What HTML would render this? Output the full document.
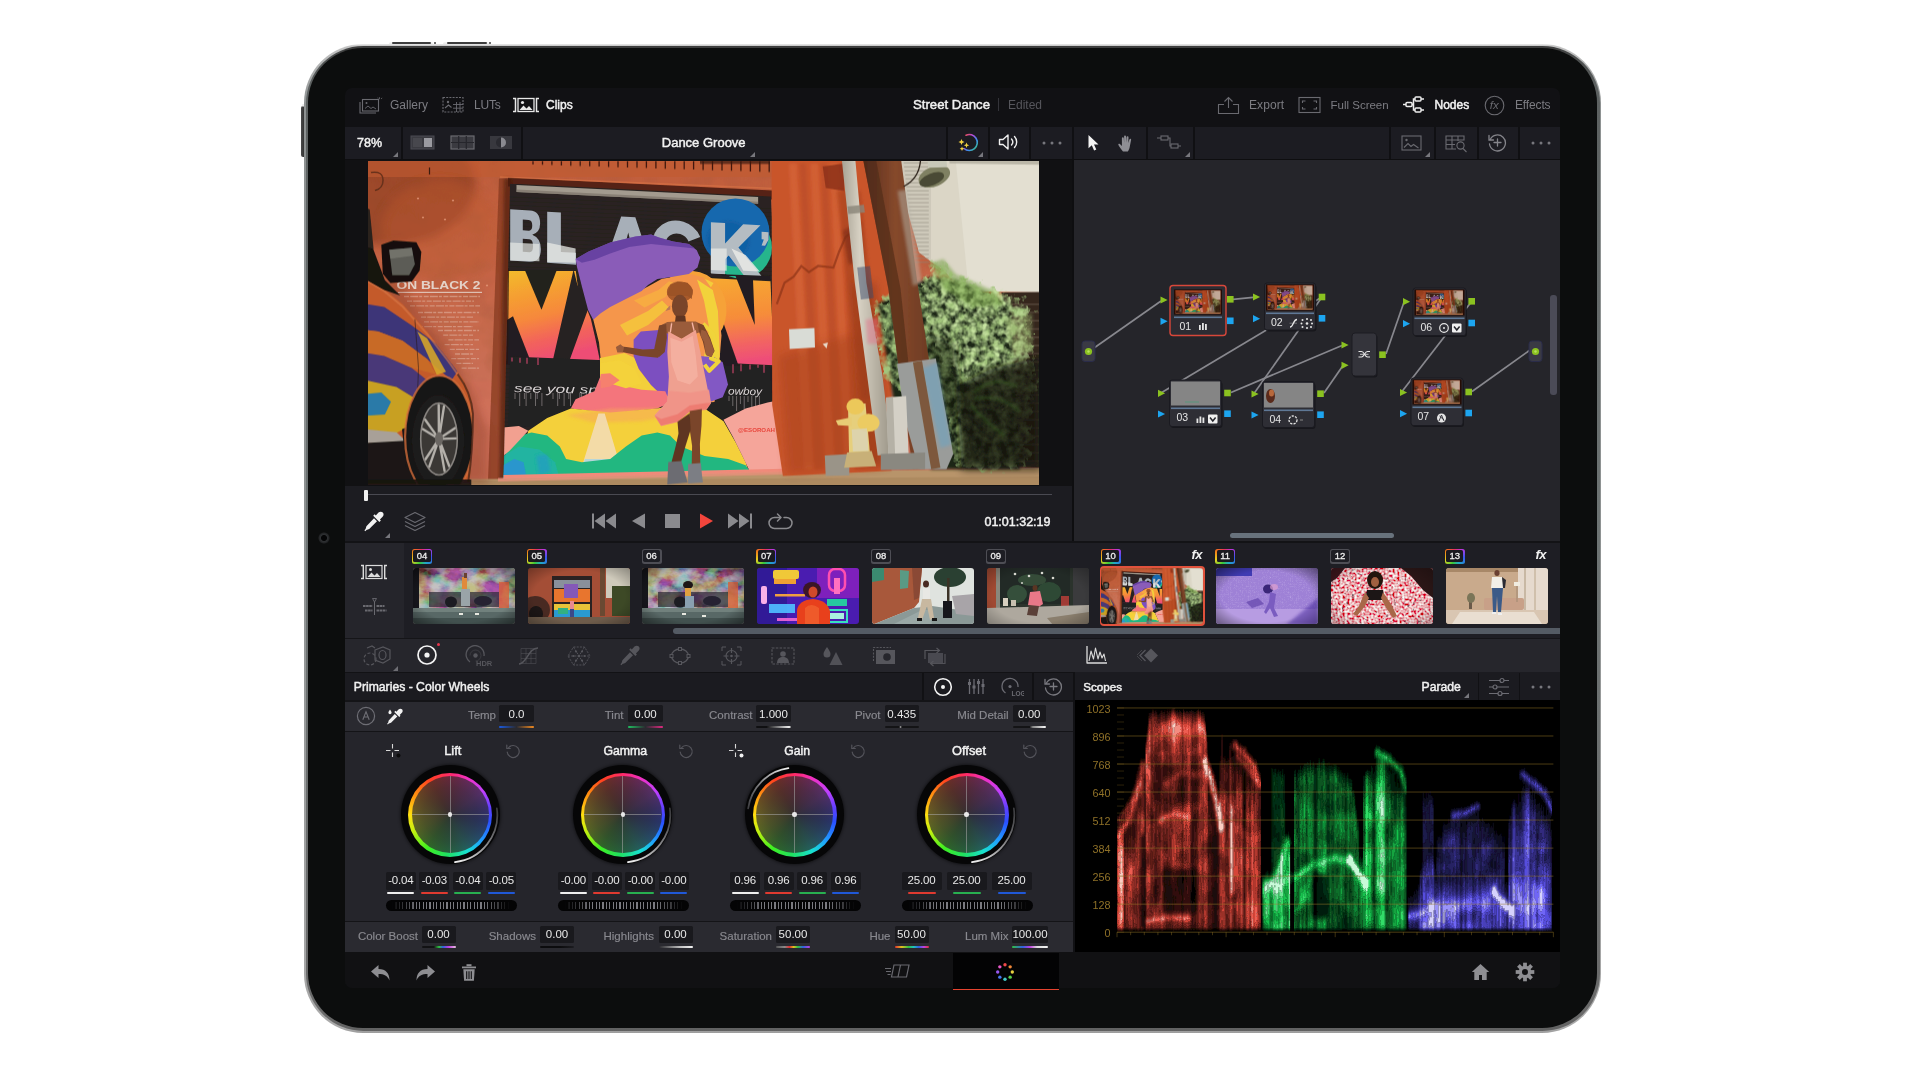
<!DOCTYPE html>
<html><head><meta charset="utf-8"><title>DaVinci Resolve for iPad</title>
<style>
html,body{margin:0;padding:0;background:#fff;}
body{width:1920px;height:1080px;position:relative;overflow:hidden;font-family:"Liberation Sans", sans-serif;}
#root div,#root svg{position:absolute;}
#root{position:absolute;left:0;top:0;width:1920px;height:1080px;overflow:hidden;will-change:transform;}
.t{font-family:"Liberation Sans", sans-serif;}
</style></head><body><div id="root">
<div style="left:389px;top:41.6px;width:44px;height:3.5px;background:linear-gradient(#f4f4f4,#e2e2e2);border-radius:2px 2px 0 0;"></div>
<div style="left:391.5px;top:42.1px;width:39px;height:1.7px;background:#3e3e3e;border-radius:1px;"></div>
<div style="left:433.6px;top:42px;width:2.4px;height:2.2px;background:#3e3e3e;border-radius:1px;"></div>
<div style="left:443px;top:41.6px;width:46px;height:3.5px;background:linear-gradient(#f4f4f4,#e2e2e2);border-radius:2px 2px 0 0;"></div>
<div style="left:446.5px;top:42.1px;width:40px;height:1.7px;background:#3e3e3e;border-radius:1px;"></div>
<div style="left:489px;top:42px;width:2.4px;height:2.2px;background:#3e3e3e;border-radius:1px;"></div>
<div style="left:301px;top:106px;width:4px;height:51px;background:linear-gradient(90deg,#4a4a4a,#2e2e2e);border-radius:2px 0 0 2px;"></div>
<div style="left:301.5px;top:103.5px;width:3px;height:3px;background:#ddd;border-radius:1px;opacity:.6;"></div>
<div style="left:304px;top:44px;width:1297.2px;height:989px;background:linear-gradient(180deg,#ececec 0%,#c4c4c4 0.2%,#8e9292 6%,#8e9292 50%,#aaaaaa 99.5%,#9c9c9c 100%);border-radius:59px;"></div>
<div style="left:305.5px;top:46px;width:1294.2px;height:985px;background:linear-gradient(180deg,#3c3c3c 0%,#4a4c4c 1%,#5c6060 4%,#6e7474 50%,#6a6a6a 98%,#606060 100%);border-radius:57.500px;"></div>
<div style="left:308px;top:48.3px;width:1288.7px;height:979.7px;background:#0c0d0d;border-radius:55px;"></div>
<div style="left:317.8px;top:531.8px;width:12px;height:12px;background:radial-gradient(circle,#050506 30%,#2e3032 42%,#232426 58%,#0c0d0d 72%);border-radius:6px;"></div>
<div style="left:345px;top:88px;width:1214.5px;height:900px;background:#111114;border-radius:7px;"></div>
<svg style="left:359px;top:95.5px;" width="24" height="18" viewBox="0 0 24 18"><g fill="none" stroke="#6a6a70" stroke-width="1.1"><rect x="3.5" y="3.5" width="16" height="11.5"/><path d="M1 6v11h16"/><circle cx="7.5" cy="7" r="1" fill="#6a6a70" stroke="none"/><path d="M6 12.5l3-2.5 3 2.5 2-1.5 3 2" stroke-width="0.9"/><path d="M20.5 1.2v2M22 2.8l1.2-.8M18.8 1.6l.4 1" stroke-width="0.8"/></g></svg>
<div class="t" style="top:97.00px;font-size:12px;color:#7c7c82;line-height:16px;white-space:pre;left:390px;">Gallery</div>
<svg style="left:442px;top:96px;" width="23" height="18" viewBox="0 0 23 18"><g fill="none" stroke="#6a6a70" stroke-width="1.1"><rect x="1" y="1.5" width="20" height="14.5" stroke-dasharray="2 1.2"/><circle cx="6" cy="6" r="1.2" fill="#6a6a70" stroke="none"/><path d="M3 12l3.5-3 3 2.5"/><path d="M11 8.5h10M11 12.2h10M14.5 6v10M18 6v10" stroke-width="0.9"/></g></svg>
<div class="t" style="top:97.00px;font-size:12px;color:#7c7c82;line-height:16px;white-space:pre;letter-spacing:-0.2px;left:474px;">LUTs</div>
<svg style="left:512px;top:96px;" width="28" height="18" viewBox="0 0 28 18"><g fill="none" stroke="#e8e8e8" stroke-width="1.5"><path d="M1 2.5h2.5v13H1M27 2.5h-2.5v13H27"/><rect x="6" y="2.5" width="16" height="13" stroke-width="1.3"/></g><circle cx="10.5" cy="6.5" r="1.6" fill="#e8e8e8"/><path d="M7.5 14l4-4.5 3 3 2.5-2.5 3.5 4z" fill="#e8e8e8"/></svg>
<div class="t" style="top:97.00px;font-size:12px;color:#f2f2f2;line-height:16px;white-space:pre;-webkit-text-stroke:0.45px #f2f2f2;left:546px;">Clips</div>
<div class="t" style="top:97.00px;font-size:13.2px;color:#f2f2f2;line-height:16px;white-space:pre;-webkit-text-stroke:0.45px #f2f2f2;left:851.5px;width:200px;text-align:center;">Street Dance</div>
<div style="left:998px;top:98px;width:1px;height:13px;background:#34343a;"></div>
<div class="t" style="top:97.00px;font-size:12px;color:#56565c;line-height:16px;white-space:pre;left:1008px;">Edited</div>
<svg style="left:1217px;top:95.5px;" width="23" height="19" viewBox="0 0 23 19"><g fill="none" stroke="#6a6a70" stroke-width="1.1"><path d="M7 8.5H1.5v9h20v-9H16"/><path d="M11.5 12V2M7.5 5.5l4-4 4 4"/></g></svg>
<div class="t" style="top:97.00px;font-size:12px;color:#7c7c82;line-height:16px;white-space:pre;letter-spacing:0.1px;left:1249px;">Export</div>
<svg style="left:1298px;top:96px;" width="23" height="18" viewBox="0 0 23 18"><g fill="none" stroke="#6a6a70" stroke-width="1.1"><rect x="1" y="1.5" width="21" height="15"/><path d="M4.5 7V5h3M18.5 7V5h-3M4.5 11v2h3M18.5 11v2h-3"/></g></svg>
<div class="t" style="top:97.00px;font-size:11.5px;color:#7c7c82;line-height:16px;white-space:pre;left:1330.5px;">Full Screen</div>
<svg style="left:1402px;top:95px;" width="24" height="19" viewBox="0 0 24 19"><g fill="none" stroke="#ececec" stroke-width="1.5"><rect x="4" y="7.5" width="6" height="4" rx="1"/><rect x="13" y="2" width="6" height="4" rx="1"/><rect x="13" y="13" width="6" height="4" rx="1"/><path d="M1 9.5h3M10 9.5h1.5V4H13M11.5 9.5V15H13M19 4h3M19 15h3"/></g></svg>
<div class="t" style="top:97.00px;font-size:12px;color:#f2f2f2;line-height:16px;white-space:pre;-webkit-text-stroke:0.5px #f2f2f2;left:1434.5px;">Nodes</div>
<svg style="left:1484px;top:94.5px;" width="21" height="21" viewBox="0 0 21 21"><circle cx="10.5" cy="10.5" r="9.3" fill="none" stroke="#6a6a70" stroke-width="1.1"/><text x="10.200" y="14.300" text-anchor="middle" font-family="Liberation Sans" font-style="italic" font-size="11.500" fill="#6a6a70">fx</text></svg>
<div class="t" style="top:97.00px;font-size:12px;color:#7c7c82;line-height:16px;white-space:pre;letter-spacing:-0.15px;left:1515px;">Effects</div>
<div style="left:345px;top:126.5px;width:1214.5px;height:33px;background:#1c1c22;"></div>
<div style="left:401px;top:126.5px;width:2px;height:33px;background:#101013;"></div>
<div style="left:521px;top:126.5px;width:2px;height:33px;background:#101013;"></div>
<div style="left:946px;top:126.5px;width:2px;height:33px;background:#101013;"></div>
<div style="left:988px;top:126.5px;width:2px;height:33px;background:#101013;"></div>
<div style="left:1029px;top:126.5px;width:2px;height:33px;background:#101013;"></div>
<div style="left:1071.5px;top:126.5px;width:2px;height:33px;background:#101013;"></div>
<div style="left:1146px;top:126.5px;width:2px;height:33px;background:#101013;"></div>
<div style="left:1193px;top:126.5px;width:2px;height:33px;background:#101013;"></div>
<div style="left:1389px;top:126.5px;width:2px;height:33px;background:#101013;"></div>
<div style="left:1434px;top:126.5px;width:2px;height:33px;background:#101013;"></div>
<div style="left:1476.5px;top:126.5px;width:2px;height:33px;background:#101013;"></div>
<div style="left:1518px;top:126.5px;width:2px;height:33px;background:#101013;"></div>
<div style="left:345px;top:158.5px;width:1214.5px;height:1.5px;background:#0e0e10;"></div>
<div class="t" style="top:134.50px;font-size:12.5px;color:#f2f2f2;line-height:16px;white-space:pre;-webkit-text-stroke:0.45px #f2f2f2;left:357px;">78%</div>
<svg style="left:392.5px;top:151.5px;" width="5" height="5" viewBox="0 0 5 5"><path d="M5 0v5H0z" fill="#77777d"/></svg>
<svg style="left:410px;top:134px;" width="26" height="17" viewBox="0 0 26 17"><rect x="1" y="2" width="23" height="13" fill="#3a3a40" stroke="#4b4b52" stroke-width="1"/><rect x="3" y="4" width="9" height="9" fill="#47474d"/><rect x="14" y="4" width="8" height="9" fill="#9a9aa0"/></svg>
<svg style="left:450px;top:134px;" width="26" height="17" viewBox="0 0 26 17"><rect x="1" y="2" width="23" height="13" fill="#3a3a40" stroke="#6a6a70" stroke-width="1.2"/><path d="M1 8.5h23M8.7 2v13M16.3 2v13" stroke="#26262c" stroke-width="1.2"/></svg>
<svg style="left:489px;top:134px;" width="25" height="17" viewBox="0 0 25 17"><rect x="1" y="2" width="22" height="13" fill="#38383e"/><path d="M12 3.5a5 5 0 0 1 0 10z" fill="#8a8a90"/><path d="M12 3.5a5 5 0 0 0 0 10z" fill="#2a2a30"/></svg>
<div class="t" style="top:134.50px;font-size:13px;color:#f2f2f2;line-height:16px;white-space:pre;-webkit-text-stroke:0.45px #f2f2f2;left:603.7px;width:200px;text-align:center;">Dance Groove</div>
<svg style="left:750px;top:151.5px;" width="5" height="5" viewBox="0 0 5 5"><path d="M5 0v5H0z" fill="#77777d"/></svg>
<svg style="left:957px;top:131px;" width="24" height="23" viewBox="0 0 24 23"><defs><linearGradient id="cg" x1="0" y1="0" x2="1" y2="1"><stop offset="0" stop-color="#f0503c"/><stop offset=".35" stop-color="#b44be0"/><stop offset=".65" stop-color="#3c8cf0"/><stop offset="1" stop-color="#3cd070"/></linearGradient></defs>
<path d="M9 4.2A8 8 0 1 1 7 17.5" fill="none" stroke="url(#cg)" stroke-width="1.6" stroke-linecap="round"/>
<path d="M4.5 8l.9 2.1 2.1.9-2.1.9-.9 2.1-.9-2.1-2.1-.9 2.1-.9z" fill="#f4d240"/><path d="M9.5 11.5l.8 1.9 1.9.8-1.9.8-.8 1.9-.8-1.9-1.9-.8 1.9-.8z" fill="#f4d240"/><path d="M5 15.5l.7 1.6 1.6.7-1.6.7-.7 1.6-.7-1.6-1.6-.7 1.6-.7z" fill="#f4d240"/></svg>
<svg style="left:978px;top:151.5px;" width="5" height="5" viewBox="0 0 5 5"><path d="M5 0v5H0z" fill="#77777d"/></svg>
<svg style="left:998px;top:133px;" width="22" height="18" viewBox="0 0 22 18"><g fill="none" stroke="#f0f0f0" stroke-width="1.4" stroke-linejoin="round" stroke-linecap="round"><path d="M1.5 6.5h3.5l5-4.5v14l-5-4.5H1.5z"/><path d="M13.5 6a4.5 4.5 0 0 1 0 6"/><path d="M16.5 3.5a8 8 0 0 1 0 11"/></g></svg>
<svg style="left:1042px;top:140.5px;" width="20" height="4" viewBox="0 0 20 4"><circle cx="2" cy="2" r="1.5" fill="#77777d"/><circle cx="10" cy="2" r="1.5" fill="#77777d"/><circle cx="18" cy="2" r="1.5" fill="#77777d"/></svg>
<svg style="left:1087px;top:134px;" width="13" height="18" viewBox="0 0 13 18"><path d="M1.5 1v13.2l3.3-3 2.3 5.3 2.2-1-2.3-5.1h4.5z" fill="#f4f4f4"/></svg>
<svg style="left:1117px;top:133.5px;" width="20" height="19" viewBox="0 0 20 19"><path d="M6 17.5c-1.5-1.6-3.7-4.6-4.6-6.4-.5-1 .6-1.8 1.5-1.1l2 1.9V4.3c0-1.3 1.8-1.3 1.9 0l.3 4.3V2.4c0-1.3 1.9-1.3 2 0v6.1l.5-5.2c.1-1.3 1.9-1.2 1.9.1l-.2 5.6 1.1-3.5c.4-1.2 2-.7 1.7.5l-1.3 6.5c-.3 2-1 3.700-2 5z" fill="#8e8e94"/></svg>
<svg style="left:1156px;top:134px;" width="27" height="18" viewBox="0 0 27 18"><g fill="none" stroke="#6a6a70" stroke-width="1.1"><rect x="5" y="2" width="7" height="4"/><rect x="15" y="10" width="7" height="4"/><path d="M1 4h4M12 4h2v8h1M22 12h3"/></g></svg>
<svg style="left:1184.5px;top:151.5px;" width="5" height="5" viewBox="0 0 5 5"><path d="M5 0v5H0z" fill="#77777d"/></svg>
<svg style="left:1401px;top:134.5px;" width="22" height="17" viewBox="0 0 22 17"><g fill="none" stroke="#6a6a70" stroke-width="1.1"><rect x="1" y="1" width="19" height="14"/><circle cx="5.5" cy="5" r="1.2" fill="#6a6a70" stroke="none"/><path d="M3 12.5l4-4 3 3 2.500-2 5 3.500"/></g></svg>
<svg style="left:1424.5px;top:151.5px;" width="5" height="5" viewBox="0 0 5 5"><path d="M5 0v5H0z" fill="#77777d"/></svg>
<svg style="left:1445px;top:134.5px;" width="24" height="18" viewBox="0 0 24 18"><g fill="none" stroke="#6a6a70" stroke-width="1.1"><path d="M1 1h18v4H1zM1 5v9h10M1 9.500h9M7 1v13M13 1v5"/><circle cx="15.5" cy="10.500" r="3.600"/><path d="M18 13.500l3.500 3.500"/></g></svg>
<svg style="left:1487px;top:133px;" width="21" height="19" viewBox="0 0 21 19"><g fill="none" stroke="#85858b" stroke-width="1.3" stroke-linecap="round"><path d="M3.200 6.500A8 8 0 1 1 2.500 11"/><path d="M2 2.500v4.500h4.500"/><path d="M10.500 6v7M7 9.500h7"/></g></svg>
<svg style="left:1530.5px;top:140.5px;" width="20" height="4" viewBox="0 0 20 4"><circle cx="2" cy="2" r="1.5" fill="#77777d"/><circle cx="10" cy="2" r="1.5" fill="#77777d"/><circle cx="18" cy="2" r="1.5" fill="#77777d"/></svg>
<div style="left:345px;top:159.5px;width:728px;height:327px;background:#111113;"></div>
<div style="left:345px;top:486px;width:728px;height:54.5px;background:#1c1c21;"></div>
<div style="left:365px;top:493.5px;width:687px;height:1.2px;background:#4a4a52;"></div>
<div style="left:364px;top:489.5px;width:4px;height:11px;background:#f0f0f0;border-radius:1px;"></div>
<svg style="left:363px;top:511px;" width="22" height="21" viewBox="0 0 22 21"><g fill="#f2f2f2"><path d="M15.500 1.600c1.300-1.300 3.200-1.200 4.300-.1s1.100 3-.2 4.300l-2.700 2.700 1 1-1.500 1.500-6.200-6.200 1.500-1.500 1.100 1.100z"/><path d="M11 7.300l3 3-7.800 7.800-2.700.9-1.200 1.200-.9-.9 1.200-1.200.8-2.800z"/></g></svg>
<svg style="left:385px;top:533px;" width="5" height="5" viewBox="0 0 5 5"><path d="M5 0v5H0z" fill="#77777d"/></svg>
<svg style="left:403px;top:511px;" width="24" height="20" viewBox="0 0 24 20"><g fill="none" stroke="#6a6a70" stroke-width="1.2" stroke-linejoin="round"><path d="M12 1.500l10 5-10 5-10-5z"/><path d="M2 10.500l10 5 10-5M2 14.500l10 5 10-5"/></g></svg>
<svg style="left:591px;top:513px;" width="26" height="16" viewBox="0 0 26 16"><g fill="#8a8a8e"><rect x="1" y="0.500" width="2" height="15"/><path d="M14 0.500v15L3.500 8zM25 0.500v15L14.500 8z"/></g></svg>
<svg style="left:631px;top:513px;" width="15" height="16" viewBox="0 0 15 16"><path d="M14 0.500v15L1 8z" fill="#8a8a8e"/></svg>
<div style="left:665px;top:514px;width:14.5px;height:14px;background:#8a8a8e;"></div>
<svg style="left:699px;top:513px;" width="15" height="16" viewBox="0 0 15 16"><path d="M1 0.500v15L14 8z" fill="#f2453c"/></svg>
<svg style="left:727px;top:513px;" width="26" height="16" viewBox="0 0 26 16"><g fill="#8a8a8e"><rect x="23" y="0.500" width="2" height="15"/><path d="M12 0.500v15L22.500 8zM1 0.500v15L11.500 8z"/></g></svg>
<svg style="left:768px;top:511.5px;" width="25" height="19" viewBox="0 0 25 19"><g fill="none" stroke="#8a8a8e" stroke-width="1.500" stroke-linecap="round" stroke-linejoin="round"><path d="M16 5.500h2.500a5.500 5.500 0 0 1 0 11h-12a5.500 5.500 0 0 1 0-11H12"/><path d="M9.500 2l3.500 3.500-3.500 3.500"/></g></svg>
<div class="t" style="top:514.00px;font-size:12.5px;color:#f2f2f2;line-height:16px;white-space:pre;-webkit-text-stroke:0.45px #f2f2f2;right:869.5px;text-align:right;">01:01:32:19</div>
<svg style="left:368px;top:160.500px" width="671" height="324" viewBox="368 160.500 671 324"><defs>
<filter id="pb" x="-2%" y="-2%" width="104%" height="104%"><feGaussianBlur stdDeviation="0.55"/></filter>
<filter id="pb2" x="-10%" y="-10%" width="120%" height="120%"><feGaussianBlur stdDeviation="1.6"/></filter>
<filter id="pb4" x="-20%" y="-20%" width="140%" height="140%"><feGaussianBlur stdDeviation="4"/></filter>
<filter id="leaf" x="-10%" y="-10%" width="120%" height="120%"><feTurbulence type="fractalNoise" baseFrequency="0.12" numOctaves="3" seed="4" result="n"/><feColorMatrix in="n" type="matrix" values="0 0 0 0 0.36  0 0 0 0 0.55  0 0 0 0 0.20  0 2.4 0 0 -0.74" result="c"/><feDisplacementMap in="SourceGraphic" in2="n" scale="22" xChannelSelector="R" yChannelSelector="B" result="sg"/><feComposite in="c" in2="sg" operator="in"/></filter>
<filter id="leaf2" x="-10%" y="-10%" width="120%" height="120%"><feTurbulence type="fractalNoise" baseFrequency="0.17" numOctaves="2" seed="9" result="n"/><feColorMatrix in="n" type="matrix" values="0 0 0 0 0.58  0 0 0 0 0.78  0 0 0 0 0.36  0 0 2.6 0 -1.08" result="c"/><feDisplacementMap in="SourceGraphic" in2="n" scale="18" xChannelSelector="G" yChannelSelector="R" result="sg"/><feComposite in="c" in2="sg" operator="in"/></filter>
<filter id="wall" x="0" y="0" width="100%" height="100%"><feTurbulence type="fractalNoise" baseFrequency="0.035 0.05" numOctaves="3" seed="2" result="n"/><feColorMatrix in="n" type="matrix" values="0 0 0 0 0.35  0 0 0 0 0.10  0 0 0 0 0.04  0 0 1.6 0 -0.62" result="c"/><feComposite in="c" in2="SourceGraphic" operator="in"/></filter>
<linearGradient id="wallg" x1="0" y1="0" x2="0" y2="1"><stop offset="0" stop-color="#c15d3b"/><stop offset=".35" stop-color="#c56445"/><stop offset=".55" stop-color="#c96c50"/><stop offset=".8" stop-color="#c9725c"/><stop offset="1" stop-color="#c6735e"/></linearGradient>
<linearGradient id="mong" x1="0" y1="0" x2="0.25" y2="1"><stop offset="0" stop-color="#f2bc2c"/><stop offset=".25" stop-color="#f5a230"/><stop offset=".55" stop-color="#f6883c"/><stop offset=".8" stop-color="#f2625c"/><stop offset="1" stop-color="#ee4e74"/></linearGradient>
<linearGradient id="mong2" x1="0" y1="0" x2="0.1" y2="1"><stop offset="0" stop-color="#f7aa30"/><stop offset=".5" stop-color="#f68c3a"/><stop offset=".8" stop-color="#f26462"/><stop offset="1" stop-color="#ee4e78"/></linearGradient>
<linearGradient id="pipeg" x1="0" y1="0" x2="1" y2="0"><stop offset="0" stop-color="#a8a294"/><stop offset=".35" stop-color="#d6d0c2"/><stop offset="1" stop-color="#9a9486"/></linearGradient>
<linearGradient id="poleg" x1="0" y1="0" x2="1" y2="0"><stop offset="0" stop-color="#5a2e1c"/><stop offset=".45" stop-color="#86492c"/><stop offset="1" stop-color="#6a3a22"/></linearGradient>
<linearGradient id="carg" x1="0" y1="0" x2="0" y2="1"><stop offset="0" stop-color="#e07828"/><stop offset="1" stop-color="#c85a20"/></linearGradient>
<clipPath id="doorclip"><polygon points="510,183 771,196 783.5,472.5 503.5,478.5"/></clipPath>
<clipPath id="photoclip"><rect x="368" y="160.5" width="671" height="324"/></clipPath>
</defs><g id="photoroot" clip-path="url(#photoclip)"><g filter="url(#pb)"><rect x="366" y="158" width="676" height="330" fill="url(#wallg)"/><rect x="366" y="158" width="676" height="330" fill="#7a2410" filter="url(#wall)" opacity=".45"/><ellipse cx="385" cy="185" rx="90" ry="60" fill="#7a3018" opacity=".5" filter="url(#pb4)"/><rect x="366" y="158" width="520" height="19" fill="#c25a30" opacity=".6"/><path d="M533.0 160.500v3.5M542.5 160.500v3.8M551.9 160.500v4.1M561.4 160.500v4.4M570.8 160.500v4.7M580.2 160.500v5.0M589.7 160.500v5.3M599.1 160.500v5.6M608.6 160.500v5.9M618.0 160.500v6.2M627.5 160.500v6.5M637.0 160.500v6.8M646.4 160.500v7.1M655.9 160.500v7.4M665.3 160.500v7.7M674.8 160.500v8.0M684.2 160.500v8.3M693.6 160.500v8.6M703.1 160.500v8.9M712.5 160.500v9.2M722.0 160.500v9.5M731.5 160.500v9.8M740.9 160.500v10.1M750.4 160.500v10.4M759.8 160.500v10.7M769.2 160.500v11.0M778.7 160.500v11.3M788.1 160.500v11.6M797.6 160.500v11.9M807.0 160.500v12.2M816.5 160.500v12.5M826.0 160.500v12.8M835.4 160.500v13.1" stroke="#2a0e08" stroke-width="1.300" opacity=".85"/><rect x="700" y="160" width="70" height="3.500" fill="#3a1a10" opacity=".7"/><ellipse cx="440" cy="230" rx="60" ry="50" fill="#bd5a30" opacity=".4" filter="url(#pb4)"/><rect x="470" y="380" width="40" height="104" fill="#d4705a" opacity=".6" filter="url(#pb2)"/><circle cx="418" cy="198" r="1.100" fill="#e8a080" opacity=".7"/><circle cx="453" cy="200" r="1.100" fill="#e8a080" opacity=".7"/><circle cx="423" cy="217" r="1.100" fill="#e8a080" opacity=".7"/><circle cx="445" cy="219" r="1.100" fill="#e8a080" opacity=".7"/><circle cx="498" cy="240" r="1.100" fill="#e8a080" opacity=".7"/><circle cx="487" cy="285" r="1.100" fill="#e8a080" opacity=".7"/><path d="M371 172q12 -2 12 8q0 8 -8 10" fill="none" stroke="#5a2a18" stroke-width="1.500" opacity=".8"/><path d="M429.500 167v7" stroke="#3a1a10" stroke-width="1.200"/><text x="396.500" y="288.600" font-family="Liberation Sans" font-weight="bold" font-size="10.400" fill="#e4d2c8" textLength="84" lengthAdjust="spacingAndGlyphs">ON BLACK 2</text><rect x="398" y="291.300" width="84" height="1.100" fill="#e8dcd4" opacity=".85"/><path d="M404.0 296.0H480M407.0 300.7H474M410.0 305.4H480M418.0 312.0H479M421.0 316.7H473M424.0 321.4H479M418.0 326.1H473M438.0 330.0H479M443.2 334.7H473M448.4 339.4H479M444.6 344.1H473M449.8 348.8H479M455.0 353.5H473M451.2 358.2H479M456.4 362.9H473M461.6 367.6H479" stroke="#ecd0c0" stroke-width="1.300" stroke-dasharray="5 1.200 8 1 3 1.500" opacity=".42"/><polygon points="499,178 510,178 506,480 488,480" fill="#8a3c22" opacity=".8" filter="url(#pb)"/><polygon points="504,178 512,178 508,480 499,480" fill="#4a1c10" opacity=".6" filter="url(#pb2)"/><polygon points="508,177 772,190 772,199 508,186" fill="#4a1c0e" opacity=".9"/><path d="M500 176.500L775 188" stroke="#e07a4a" stroke-width="1.500" opacity=".5"/><g clip-path="url(#doorclip)"><polygon points="500,183 780,190 790,480 498,485" fill="#2a2422" /><path d="M500 196.0L790 209.0M500 200.1L790 212.9M500 204.2L790 216.8M500 208.3L790 220.7M500 212.4L790 224.7M500 216.5L790 228.6M500 220.6L790 232.5M500 224.7L790 236.4M500 228.8L790 240.3M500 232.9L790 244.2M500 237.0L790 248.1M500 241.1L790 252.1M500 245.2L790 256.0M500 249.3L790 259.9M500 253.4L790 263.8M500 257.5L790 267.7M500 261.6L790 271.6M500 265.7L790 275.5M500 269.8L790 279.5M500 273.9L790 283.4M500 278.0L790 287.3M500 282.1L790 291.2M500 286.2L790 295.1M500 290.3L790 299.0M500 294.4L790 302.9M500 298.5L790 306.9M500 302.6L790 310.8M500 306.7L790 314.7M500 310.8L790 318.6M500 314.9L790 322.5M500 319.0L790 326.4M500 323.1L790 330.3M500 327.2L790 334.3M500 331.3L790 338.2M500 335.4L790 342.1M500 339.5L790 346.0M500 343.6L790 349.9M500 347.7L790 353.8M500 351.8L790 357.7M500 355.9L790 361.7M500 360.0L790 365.6M500 364.1L790 369.5M500 368.2L790 373.4M500 372.3L790 377.3M500 376.4L790 381.2M500 380.5L790 385.1M500 384.6L790 389.1M500 388.7L790 393.0M500 392.8L790 396.9M500 396.9L790 400.8M500 401.0L790 404.7M500 405.1L790 408.6M500 409.2L790 412.5M500 413.3L790 416.5M500 417.4L790 420.4M500 421.5L790 424.3M500 425.6L790 428.2M500 429.7L790 432.1M500 433.8L790 436.0M500 437.9L790 439.9M500 442.0L790 443.9M500 446.1L790 447.8M500 450.2L790 451.7M500 454.3L790 455.6M500 458.4L790 459.5M500 462.5L790 463.4M500 466.6L790 467.3M500 470.7L790 471.3M500 474.8L790 475.2M500 478.9L790 479.1" stroke="#000" stroke-width=".5" opacity=".22"/><polygon points="516.5,184.4 758.1,196.5 758.1,203.3 516.5,191.5" fill="#a39b8f" /><polygon points="516.5,189.1 758.1,201.2 758.1,203.3 516.5,191.5" fill="#7c7468" opacity=".7"/><g transform="translate(510.200,208.800) matrix(1 0.0640 0 1 0 0) scale(0.15741)" fill="#a7afb8"><path d="M0 0H125Q190 0 190 78Q190 135 140 152Q195 170 195 240Q195 325 120 325H0Z M80 60V128H118Q140 128 140 94Q140 60 118 60Z M80 182V265H122Q145 265 145 224Q145 182 122 182Z" fill-rule="evenodd"/><path d="M235 0H322V250H418V325H235Z"/><path d="M595 325L705 0H795L905 325H812L792 258H708L688 325Z M728 190H772L750 100Z" fill-rule="evenodd"/><path d="M1150 120 A118 118 0 1 0 1150 215" fill="none" stroke="#a7afb8" stroke-width="82" transform="translate(20,-5)"/><path d="M1275 0H1365V130L1480 0H1590L1450 150L1598 325H1485L1388 205L1365 230V325H1275Z"/><path d="M1597 40h44v48l-22 40h-22l14-40h-14z"/></g><circle cx="741" cy="247" r="31" fill="#27b58c"/><circle cx="735.500" cy="232" r="34" fill="#1668ae"/><ellipse cx="728" cy="240" rx="22" ry="20" fill="#115a9c" opacity=".5" filter="url(#pb2)"/><g transform="translate(510.200,208.800) matrix(1 0.0640 0 1 0 0) scale(0.15741)" fill="#b4bcc2"><path d="M1275 0H1365V130L1480 0H1590L1450 150L1598 325H1485L1388 205L1365 230V325H1275Z"/><path d="M1597 40h44v48l-22 40h-22l14-40h-14z"/></g><polygon points="710.9,248.1 726.7,248.1 726.7,270.2 710.9,269.4" fill="#e8eae6" opacity=".75"/><polygon points="731.4,248.1 745.6,254.4 759.7,271.0 743.2,270.2" fill="#ecece8" opacity=".8"/><polygon points="510.2,241.9 539.4,243.4 539.4,260.7 510.2,260.0" fill="#e6e8e4" opacity=".7"/><polygon points="547.2,241.9 575.6,248.1 575.6,262.3 547.2,261.5" fill="#e8eae6" opacity=".75"/><polygon points="505.2,270.4 575.8,270.6 577.8,285.9 590.8,318.3 595.3,337.8 600.5,363.1 505.2,362.4" fill="url(#mong)" /><polygon points="524.6,269.1 541.5,309.3 557.0,269.1" fill="#24201f" /><polygon points="573.6,269.1 577.4,284.6 589.5,304.7 568.1,363.7 551.9,363.7" fill="#262222" /><polygon points="502.6,322.2 513.0,315.8 531.8,363.7 502.6,363.7" fill="#241f20" /><polygon points="502.6,267.8 509.1,267.8 507.8,363.7 502.6,363.7" fill="#2a1512" opacity=".75"/><polygon points="702.3,277.3 770.5,280.8 774.0,364.8 702.3,361.3" fill="url(#mong2)" /><polygon points="721.5,275.5 735.5,275.5 754.8,324.5 753.0,279.0 770.5,280.1 770.5,275.5 721.5,273.8" fill="#231f20" /><polygon points="718.0,307.0 739.0,366.5 718.0,366.5" fill="#231f20" /><ellipse cx="690" cy="310" rx="30" ry="33" fill="none" stroke="#f6a238" stroke-width="13" transform="rotate(4 690 310)"/><path d="M672 287 Q690 272 712 285" fill="none" stroke="#f4cc3a" stroke-width="6"/><polygon points="509.8,356.0 775.8,366.5 777.5,433.0 508.0,426.0" fill="#232021" /><path d="M428 356.1v3M433 356.2v4M441 356.3v5M452 356.4v6M463 356.5v7M470 356.6v8M478 356.7v3M512 357.1v4M520 357.2v5M527 357.3v6M538 357.4v7M700 363.0v3M706 363.1v8M714 363.3v6M722 363.4v4M733 363.7v9M741 363.8v7M750 364.0v5M758 364.2v3M764 364.3v8" stroke="#e8507a" stroke-width="1.200" opacity=".8"/><text x="514" y="391.500" font-family="Liberation Sans" font-size="11.500" fill="#d8d4d4" transform="rotate(1.200 514 391)" textLength="84" lengthAdjust="spacingAndGlyphs" style="font-style:italic">see you sp</text><text x="728" y="394" font-family="Liberation Sans" font-size="10.500" fill="#d8d4d4" transform="rotate(1.200 728 394)" textLength="34" lengthAdjust="spacingAndGlyphs" style="font-style:italic">owboy</text><path d="M515.0 392.500v6M519.7 392.500v13M524.4 392.500v6M526.1 392.500v13M530.8 392.500v6M535.5 392.500v13M537.2 392.500v6M541.9 392.500v13M553.0 392.500v6M557.7 392.500v13M559.4 392.500v6M564.1 392.500v13M568.8 392.500v6M570.5 392.500v13M579.9 392.500v13M581.6 392.500v6M586.3 392.500v13M591.0 392.500v6M592.7 392.500v13M729.0 395.500v5M732.8 395.500v10M736.6 395.500v15M740.4 395.500v8M744.2 395.500v13M748.0 395.500v6M751.8 395.500v11M755.6 395.500v16M759.4 395.500v9" stroke="#d0cccc" stroke-width=".8" opacity=".55"/><polygon points="592.0,314.0 613.0,303.5 634.0,293.0 648.0,286.0 662.0,278.3 691.8,273.8 704.0,277.3 712.8,289.5 718.0,307.0 721.5,335.0 719.8,356.0 718.0,377.0 714.5,401.5 669.0,405.0 613.0,405.0 599.0,401.5 601.8,370.0 599.0,342.0" fill="#f5964c" /><polygon points="620.0,324.5 648.0,310.5 662.0,300.0 669.0,307.0 648.0,324.5 627.0,335.0" fill="#f4c83c" opacity=".85"/><polygon points="634.0,300.0 658.5,289.5 669.0,280.8 676.0,282.5 665.5,296.5 644.5,307.0" fill="#f7b040" opacity=".8"/><polygon points="697.0,279.0 712.8,289.5 718.0,310.5 719.8,356.0 714.5,370.0 704.0,356.0 709.3,328.0 704.0,300.0" fill="#f2d23a" /><polygon points="575.6,258.4 588.1,251.3 610.2,241.9 635.4,235.9 651.1,234.0 659.0,237.1 673.1,241.1 688.9,243.4 696.8,249.7 700.2,257.6 697.5,267.0 688.9,273.6 673.1,276.2 657.4,278.4 648.0,284.4 641.7,290.6 625.9,298.5 610.2,306.4 600.7,312.7 593.2,319.3 588.1,309.5 581.9,285.9 577.1,267.0" fill="#8a5cb8" /><polygon points="610.2,241.9 635.4,235.9 651.1,234.0 659.0,237.1 673.1,241.1 688.9,243.4 695.2,248.1 673.1,245.8 651.1,243.4 629.1,246.6 610.2,252.9 594.4,259.2 581.9,262.3 575.6,258.4 588.1,251.3" fill="#5e3d9c" opacity=".8"/><polygon points="600.0,357.6 624.5,352.6 634.7,357.6 639.7,369.9 651.0,384.1 665.2,398.4 661.1,404.5 600.0,394.3" fill="#f3cf3a" /><polygon points="633.6,339.3 640.8,331.1 659.1,329.5 670.3,331.1 671.3,392.3 665.2,398.0 651.0,384.6 638.7,368.2 633.6,355.6" fill="#7b50c0" /><polygon points="697.8,355.6 714.1,356.6 722.7,361.7 728.0,384.1 722.7,396.8 711.1,400.9 701.9,392.3 695.8,371.9" fill="#8258c4" /><polygon points="600.7,375.1 610.2,371.9 619.6,378.2 625.9,386.1 641.7,389.3 665.3,390.8 670.0,401.9 657.4,408.1 610.2,412.9 570.8,408.1 575.6,398.7 594.4,390.8" fill="#f4747c" /><polygon points="600.7,362.5 619.6,359.4 633.8,367.2 641.7,383.0 625.9,387.7 610.2,383.0 600.7,379.8" fill="#f4d23a" /><polygon points="600.7,373.5 610.2,372.7 619.6,379.8 610.2,386.1 600.7,387.7" fill="#f6806e" /><polygon points="528.3,430.2 547.2,417.6 570.8,408.1 610.2,412.1 657.4,408.1 673.1,405.0 704.6,408.1 723.5,420.7 736.1,442.8 745.6,461.7 748.7,471.1 625.9,477.4 515.7,477.4" fill="#f4d03a" /><polygon points="566.1,414.4 610.2,408.1 657.4,407.4 673.1,414.4 641.7,420.7 594.4,422.3" fill="#f7a85a" opacity=".55" filter="url(#pb2)"/><polygon points="598.4,412.9 604.7,412.9 622.0,471.1 580.3,471.1" fill="#f3dcb4" opacity=".9"/><polygon points="585.0,458.5 618.1,458.5 622.0,471.1 580.3,471.1" fill="#a6d4e6" opacity=".8"/><polygon points="506.3,445.9 515.7,436.5 531.5,432.1 547.2,434.9 559.8,445.9 566.1,458.5 581.9,461.7 610.2,458.5 625.9,445.9 641.7,434.9 657.4,432.1 670.0,434.9 681.0,445.9 704.6,455.4 728.2,458.5 745.6,464.8 750.3,471.1 750.3,479.0 503.1,479.0" fill="#22b780" /><polygon points="503.1,455.4 518.9,445.9 539.4,449.1 555.1,461.7 559.8,479.0 501.6,479.0" fill="#20b4a4" opacity=".9"/><polygon points="503.1,464.8 514.2,458.5 523.6,461.7 526.8,479.0 501.6,479.0" fill="#2c8ed8" opacity=".8"/><polygon points="536.2,455.4 547.2,453.8 550.4,471.1 539.4,474.3" fill="#2c8ed8" opacity=".45" filter="url(#pb2)"/><polygon points="723.5,419.2 745.6,408.1 767.6,401.9 784.9,398.7 785.7,471.9 750.3,471.9 742.4,455.4 733.0,436.5" fill="#f5a59a" /><text x="738" y="431.500" font-family="Liberation Sans" font-weight="bold" font-size="5.600" fill="#e8463c" textLength="37" lengthAdjust="spacingAndGlyphs">@ESOROAH</text><polygon points="503.1,427.0 518.9,425.5 528.3,430.2 509.4,450.6 503.1,455.4" fill="#f2a090" /><path d="M703.1,323.1 L712.5,332.6 L717.2,348.3 L710.9,357.8 L718.8,360.9 L709.3,370.4 L704.6,364.1" fill="none" stroke="#f0d43a" stroke-width="4" stroke-linejoin="round"/><polygon points="498,474.500 790,468 790,473 498,480" fill="#f08a7a" /></g><polygon points="366,478.500 500,478.500 790,471.500 1042,468 1042,490 366,490" fill="#b8946a" /><polygon points="366,481 1042,476 1042,490 366,490" fill="#a8865e" opacity=".7"/><polygon points="498,477.500 786,470.500 786,474 498,481" fill="#e8907c" opacity=".8"/><polygon points="771.6,160.0 891.5,160.0 891.5,470.3 782.9,475.5 772.2,404.6" fill="#c9552c" /><polygon points="789.0,163.1 796.7,163.1 813.5,468.8 804.3,468.8" fill="#dc6c3c" opacity="0.5" filter="url(#pb2)"/><polygon points="810.4,163.1 818.1,163.1 834.9,468.8 825.7,468.8" fill="#dc6c3c" opacity="0.45" filter="url(#pb2)"/><polygon points="829.7,163.1 837.0,163.1 853.9,468.8 845.0,468.8" fill="#dc6c3c" opacity="0.45" filter="url(#pb2)"/><polygon points="799.7,163.1 805.9,163.1 822.7,468.8 815.0,468.8" fill="#b04a26" opacity="0.4" filter="url(#pb2)"/><polygon points="820.5,163.1 826.6,163.1 843.5,468.8 835.8,468.8" fill="#b04a26" opacity="0.4" filter="url(#pb2)"/><polygon points="840.1,163.1 847.1,163.1 863.9,468.8 855.4,468.8" fill="#b24a26" opacity="0.45" filter="url(#pb2)"/><polygon points="822.7,166.1 844.1,163.1 844.1,190.6 825.7,187.5" fill="#8a3018" opacity=".8"/><polygon points="836.4,190.6 860.9,190.6 882.3,395.4 860.9,398.5" fill="#a8421f" opacity=".5" filter="url(#pb2)"/><path d="M776.8,303.7 L784.5,282.3 L793.6,276.2 L801.3,265.5 L808.9,271.6 L818.1,265.5 L833.4,267.0 L838.9,251.7 L845.6,236.4 L851.7,231.8" fill="none" stroke="#8a3218" stroke-width="2.200" opacity=".65" filter="url(#pb)"/><polygon points="842.5,230.3 860.9,221.1 863.9,260.9 848.7,263.9" fill="#7a2c14" opacity=".6" filter="url(#pb2)"/><polygon points="778.3,355.7 860.9,331.2 879.2,465.7 787.5,473.4" fill="#a8421f" opacity=".5" filter="url(#pb4)"/><polygon points="851.7,282.3 876.2,282.3 888.4,465.7 863.9,465.7" fill="#8a3418" opacity=".45" filter="url(#pb4)"/><polygon points="789.0,328.8 814.4,327.5 815.0,347.1 789.7,348.6" fill="#d9dcd6" /><polygon points="822.7,343.4 827.9,341.9 826.6,348.0" fill="#e8d8c8" /><polygon points="899.1,160.0 1041.3,160.0 1041.3,292.1 974.0,290.8 955.7,282.3 943.4,270.1 931.2,260.9 919.0,251.7" fill="#e3dfd1" /><polygon points="899.1,160.0 931.2,160.0 931.2,260.9 919.0,251.7 903.7,196.7" fill="#cec9ba" /><path d="M903.7,162.4 L928.8,162.4M904.1,166.4 L928.8,166.4M904.6,170.4 L928.8,170.4M905.1,174.4 L928.8,174.4M905.5,178.3 L928.8,178.3M906.0,182.3 L928.8,182.3M906.4,186.3 L928.8,186.3M906.9,190.3 L928.8,190.3M907.4,194.2 L928.8,194.2M907.8,198.2 L928.8,198.2M908.3,202.2 L928.8,202.2M908.7,206.2 L928.8,206.2M909.2,210.1 L928.8,210.1M909.6,214.1 L928.8,214.1M910.1,218.1 L928.8,218.1M910.6,222.1 L928.8,222.1M911.0,226.0 L928.8,226.0M911.5,230.0 L928.8,230.0M911.9,234.0 L928.8,234.0M912.4,238.0 L928.8,238.0M912.9,241.9 L928.8,241.9M913.3,245.9 L928.8,245.9M913.8,249.9 L928.8,249.9M914.2,253.9 L928.8,253.9M914.7,257.8 L928.8,257.8M915.2,261.8 L928.8,261.8" stroke="#8a8578" stroke-width="1" opacity=".55"/><polygon points="931.2,160.0 955.7,160.0 967.9,282.3 943.4,270.1 931.2,260.9" fill="#d8d3c3" opacity=".8"/><polygon points="949.5,160.0 1041.3,160.0 1041.3,164.3 949.5,163.1" fill="#b0ac9e" opacity=".8"/><polygon points="1001.5,292.1 1041.3,291.5 1041.3,467.2 1004.6,465.7" fill="#35281f" /><path d="M1004.6,303.7 L1041.3,303.7M1004.6,311.9 L1041.3,311.9M1004.6,320.2 L1041.3,320.2M1004.6,328.5 L1041.3,328.5M1004.6,336.7 L1041.3,336.7M1004.6,345.0 L1041.3,345.0M1004.6,353.2 L1041.3,353.2M1004.6,361.5 L1041.3,361.5M1004.6,369.7 L1041.3,369.7M1004.6,378.0 L1041.3,378.0M1004.6,386.2 L1041.3,386.2M1004.6,394.5 L1041.3,394.5M1004.6,402.7 L1041.3,402.7M1004.6,411.0 L1041.3,411.0M1004.6,419.2 L1041.3,419.2M1004.6,427.5 L1041.3,427.5M1004.6,435.8 L1041.3,435.8M1004.6,444.0 L1041.3,444.0M1004.6,452.3 L1041.3,452.3M1004.6,460.5 L1041.3,460.5" stroke="#6a5646" stroke-width="1.400" opacity=".6"/><polygon points="877.7,303.7 903.7,288.4 931.2,276.2 955.7,279.2 992.3,294.5 1010.7,303.7 1019.9,468.8 931.2,468.8 894.5,404.6" fill="#1c2812" filter="url(#pb2)"/><polygon points="874.6,303.7 888.4,294.5 925.1,282.3 931.2,260.9 946.5,265.5 955.7,276.2 974.0,282.3 992.3,289.9 1013.7,294.5 1029.0,303.7 1035.1,374.0 1026.0,467.2 955.7,467.2 943.4,404.6 903.7,392.3 882.3,374.0" fill="#fff" filter="url(#leaf)"/><polygon points="925.1,288.4 934.3,263.9 955.7,276.2 974.0,282.3 998.5,291.5 1026.0,306.7 1029.0,374.0 1004.6,410.7 974.0,380.1 943.4,361.8 926.6,331.2" fill="#fff" filter="url(#leaf2)"/><polygon points="931.2,262.4 943.4,258.4 955.7,273.7 974.0,281.4 992.3,289.9 1004.6,303.7 974.0,306.7 943.4,288.4" fill="#7aa24c" opacity=".55" filter="url(#pb2)"/><polygon points="955.7,386.2 992.3,367.9 1041.3,355.7 1041.3,468.8 961.8,468.8" fill="#12160c" opacity=".82" filter="url(#pb4)"/><polygon points="925.1,331.2 955.7,343.4 961.8,404.6 943.4,435.1 931.2,404.6" fill="#141e0c" opacity=".5" filter="url(#pb4)"/><polygon points="1004.6,319.0 1032.1,312.9 1032.1,349.5 1013.7,355.7" fill="#9ab06a" opacity=".4" filter="url(#pb2)"/><path d="M974.0,392.3 Q992.3,374.0 1016.8,386.2 M974.0,398.5 Q998.5,392.3 1019.9,410.7 M970.9,404.6 Q986.2,422.9 1004.6,435.1" fill="none" stroke="#3c6428" stroke-width="2.600" opacity=".55" filter="url(#pb2)"/><polygon points="863.3,160.0 901.2,160.0 917.4,282.3 931.2,374.0 934.3,465.7 912.9,468.8 903.7,404.6 888.4,288.4" fill="url(#poleg)" /><polygon points="863.3,160.0 876.2,160.0 900.6,288.4 912.9,404.6 903.7,404.6 888.4,288.4" fill="#4c2a18" opacity=".6"/><polygon points="897.0,363.3 935.8,358.1 953.2,453.5 946.5,468.8 919.0,468.8 905.2,419.9" fill="#9a9c9a" /><polygon points="922.0,367.9 937.3,361.8 951.1,444.3 940.4,447.4" fill="#6aa4c4" opacity=".55" filter="url(#pb2)"/><polygon points="912.9,361.8 922.0,360.2 940.4,467.2 931.2,468.8" fill="#7a5232" opacity=".9"/><polygon points="897.6,190.6 906.7,189.0 922.0,282.3 912.9,285.3" fill="#b8b4a8" opacity=".5" filter="url(#pb2)"/><polygon points="841.9,160.0 855.4,160.0 866.4,282.3 882.3,374.0 892.1,453.5 877.7,455.0 867.0,374.0 854.8,282.3" fill="url(#pipeg)" /><polygon points="847.4,205.9 863.9,204.3 864.9,212.0 848.4,213.5" fill="#8a8478" opacity=".8"/><polygon points="857.2,267.0 870.1,265.5 873.7,297.6 860.9,299.1" fill="#3a4a6a" opacity=".5"/><polygon points="865.5,319.0 877.7,317.4 879.8,343.4 867.6,343.4" fill="#e8708a" opacity=".45" filter="url(#pb2)"/><path d="M920.5,160.0 Q919.0,178.3 903.7,186.0" fill="none" stroke="#2a2018" stroke-width="1.300"/><ellipse cx="934.3" cy="175.9" rx="16.500" ry="10" fill="#7f8062" transform="rotate(-22 934.3 175.9)"/><ellipse cx="931.8" cy="179.0" rx="13" ry="6" fill="#4a4a34" transform="rotate(-22 931.8 179.0)"/><polygon points="927.5,160.0 946.5,160.0 947.1,166.7 928.1,167.3" fill="#c8c8b8" /><polygon points="886.0,396.9 906.1,395.4 908.6,453.5 888.4,455.0" fill="#d4d0c6" /><polygon points="886.0,396.9 893.0,396.3 895.1,454.1 888.4,455.0" fill="#a8a498" opacity=".7"/><polygon points="880.8,453.5 925.1,452.0 925.1,468.8 880.8,469.4" fill="#8a8880" /><polygon points="824.8,455.0 849.3,453.5 849.3,474.9 825.7,475.5" fill="#9a9488" /><polygon points="848.0,404.6 865.5,403.0 870.7,461.1 849.3,462.7" fill="#e6cf7c" /><ellipse cx="855.4" cy="406.1" rx="9" ry="8" fill="#ecc85a"/><ellipse cx="868.5" cy="422.3" rx="11" ry="9" fill="#eccb62"/><polygon points="835.8,419.9 851.7,416.8 851.7,425.4 838.0,424.8" fill="#e8cc74" /><polygon points="847.1,452.0 871.6,450.4 876.2,465.7 844.1,467.2" fill="#c8b078" /><polygon points="851.7,429.0 867.0,427.8 868.5,450.4 852.9,451.0" fill="#d8d4c0" opacity=".7"/><ellipse cx="679.9" cy="291.4" rx="13" ry="10.500" fill="#a85a2a"/><ellipse cx="678.5" cy="286.3" rx="9" ry="5.500" fill="#c87a3c"/><polygon points="667.3,294.5 670.3,284.3 677.5,281.2 687.6,282.2 692.7,289.4 691.7,298.5 687.6,295.5 671.3,295.5" fill="#9c5226" /><ellipse cx="679.9" cy="305.7" rx="8" ry="11.500" fill="#7a4529"/><polygon points="670.3,304.7 667.3,307.7 665.6,310.4 670.3,309.1" fill="#b87858" /><polygon points="675.8,315.3 685.2,315.3 686.4,324.6 674.6,324.6" fill="#5f3520" /><polygon points="659.5,325.4 667.3,321.4 675.8,321.0 685.6,321.0 695.8,321.0 702.9,324.6 701.5,331.1 695.8,333.2 681.5,338.3 668.3,333.2 661.1,331.1" fill="#9a5c3a" /><polygon points="659.1,325.0 666.2,323.4 666.9,337.3 664.8,351.5 659.1,356.6 653.4,352.6 656.1,339.3" fill="#7a4529" /><polygon points="661.1,350.5 658.1,357.2 640.8,355.6 624.5,351.9 618.8,351.1 618.8,345.8 626.5,346.6 642.8,349.1 655.0,348.5" fill="#7a4529" /><polygon points="615.9,346.4 620.4,343.8 624.1,347.0 622.8,351.9 617.3,351.9" fill="#9a5c3a" /><polygon points="697.4,322.6 703.5,324.6 710.1,337.3 714.6,350.5 711.1,356.6 706.0,354.6 702.9,341.3 698.9,331.1" fill="#7a4529" /><polygon points="706.0,354.6 711.7,356.6 714.1,350.5 710.1,339.3 706.0,331.1 701.5,329.1 700.3,334.8 704.0,341.3" fill="#9a5c3a" /><polygon points="668.3,331.1 681.5,338.3 695.8,329.5 700.3,351.5 704.4,371.9 708.4,392.3 710.9,402.5 706.4,409.0 689.7,411.1 677.5,421.2 661.1,425.3 654.6,415.1 667.3,400.9 668.9,376.0 667.3,351.5" fill="#efa090" /><polygon points="670.3,337.3 681.5,341.3 692.7,335.2 695.8,355.6 697.8,376.0 689.7,384.1 677.5,380.1 671.3,361.7" fill="#f6b4a4" opacity=".75"/><polygon points="668.3,390.3 689.7,392.3 709.1,389.2 710.9,402.5 706.4,409.0 689.7,411.1 677.5,421.2 661.1,425.3 654.6,415.1 667.3,400.9" fill="#f09488" /><polygon points="654.6,415.1 661.1,418.4 677.5,413.7 689.7,404.9 706.4,402.5 710.9,402.5 706.4,409.0 689.7,411.1 677.5,421.2 661.1,425.3" fill="#ee7c72" /><path d="M671.7,322.6 L670.3,332.2 M692.1,322.0 L694.2,330.7" stroke="#f6b4a4" stroke-width="1.400" fill="none"/><polygon points="689.7,410.6 701.9,408.6 701.5,424.9 699.9,443.3 700.3,463.6 691.7,464.7 692.1,445.3 689.7,429.0" fill="#7a4529" /><polygon points="677.5,421.2 689.7,412.7 690.7,429.0 685.6,445.3 680.5,463.6 671.3,462.6 675.8,445.3 678.5,433.1" fill="#5f3520" /><polygon points="668.3,461.6 681.5,460.6 684.6,471.8 687.6,482.0 667.3,484.0" fill="#6c6c72" /><polygon points="688.1,463.6 700.9,462.6 701.9,473.8 702.9,482.0 688.1,483.0" fill="#7c7e84" /><defs><clipPath id="carclip"><polygon points="362.9,276.0 384.3,288.2 402.6,303.5 427.1,331.0 448.4,358.5 463.7,379.8 471.3,398.2 472.9,413.4 469.8,483.7 362.9,483.7"/></clipPath></defs><polygon points="366.0,260.8 402.6,288.2 445.4,343.2 472.9,392.1 488.1,434.8 488.1,483.7 457.6,483.7" fill="#7a2e18" opacity=".3" filter="url(#pb4)"/><g clip-path="url(#carclip)"><polygon points="362.9,273.0 475.9,273.0 475.9,483.7 362.9,483.7" fill="#c45a2c" /><polygon points="366.0,303.5 384.3,306.6 411.8,324.9 436.2,343.2 457.6,370.7 451.5,379.8 427.1,358.5 402.6,340.2 378.2,331.0 366.0,329.5" fill="#3c3478" /><polygon points="366.0,329.5 378.2,331.0 402.6,340.2 427.1,358.5 436.2,373.7 411.8,367.6 384.3,355.4 366.0,352.4" fill="#c86a28" /><polygon points="366.0,352.4 384.3,355.4 411.8,367.6 427.1,379.8 421.0,401.2 396.5,387.5 366.0,380.5" fill="#483878" /><polygon points="366.0,379.8 396.5,386.6 416.4,398.8 413.3,423.2 396.5,432.4 366.0,429.3" fill="#c8a020" /><polygon points="366.0,393.6 381.3,392.1 391.0,401.2 384.9,414.0 366.0,415.3" fill="#2a7aa8" /><polygon points="417.3,331.0 427.1,337.7 446.0,371.3 436.8,374.4" fill="#d4a42a" opacity=".9"/><polygon points="366.0,428.7 396.5,431.8 406.3,440.9 366.0,443.1" fill="#a8a098" /><polygon points="366.0,442.4 406.3,440.3 416.4,483.7 366.0,483.7" fill="#1a1614" /><polygon points="402.0,428.7 418.5,422.0 422.5,468.4 406.3,468.4" fill="#1c1816" /><path d="M366.0,279.7 L384.3,290.7 L402.6,306.0 L427.1,333.4 L448.4,360.9 L463.7,382.3" fill="none" stroke="#d87a48" stroke-width="2" opacity=".6"/><path d="M414.9,318.8 L418.5,367.6 L416.4,422.6" fill="none" stroke="#2a1a14" stroke-width=".8" opacity=".7"/><ellipse cx="439.3" cy="436.3" rx="34.2" ry="61.1" fill="#181412"/><ellipse cx="439.3" cy="436.3" rx="34.2" ry="61.1" fill="none" stroke="#d8703c" stroke-width="2.200" opacity=".75"/></g><ellipse cx="438.1" cy="440.3" rx="26.3" ry="46.4" fill="#1c1a1a"/><ellipse cx="439.0" cy="438.5" rx="18.3" ry="36.0" fill="#3a3836"/><path d="M438.9 433.5L438.7 404.4M439.7 433.7L444.0 405.9M441.3 436.8L455.2 427.4M441.5 438.4L456.1 437.9M440.5 442.5L449.3 465.7M439.8 443.2L444.6 470.6M437.5 442.6L429.2 466.3M437.0 441.5L425.3 459.0M436.6 437.0L422.6 428.5M436.9 435.6L425.0 419.0" stroke="#b4b0aa" stroke-width="2.400" stroke-linecap="round" fill="none"/><ellipse cx="439.0" cy="438.5" rx="18.3" ry="36.0" fill="none" stroke="#8a8682" stroke-width="1.600"/><ellipse cx="439.0" cy="438.5" rx="4" ry="7" fill="#6a6662"/><path d="M457.6,373.7 Q471.3,392.1 472.9,413.4 Q472.9,450.1 468.3,480.6" fill="none" stroke="#3a1e14" stroke-width="2" opacity=".7"/><polygon points="362.9,237.9 372.1,245.5 384.9,279.7 400.2,295.0 384.3,289.5 362.9,277.6" fill="#16120f" /><polygon points="362.9,205.8 369.7,208.9 373.6,248.5 362.9,245.5" fill="#2a211c" /><polygon points="381.3,244.3 393.5,240.0 416.4,241.8 421.3,251.6 419.7,269.9 411.8,280.9 390.4,282.4 382.8,273.3" fill="#14100e" /><polygon points="389.2,249.2 411.8,247.3 414.9,263.8 409.1,274.8 392.3,274.8" fill="#5c5c56" /><polygon points="389.2,249.2 411.8,247.3 413.0,255.3 390.4,258.3" fill="#7c7c74" opacity=".7"/><polygon points="366.0,479.1 471.3,479.1 471.3,485.2 366.0,485.2" fill="#16120f" opacity=".9"/></g></g></svg>
<div style="left:1073px;top:160px;width:486.5px;height:380.5px;background:#25252a;"></div>
<div style="left:1072px;top:160px;width:1.5px;height:380.5px;background:#0e0e10;"></div>
<div style="left:1550px;top:295px;width:6.5px;height:100px;background:#4b4b57;border-radius:3px;"></div>
<div style="left:1229.5px;top:532.5px;width:164.5px;height:5.5px;background:#68727c;border-radius:3px;"></div>
<svg style="left:1073px;top:160px" width="486.500" height="380" viewBox="1073 160 486.500 380"><line x1="1094" y1="348" x2="1161" y2="301" stroke="#88888e" stroke-width="1.700"/><line x1="1233" y1="299.3" x2="1253" y2="297.3" stroke="#88888e" stroke-width="1.700"/><line x1="1322" y1="297" x2="1160" y2="393.5" stroke="#88888e" stroke-width="1.700"/><line x1="1322" y1="297" x2="1254" y2="393.5" stroke="#88888e" stroke-width="1.700"/><line x1="1231" y1="392.5" x2="1342" y2="345.5" stroke="#88888e" stroke-width="1.700"/><line x1="1324" y1="393" x2="1343" y2="365.5" stroke="#88888e" stroke-width="1.700"/><line x1="1386" y1="354" x2="1404" y2="302" stroke="#88888e" stroke-width="1.700"/><line x1="1472" y1="301" x2="1402" y2="391.5" stroke="#88888e" stroke-width="1.700"/><line x1="1472" y1="391.5" x2="1530" y2="350" stroke="#88888e" stroke-width="1.700"/><defs><filter id="nb" x="-5%" y="-5%" width="110%" height="110%"><feGaussianBlur stdDeviation="0.7"/></filter></defs><rect x="1082.0" y="341" width="13" height="20.500" rx="3" fill="#3a3a44" stroke="#2a2c4a" stroke-width="1"/><circle cx="1088.5" cy="351.500" r="3.600" fill="#8bc220"/><circle cx="1088.5" cy="351.500" r="1.200" fill="#b8e060"/><rect x="1529.0" y="341" width="13" height="20.500" rx="3" fill="#3a3a44" stroke="#2a2c4a" stroke-width="1"/><circle cx="1535.5" cy="351.500" r="3.600" fill="#8bc220"/><circle cx="1535.5" cy="351.500" r="1.200" fill="#b8e060"/><rect x="1170.0" y="285.5" width="56" height="50" rx="3" fill="#2c2c33" stroke="#d8473a" stroke-width="1.4"/><rect x="1174.0" y="289.5" width="48.0" height="25" fill="#0a0808"/><svg x="1175.8" y="290.7" width="44.4" height="22.6" viewBox="368 160.500 671 324" preserveAspectRatio="none"><use href="#photoroot"/></svg><rect x="1174.0" y="289.5" width="48.0" height="25" fill="#6a1800" opacity=".28"/><rect x="1174.0" y="316.5" width="48.0" height="1.600" fill="#5f7896"/><text x="1179.5" y="329.8" font-family="Liberation Sans" font-size="10.500" fill="#e6e6e6">01</text><g fill="#e6e6e6"><rect x="1199" y="325" width="1.800" height="5"/><rect x="1202" y="323" width="1.800" height="7"/><rect x="1205" y="324" width="1.800" height="6"/></g><path d="M1160.5 296.4L1167.6 300L1160.5 303.6z" fill="#8bc220"/><path d="M1160.5 317.7L1167.6 321.3L1160.5 324.90000000000003z" fill="#1da5ef"/><rect x="1227.0" y="296.0" width="6.6" height="6.6" fill="#8bc220"/><rect x="1227.0" y="317.5" width="6.6" height="6.6" fill="#1da5ef"/><rect x="1265.5" y="284.5" width="51" height="47" rx="3" fill="#0c0c10" opacity=".55"/><rect x="1264.5" y="283" width="51" height="47" rx="2.500" fill="#2e2e35" stroke="#1a1a20" stroke-width="1"/><rect x="1266.0" y="284.5" width="48.0" height="26" fill="#0a0808"/><svg x="1267.8" y="285.7" width="44.4" height="23.6" viewBox="368 160.500 671 324" preserveAspectRatio="none"><use href="#photoroot"/></svg><rect x="1266.0" y="284.5" width="48.0" height="26" fill="#6a1800" opacity=".28"/><rect x="1266.0" y="312.5" width="48.0" height="1.600" fill="#5f7896"/><text x="1271" y="325.8" font-family="Liberation Sans" font-size="10.500" fill="#e6e6e6">02</text><path d="M1290 327c3.500 0 3-7.500 7-7.500" fill="none" stroke="#e6e6e6" stroke-width="1.300"/><path d="M1289.500 323.200l7.500 0" stroke="#e6e6e6" stroke-width=".6" opacity=".6"/><g fill="#e6e6e6"><circle cx="1302.500" cy="320" r="1"/><circle cx="1307" cy="319" r="1"/><circle cx="1311" cy="320" r="1"/><circle cx="1301.500" cy="323.500" r="1"/><circle cx="1312" cy="323.500" r="1"/><circle cx="1302.500" cy="327" r="1"/><circle cx="1307" cy="328" r="1"/><circle cx="1311" cy="327" r="1"/><circle cx="1307" cy="323.500" r="1.300"/></g><path d="M1253.0 293.4L1260.1 297L1253.0 300.6z" fill="#8bc220"/><path d="M1253.0 315.09999999999997L1260.1 318.7L1253.0 322.3z" fill="#1da5ef"/><rect x="1318.7" y="293.7" width="6.6" height="6.6" fill="#8bc220"/><rect x="1318.7" y="315.0" width="6.6" height="6.6" fill="#1da5ef"/><rect x="1170.5" y="381.5" width="52" height="46.5" rx="3" fill="#0c0c10" opacity=".55"/><rect x="1169.5" y="380" width="52" height="46.5" rx="2.500" fill="#2e2e35" stroke="#1a1a20" stroke-width="1"/><rect x="1171.0" y="381.5" width="49.0" height="24" fill="#858585"/><path d="M1185.0 402.0h14" stroke="#4c9a7a" stroke-width="1" opacity=".8"/><rect x="1171.0" y="407.5" width="49.0" height="1.600" fill="#5f7896"/><text x="1176.5" y="420.8" font-family="Liberation Sans" font-size="10.500" fill="#e6e6e6">03</text><g fill="#e6e6e6"><rect x="1196.500" y="418.500" width="1.800" height="4.500"/><rect x="1199.500" y="416.500" width="1.800" height="6.500"/><rect x="1202.500" y="417.500" width="1.800" height="5.500"/></g><rect x="1208" y="414.500" width="9.500" height="9" rx="1" fill="#f0f0f0"/><path d="M1210 417.500l2.800 3.500 2.800-3.500" fill="none" stroke="#26262c" stroke-width="1.500"/><path d="M1158.0 389.7L1165.1 393.3L1158.0 396.90000000000003z" fill="#8bc220"/><path d="M1158.0 410.4L1165.1 414L1158.0 417.6z" fill="#1da5ef"/><rect x="1224.2" y="389.7" width="6.6" height="6.6" fill="#8bc220"/><rect x="1224.2" y="410.4" width="6.6" height="6.6" fill="#1da5ef"/><rect x="1263.5" y="383.0" width="52" height="46" rx="3" fill="#0c0c10" opacity=".55"/><rect x="1262.5" y="381.5" width="52" height="46" rx="2.500" fill="#2e2e35" stroke="#1a1a20" stroke-width="1"/><rect x="1264.0" y="383.0" width="49.0" height="24.5" fill="#858585"/><ellipse cx="1270.5" cy="396.0" rx="4.500" ry="7" fill="#5a2c1a" filter="url(#nb)"/><ellipse cx="1271.5" cy="393.0" rx="2.500" ry="3.500" fill="#b8683a" filter="url(#nb)"/><rect x="1264.0" y="409.5" width="49.0" height="1.600" fill="#5f7896"/><text x="1269.5" y="422.8" font-family="Liberation Sans" font-size="10.500" fill="#e6e6e6">04</text><circle cx="1293" cy="420" r="4" fill="none" stroke="#e6e6e6" stroke-width="1.300" stroke-dasharray="2.200 1.200"/><path d="M1300 420h3" stroke="#888" stroke-width="1"/><path d="M1251.5 390.4L1258.6 394L1251.5 397.6z" fill="#8bc220"/><path d="M1251.5 411.4L1258.6 415L1251.5 418.6z" fill="#1da5ef"/><rect x="1317.2" y="390.4" width="6.6" height="6.6" fill="#8bc220"/><rect x="1317.2" y="411.4" width="6.6" height="6.6" fill="#1da5ef"/><rect x="1353" y="334.500" width="24.500" height="43" rx="3" fill="#0c0c10" opacity=".5"/><rect x="1352" y="333" width="24.500" height="43" rx="3" fill="#34343b" stroke="#1c1c22" stroke-width="1"/><g fill="none" stroke="#e6e6e6" stroke-width="1.100"><path d="M1358.500 351.500h3c3 0 3 5.500 6 5.500h2.500"/><path d="M1358.500 357h3c3 0 3-5.500 6-5.500h2.500"/><path d="M1360 354.300h8.500" stroke-width=".8"/></g><path d="M1341.5 341.4L1348.6 345L1341.5 348.6z" fill="#8bc220"/><path d="M1341.5 361.7L1348.6 365.3L1341.5 368.90000000000003z" fill="#8bc220"/><rect x="1379.2" y="351.4" width="6.6" height="6.6" fill="#8bc220"/><rect x="1414" y="289.5" width="53" height="47.5" rx="3" fill="#0c0c10" opacity=".55"/><rect x="1413" y="288" width="53" height="47.5" rx="2.500" fill="#2e2e35" stroke="#1a1a20" stroke-width="1"/><rect x="1414.5" y="289.5" width="50.0" height="26" fill="#0a0808"/><svg x="1416.3" y="290.7" width="46.4" height="23.6" viewBox="368 160.500 671 324" preserveAspectRatio="none"><use href="#photoroot"/></svg><rect x="1414.5" y="289.5" width="50.0" height="26" fill="#6a1800" opacity=".28"/><rect x="1414.5" y="317.5" width="50.0" height="1.600" fill="#5f7896"/><text x="1420.5" y="330.8" font-family="Liberation Sans" font-size="10.500" fill="#e6e6e6">06</text><circle cx="1444" cy="328" r="4.300" fill="none" stroke="#e6e6e6" stroke-width="1.200"/><circle cx="1444" cy="328" r="1" fill="#e6e6e6"/><rect x="1452" y="323.500" width="9.500" height="9" rx="1" fill="#f0f0f0"/><path d="M1454 326.500l2.800 3.500 2.800-3.500" fill="none" stroke="#26262c" stroke-width="1.500"/><path d="M1403.0 298.09999999999997L1410.1 301.7L1403.0 305.3z" fill="#8bc220"/><path d="M1403.0 320.09999999999997L1410.1 323.7L1403.0 327.3z" fill="#1da5ef"/><rect x="1468.4" y="298.0" width="6.6" height="6.6" fill="#8bc220"/><rect x="1468.4" y="319.7" width="6.6" height="6.6" fill="#1da5ef"/><rect x="1412" y="379.5" width="52" height="47.5" rx="3" fill="#0c0c10" opacity=".55"/><rect x="1411" y="378" width="52" height="47.5" rx="2.500" fill="#2e2e35" stroke="#1a1a20" stroke-width="1"/><rect x="1412.5" y="379.5" width="49.0" height="25" fill="#0a0808"/><svg x="1414.3" y="380.7" width="45.4" height="22.6" viewBox="368 160.500 671 324" preserveAspectRatio="none"><use href="#photoroot"/></svg><rect x="1412.5" y="379.5" width="49.0" height="25" fill="#6a1800" opacity=".28"/><rect x="1412.5" y="406.5" width="49.0" height="1.600" fill="#5f7896"/><text x="1417.5" y="419.8" font-family="Liberation Sans" font-size="10.500" fill="#e6e6e6">07</text><circle cx="1441.500" cy="418" r="4.500" fill="#e6e6e6"/><path d="M1439 421l2.500-6 2.500 6M1439.500 416l4.500 4" stroke="#2e2e35" stroke-width=".9" fill="none"/><path d="M1400.0 388.9L1407.1 392.5L1400.0 396.1z" fill="#8bc220"/><path d="M1400.0 410.09999999999997L1407.1 413.7L1400.0 417.3z" fill="#1da5ef"/><rect x="1465.4" y="388.7" width="6.6" height="6.6" fill="#8bc220"/><rect x="1465.4" y="409.7" width="6.6" height="6.6" fill="#1da5ef"/></svg>
<div style="left:345px;top:540.5px;width:1214.5px;height:97px;background:#1e1e24;"></div>
<div style="left:345px;top:542.5px;width:58.5px;height:95px;background:#25252b;"></div>
<div style="left:345px;top:540.5px;width:1214.5px;height:2px;background:#131316;"></div>
<svg style="left:360px;top:564px;" width="28" height="16" viewBox="0 0 28 16"><g fill="none" stroke="#dcdcdc" stroke-width="1.400"><path d="M1 1.500h2.300v13H1M27 1.500h-2.300v13H27"/><rect x="6" y="1.500" width="16" height="13" stroke-width="1.200"/></g><circle cx="10.500" cy="5.500" r="1.500" fill="#dcdcdc"/><path d="M7.500 13l4-4.500 3 3 2.500-2.500 3.500 4z" fill="#dcdcdc"/></svg>
<svg style="left:361px;top:597px;" width="27" height="19" viewBox="0 0 27 19"><g stroke="#6a6a70" fill="none"><path d="M13.500 5v13" stroke-width="1"/><path d="M11.500 1.500h4l-2 3.500z" stroke-width=".9"/><path d="M2 9h9.500M15.500 9h8M4 13.500h7.500M15.500 13.500h10" stroke-width="2.200" stroke-dasharray="2.600 .5"/></g></svg>
<div style="left:673px;top:628px;width:886.5px;height:6px;background:#545b64;border-radius:3px 0 0 3px;"></div>
<div style="left:412.0px;top:549px;width:20px;height:14.500px;border-radius:2.500px;background:conic-gradient(from 200deg at 50% 50%,#38c838,#e8d020,#f07818,#e83060,#b838e0,#3858f0,#20a8c8,#38c838);"></div>
<div style="left:413.3px;top:550.3px;width:17.4px;height:11.9px;background:#1a1a20;border-radius:1.600px;"></div>
<div class="t" style="top:548.40px;font-size:9.5px;color:#ededed;line-height:16px;white-space:pre;-webkit-text-stroke:0.3px #ededed;left:407.0px;width:30px;text-align:center;">04</div>
<svg style="left:412.8px;top:567.500px;border-radius:3px;overflow:hidden" width="102" height="56.500" viewBox="0 0 102 56.500"><defs>
<filter id="tb" x="-5%" y="-5%" width="110%" height="110%"><feGaussianBlur stdDeviation="0.6"/></filter>
<filter id="tb2" x="-10%" y="-10%" width="120%" height="120%"><feGaussianBlur stdDeviation="1.8"/></filter>
<filter id="graf" x="0" y="0" width="100%" height="100%"><feTurbulence type="fractalNoise" baseFrequency="0.055 0.075" numOctaves="4" seed="3"/><feColorMatrix type="matrix" values="3.0 0 0 0 -0.82  0 2.8 0 0 -0.86  0 0 3.0 0 -1.0  0 0 0 0 1"/><feColorMatrix type="saturate" values="0.6"/><feGaussianBlur stdDeviation="0.4"/></filter>
<filter id="graf2" x="0" y="0" width="100%" height="100%"><feTurbulence type="fractalNoise" baseFrequency="0.06 0.08" numOctaves="4" seed="8"/><feColorMatrix type="matrix" values="3.0 0 0 0 -0.82  0 2.8 0 0 -0.86  0 0 3.0 0 -1.0  0 0 0 0 1"/><feColorMatrix type="saturate" values="0.6"/><feGaussianBlur stdDeviation="0.4"/></filter>
<filter id="balls" x="0" y="0" width="100%" height="100%"><feTurbulence type="fractalNoise" baseFrequency="0.42" numOctaves="1" seed="5"/><feColorMatrix type="matrix" values="0 0.5 0 0 0.58  0 2.3 0 0 -0.72  0 2.1 0 0 -0.6  0 0 0 0 1"/><feGaussianBlur stdDeviation="0.4"/></filter>
<filter id="balls2" x="0" y="0" width="100%" height="100%"><feTurbulence type="fractalNoise" baseFrequency="0.38" numOctaves="1" seed="11"/><feColorMatrix type="matrix" values="0 0 0 0 0.12  0 0 0 0 0.05  0 0 0 0 0.07  0 0 5 0 -3.1"/><feGaussianBlur stdDeviation="0.35"/></filter>
<filter id="pat" x="0" y="0" width="100%" height="100%"><feTurbulence type="turbulence" baseFrequency="0.5" numOctaves="1" seed="2"/><feColorMatrix type="matrix" values="0 0 0 0 0.82  0 0 0 0 0.74  0 0 0 0 0.96  0 0.9 0 0 -0.1"/></filter>
<radialGradient id="vig" cx="50%" cy="50%" r="75%"><stop offset=".6" stop-color="#000" stop-opacity="0"/><stop offset="1" stop-color="#000" stop-opacity=".55"/></radialGradient>
</defs><rect width="102" height="57" fill="#7c6c70"/><rect width="102" height="42" filter="url(#graf)" opacity=".85"/>
<rect width="102" height="42" fill="#3a3038" opacity=".22"/>
<g filter="url(#tb)"><rect x="0" y="0" width="6" height="57" fill="#15171a"/>
<rect x="16" y="24" width="70" height="15" fill="#2a2834" opacity=".7"/><ellipse cx="38" cy="34" rx="6" ry="5.500" fill="#1c1a22"/><ellipse cx="70" cy="33" rx="9" ry="5" fill="#252430"/>
<rect x="86" y="14" width="10" height="26" fill="#d8603a" opacity=".8"/>
<rect x="0" y="40" width="102" height="17" fill="#586866"/><rect x="0" y="40" width="102" height="4" fill="#7c8c88" opacity=".7"/><rect x="0" y="50" width="102" height="7" fill="#36423f" opacity=".6"/>
<rect x="49" y="9" width="5" height="13" fill="#e08a3a"/><rect x="51" y="5" width="3" height="5" fill="#6a4030"/><rect x="48" y="21" width="9" height="17" fill="#9aa4a8"/><rect x="46" y="45" width="4" height="2" fill="#e8e8e0"/><rect x="62" y="45" width="4" height="2" fill="#e8e8e0"/></g><rect width="102" height="57" fill="url(#vig)"/></svg>
<div style="left:526.8px;top:549px;width:20px;height:14.500px;border-radius:2.500px;background:conic-gradient(from 200deg at 50% 50%,#38c838,#e8d020,#f07818,#e83060,#b838e0,#3858f0,#20a8c8,#38c838);"></div>
<div style="left:528.0999999999999px;top:550.3px;width:17.4px;height:11.9px;background:#1a1a20;border-radius:1.600px;"></div>
<div class="t" style="top:548.40px;font-size:9.5px;color:#ededed;line-height:16px;white-space:pre;-webkit-text-stroke:0.3px #ededed;left:521.8px;width:30px;text-align:center;">05</div>
<svg style="left:527.5px;top:567.500px;border-radius:3px;overflow:hidden" width="102" height="56.500" viewBox="0 0 102 56.500"><rect width="102" height="57" fill="#a44e36"/><g filter="url(#tb)">
<rect x="78" y="0" width="24" height="30" fill="#cfcabb"/><rect x="84" y="18" width="18" height="30" fill="#3c4a28"/><rect x="72" y="0" width="5" height="48" fill="#6a4830"/>
<rect x="24" y="8" width="40" height="42" fill="#2a2022"/><rect x="26" y="12" width="36" height="8" fill="#9aa4b0" opacity=".85"/><rect x="26" y="21" width="36" height="13" fill="#e8742e"/><rect x="36" y="16" width="14" height="14" fill="#8458b8"/><rect x="26" y="36" width="36" height="6" fill="#e8c238"/><rect x="26" y="42" width="36" height="7" fill="#2a9ad0"/><rect x="30" y="40" width="10" height="6" fill="#30b080"/>
<rect x="42" y="33" width="4" height="8" fill="#e88a90"/><rect x="42" y="41" width="4" height="8" fill="#3a4a8a"/>
<ellipse cx="7" cy="42" rx="15" ry="14" fill="#4a2c24"/><ellipse cx="8" cy="46" rx="7" ry="8" fill="#1c1412"/>
<rect x="0" y="49" width="102" height="8" fill="#6e5c4c"/></g><rect width="102" height="57" fill="url(#vig)" opacity=".7"/></svg>
<div style="left:641.5px;top:549px;width:20px;height:14.5px;background:#4e4e55;border-radius:2.500px;"></div>
<div style="left:642.7px;top:550.2px;width:17.6px;height:12.1px;background:#1e1e24;border-radius:1.800px;"></div>
<div class="t" style="top:548.40px;font-size:9.5px;color:#ededed;line-height:16px;white-space:pre;-webkit-text-stroke:0.3px #ededed;left:636.5px;width:30px;text-align:center;">06</div>
<svg style="left:642.3px;top:567.500px;border-radius:3px;overflow:hidden" width="102" height="56.500" viewBox="0 0 102 56.500"><rect width="102" height="57" fill="#7c6c70"/><rect width="102" height="42" filter="url(#graf2)" opacity=".85"/>
<rect width="102" height="42" fill="#3a3038" opacity=".22"/>
<g filter="url(#tb)"><rect x="0" y="0" width="6" height="57" fill="#15171a"/>
<rect x="16" y="24" width="70" height="15" fill="#2a2834" opacity=".7"/><ellipse cx="38" cy="34" rx="6" ry="5.500" fill="#1c1a22"/><ellipse cx="70" cy="33" rx="9" ry="5" fill="#252430"/>
<rect x="86" y="14" width="10" height="26" fill="#d8603a" opacity=".8"/>
<rect x="0" y="40" width="102" height="17" fill="#586866"/><rect x="0" y="40" width="102" height="4" fill="#7c8c88" opacity=".7"/><rect x="0" y="50" width="102" height="7" fill="#36423f" opacity=".6"/>
<ellipse cx="46" cy="17" rx="5" ry="4" fill="#1c1418"/><rect x="43" y="20" width="6" height="9" fill="#e0a040"/><rect x="43" y="28" width="9" height="12" fill="#8aa0b0"/><rect x="40" y="45" width="4" height="2" fill="#e8e8e0"/><rect x="60" y="47" width="4" height="2" fill="#e8e8e0"/></g><rect width="102" height="57" fill="url(#vig)"/></svg>
<div style="left:756.2px;top:549px;width:20px;height:14.500px;border-radius:2.500px;background:conic-gradient(from 200deg at 50% 50%,#38c838,#e8d020,#f07818,#e83060,#b838e0,#3858f0,#20a8c8,#38c838);"></div>
<div style="left:757.5px;top:550.3px;width:17.4px;height:11.9px;background:#1a1a20;border-radius:1.600px;"></div>
<div class="t" style="top:548.40px;font-size:9.5px;color:#ededed;line-height:16px;white-space:pre;-webkit-text-stroke:0.3px #ededed;left:751.2px;width:30px;text-align:center;">07</div>
<svg style="left:757.0px;top:567.500px;border-radius:3px;overflow:hidden" width="102" height="56.500" viewBox="0 0 102 56.500"><rect width="102" height="57" fill="#4a1cb0"/><g filter="url(#tb)">
<rect x="0" y="0" width="30" height="57" fill="#2c1890" opacity=".8"/><rect x="60" y="0" width="42" height="30" fill="#9020c0" opacity=".75"/>
<rect x="16" y="2" width="26" height="9" rx="2" fill="#f0c838"/><rect x="17" y="11" width="22" height="5" fill="#f0a030"/>
<rect x="72" y="1" width="16" height="22" rx="6" fill="none" stroke="#ff50b0" stroke-width="2.500"/><rect x="77" y="10" width="6" height="16" fill="#ff70c0"/>
<rect x="4" y="18" width="6" height="18" rx="2" fill="#f8b0e8"/><rect x="18" y="26" width="30" height="2.500" fill="#f0a040"/>
<rect x="12" y="36" width="26" height="9" fill="#50b8ff" opacity=".95"/><rect x="70" y="31" width="20" height="7" fill="#28c8a0"/><rect x="70" y="42" width="20" height="12" fill="none" stroke="#38e0c0" stroke-width="2"/><rect x="73" y="45" width="14" height="6" fill="#a8f0e0"/>
<rect x="20" y="50" width="22" height="3" fill="#e060d0"/>
<ellipse cx="55" cy="22" rx="9" ry="8" fill="#3a1428"/><ellipse cx="56" cy="24" rx="4.500" ry="5.500" fill="#d0482c"/>
<path d="M40 57V42q2-10 16-11q14 1 17 12v14z" fill="#e8401c"/><path d="M48 57V40q6-6 14 0v17z" fill="#f06030" opacity=".8"/></g></svg>
<div style="left:871.0px;top:549px;width:20px;height:14.5px;background:#4e4e55;border-radius:2.500px;"></div>
<div style="left:872.2px;top:550.2px;width:17.6px;height:12.1px;background:#1e1e24;border-radius:1.800px;"></div>
<div class="t" style="top:548.40px;font-size:9.5px;color:#ededed;line-height:16px;white-space:pre;-webkit-text-stroke:0.3px #ededed;left:866.0px;width:30px;text-align:center;">08</div>
<svg style="left:871.8px;top:567.500px;border-radius:3px;overflow:hidden" width="102" height="56.500" viewBox="0 0 102 56.500"><rect width="102" height="57" fill="#dfe3df"/><g filter="url(#tb)">
<polygon points="0,0 50,0 47,34 42,40 0,57" fill="#a8583a"/><polygon points="0,0 12,0 12,12 0,14" fill="#3a8a70"/><polygon points="28,2 37,3 36,20 28,21" fill="#5a9a84"/><polygon points="40,0 50,0 47,30 42,32" fill="#8a4a34"/>
<polygon points="0,57 42,40 60,38 102,44 102,57" fill="#8b9997"/><polygon points="20,57 50,42 58,42 60,57" fill="#9aa8a6"/>
<ellipse cx="78" cy="9" rx="16" ry="10" fill="#2a4030"/><rect x="75" y="10" width="2.500" height="28" fill="#3a3028"/>
<polygon points="80,28 102,26 102,48 84,46" fill="#a8a4a8"/><rect x="71" y="33" width="9" height="17" fill="#15181a"/>
<rect x="51" y="20" width="7" height="11" fill="#e8e8e4"/><ellipse cx="54" cy="16" rx="3" ry="3.500" fill="#4a2c20"/><polygon points="50,31 59,31 62,50 58,52 55,38 50,52 46,50" fill="#c8b8a0"/><rect x="45" y="50" width="5" height="3" fill="#151515"/><rect x="60" y="50" width="5" height="3" fill="#151515"/></g></svg>
<div style="left:985.8px;top:549px;width:20px;height:14.5px;background:#4e4e55;border-radius:2.500px;"></div>
<div style="left:987.0px;top:550.2px;width:17.6px;height:12.1px;background:#1e1e24;border-radius:1.800px;"></div>
<div class="t" style="top:548.40px;font-size:9.5px;color:#ededed;line-height:16px;white-space:pre;-webkit-text-stroke:0.3px #ededed;left:980.8px;width:30px;text-align:center;">09</div>
<svg style="left:986.5px;top:567.500px;border-radius:3px;overflow:hidden" width="102" height="56.500" viewBox="0 0 102 56.500"><rect width="102" height="57" fill="#2b332c"/><g filter="url(#tb)">
<rect x="0" y="0" width="9" height="40" fill="#a04a30"/><rect x="9" y="0" width="4" height="40" fill="#c8c0b0" opacity=".6"/>
<rect x="13" y="0" width="70" height="36" fill="#222b26"/><rect x="86" y="0" width="16" height="40" fill="#3a3a3c"/>
<ellipse cx="30" cy="26" rx="10" ry="9" fill="#35503a"/><ellipse cx="62" cy="24" rx="12" ry="10" fill="#2f4a36"/><ellipse cx="45" cy="12" rx="14" ry="6" fill="#3c5a42" opacity=".7"/>
<circle cx="28" cy="6" r="1.300" fill="#d8d8d0"/><circle cx="42" cy="8" r="1.300" fill="#d8d8d0"/><circle cx="55" cy="5" r="1.300" fill="#d8d8d0"/><circle cx="66" cy="10" r="1.300" fill="#d8d8d0"/><circle cx="35" cy="15" r="1.100" fill="#c8c8c0"/>
<rect x="16" y="30" width="5" height="8" fill="#d8d0c0"/><rect x="24" y="32" width="5" height="6" fill="#c8c0b0"/><rect x="74" y="28" width="8" height="11" fill="#c04038" opacity=".8"/>
<polygon points="0,40 102,37 102,57 0,57" fill="#aea89e"/><polygon points="60,50 102,44 102,57 66,57" fill="#7a6c58" opacity=".7"/>
<ellipse cx="48" cy="20" rx="2.500" ry="3" fill="#5a3424"/><polygon points="43,24 53,23 56,36 50,40 41,37" fill="#e87888"/><polygon points="42,37 52,38 50,48 40,47" fill="#5a4038"/></g><rect width="102" height="57" fill="url(#vig)" opacity=".6"/></svg>
<div style="left:1100.5px;top:549px;width:20px;height:14.500px;border-radius:2.500px;background:conic-gradient(from 200deg at 50% 50%,#38c838,#e8d020,#f07818,#e83060,#b838e0,#3858f0,#20a8c8,#38c838);"></div>
<div style="left:1101.8px;top:550.3px;width:17.4px;height:11.9px;background:#1a1a20;border-radius:1.600px;"></div>
<div class="t" style="top:548.40px;font-size:9.5px;color:#ededed;line-height:16px;white-space:pre;-webkit-text-stroke:0.3px #ededed;left:1095.5px;width:30px;text-align:center;">10</div>
<div style="left:1099.8px;top:566px;width:105px;height:59.5px;background:#e0523c;border-radius:4px;"></div>
<svg style="left:1101.3px;top:567.500px;border-radius:3px;overflow:hidden" width="102" height="56.500" viewBox="0 0 102 56.500"><svg x="0" y="0" width="102" height="56.500" viewBox="368 160.500 671 324" preserveAspectRatio="none"><use href="#photoroot"/></svg></svg>
<div style="left:1215.2px;top:549px;width:20px;height:14.500px;border-radius:2.500px;background:conic-gradient(from 200deg at 50% 50%,#38c838,#e8d020,#f07818,#e83060,#b838e0,#3858f0,#20a8c8,#38c838);"></div>
<div style="left:1216.5px;top:550.3px;width:17.4px;height:11.9px;background:#1a1a20;border-radius:1.600px;"></div>
<div class="t" style="top:548.40px;font-size:9.5px;color:#ededed;line-height:16px;white-space:pre;-webkit-text-stroke:0.3px #ededed;left:1210.2px;width:30px;text-align:center;">11</div>
<svg style="left:1216.0px;top:567.500px;border-radius:3px;overflow:hidden" width="102" height="56.500" viewBox="0 0 102 56.500"><rect width="102" height="57" fill="#a88cdc"/><rect width="102" height="42" filter="url(#pat)" opacity=".55"/><g filter="url(#tb)">
<rect x="0" y="0" width="36" height="8" fill="#3c3cb4"/><rect x="0" y="41" width="102" height="16" fill="#c4aaea"/>
<rect x="0" y="0" width="102" height="57" fill="#5a38b0" opacity=".12"/>
<polygon points="30,34 42,30 48,36 36,40" fill="#6a4cb0" opacity=".8"/><ellipse cx="52" cy="21" rx="5" ry="4.500" fill="#3a2878"/><polygon points="54,24 60,26 58,40 62,48 58,49 54,40 50,46 48,44 53,34" fill="#7a5cc0"/><ellipse cx="58" cy="19" rx="4" ry="3" fill="#e0a0d0" opacity=".7"/></g>
<rect width="102" height="57" fill="url(#vig)"/><polygon points="70,57 102,30 102,57" fill="#3a1c98" opacity=".45" filter="url(#tb2)"/></svg>
<div style="left:1330.0px;top:549px;width:20px;height:14.5px;background:#4e4e55;border-radius:2.500px;"></div>
<div style="left:1331.2px;top:550.2px;width:17.6px;height:12.1px;background:#1e1e24;border-radius:1.800px;"></div>
<div class="t" style="top:548.40px;font-size:9.5px;color:#ededed;line-height:16px;white-space:pre;-webkit-text-stroke:0.3px #ededed;left:1325.0px;width:30px;text-align:center;">12</div>
<svg style="left:1330.8px;top:567.500px;border-radius:3px;overflow:hidden" width="102" height="56.500" viewBox="0 0 102 56.500"><rect width="102" height="57" fill="#d8486a"/><rect width="102" height="57" filter="url(#balls)"/><rect width="102" height="57" filter="url(#balls2)"/><g filter="url(#tb)">
<polygon points="70,0 102,0 102,30 92,22 80,8" fill="#2c1416"/><polygon points="0,0 14,0 6,10 0,14" fill="#3a181c"/>
<ellipse cx="44" cy="12" rx="8" ry="9" fill="#24140f"/><ellipse cx="44" cy="14" rx="4" ry="5" fill="#a06040"/><polygon points="36,22 52,22 54,32 34,32" fill="#1a1214"/>
<polygon points="34,24 28,38 22,46 26,48 34,38 38,30" fill="#a86848"/><polygon points="52,24 60,36 66,48 62,50 54,38 50,30" fill="#a86848"/></g><rect width="102" height="57" fill="url(#vig)" opacity=".5"/></svg>
<div style="left:1444.8px;top:549px;width:20px;height:14.500px;border-radius:2.500px;background:conic-gradient(from 200deg at 50% 50%,#38c838,#e8d020,#f07818,#e83060,#b838e0,#3858f0,#20a8c8,#38c838);"></div>
<div style="left:1446.1px;top:550.3px;width:17.4px;height:11.9px;background:#1a1a20;border-radius:1.600px;"></div>
<div class="t" style="top:548.40px;font-size:9.5px;color:#ededed;line-height:16px;white-space:pre;-webkit-text-stroke:0.3px #ededed;left:1439.8px;width:30px;text-align:center;">13</div>
<svg style="left:1445.5px;top:567.500px;border-radius:3px;overflow:hidden" width="102" height="56.500" viewBox="0 0 102 56.500"><rect width="102" height="57" fill="#c9aa8c"/><g filter="url(#tb)">
<rect x="0" y="0" width="102" height="4" fill="#a88868"/><rect x="72" y="0" width="30" height="44" fill="#e6dace"/><rect x="78" y="0" width="2" height="44" fill="#c8b8a4"/><rect x="88" y="0" width="2" height="44" fill="#d0c0ac"/>
<rect x="38" y="30" width="40" height="12" rx="2" fill="#c8a088"/><rect x="68" y="14" width="6" height="4" fill="#f0ece0"/><rect x="70.500" y="18" width="1" height="16" fill="#a08870"/>
<polygon points="0,42 102,42 102,57 0,57" fill="#d9c6b2"/><polygon points="14,44 88,44 96,56 6,56" fill="#ece4d8" opacity=".8"/>
<rect x="23" y="32" width="3" height="9" fill="#6a5a48"/><ellipse cx="25" cy="30" rx="4" ry="5" fill="#7a7458"/>
<ellipse cx="51" cy="5" rx="2.600" ry="3" fill="#6a4030"/><polygon points="46,9 56,9 58,20 45,20" fill="#f2efe8"/><polygon points="56,9 60,12 59,20 57,20" fill="#2a2a30"/><polygon points="46,20 57,20 55,44 52,44 51,28 50,44 47,44" fill="#3a5a88"/><rect x="46" y="44" width="4" height="2" fill="#f0f0f0"/><rect x="52" y="45" width="4" height="2" fill="#f0f0f0"/></g></svg>
<div class="t" style="left:1191.5px;top:547px;font-family:'Liberation Sans',sans-serif;font-style:italic;font-weight:bold;font-size:13px;letter-spacing:-0.5px;line-height:16px;color:#f0f0f0;">fx</div>
<div class="t" style="left:1535.5px;top:547px;font-family:'Liberation Sans',sans-serif;font-style:italic;font-weight:bold;font-size:13px;letter-spacing:-0.5px;line-height:16px;color:#f0f0f0;">fx</div>
<div style="left:345px;top:637.5px;width:1214.5px;height:34.5px;background:#26262c;"></div>
<div style="left:345px;top:637.5px;width:1214.5px;height:1px;background:#151518;"></div>
<svg style="left:362px;top:645px;" width="30" height="22" viewBox="0 0 30 22"><g fill="none" stroke="#56565c" stroke-width="1.200"><path d="M13 5l8-3 7 3v9l-7 4-8-3z"/><ellipse cx="20.500" cy="10" rx="3.500" ry="4.500"/><circle cx="8" cy="14" r="6" stroke-dasharray="3 2"/><path d="M5 3l5-2 3 2"/></g></svg>
<svg style="left:392.5px;top:665.5px;" width="5" height="5" viewBox="0 0 5 5"><path d="M5 0v5H0z" fill="#6e6e74"/></svg>
<svg style="left:416px;top:644.3px;" width="22" height="22" viewBox="0 0 22 22"><circle cx="11" cy="11" r="9" fill="none" stroke="#f4f4f4" stroke-width="1.700"/><circle cx="11" cy="11" r="2.600" fill="#f4f4f4"/></svg>
<div style="left:436.5px;top:642.5px;width:3.6px;height:3.6px;background:#e8364e;border-radius:2px;"></div>
<svg style="left:465px;top:645px;" width="30" height="22" viewBox="0 0 30 22"><path d="M5 17A9 9 0 1 1 19 11" fill="none" stroke="#56565c" stroke-width="1.300"/><circle cx="10.500" cy="10.500" r="2.200" fill="#56565c"/><path d="M10.500 10.500m-5.500 0a5.500 5.500 0 1 1 5.500 5.500" fill="none" stroke="#56565c" stroke-width=".7" opacity=".6"/><text x="11" y="20.500" font-family="Liberation Sans" font-size="7.500" font-weight="bold" fill="#56565c">HDR</text></svg>
<svg style="left:517px;top:645px;" width="23" height="22" viewBox="0 0 23 22"><g fill="none" stroke="#56565c"><path d="M2 19c8 0 9-16 19-16" stroke-width="1.500"/><path d="M4 3.500h15M4 8.500h15M4 13.500h15M4 18.500h15M4 3.500v15M9 3.500v15M14 3.500v15M19 3.500v15" stroke-width=".7" opacity=".7"/></g></svg>
<svg style="left:567px;top:645px;" width="24" height="22" viewBox="0 0 24 22"><g fill="none" stroke="#56565c" stroke-width=".9" stroke-dasharray="2 1.200"><path d="M6.500 2h11l5.500 9-5.500 9h-11L1 11z"/><path d="M1 11h22M6.500 2l11 18M17.500 2l-11 18"/></g><g fill="#56565c"><circle cx="12" cy="11" r="1.300"/><circle cx="9" cy="6.500" r="1.100"/><circle cx="15" cy="6.500" r="1.100"/><circle cx="9" cy="15.500" r="1.100"/><circle cx="15" cy="15.500" r="1.100"/><circle cx="6.500" cy="11" r="1.100"/><circle cx="17.500" cy="11" r="1.100"/></g></svg>
<svg style="left:620px;top:645px;" width="21" height="21" viewBox="0 0 21 21"><g fill="#56565c"><path d="M14.500 1.600c1.300-1.300 3.200-1.200 4.300-.1s1.100 3-.2 4.300l-2.700 2.700 1 1-1.500 1.500-6.200-6.200 1.500-1.500 1.100 1.100z"/><path d="M10 7.300l3 3-7.800 7.800-2.700.9-1.200 1.200-.9-.9 1.200-1.200.8-2.800z"/></g></svg>
<svg style="left:668px;top:645px;" width="24" height="22" viewBox="0 0 24 22"><g fill="none" stroke="#56565c" stroke-width="1.300"><ellipse cx="12" cy="11" rx="8.500" ry="7"/></g><g fill="#26262c" stroke="#56565c" stroke-width="1"><rect x="10.500" y="2.500" width="3" height="3"/><rect x="10.500" y="16.500" width="3" height="3"/><rect x="2" y="9.500" width="3" height="3"/><rect x="19" y="9.500" width="3" height="3"/></g></svg>
<svg style="left:720px;top:645px;" width="23" height="22" viewBox="0 0 23 22"><g fill="none" stroke="#56565c" stroke-width="1.200"><circle cx="11.500" cy="11" r="5.500"/><path d="M11.500 3v5M11.500 14v5M3.500 11h5M14.500 11h5"/><path d="M2 6V2h4M17 2h4v4M2 16v4h4M17 20h4v-4" stroke-width="1"/></g><circle cx="11.500" cy="11" r="1.300" fill="#56565c"/></svg>
<svg style="left:770px;top:645px;" width="26" height="22" viewBox="0 0 26 22"><g fill="none" stroke="#56565c" stroke-width="1.100"><rect x="2" y="3" width="22" height="16" stroke-dasharray="2.500 1.300"/></g><circle cx="13" cy="9" r="2.800" fill="#56565c"/><path d="M7 18c0-4.500 3-6 6-6s6 1.500 6 6z" fill="#56565c"/></svg>
<svg style="left:820px;top:645px;" width="24" height="22" viewBox="0 0 24 22"><path d="M7 2c2 3 3.500 5 3.500 7a3.500 3.500 0 0 1-7 0c0-2 1.500-4 3.500-7z" fill="#56565c"/><path d="M16 7l6.500 13h-13z" fill="#56565c" opacity=".9"/></svg>
<svg style="left:872px;top:645px;" width="25" height="22" viewBox="0 0 25 22"><rect x="4" y="5" width="19" height="14" fill="#56565c"/><circle cx="15" cy="12" r="3.800" fill="#26262c"/><path d="M1.500 16V2.500H19" fill="none" stroke="#56565c" stroke-width="1.100" stroke-dasharray="2 1.300"/></svg>
<svg style="left:922px;top:645px;" width="26" height="22" viewBox="0 0 26 22"><rect x="6" y="8" width="15" height="10" fill="#56565c" opacity=".75"/><g fill="none" stroke="#56565c" stroke-width="1.200"><path d="M3 14V5.500h14"/><path d="M14.500 3l3 2.500-3 2.500"/><path d="M23 9v9.500H9" opacity=".9"/><path d="M11.500 16l-3 2.500 3 2.500"/></g></svg>
<svg style="left:1085px;top:645px;" width="23" height="20" viewBox="0 0 23 20"><g fill="none" stroke="#dcdcdc" stroke-width="1.300" stroke-linejoin="round"><path d="M2 1v17h20"/><path d="M4 16l2-10 2.500 8 2-11 2.500 11 2-7 2 6 2-4 1.500 7" stroke-width="1.100"/></g></svg>
<svg style="left:1137px;top:647px;" width="24" height="17" viewBox="0 0 24 17"><path d="M14 1.500l7 7-7 7-7-7z" fill="#56565c"/><path d="M8.500 3L3 8.500 8.500 14" fill="none" stroke="#56565c" stroke-width="1.300"/><path d="M5 3L-.5 8.500 5 14" fill="none" stroke="#56565c" stroke-width="1" opacity=".6"/></svg>
<div style="left:345px;top:672px;width:728.5px;height:28px;background:#1b1b20;"></div>
<div style="left:345px;top:672px;width:1214.5px;height:1px;background:#121215;"></div>
<div class="t" style="top:679.00px;font-size:12.2px;color:#f2f2f2;line-height:16px;white-space:pre;-webkit-text-stroke:0.45px #f2f2f2;left:353.8px;">Primaries - Color Wheels</div>
<div style="left:922px;top:673px;width:1.5px;height:27px;background:#111114;"></div>
<div style="left:1032px;top:673px;width:1.5px;height:27px;background:#111114;"></div>
<svg style="left:932.5px;top:676.5px;" width="20" height="20" viewBox="0 0 20 20"><circle cx="10" cy="10" r="8.300" fill="none" stroke="#f4f4f4" stroke-width="1.600"/><circle cx="10" cy="10" r="2" fill="#f4f4f4"/></svg>
<svg style="left:967px;top:678px;" width="18" height="17" viewBox="0 0 18 17"><g stroke="#6c6c73" stroke-width="1.300"><path d="M2.500 1v15M7 1v15M11.500 1v15M16 1v15"/></g><g stroke="#6c6c73" stroke-width="3"><path d="M2.500 4v3M7 7.500v3M11.500 3v3M16 6v3"/></g></svg>
<svg style="left:1000px;top:677px;" width="24" height="20" viewBox="0 0 24 20"><path d="M5.500 16A8 8 0 1 1 18 10" fill="none" stroke="#6c6c73" stroke-width="1.300"/><circle cx="10" cy="9.500" r="1.600" fill="#6c6c73"/><text x="11.500" y="19" font-family="Liberation Sans" font-size="6.500" font-weight="bold" fill="#6c6c73">LOG</text></svg>
<svg style="left:1043px;top:677px;" width="21" height="19" viewBox="0 0 21 19"><g fill="none" stroke="#7a7a80" stroke-width="1.300" stroke-linecap="round"><path d="M3.200 6.500A8 8 0 1 1 2.500 11"/><path d="M2 2.500v4.500h4.500"/><path d="M10.500 6v7M7 9.500h7"/></g></svg>
<div style="left:345px;top:701.5px;width:728.5px;height:29.5px;background:#2a2a30;"></div>
<div style="left:345px;top:700px;width:728.5px;height:1.5px;background:#141417;"></div>
<svg style="left:355.5px;top:706px;" width="20" height="20" viewBox="0 0 20 20"><circle cx="10" cy="10" r="8.600" fill="none" stroke="#6e6e75" stroke-width="1.200"/><path d="M6.800 13.800l3.200-8 3.200 8M8 11h4" fill="none" stroke="#6e6e75" stroke-width="1.100"/></svg>
<svg style="left:386px;top:707.5px;" width="18" height="17" viewBox="0 0 18 17"><g fill="#f2f2f2"><path d="M12.500 1.400c1-1 2.600-1 3.500-.1s.9 2.500-.1 3.500l-2.200 2.200.8.800-1.200 1.200-5-5 1.200-1.200.9.900z"/><path d="M8.800 6l2.500 2.500-6.300 6.300-2.200.7-1 1-.7-.7 1-1 .6-2.300z"/><path d="M4 1.500c.9 1.300 1.600 2.200 1.600 3.100a1.600 1.600 0 0 1-3.200 0c0-.9.700-1.800 1.600-3.100z"/></g></svg>
<div class="t" style="top:707.00px;font-size:11.5px;color:#8a8a90;line-height:16px;white-space:pre;-webkit-text-stroke:0.15px #8a8a90;right:1424px;text-align:right;">Temp</div>
<div style="left:499px;top:704.7px;width:35px;height:17px;background:#19191d;border-radius:1.500px;"></div>
<div class="t" style="top:705.70px;font-size:11.5px;color:#e8e8e8;line-height:16px;white-space:pre;left:486.5px;width:60px;text-align:center;">0.0</div>
<div style="left:499px;top:725.5px;width:35px;height:2px;background:linear-gradient(90deg,#1a5ae0,#2a2a30 50%,#f08a20);border-radius:1px;"></div>
<div class="t" style="top:707.00px;font-size:11.5px;color:#8a8a90;line-height:16px;white-space:pre;-webkit-text-stroke:0.15px #8a8a90;right:1296.5px;text-align:right;">Tint</div>
<div style="left:628px;top:704.7px;width:35px;height:17px;background:#19191d;border-radius:1.500px;"></div>
<div class="t" style="top:705.70px;font-size:11.5px;color:#e8e8e8;line-height:16px;white-space:pre;left:615.5px;width:60px;text-align:center;">0.00</div>
<div style="left:628px;top:725.5px;width:35px;height:2px;background:linear-gradient(90deg,#20c060,#2a2a30 50%,#e02a80);border-radius:1px;"></div>
<div class="t" style="top:707.00px;font-size:11.5px;color:#8a8a90;line-height:16px;white-space:pre;-webkit-text-stroke:0.15px #8a8a90;right:1167.5px;text-align:right;">Contrast</div>
<div style="left:756px;top:704.7px;width:35px;height:17px;background:#19191d;border-radius:1.500px;"></div>
<div class="t" style="top:705.70px;font-size:11.5px;color:#e8e8e8;line-height:16px;white-space:pre;left:743.5px;width:60px;text-align:center;">1.000</div>
<div style="left:756px;top:725.5px;width:35px;height:2px;background:linear-gradient(90deg,#101012,#101012 30%,#f0f0f0 95%,#888);border-radius:1px;"></div>
<div class="t" style="top:707.00px;font-size:11.5px;color:#8a8a90;line-height:16px;white-space:pre;-webkit-text-stroke:0.15px #8a8a90;right:1039.5px;text-align:right;">Pivot</div>
<div style="left:885px;top:704.7px;width:33.5px;height:17px;background:#19191d;border-radius:1.500px;"></div>
<div class="t" style="top:705.70px;font-size:11.5px;color:#e8e8e8;line-height:16px;white-space:pre;left:871.75px;width:60px;text-align:center;">0.435</div>
<div style="left:885px;top:725.5px;width:33.5px;height:2px;background:linear-gradient(90deg,#141416 0%,#141416 42%,#999 45%,#141416 50%);border-radius:1px;"></div>
<div class="t" style="top:707.00px;font-size:11.5px;color:#8a8a90;line-height:16px;white-space:pre;-webkit-text-stroke:0.15px #8a8a90;right:911.5px;text-align:right;">Mid Detail</div>
<div style="left:1012.5px;top:704.7px;width:33.5px;height:17px;background:#19191d;border-radius:1.500px;"></div>
<div class="t" style="top:705.70px;font-size:11.5px;color:#e8e8e8;line-height:16px;white-space:pre;left:999.25px;width:60px;text-align:center;">0.00</div>
<div style="left:1012.5px;top:725.5px;width:33.5px;height:2px;background:linear-gradient(90deg,#141416 0%,#141416 50%,#888 60%,#eee 95%);border-radius:1px;"></div>
<div style="left:345px;top:731px;width:728.5px;height:190.5px;background:#25252b;"></div>
<div style="left:345px;top:731px;width:728.5px;height:1.3px;background:#141417;"></div>
<div style="left:400.8px;top:765.0px;width:99px;height:99px;background:#060607;border-radius:50%;box-shadow:0 0 3px 1px rgba(0,0,0,.45);"></div>
<div style="left:408.3px;top:772.5px;width:84px;height:84px;background:conic-gradient(from 0deg,#ff2a6a 0deg,#f030c0 25deg,#c040ff 55deg,#6040ff 80deg,#2a50ff 100deg,#20a0ff 130deg,#18e0d0 155deg,#20e060 185deg,#40f020 215deg,#c0f010 245deg,#ffe010 270deg,#ff9010 300deg,#ff4020 330deg,#ff2a6a 360deg);border-radius:50%;"></div>
<div style="left:411.5px;top:775.7px;width:77.6px;height:77.6px;background:conic-gradient(from 0deg,#ff2a6a 0deg,#f030c0 25deg,#c040ff 55deg,#6040ff 80deg,#2a50ff 100deg,#20a0ff 130deg,#18e0d0 155deg,#20e060 185deg,#40f020 215deg,#c0f010 245deg,#ffe010 270deg,#ff9010 300deg,#ff4020 330deg,#ff2a6a 360deg);border-radius:50%;filter:blur(6px) saturate(.8);opacity:.42;clip-path:circle(38.800px at 50% 50%);"></div>
<div style="left:411.5px;top:775.7px;width:77.6px;height:77.6px;background:radial-gradient(circle,rgba(44,44,46,.95) 0%,rgba(40,40,42,.78) 50%,rgba(34,34,36,.55) 100%);border-radius:50%;"></div>
<div style="left:411.8px;top:814.1px;width:77px;height:0.9px;background:rgba(170,170,170,.55);"></div>
<div style="left:449.90000000000003px;top:776.0px;width:0.9px;height:77px;background:rgba(170,170,170,.55);"></div>
<div style="left:448.1px;top:812.3px;width:4.4px;height:4.4px;background:#e8e8e8;border-radius:50%;"></div>
<svg style="left:400.3px;top:764.5px;" width="100" height="100" viewBox="0 0 100 100"><defs><linearGradient id="ag0" gradientUnits="userSpaceOnUse" x1="96.8" y1="43.4" x2="54.9" y2="97.0"><stop offset="0" stop-color="#7a7a80" stop-opacity=".45"/><stop offset="1" stop-color="#f4f4f4"/></linearGradient></defs><path d="M96.84 43.42A47.3 47.3 0 0 1 54.94 97.04" fill="none" stroke="url(#ag0)" stroke-width="1.700" stroke-linecap="round"/></svg>
<div class="t" style="top:743.00px;font-size:13px;color:#f2f2f2;line-height:16px;white-space:pre;-webkit-text-stroke:0.45px #f2f2f2;left:412.8px;width:80px;text-align:center;">Lift</div>
<svg style="left:505.29999999999995px;top:743px;" width="16" height="16" viewBox="0 0 16 16"><g fill="none" stroke="#54545b" stroke-width="1.200" stroke-linecap="round"><path d="M3.300 5A6 6 0 1 1 2.200 9"/><path d="M1.800 2v3.500h3.500"/></g></svg>
<svg style="left:385.8px;top:744px;" width="17" height="16" viewBox="0 0 17 16"><g stroke="#d8d8d8" stroke-width="1.100"><path d="M6.500 0v4.500M6.500 8.500v4.500M0 6.500h4.500M8.500 6.500h4.500"/></g><circle cx="12.500" cy="11.500" r="2" fill="#0a0a0a"/></svg>
<div style="left:385.8px;top:871.5px;width:30px;height:18.5px;background:#19191d;border-radius:1.500px;"></div>
<div class="t" style="top:872.30px;font-size:11.5px;color:#e8e8e8;line-height:16px;white-space:pre;letter-spacing:-0.2px;left:375.8px;width:50px;text-align:center;">-0.04</div>
<div style="left:387.3px;top:892.3px;width:27px;height:2px;background:#f0f0f0;border-radius:1px;"></div>
<div style="left:419.3px;top:871.5px;width:30px;height:18.5px;background:#19191d;border-radius:1.500px;"></div>
<div class="t" style="top:872.30px;font-size:11.5px;color:#e8e8e8;line-height:16px;white-space:pre;letter-spacing:-0.2px;left:409.3px;width:50px;text-align:center;">-0.03</div>
<div style="left:420.8px;top:892.3px;width:27px;height:2px;background:#e03a30;border-radius:1px;"></div>
<div style="left:452.8px;top:871.5px;width:30px;height:18.5px;background:#19191d;border-radius:1.500px;"></div>
<div class="t" style="top:872.30px;font-size:11.5px;color:#e8e8e8;line-height:16px;white-space:pre;letter-spacing:-0.2px;left:442.8px;width:50px;text-align:center;">-0.04</div>
<div style="left:454.3px;top:892.3px;width:27px;height:2px;background:#28b050;border-radius:1px;"></div>
<div style="left:486.3px;top:871.5px;width:30px;height:18.5px;background:#19191d;border-radius:1.500px;"></div>
<div class="t" style="top:872.30px;font-size:11.5px;color:#e8e8e8;line-height:16px;white-space:pre;letter-spacing:-0.2px;left:476.3px;width:50px;text-align:center;">-0.05</div>
<div style="left:487.8px;top:892.3px;width:27px;height:2px;background:#2058d8;border-radius:1px;"></div>
<div style="left:385.8px;top:899.7px;width:131px;height:11.6px;background:#040405;border-radius:6px;"></div>
<div style="left:392.3px;top:901.700px;width:118px;height:7.600px;background:repeating-linear-gradient(90deg,#7a7a80 0,#7a7a80 1.100px,transparent 1.100px,transparent 3.400px);-webkit-mask-image:linear-gradient(90deg,transparent,#000 22%,#000 78%,transparent);mask-image:linear-gradient(90deg,transparent,#000 22%,#000 78%,transparent);"></div>
<div style="left:573.3px;top:765.0px;width:99px;height:99px;background:#060607;border-radius:50%;box-shadow:0 0 3px 1px rgba(0,0,0,.45);"></div>
<div style="left:580.8px;top:772.5px;width:84px;height:84px;background:conic-gradient(from 0deg,#ff2a6a 0deg,#f030c0 25deg,#c040ff 55deg,#6040ff 80deg,#2a50ff 100deg,#20a0ff 130deg,#18e0d0 155deg,#20e060 185deg,#40f020 215deg,#c0f010 245deg,#ffe010 270deg,#ff9010 300deg,#ff4020 330deg,#ff2a6a 360deg);border-radius:50%;"></div>
<div style="left:584.0px;top:775.7px;width:77.6px;height:77.6px;background:conic-gradient(from 0deg,#ff2a6a 0deg,#f030c0 25deg,#c040ff 55deg,#6040ff 80deg,#2a50ff 100deg,#20a0ff 130deg,#18e0d0 155deg,#20e060 185deg,#40f020 215deg,#c0f010 245deg,#ffe010 270deg,#ff9010 300deg,#ff4020 330deg,#ff2a6a 360deg);border-radius:50%;filter:blur(6px) saturate(.8);opacity:.42;clip-path:circle(38.800px at 50% 50%);"></div>
<div style="left:584.0px;top:775.7px;width:77.6px;height:77.6px;background:radial-gradient(circle,rgba(44,44,46,.95) 0%,rgba(40,40,42,.78) 50%,rgba(34,34,36,.55) 100%);border-radius:50%;"></div>
<div style="left:584.3px;top:814.1px;width:77px;height:0.9px;background:rgba(170,170,170,.55);"></div>
<div style="left:622.4px;top:776.0px;width:0.9px;height:77px;background:rgba(170,170,170,.55);"></div>
<div style="left:620.5999999999999px;top:812.3px;width:4.4px;height:4.4px;background:#e8e8e8;border-radius:50%;"></div>
<svg style="left:572.8px;top:764.5px;" width="100" height="100" viewBox="0 0 100 100"><defs><linearGradient id="ag1" gradientUnits="userSpaceOnUse" x1="96.8" y1="43.4" x2="54.9" y2="97.0"><stop offset="0" stop-color="#7a7a80" stop-opacity=".45"/><stop offset="1" stop-color="#f4f4f4"/></linearGradient></defs><path d="M96.84 43.42A47.3 47.3 0 0 1 54.94 97.04" fill="none" stroke="url(#ag1)" stroke-width="1.700" stroke-linecap="round"/></svg>
<div class="t" style="top:743.00px;font-size:12.3px;color:#f2f2f2;line-height:16px;white-space:pre;-webkit-text-stroke:0.45px #f2f2f2;left:585.3px;width:80px;text-align:center;">Gamma</div>
<svg style="left:677.8px;top:743px;" width="16" height="16" viewBox="0 0 16 16"><g fill="none" stroke="#54545b" stroke-width="1.200" stroke-linecap="round"><path d="M3.300 5A6 6 0 1 1 2.200 9"/><path d="M1.800 2v3.500h3.500"/></g></svg>
<div style="left:558.3px;top:871.5px;width:30px;height:18.5px;background:#19191d;border-radius:1.500px;"></div>
<div class="t" style="top:872.30px;font-size:11.5px;color:#e8e8e8;line-height:16px;white-space:pre;letter-spacing:-0.2px;left:548.3px;width:50px;text-align:center;">-0.00</div>
<div style="left:559.8px;top:892.3px;width:27px;height:2px;background:#f0f0f0;border-radius:1px;"></div>
<div style="left:591.8px;top:871.5px;width:30px;height:18.5px;background:#19191d;border-radius:1.500px;"></div>
<div class="t" style="top:872.30px;font-size:11.5px;color:#e8e8e8;line-height:16px;white-space:pre;letter-spacing:-0.2px;left:581.8px;width:50px;text-align:center;">-0.00</div>
<div style="left:593.3px;top:892.3px;width:27px;height:2px;background:#e03a30;border-radius:1px;"></div>
<div style="left:625.3px;top:871.5px;width:30px;height:18.5px;background:#19191d;border-radius:1.500px;"></div>
<div class="t" style="top:872.30px;font-size:11.5px;color:#e8e8e8;line-height:16px;white-space:pre;letter-spacing:-0.2px;left:615.3px;width:50px;text-align:center;">-0.00</div>
<div style="left:626.8px;top:892.3px;width:27px;height:2px;background:#28b050;border-radius:1px;"></div>
<div style="left:658.8px;top:871.5px;width:30px;height:18.5px;background:#19191d;border-radius:1.500px;"></div>
<div class="t" style="top:872.30px;font-size:11.5px;color:#e8e8e8;line-height:16px;white-space:pre;letter-spacing:-0.2px;left:648.8px;width:50px;text-align:center;">-0.00</div>
<div style="left:660.3px;top:892.3px;width:27px;height:2px;background:#2058d8;border-radius:1px;"></div>
<div style="left:558.3px;top:899.7px;width:131px;height:11.6px;background:#040405;border-radius:6px;"></div>
<div style="left:564.8px;top:901.700px;width:118px;height:7.600px;background:repeating-linear-gradient(90deg,#7a7a80 0,#7a7a80 1.100px,transparent 1.100px,transparent 3.400px);-webkit-mask-image:linear-gradient(90deg,transparent,#000 22%,#000 78%,transparent);mask-image:linear-gradient(90deg,transparent,#000 22%,#000 78%,transparent);"></div>
<div style="left:745.1px;top:765.0px;width:99px;height:99px;background:#060607;border-radius:50%;box-shadow:0 0 3px 1px rgba(0,0,0,.45);"></div>
<div style="left:752.6px;top:772.5px;width:84px;height:84px;background:conic-gradient(from 0deg,#ff2a6a 0deg,#f030c0 25deg,#c040ff 55deg,#6040ff 80deg,#2a50ff 100deg,#20a0ff 130deg,#18e0d0 155deg,#20e060 185deg,#40f020 215deg,#c0f010 245deg,#ffe010 270deg,#ff9010 300deg,#ff4020 330deg,#ff2a6a 360deg);border-radius:50%;"></div>
<div style="left:755.8000000000001px;top:775.7px;width:77.6px;height:77.6px;background:conic-gradient(from 0deg,#ff2a6a 0deg,#f030c0 25deg,#c040ff 55deg,#6040ff 80deg,#2a50ff 100deg,#20a0ff 130deg,#18e0d0 155deg,#20e060 185deg,#40f020 215deg,#c0f010 245deg,#ffe010 270deg,#ff9010 300deg,#ff4020 330deg,#ff2a6a 360deg);border-radius:50%;filter:blur(6px) saturate(.8);opacity:.42;clip-path:circle(38.800px at 50% 50%);"></div>
<div style="left:755.8000000000001px;top:775.7px;width:77.6px;height:77.6px;background:radial-gradient(circle,rgba(44,44,46,.95) 0%,rgba(40,40,42,.78) 50%,rgba(34,34,36,.55) 100%);border-radius:50%;"></div>
<div style="left:756.1px;top:814.1px;width:77px;height:0.9px;background:rgba(170,170,170,.55);"></div>
<div style="left:794.2px;top:776.0px;width:0.9px;height:77px;background:rgba(170,170,170,.55);"></div>
<div style="left:792.4px;top:812.3px;width:4.4px;height:4.4px;background:#e8e8e8;border-radius:50%;"></div>
<svg style="left:744.6px;top:764.5px;" width="100" height="100" viewBox="0 0 100 100"><defs><linearGradient id="ag2" gradientUnits="userSpaceOnUse" x1="3.2" y1="43.4" x2="43.4" y2="3.2"><stop offset="0" stop-color="#7a7a80" stop-opacity=".5"/><stop offset="1" stop-color="#f4f4f4"/></linearGradient></defs><path d="M3.16 43.42A47.3 47.3 0 0 1 43.42 3.16" fill="none" stroke="url(#ag2)" stroke-width="1.700" stroke-linecap="round"/></svg>
<div class="t" style="top:743.00px;font-size:12.2px;color:#f2f2f2;line-height:16px;white-space:pre;-webkit-text-stroke:0.45px #f2f2f2;left:757.1px;width:80px;text-align:center;">Gain</div>
<svg style="left:849.6px;top:743px;" width="16" height="16" viewBox="0 0 16 16"><g fill="none" stroke="#54545b" stroke-width="1.200" stroke-linecap="round"><path d="M3.300 5A6 6 0 1 1 2.200 9"/><path d="M1.800 2v3.500h3.500"/></g></svg>
<svg style="left:729.1px;top:744px;" width="17" height="16" viewBox="0 0 17 16"><g stroke="#d8d8d8" stroke-width="1.100"><path d="M6.500 0v4.500M6.500 8.500v4.500M0 6.500h4.500M8.500 6.500h4.500"/></g><circle cx="12.500" cy="11.500" r="2" fill="#f2f2f2"/></svg>
<div style="left:730.1px;top:871.5px;width:30px;height:18.5px;background:#19191d;border-radius:1.500px;"></div>
<div class="t" style="top:872.30px;font-size:11.5px;color:#e8e8e8;line-height:16px;white-space:pre;letter-spacing:-0.2px;left:720.1px;width:50px;text-align:center;">0.96</div>
<div style="left:731.6px;top:892.3px;width:27px;height:2px;background:#f0f0f0;border-radius:1px;"></div>
<div style="left:763.6px;top:871.5px;width:30px;height:18.5px;background:#19191d;border-radius:1.500px;"></div>
<div class="t" style="top:872.30px;font-size:11.5px;color:#e8e8e8;line-height:16px;white-space:pre;letter-spacing:-0.2px;left:753.6px;width:50px;text-align:center;">0.96</div>
<div style="left:765.1px;top:892.3px;width:27px;height:2px;background:#e03a30;border-radius:1px;"></div>
<div style="left:797.1px;top:871.5px;width:30px;height:18.5px;background:#19191d;border-radius:1.500px;"></div>
<div class="t" style="top:872.30px;font-size:11.5px;color:#e8e8e8;line-height:16px;white-space:pre;letter-spacing:-0.2px;left:787.1px;width:50px;text-align:center;">0.96</div>
<div style="left:798.6px;top:892.3px;width:27px;height:2px;background:#28b050;border-radius:1px;"></div>
<div style="left:830.6px;top:871.5px;width:30px;height:18.5px;background:#19191d;border-radius:1.500px;"></div>
<div class="t" style="top:872.30px;font-size:11.5px;color:#e8e8e8;line-height:16px;white-space:pre;letter-spacing:-0.2px;left:820.6px;width:50px;text-align:center;">0.96</div>
<div style="left:832.1px;top:892.3px;width:27px;height:2px;background:#2058d8;border-radius:1px;"></div>
<div style="left:730.1px;top:899.7px;width:131px;height:11.6px;background:#040405;border-radius:6px;"></div>
<div style="left:736.6px;top:901.700px;width:118px;height:7.600px;background:repeating-linear-gradient(90deg,#7a7a80 0,#7a7a80 1.100px,transparent 1.100px,transparent 3.400px);-webkit-mask-image:linear-gradient(90deg,transparent,#000 22%,#000 78%,transparent);mask-image:linear-gradient(90deg,transparent,#000 22%,#000 78%,transparent);"></div>
<div style="left:917.0px;top:765.0px;width:99px;height:99px;background:#060607;border-radius:50%;box-shadow:0 0 3px 1px rgba(0,0,0,.45);"></div>
<div style="left:924.5px;top:772.5px;width:84px;height:84px;background:conic-gradient(from 0deg,#ff2a6a 0deg,#f030c0 25deg,#c040ff 55deg,#6040ff 80deg,#2a50ff 100deg,#20a0ff 130deg,#18e0d0 155deg,#20e060 185deg,#40f020 215deg,#c0f010 245deg,#ffe010 270deg,#ff9010 300deg,#ff4020 330deg,#ff2a6a 360deg);border-radius:50%;"></div>
<div style="left:927.7px;top:775.7px;width:77.6px;height:77.6px;background:conic-gradient(from 0deg,#ff2a6a 0deg,#f030c0 25deg,#c040ff 55deg,#6040ff 80deg,#2a50ff 100deg,#20a0ff 130deg,#18e0d0 155deg,#20e060 185deg,#40f020 215deg,#c0f010 245deg,#ffe010 270deg,#ff9010 300deg,#ff4020 330deg,#ff2a6a 360deg);border-radius:50%;filter:blur(6px) saturate(.8);opacity:.42;clip-path:circle(38.800px at 50% 50%);"></div>
<div style="left:927.7px;top:775.7px;width:77.6px;height:77.6px;background:radial-gradient(circle,rgba(44,44,46,.95) 0%,rgba(40,40,42,.78) 50%,rgba(34,34,36,.55) 100%);border-radius:50%;"></div>
<div style="left:928.0px;top:814.1px;width:77px;height:0.9px;background:rgba(170,170,170,.55);"></div>
<div style="left:966.1px;top:776.0px;width:0.9px;height:77px;background:rgba(170,170,170,.55);"></div>
<div style="left:964.3px;top:812.3px;width:4.4px;height:4.4px;background:#e8e8e8;border-radius:50%;"></div>
<svg style="left:916.5px;top:764.5px;" width="100" height="100" viewBox="0 0 100 100"><defs><linearGradient id="ag3" gradientUnits="userSpaceOnUse" x1="96.8" y1="43.4" x2="54.9" y2="97.0"><stop offset="0" stop-color="#7a7a80" stop-opacity=".45"/><stop offset="1" stop-color="#f4f4f4"/></linearGradient></defs><path d="M96.84 43.42A47.3 47.3 0 0 1 54.94 97.04" fill="none" stroke="url(#ag3)" stroke-width="1.700" stroke-linecap="round"/></svg>
<div class="t" style="top:743.00px;font-size:12.8px;color:#f2f2f2;line-height:16px;white-space:pre;-webkit-text-stroke:0.45px #f2f2f2;left:929.0px;width:80px;text-align:center;">Offset</div>
<svg style="left:1021.5px;top:743px;" width="16" height="16" viewBox="0 0 16 16"><g fill="none" stroke="#54545b" stroke-width="1.200" stroke-linecap="round"><path d="M3.300 5A6 6 0 1 1 2.200 9"/><path d="M1.800 2v3.500h3.500"/></g></svg>
<div style="left:901.5px;top:871.5px;width:40px;height:18.5px;background:#19191d;border-radius:1.500px;"></div>
<div class="t" style="top:872.30px;font-size:11.5px;color:#e8e8e8;line-height:16px;white-space:pre;letter-spacing:-0.2px;left:896.5px;width:50px;text-align:center;">25.00</div>
<div style="left:907.5px;top:892.3px;width:28px;height:2px;background:#e03a30;border-radius:1px;"></div>
<div style="left:946.5px;top:871.5px;width:40px;height:18.5px;background:#19191d;border-radius:1.500px;"></div>
<div class="t" style="top:872.30px;font-size:11.5px;color:#e8e8e8;line-height:16px;white-space:pre;letter-spacing:-0.2px;left:941.5px;width:50px;text-align:center;">25.00</div>
<div style="left:952.5px;top:892.3px;width:28px;height:2px;background:#28b050;border-radius:1px;"></div>
<div style="left:991.5px;top:871.5px;width:40px;height:18.5px;background:#19191d;border-radius:1.500px;"></div>
<div class="t" style="top:872.30px;font-size:11.5px;color:#e8e8e8;line-height:16px;white-space:pre;letter-spacing:-0.2px;left:986.5px;width:50px;text-align:center;">25.00</div>
<div style="left:997.5px;top:892.3px;width:28px;height:2px;background:#2058d8;border-radius:1px;"></div>
<div style="left:902.0px;top:899.7px;width:131px;height:11.6px;background:#040405;border-radius:6px;"></div>
<div style="left:908.5px;top:901.700px;width:118px;height:7.600px;background:repeating-linear-gradient(90deg,#7a7a80 0,#7a7a80 1.100px,transparent 1.100px,transparent 3.400px);-webkit-mask-image:linear-gradient(90deg,transparent,#000 22%,#000 78%,transparent);mask-image:linear-gradient(90deg,transparent,#000 22%,#000 78%,transparent);"></div>
<div style="left:345px;top:921.5px;width:728.5px;height:30px;background:#2a2a30;"></div>
<div style="left:345px;top:921px;width:728.5px;height:1.3px;background:#141417;"></div>
<div class="t" style="top:927.50px;font-size:11.5px;color:#8a8a90;line-height:16px;white-space:pre;-webkit-text-stroke:0.15px #8a8a90;right:1502px;text-align:right;">Color Boost</div>
<div style="left:421.5px;top:925.8px;width:34px;height:17.5px;background:#19191d;border-radius:1.500px;"></div>
<div class="t" style="top:926.20px;font-size:11.5px;color:#e8e8e8;line-height:16px;white-space:pre;left:408.5px;width:60px;text-align:center;">0.00</div>
<div style="left:421.5px;top:946px;width:34px;height:2px;background:linear-gradient(90deg,#121214 0%,#121214 35%,#30c040 50%,#3060e0 62%,#c040e0 78%,#e8c0e0 100%);border-radius:1px;"></div>
<div class="t" style="top:927.50px;font-size:11.5px;color:#8a8a90;line-height:16px;white-space:pre;-webkit-text-stroke:0.15px #8a8a90;right:1384px;text-align:right;">Shadows</div>
<div style="left:540px;top:925.8px;width:34px;height:17.5px;background:#19191d;border-radius:1.500px;"></div>
<div class="t" style="top:926.20px;font-size:11.5px;color:#e8e8e8;line-height:16px;white-space:pre;left:527.0px;width:60px;text-align:center;">0.00</div>
<div style="left:540px;top:946px;width:34px;height:2px;background:linear-gradient(90deg,#0c0c0e,#0c0c0e 60%,#1c1c20);border-radius:1px;"></div>
<div class="t" style="top:927.50px;font-size:11.5px;color:#8a8a90;line-height:16px;white-space:pre;-webkit-text-stroke:0.15px #8a8a90;right:1266px;text-align:right;">Highlights</div>
<div style="left:658.5px;top:925.8px;width:34px;height:17.5px;background:#19191d;border-radius:1.500px;"></div>
<div class="t" style="top:926.20px;font-size:11.5px;color:#e8e8e8;line-height:16px;white-space:pre;left:645.5px;width:60px;text-align:center;">0.00</div>
<div style="left:658.5px;top:946px;width:34px;height:2px;background:linear-gradient(90deg,#2a2a2e,#bbb 60%,#f4f4f4);border-radius:1px;"></div>
<div class="t" style="top:927.50px;font-size:11.5px;color:#8a8a90;line-height:16px;white-space:pre;-webkit-text-stroke:0.15px #8a8a90;right:1148px;text-align:right;">Saturation</div>
<div style="left:776px;top:925.8px;width:34px;height:17.5px;background:#19191d;border-radius:1.500px;"></div>
<div class="t" style="top:926.20px;font-size:11.5px;color:#e8e8e8;line-height:16px;white-space:pre;left:763.0px;width:60px;text-align:center;">50.00</div>
<div style="left:776px;top:946px;width:34px;height:2px;background:linear-gradient(90deg,#555 0%,#888 25%,#e03030 40%,#e0c020 52%,#30c040 64%,#3060e0 80%,#c040e0 100%);border-radius:1px;"></div>
<div class="t" style="top:927.50px;font-size:11.5px;color:#8a8a90;line-height:16px;white-space:pre;-webkit-text-stroke:0.15px #8a8a90;right:1029.5px;text-align:right;">Hue</div>
<div style="left:894.5px;top:925.8px;width:34px;height:17.5px;background:#19191d;border-radius:1.500px;"></div>
<div class="t" style="top:926.20px;font-size:11.5px;color:#e8e8e8;line-height:16px;white-space:pre;left:881.5px;width:60px;text-align:center;">50.00</div>
<div style="left:894.5px;top:946px;width:34px;height:2px;background:linear-gradient(90deg,#e03030,#e0c020 20%,#30c040 40%,#20c0c0 55%,#3060e0 70%,#c040e0 85%,#e03030);border-radius:1px;"></div>
<div class="t" style="top:927.50px;font-size:11.5px;color:#8a8a90;line-height:16px;white-space:pre;-webkit-text-stroke:0.15px #8a8a90;right:911.5px;text-align:right;">Lum Mix</div>
<div style="left:1012px;top:925.8px;width:36px;height:17.5px;background:#19191d;border-radius:1.500px;"></div>
<div class="t" style="top:926.20px;font-size:11.5px;color:#e8e8e8;line-height:16px;white-space:pre;left:1000.0px;width:60px;text-align:center;">100.00</div>
<div style="left:1012px;top:946px;width:36px;height:2px;background:linear-gradient(90deg,#30c040 0%,#3060e0 30%,#c040e0 50%,#ddd 70%,#f4f4f4 100%);border-radius:1px;"></div>
<div style="left:345px;top:951.5px;width:1214.5px;height:36.5px;background:#111113;border-radius:0 0 7px 7px;"></div>
<svg style="left:370px;top:963.5px;" width="22" height="17" viewBox="0 0 22 17"><path d="M8.500 1L1 7.500 8.500 14v-4c5.500 0 9 1.500 11 6.500 0-7-3.500-11.500-11-11.500z" fill="#8e8e92"/></svg>
<svg style="left:414px;top:963.5px;" width="22" height="17" viewBox="0 0 22 17"><path d="M13.500 1L21 7.500 13.500 14v-4c-5.500 0-9 1.500-11 6.500 0-7 3.500-11.500 11-11.500z" fill="#8e8e92"/></svg>
<svg style="left:461px;top:962.5px;" width="16" height="19" viewBox="0 0 16 19"><g fill="#8e8e92"><path d="M1 3.500h14v1.800H1z"/><path d="M5.500 1.200h5v2h-5z"/><path d="M2.300 6.300h11.400l-.8 11.500H3.100z"/></g><path d="M5.700 8.200v7.800M8 8.200v7.800M10.300 8.200v7.800" stroke="#111113" stroke-width="1.100"/></svg>
<svg style="left:885px;top:963px;" width="26" height="17" viewBox="0 0 26 17"><g fill="none" stroke="#6a6a70" stroke-width="1.200"><path d="M9 2h15l-2.500 12H6.500z"/><path d="M15.500 2l-2.500 12"/><path d="M0 5.500h6M1 8.500h5M2.500 11.500h3" stroke-width="1"/></g></svg>
<div style="left:953px;top:953px;width:106px;height:36px;background:#030304;"></div>
<div style="left:953px;top:988.5px;width:106px;height:1.8px;background:#e5432f;"></div>
<svg style="left:994px;top:961px;" width="22" height="22" viewBox="0 0 22 22"><circle cx="11.00" cy="3.70" r="1.700" fill="#f04848"/><circle cx="16.16" cy="5.84" r="1.700" fill="#f08838"/><circle cx="18.30" cy="11.00" r="1.700" fill="#e8d040"/><circle cx="16.16" cy="16.16" r="1.700" fill="#58d048"/><circle cx="11.00" cy="18.30" r="1.700" fill="#40c8c8"/><circle cx="5.84" cy="16.16" r="1.700" fill="#4878f0"/><circle cx="3.70" cy="11.00" r="1.700" fill="#9858f0"/><circle cx="5.84" cy="5.84" r="1.700" fill="#e858c8"/></svg>
<svg style="left:1470.5px;top:962.5px;" width="19" height="18" viewBox="0 0 19 18"><path d="M9.500 1L.8 9h2.500v8h4.700v-5h3v5h4.700V9h2.500z" fill="#8e8e92"/></svg>
<svg style="left:1514.5px;top:961.5px;" width="20" height="20" viewBox="0 0 20 20"><g transform="translate(10,10)"><rect x="-1.900" y="-9.300" width="3.800" height="4.500" fill="#8e8e92" transform="rotate(0)"/><rect x="-1.900" y="-9.300" width="3.800" height="4.500" fill="#8e8e92" transform="rotate(45)"/><rect x="-1.900" y="-9.300" width="3.800" height="4.500" fill="#8e8e92" transform="rotate(90)"/><rect x="-1.900" y="-9.300" width="3.800" height="4.500" fill="#8e8e92" transform="rotate(135)"/><rect x="-1.900" y="-9.300" width="3.800" height="4.500" fill="#8e8e92" transform="rotate(180)"/><rect x="-1.900" y="-9.300" width="3.800" height="4.500" fill="#8e8e92" transform="rotate(225)"/><rect x="-1.900" y="-9.300" width="3.800" height="4.500" fill="#8e8e92" transform="rotate(270)"/><rect x="-1.900" y="-9.300" width="3.800" height="4.500" fill="#8e8e92" transform="rotate(315)"/><circle r="6.200" fill="#8e8e92"/><circle r="3" fill="#111113"/></g></svg>
<div style="left:1074.5px;top:672px;width:485px;height:28px;background:#1b1b20;"></div>
<div style="left:1073px;top:672px;width:1.5px;height:280px;background:#111114;"></div>
<div class="t" style="top:679.00px;font-size:11.6px;color:#f2f2f2;line-height:16px;white-space:pre;-webkit-text-stroke:0.45px #f2f2f2;left:1083.3px;">Scopes</div>
<div class="t" style="top:679.00px;font-size:12.2px;color:#f2f2f2;line-height:16px;white-space:pre;-webkit-text-stroke:0.45px #f2f2f2;right:459.20000000000005px;text-align:right;">Parade</div>
<svg style="left:1464px;top:692.5px;" width="5" height="5" viewBox="0 0 5 5"><path d="M5 0v5H0z" fill="#77777d"/></svg>
<div style="left:1477.5px;top:673px;width:1.5px;height:27px;background:#111114;"></div>
<div style="left:1518.5px;top:673px;width:1.5px;height:27px;background:#111114;"></div>
<svg style="left:1487.5px;top:677px;" width="22" height="20" viewBox="0 0 22 20"><g fill="none" stroke="#6c6c73" stroke-width="1.200"><path d="M1 3.500h11M16 3.500h5M1 10h4M9 10h12M1 16.500h9M14 16.500h7"/><circle cx="14" cy="3.500" r="2"/><circle cx="7" cy="10" r="2"/><circle cx="12" cy="16.500" r="2"/></g></svg>
<svg style="left:1530.5px;top:685px;" width="20" height="4" viewBox="0 0 20 4"><circle cx="2" cy="2" r="1.5" fill="#77777d"/><circle cx="10" cy="2" r="1.5" fill="#77777d"/><circle cx="18" cy="2" r="1.5" fill="#77777d"/></svg>
<div style="left:1074.5px;top:700px;width:485px;height:251.5px;background:#000;"></div>
<svg style="left:1117.0px;top:708.4px;overflow:visible" width="436.4" height="230.2" viewBox="0 0 436.4 230.2"><defs><filter id="sb" x="-2%" y="-2%" width="104%" height="104%"><feGaussianBlur stdDeviation="0.55 0.8"/></filter></defs><g transform="translate(0.00,0) scale(0.9861,0.9964)" filter="url(#sb)"><path d="M0.5 223v1M0.5 116v4M0.5 108v2M1.5 108v1M2.5 106v1M3.5 105v1M4.5 103v1M5.5 101v2M6.5 223v1M6.5 100v1M7.5 222v1M7.5 133v1M7.5 130v2M7.5 99v2M8.5 222v1M8.5 96v2M9.5 222v1M9.5 94v1M10.5 222v1M10.5 93v1M11.5 222v1M11.5 91v3M12.5 223v1M12.5 89v3M13.5 223v1M13.5 88v1M14.5 223v1M14.5 85v1M15.5 223v1M15.5 81v2M16.5 79v2M17.5 222v1M17.5 76v2M18.5 223v1M18.5 72v4M19.5 222v1M19.5 66v4M20.5 223v1M20.5 63v3M21.5 223v1M21.5 59v4M22.5 223v1M22.5 56v3M23.5 222v1M23.5 52v2M24.5 223v1M24.5 50v2M25.5 223v1M25.5 202v11M25.5 188v2M25.5 51v1M26.5 222v1M26.5 190v29M26.5 162v1M26.5 151v9M26.5 51v2M27.5 222v1M27.5 204v5M27.5 194v1M27.5 50v1M28.5 216v1M28.5 211v2M28.5 68v3M28.5 51v2M29.5 223v1M29.5 32v2M30.5 223v1M30.5 23v2M31.5 223v1M31.5 16v2M32.5 223v1M32.5 5v3M33.5 223v1M33.5 5v2M34.5 222v1M34.5 4v2M35.5 5v1M36.5 223v1M36.5 1v1M37.5 223v1M37.5 5v1M38.5 223v1M38.5 3v2M39.5 223v1M39.5 189v1M39.5 178v9M39.5 2v2M40.5 223v1M40.5 4v2M41.5 223v1M41.5 7v2M42.5 223v1M42.5 83v3M42.5 80v2M42.5 6v3M43.5 222v1M43.5 5v2M44.5 223v1M44.5 3v2M45.5 223v1M45.5 2v1M46.5 223v1M46.5 4v1M47.5 222v1M47.5 173v2M47.5 4v2M48.5 185v10M48.5 162v18M48.5 2v2M49.5 222v1M49.5 177v13M49.5 164v8M49.5 6v2M50.5 222v1M50.5 194v9M50.5 162v31M50.5 3v3M51.5 222v1M51.5 201v2M51.5 163v33M51.5 1v2M52.5 222v1M52.5 198v5M52.5 178v17M52.5 164v9M52.5 4v1M53.5 222v1M53.5 164v39M53.5 1v2M54.5 222v1M54.5 177v26M54.5 164v1M54.5 3v2M55.5 222v1M55.5 198v5M55.5 181v16M55.5 1v1M56.5 222v1M56.5 190v2M56.5 0v1M57.5 223v1M57.5 188v15M57.5 0v1M58.5 222v1M58.5 0v2M59.5 193v3M59.5 189v3M59.5 181v3M59.5 177v1M59.5 2v2M60.5 174v1M60.5 3v2M61.5 222v1M61.5 170v9M61.5 2v2M62.5 169v15M62.5 4v1M63.5 222v1M63.5 168v19M63.5 2v2M64.5 222v1M64.5 167v15M64.5 3v1M65.5 222v1M65.5 202v1M65.5 194v7M65.5 164v24M65.5 78v11M65.5 4v1M66.5 222v1M66.5 176v27M66.5 164v5M66.5 72v22M66.5 5v2M67.5 222v1M67.5 199v4M67.5 173v12M67.5 164v6M67.5 85v1M67.5 1v1M68.5 3v1M69.5 222v1M69.5 165v7M69.5 4v1M70.5 180v3M70.5 174v1M70.5 169v4M70.5 3v1M71.5 223v1M71.5 3v1M72.5 222v1M72.5 4v1M73.5 222v1M73.5 3v2M74.5 222v1M74.5 183v13M74.5 3v1M75.5 221v2M75.5 193v11M75.5 163v22M75.5 2v2M76.5 221v1M76.5 196v10M76.5 176v1M76.5 169v6M76.5 160v3M76.5 148v1M76.5 3v2M77.5 221v2M77.5 194v11M77.5 161v7M77.5 3v2M78.5 221v2M78.5 195v10M78.5 192v1M78.5 162v18M78.5 4v2M79.5 221v1M79.5 188v16M79.5 185v1M79.5 163v20M79.5 75v3M79.5 4v2M80.5 222v1M80.5 3v2M81.5 222v1M81.5 2v1M82.5 222v1M82.5 1v1M83.5 3v1M84.5 223v1M84.5 2v1M85.5 223v1M85.5 5v2M86.5 222v1M86.5 4v2M87.5 4v2M88.5 223v1M88.5 6v2M89.5 223v1M89.5 13v1M90.5 223v1M90.5 22v1M91.5 223v1M91.5 30v4M92.5 222v1M92.5 84v9M92.5 48v2M93.5 222v1M93.5 88v5M93.5 50v2M94.5 221v2M94.5 135v6M94.5 54v1M95.5 222v1M95.5 105v5M95.5 56v1M96.5 221v1M96.5 188v1M96.5 135v10M96.5 60v1M97.5 216v6M97.5 180v10M97.5 165v1M97.5 129v17M97.5 113v1M97.5 111v1M97.5 62v1M98.5 216v5M98.5 201v2M98.5 181v18M98.5 150v15M98.5 128v21M98.5 64v2M99.5 174v47M99.5 119v43M99.5 67v4M100.5 173v48M100.5 128v42M100.5 71v3M101.5 220v2M101.5 148v9M101.5 77v2M102.5 221v1M102.5 157v2M102.5 80v2M103.5 221v2M103.5 83v2M104.5 53v4M105.5 223v1M105.5 48v5M106.5 223v1M106.5 26v3M107.5 223v1M107.5 49v6M108.5 223v1M108.5 50v2M109.5 223v1M109.5 48v3M110.5 223v1M110.5 53v3M111.5 223v1M111.5 53v3M112.5 222v1M112.5 50v5M113.5 222v1M113.5 52v9M114.5 223v1M114.5 35v3M115.5 41v1M115.5 35v2M116.5 223v1M116.5 49v4M116.5 41v2M116.5 33v3M117.5 222v1M117.5 48v7M117.5 43v2M117.5 31v2M118.5 222v1M118.5 44v15M118.5 31v1M119.5 222v1M119.5 45v18M119.5 31v1M120.5 222v1M120.5 56v3M120.5 31v1M121.5 222v1M121.5 31v1M122.5 223v1M122.5 58v1M122.5 32v1M123.5 222v1M123.5 57v9M123.5 34v2M124.5 222v1M124.5 36v1M125.5 223v1M125.5 35v1M126.5 223v1M126.5 37v1M127.5 223v1M127.5 61v8M127.5 37v1M128.5 222v1M128.5 116v1M128.5 114v1M128.5 94v4M128.5 62v25M128.5 38v1M129.5 222v1M129.5 102v18M129.5 84v13M129.5 63v2M129.5 38v1M130.5 65v17M130.5 38v1M131.5 223v1M131.5 39v2M132.5 42v2M133.5 44v1M134.5 223v1M134.5 72v4M134.5 45v1M135.5 223v1M135.5 46v1M136.5 47v1M137.5 48v1M138.5 223v1M138.5 50v1M139.5 223v1M139.5 51v2M140.5 223v1M140.5 51v2M141.5 223v1M141.5 52v1M142.5 223v1M142.5 55v3M143.5 222v1M143.5 59v2M144.5 63v1M145.5 222v1M145.5 65v2" stroke="rgb(29, 9, 7)" stroke-width="1.050" fill="none"/><path d="M0.5 222v1M0.5 120v1M0.5 110v6M1.5 223v1M1.5 113v6M1.5 109v2M2.5 223v1M2.5 107v1M3.5 223v1M3.5 106v5M4.5 104v3M5.5 223v1M5.5 103v1M6.5 222v1M6.5 101v1M7.5 221v1M7.5 134v5M7.5 132v1M7.5 127v3M7.5 101v1M8.5 221v1M8.5 127v13M8.5 98v1M9.5 221v1M9.5 126v4M9.5 95v2M10.5 221v1M10.5 140v1M10.5 123v16M10.5 94v1M11.5 121v11M11.5 94v1M12.5 222v1M12.5 122v5M12.5 92v2M13.5 222v1M13.5 120v10M13.5 89v2M14.5 222v1M14.5 86v2M15.5 222v1M15.5 118v10M15.5 83v2M16.5 222v1M16.5 116v16M16.5 81v1M17.5 118v12M17.5 78v2M18.5 222v1M18.5 76v1M19.5 221v1M19.5 70v2M20.5 222v1M20.5 66v2M21.5 63v4M22.5 222v1M22.5 59v4M23.5 221v1M23.5 54v1M24.5 222v1M24.5 208v1M24.5 199v5M24.5 186v1M24.5 52v1M25.5 222v1M25.5 213v6M25.5 190v12M25.5 146v42M25.5 130v9M25.5 52v1M26.5 219v3M26.5 163v27M26.5 160v2M26.5 130v21M26.5 53v1M27.5 209v13M27.5 195v9M27.5 181v13M27.5 166v2M27.5 154v11M27.5 148v4M27.5 51v1M28.5 213v3M28.5 64v4M28.5 53v2M29.5 34v1M30.5 25v2M31.5 222v1M31.5 18v2M32.5 8v2M33.5 7v2M34.5 6v2M35.5 222v1M35.5 108v5M35.5 6v2M36.5 222v1M36.5 2v1M37.5 222v1M37.5 79v2M37.5 6v2M38.5 222v1M38.5 177v14M38.5 75v17M38.5 5v3M39.5 222v1M39.5 190v6M39.5 187v2M39.5 172v6M39.5 75v17M39.5 56v8M39.5 4v1M40.5 222v1M40.5 186v3M40.5 183v1M40.5 180v1M40.5 75v11M40.5 59v13M40.5 6v1M41.5 222v1M41.5 185v1M41.5 178v3M41.5 75v18M41.5 60v4M41.5 9v2M42.5 222v1M42.5 86v6M42.5 82v1M42.5 57v23M42.5 9v2M43.5 91v3M43.5 89v1M43.5 58v30M43.5 7v4M44.5 222v1M44.5 5v2M45.5 222v1M45.5 3v2M46.5 5v3M47.5 198v1M47.5 196v1M47.5 175v18M47.5 163v10M47.5 59v10M47.5 6v2M48.5 222v1M48.5 195v9M48.5 180v5M48.5 160v2M48.5 91v2M48.5 57v11M48.5 4v3M49.5 190v13M49.5 172v5M49.5 162v2M49.5 59v8M49.5 8v2M50.5 221v1M50.5 203v1M50.5 193v1M50.5 160v2M50.5 94v2M50.5 90v3M50.5 58v10M50.5 6v2M51.5 221v1M51.5 203v2M51.5 196v5M51.5 160v3M51.5 60v3M51.5 3v3M52.5 221v1M52.5 203v2M52.5 195v3M52.5 173v5M52.5 162v2M52.5 5v2M53.5 221v1M53.5 203v2M53.5 161v3M53.5 60v4M53.5 3v2M54.5 221v1M54.5 203v2M54.5 165v12M54.5 162v2M54.5 95v1M54.5 89v5M54.5 59v7M54.5 5v1M55.5 203v2M55.5 197v1M55.5 171v10M55.5 164v5M55.5 61v4M55.5 2v1M56.5 221v1M56.5 192v12M56.5 175v15M56.5 173v1M56.5 1v1M57.5 222v1M57.5 203v1M57.5 175v13M57.5 165v5M57.5 1v1M58.5 170v33M58.5 168v1M58.5 2v1M59.5 222v1M59.5 196v7M59.5 192v1M59.5 184v5M59.5 178v3M59.5 168v9M59.5 166v1M59.5 91v1M60.5 222v1M60.5 175v29M60.5 164v10M60.5 5v1M61.5 221v1M61.5 179v24M61.5 164v6M61.5 86v4M61.5 4v1M62.5 222v1M62.5 184v19M62.5 164v5M62.5 77v17M62.5 5v2M63.5 187v17M63.5 164v4M63.5 82v11M63.5 73v2M63.5 4v2M64.5 221v1M64.5 182v21M64.5 163v4M64.5 72v21M64.5 4v2M65.5 221v1M65.5 203v1M65.5 201v1M65.5 188v6M65.5 162v2M65.5 89v5M65.5 71v7M65.5 5v2M66.5 221v1M66.5 203v2M66.5 162v2M66.5 147v1M66.5 94v3M66.5 70v2M66.5 7v2M67.5 221v1M67.5 203v1M67.5 185v14M67.5 163v1M67.5 86v8M67.5 71v14M67.5 2v2M68.5 222v1M68.5 193v10M68.5 164v26M68.5 80v10M68.5 4v1M69.5 172v31M69.5 163v2M69.5 73v4M69.5 5v1M70.5 222v1M70.5 183v20M70.5 175v5M70.5 173v1M70.5 164v5M70.5 4v2M71.5 222v1M71.5 187v14M71.5 168v10M71.5 4v2M72.5 190v13M72.5 164v25M72.5 5v1M73.5 221v1M73.5 168v36M73.5 5v1M74.5 221v1M74.5 196v7M74.5 163v20M74.5 4v2M75.5 220v1M75.5 218v1M75.5 204v2M75.5 160v3M75.5 142v13M75.5 136v5M75.5 88v1M75.5 73v5M75.5 57v4M75.5 4v2M76.5 211v10M76.5 206v3M76.5 149v11M76.5 113v35M76.5 72v25M76.5 54v6M76.5 5v4M77.5 218v3M77.5 205v4M77.5 158v3M77.5 142v13M77.5 128v6M77.5 112v15M77.5 110v1M77.5 73v20M77.5 56v5M77.5 5v2M78.5 219v2M78.5 217v1M78.5 205v3M78.5 159v3M78.5 149v2M78.5 107v11M78.5 73v22M78.5 55v6M78.5 6v2M79.5 215v6M79.5 204v3M79.5 160v3M79.5 143v7M79.5 123v1M79.5 107v15M79.5 78v16M79.5 72v3M79.5 54v9M79.5 6v2M80.5 221v1M80.5 201v2M80.5 162v38M80.5 111v10M80.5 88v5M80.5 72v14M80.5 57v4M80.5 5v1M81.5 221v1M81.5 182v1M81.5 87v1M81.5 74v4M81.5 3v2M82.5 221v1M82.5 2v1M83.5 222v1M83.5 4v2M84.5 222v1M84.5 3v1M85.5 222v1M85.5 7v1M86.5 221v1M86.5 6v2M87.5 222v1M87.5 6v2M88.5 222v1M88.5 8v2M89.5 222v1M89.5 14v1M90.5 23v1M91.5 222v1M91.5 34v8M92.5 221v1M92.5 188v10M92.5 173v1M92.5 135v15M92.5 93v5M92.5 79v5M92.5 50v1M93.5 219v3M93.5 185v11M93.5 129v16M93.5 110v2M93.5 93v14M93.5 85v3M93.5 52v1M94.5 220v1M94.5 218v1M94.5 184v10M94.5 141v5M94.5 127v8M94.5 124v1M94.5 88v15M94.5 55v1M95.5 221v1M95.5 186v11M95.5 147v1M95.5 134v12M95.5 110v6M95.5 93v12M95.5 57v2M96.5 216v5M96.5 204v4M96.5 201v1M96.5 189v8M96.5 178v10M96.5 170v5M96.5 145v24M96.5 126v9M96.5 96v22M96.5 61v1M97.5 206v10M97.5 190v11M97.5 166v14M97.5 146v19M97.5 114v15M97.5 112v1M97.5 105v6M97.5 63v2M98.5 203v13M98.5 199v2M98.5 165v16M98.5 149v1M98.5 110v18M98.5 66v1M99.5 162v12M99.5 114v5M99.5 71v1M100.5 170v3M100.5 125v3M100.5 74v1M101.5 208v12M101.5 176v27M101.5 168v2M101.5 157v10M101.5 125v23M101.5 79v1M102.5 214v7M102.5 199v2M102.5 187v11M102.5 159v7M102.5 149v8M102.5 82v2M103.5 220v1M103.5 201v1M103.5 196v1M103.5 194v1M103.5 148v15M103.5 85v1M104.5 223v1M104.5 57v16M105.5 222v1M105.5 53v12M106.5 29v3M107.5 55v5M108.5 52v4M109.5 51v4M110.5 222v1M110.5 74v7M110.5 56v8M111.5 222v1M111.5 77v6M111.5 56v5M112.5 221v1M112.5 71v13M112.5 55v10M113.5 221v1M113.5 61v26M114.5 38v4M115.5 223v1M115.5 42v8M115.5 37v4M116.5 222v1M116.5 53v6M116.5 36v5M117.5 65v1M117.5 62v1M117.5 55v6M117.5 42v1M117.5 33v2M118.5 221v1M118.5 75v7M118.5 59v6M118.5 43v1M118.5 32v1M119.5 221v1M119.5 63v22M119.5 43v2M119.5 32v1M120.5 221v1M120.5 59v5M120.5 52v4M120.5 32v1M121.5 57v4M121.5 32v1M122.5 222v1M122.5 59v4M122.5 56v2M122.5 33v2M123.5 221v1M123.5 66v5M123.5 55v2M123.5 36v1M124.5 221v1M124.5 58v4M124.5 37v1M125.5 58v8M125.5 36v1M126.5 222v1M126.5 59v8M126.5 38v1M127.5 222v1M127.5 69v13M127.5 58v3M127.5 38v2M128.5 221v1M128.5 117v3M128.5 115v1M128.5 98v16M128.5 87v7M128.5 60v2M129.5 221v1M129.5 186v5M129.5 120v3M129.5 62v1M129.5 39v1M130.5 222v1M130.5 82v19M130.5 63v2M130.5 39v1M131.5 69v10M131.5 41v2M132.5 223v1M132.5 76v1M132.5 69v5M133.5 223v1M133.5 74v1M133.5 69v4M133.5 45v1M134.5 222v1M134.5 76v5M134.5 69v3M134.5 46v2M135.5 222v1M135.5 71v12M135.5 47v1M136.5 223v1M136.5 48v1M137.5 223v1M137.5 49v1M138.5 51v1M139.5 79v5M140.5 53v1M141.5 53v1M142.5 222v1M142.5 58v2M143.5 221v1M143.5 61v2M144.5 222v1M144.5 86v2M144.5 64v2M145.5 221v1M145.5 102v6M145.5 84v4M145.5 67v2" stroke="rgb(50, 16, 13)" stroke-width="1.050" fill="none"/><path d="M0.5 121v1M1.5 119v1M1.5 111v2M2.5 115v4M2.5 108v1M3.5 111v4M4.5 223v1M4.5 116v1M4.5 107v1M5.5 111v3M5.5 104v2M6.5 102v1M7.5 198v23M7.5 139v4M7.5 125v2M7.5 107v5M7.5 102v2M8.5 216v5M8.5 140v5M8.5 125v2M8.5 99v1M9.5 220v1M9.5 130v10M9.5 124v2M9.5 97v1M10.5 220v1M10.5 141v4M10.5 139v1M10.5 122v1M10.5 95v1M11.5 221v1M11.5 132v11M11.5 119v2M11.5 95v1M12.5 221v1M12.5 138v2M12.5 136v1M12.5 127v6M12.5 119v3M13.5 221v1M13.5 140v1M13.5 130v9M13.5 118v2M13.5 91v1M14.5 120v8M14.5 88v1M15.5 128v14M15.5 116v2M15.5 85v2M16.5 221v1M16.5 132v8M16.5 113v3M16.5 82v2M17.5 221v1M17.5 130v7M17.5 113v5M17.5 80v2M18.5 221v1M18.5 119v11M18.5 108v9M18.5 77v2M19.5 195v1M19.5 104v19M19.5 72v2M20.5 68v2M21.5 222v1M21.5 67v2M22.5 221v1M22.5 93v7M22.5 63v1M23.5 182v39M23.5 162v2M23.5 91v7M23.5 55v2M24.5 221v1M24.5 209v10M24.5 204v4M24.5 187v12M24.5 179v7M24.5 175v2M24.5 160v14M24.5 53v1M25.5 221v1M25.5 219v1M25.5 139v7M25.5 53v1M26.5 128v2M26.5 54v1M27.5 168v13M27.5 165v1M27.5 152v2M27.5 129v19M27.5 52v1M28.5 62v2M28.5 55v1M29.5 222v1M29.5 35v1M30.5 222v1M30.5 27v1M31.5 20v2M32.5 222v1M32.5 10v1M33.5 222v1M33.5 9v2M34.5 221v1M34.5 189v6M34.5 100v12M34.5 8v2M35.5 221v1M35.5 190v5M35.5 187v1M35.5 121v1M35.5 113v4M35.5 104v4M35.5 102v1M35.5 90v1M35.5 84v1M35.5 82v1M35.5 52v8M35.5 8v3M36.5 107v4M36.5 82v2M36.5 3v1M37.5 179v11M37.5 81v6M37.5 75v4M37.5 8v1M38.5 191v6M38.5 158v19M38.5 152v3M38.5 92v2M38.5 60v15M38.5 48v5M38.5 8v1M39.5 221v1M39.5 196v2M39.5 151v21M39.5 126v16M39.5 101v13M39.5 92v4M39.5 64v11M39.5 47v9M39.5 5v2M40.5 189v5M40.5 184v2M40.5 181v2M40.5 163v17M40.5 86v17M40.5 72v3M40.5 53v6M40.5 49v2M40.5 7v2M41.5 221v1M41.5 186v8M41.5 181v4M41.5 172v6M41.5 93v2M41.5 64v11M41.5 58v2M41.5 11v2M42.5 221v1M42.5 170v19M42.5 128v1M42.5 92v5M42.5 54v3M42.5 11v4M43.5 221v1M43.5 176v8M43.5 169v1M43.5 125v10M43.5 94v11M43.5 90v1M43.5 88v1M43.5 54v4M43.5 11v3M44.5 88v9M44.5 61v24M44.5 7v2M45.5 88v3M45.5 82v3M45.5 76v2M45.5 60v14M45.5 5v2M46.5 222v1M46.5 173v2M46.5 168v4M46.5 84v2M46.5 59v9M46.5 8v2M47.5 221v1M47.5 199v5M47.5 197v1M47.5 193v3M47.5 161v2M47.5 83v13M47.5 69v3M47.5 57v2M47.5 8v3M48.5 221v1M48.5 204v1M48.5 158v2M48.5 139v1M48.5 134v3M48.5 93v10M48.5 84v7M48.5 68v3M48.5 56v1M48.5 7v3M49.5 221v1M49.5 203v2M49.5 160v2M49.5 85v16M49.5 67v3M49.5 56v3M49.5 10v2M50.5 217v4M50.5 204v2M50.5 158v2M50.5 136v7M50.5 134v1M50.5 96v7M50.5 93v1M50.5 84v6M50.5 68v2M50.5 55v3M50.5 37v1M50.5 8v2M51.5 220v1M51.5 205v1M51.5 155v5M51.5 92v9M51.5 63v5M51.5 58v2M51.5 6v2M52.5 217v4M52.5 205v1M52.5 159v3M52.5 60v6M52.5 7v1M53.5 216v5M53.5 205v1M53.5 159v2M53.5 84v13M53.5 64v4M53.5 56v4M53.5 5v1M54.5 219v2M54.5 217v1M54.5 205v1M54.5 161v1M54.5 96v3M54.5 94v1M54.5 86v3M54.5 66v3M54.5 55v4M54.5 53v1M54.5 6v2M55.5 221v1M55.5 205v1M55.5 169v2M55.5 162v2M55.5 96v1M55.5 65v2M55.5 57v4M55.5 3v1M56.5 218v3M56.5 204v1M56.5 174v1M56.5 163v10M56.5 60v3M56.5 2v1M57.5 221v1M57.5 204v1M57.5 170v5M57.5 163v2M57.5 90v2M57.5 60v2M57.5 2v1M58.5 221v1M58.5 203v2M58.5 169v1M58.5 163v5M58.5 89v7M58.5 3v1M59.5 221v1M59.5 203v2M59.5 167v1M59.5 164v2M59.5 92v4M59.5 87v4M59.5 4v1M60.5 221v1M60.5 204v1M60.5 163v1M60.5 82v13M60.5 6v1M61.5 203v2M61.5 163v1M61.5 90v5M61.5 79v7M61.5 60v1M61.5 5v1M62.5 221v1M62.5 203v2M62.5 163v1M62.5 94v1M62.5 73v4M62.5 7v1M63.5 221v1M63.5 204v1M63.5 162v2M63.5 93v2M63.5 75v7M63.5 70v3M63.5 6v2M64.5 203v1M64.5 162v1M64.5 93v2M64.5 70v2M64.5 6v2M65.5 220v1M65.5 204v1M65.5 161v1M65.5 147v3M65.5 94v2M65.5 68v3M65.5 7v2M66.5 216v5M66.5 205v1M66.5 160v2M66.5 148v7M66.5 141v6M66.5 126v4M66.5 97v3M66.5 68v2M66.5 47v15M66.5 9v2M67.5 220v1M67.5 204v1M67.5 162v1M67.5 94v3M67.5 70v1M67.5 4v1M68.5 221v1M68.5 203v1M68.5 190v3M68.5 163v1M68.5 90v4M68.5 70v10M68.5 5v2M69.5 221v1M69.5 203v1M69.5 162v1M69.5 77v16M69.5 70v3M69.5 6v2M70.5 221v1M70.5 203v2M70.5 163v1M70.5 91v1M70.5 70v20M70.5 6v2M71.5 221v1M71.5 201v2M71.5 178v9M71.5 163v5M71.5 6v1M72.5 221v1M72.5 203v1M72.5 189v1M72.5 163v1M72.5 6v2M73.5 204v1M73.5 162v6M73.5 6v1M74.5 218v3M74.5 203v3M74.5 160v3M74.5 6v2M75.5 219v1M75.5 214v4M75.5 206v2M75.5 155v5M75.5 141v1M75.5 115v21M75.5 89v6M75.5 78v10M75.5 70v3M75.5 61v3M75.5 55v2M75.5 6v2M76.5 209v2M76.5 97v16M76.5 70v2M76.5 60v3M76.5 48v6M76.5 34v4M76.5 9v4M77.5 209v9M77.5 155v3M77.5 134v8M77.5 127v1M77.5 111v1M77.5 105v5M77.5 93v2M77.5 71v2M77.5 61v1M77.5 52v4M77.5 49v2M77.5 7v2M78.5 218v1M78.5 208v9M78.5 151v8M78.5 118v31M78.5 103v4M78.5 95v3M78.5 71v2M78.5 61v2M78.5 49v6M78.5 8v2M79.5 207v8M79.5 150v10M79.5 124v19M79.5 122v1M79.5 102v5M79.5 94v5M79.5 70v2M79.5 63v1M79.5 48v6M79.5 8v2M80.5 218v3M80.5 203v4M80.5 200v1M80.5 159v3M80.5 139v13M80.5 132v1M80.5 121v10M80.5 106v5M80.5 93v4M80.5 86v2M80.5 71v1M80.5 61v2M80.5 53v4M80.5 51v1M80.5 6v2M81.5 216v5M81.5 183v20M81.5 165v17M81.5 147v4M81.5 114v1M81.5 103v10M81.5 88v6M81.5 78v9M81.5 71v3M81.5 53v10M81.5 5v1M82.5 169v8M82.5 72v7M82.5 3v1M83.5 221v1M83.5 6v1M84.5 221v1M84.5 4v1M85.5 221v1M85.5 8v1M86.5 219v2M86.5 8v1M87.5 221v1M87.5 8v2M88.5 10v2M89.5 221v1M89.5 15v1M90.5 222v1M90.5 24v1M91.5 42v3M92.5 215v6M92.5 211v3M92.5 198v11M92.5 174v14M92.5 166v7M92.5 150v6M92.5 98v37M92.5 76v3M92.5 51v2M93.5 210v9M93.5 205v4M93.5 196v8M93.5 166v19M93.5 145v10M93.5 124v5M93.5 112v8M93.5 107v3M93.5 82v3M93.5 53v1M94.5 219v1M94.5 209v9M94.5 203v5M94.5 194v8M94.5 167v17M94.5 163v2M94.5 161v1M94.5 146v14M94.5 125v2M94.5 116v8M94.5 114v1M94.5 103v7M94.5 87v1M94.5 56v1M95.5 211v10M95.5 207v2M95.5 197v5M95.5 158v28M95.5 154v1M95.5 148v4M95.5 146v1M95.5 126v8M95.5 116v8M95.5 90v3M96.5 208v8M96.5 202v2M96.5 197v4M96.5 175v3M96.5 169v1M96.5 118v8M96.5 93v3M96.5 62v2M97.5 201v5M97.5 103v2M97.5 65v1M98.5 107v3M98.5 67v2M99.5 110v4M99.5 72v1M100.5 118v7M100.5 75v2M101.5 203v5M101.5 170v6M101.5 167v1M101.5 123v2M101.5 80v1M102.5 201v13M102.5 198v1M102.5 166v21M102.5 126v23M102.5 84v1M103.5 202v18M103.5 197v4M103.5 195v1M103.5 183v11M103.5 163v7M103.5 141v7M103.5 137v3M103.5 86v2M104.5 222v1M104.5 79v1M104.5 73v5M105.5 65v15M106.5 222v1M106.5 32v20M107.5 222v1M107.5 60v21M108.5 222v1M108.5 73v8M108.5 66v1M108.5 56v6M109.5 222v1M109.5 78v4M109.5 76v1M109.5 55v4M110.5 81v4M110.5 64v10M111.5 221v1M111.5 156v2M111.5 116v12M111.5 83v3M111.5 61v16M112.5 220v1M112.5 84v4M112.5 65v6M113.5 219v2M113.5 190v1M113.5 87v3M114.5 222v1M114.5 42v10M115.5 222v1M115.5 50v5M116.5 78v2M116.5 59v6M117.5 221v1M117.5 66v18M117.5 63v2M117.5 61v1M117.5 41v1M117.5 35v5M118.5 220v1M118.5 82v4M118.5 65v10M118.5 42v1M118.5 33v1M119.5 208v13M119.5 206v1M119.5 190v2M119.5 85v4M119.5 42v1M119.5 33v1M120.5 219v2M120.5 191v1M120.5 64v19M120.5 44v8M120.5 33v1M121.5 221v1M121.5 61v5M121.5 53v4M121.5 33v1M122.5 221v1M122.5 63v3M122.5 54v2M123.5 220v1M123.5 71v4M123.5 54v1M123.5 37v1M124.5 220v1M124.5 62v5M124.5 56v2M124.5 38v1M125.5 222v1M125.5 66v3M125.5 57v1M125.5 37v1M126.5 73v2M126.5 67v5M126.5 57v2M126.5 39v1M127.5 113v4M127.5 100v2M127.5 82v4M127.5 56v2M128.5 220v1M128.5 136v5M128.5 132v1M128.5 120v3M128.5 39v2M129.5 218v3M129.5 191v6M129.5 159v27M129.5 123v21M129.5 60v2M130.5 221v1M130.5 113v7M130.5 101v11M130.5 62v1M130.5 40v1M131.5 222v1M131.5 79v6M131.5 64v5M131.5 43v1M132.5 77v6M132.5 74v2M132.5 66v3M132.5 44v1M133.5 222v1M133.5 75v6M133.5 73v1M133.5 67v2M134.5 221v1M134.5 90v9M134.5 81v3M134.5 68v1M134.5 48v1M135.5 221v1M135.5 83v4M135.5 70v1M135.5 48v1M136.5 222v1M136.5 73v5M136.5 49v1M137.5 79v3M137.5 50v1M138.5 222v1M138.5 87v1M138.5 81v1M139.5 222v1M139.5 84v9M139.5 77v2M139.5 53v1M140.5 222v1M140.5 54v1M141.5 222v1M141.5 54v2M142.5 60v2M143.5 100v11M143.5 83v8M143.5 63v1M144.5 221v1M144.5 88v31M144.5 83v3M144.5 66v1M145.5 220v1M145.5 108v14M145.5 88v14M145.5 83v1M145.5 69v1" stroke="rgb(72, 23, 19)" stroke-width="1.050" fill="none"/><path d="M0.5 221v1M0.5 193v3M0.5 122v2M1.5 222v1M1.5 120v1M2.5 222v1M2.5 114v1M2.5 109v2M3.5 222v1M3.5 115v2M4.5 117v1M4.5 108v8M5.5 222v1M5.5 114v2M5.5 106v5M6.5 221v1M6.5 103v10M7.5 192v6M7.5 189v2M7.5 182v4M7.5 143v19M7.5 123v2M7.5 112v3M7.5 104v3M8.5 194v22M8.5 178v4M8.5 157v2M8.5 145v3M8.5 124v1M8.5 100v1M9.5 215v5M9.5 213v1M9.5 183v1M9.5 140v5M9.5 122v2M9.5 105v1M9.5 98v2M10.5 212v8M10.5 207v1M10.5 201v2M10.5 145v6M10.5 121v1M10.5 96v2M11.5 217v4M11.5 143v4M11.5 117v2M11.5 96v2M12.5 140v5M12.5 137v1M12.5 133v3M12.5 118v1M12.5 94v1M13.5 220v1M13.5 148v1M13.5 141v5M13.5 139v1M13.5 117v1M13.5 92v2M14.5 221v1M14.5 128v13M14.5 118v2M14.5 89v1M15.5 221v1M15.5 142v3M15.5 113v3M15.5 87v1M16.5 215v6M16.5 213v1M16.5 201v1M16.5 191v9M16.5 140v6M16.5 110v3M16.5 84v1M17.5 220v1M17.5 194v12M17.5 137v8M17.5 107v6M18.5 220v1M18.5 206v1M18.5 192v2M18.5 189v1M18.5 130v5M18.5 117v2M18.5 104v4M18.5 79v1M19.5 219v2M19.5 217v1M19.5 196v10M19.5 187v8M19.5 135v1M19.5 123v10M19.5 101v3M19.5 74v2M20.5 221v1M20.5 204v6M20.5 188v2M20.5 98v8M20.5 70v2M21.5 221v1M21.5 93v8M21.5 69v2M22.5 210v1M22.5 187v19M22.5 169v1M22.5 100v4M22.5 89v4M22.5 64v2M23.5 172v10M23.5 164v7M23.5 145v17M23.5 130v14M23.5 98v7M23.5 89v2M23.5 61v1M23.5 57v1M24.5 219v2M24.5 177v2M24.5 174v1M24.5 143v17M24.5 130v12M24.5 101v1M24.5 90v10M24.5 54v1M25.5 220v1M25.5 129v1M26.5 127v1M26.5 101v1M26.5 84v16M26.5 55v1M27.5 127v2M27.5 103v1M27.5 88v14M27.5 85v2M27.5 81v2M27.5 73v5M27.5 71v1M27.5 53v1M28.5 59v3M28.5 56v2M29.5 221v1M29.5 199v10M29.5 152v9M29.5 36v1M30.5 28v2M31.5 221v1M31.5 149v7M31.5 22v3M32.5 11v2M33.5 221v1M33.5 107v2M33.5 11v2M34.5 219v2M34.5 203v2M34.5 201v1M34.5 195v5M34.5 181v8M34.5 143v19M34.5 137v3M34.5 132v4M34.5 112v5M34.5 96v4M34.5 83v4M34.5 10v3M35.5 220v1M35.5 205v1M35.5 195v5M35.5 188v2M35.5 174v13M35.5 170v2M35.5 167v1M35.5 144v17M35.5 122v13M35.5 117v4M35.5 103v1M35.5 91v11M35.5 85v5M35.5 83v1M35.5 67v15M35.5 60v3M35.5 46v6M35.5 11v6M36.5 221v1M36.5 177v17M36.5 152v2M36.5 111v4M36.5 104v3M36.5 84v9M36.5 75v7M36.5 63v1M36.5 59v3M36.5 49v3M36.5 4v2M37.5 221v1M37.5 190v7M37.5 175v4M37.5 152v5M37.5 105v10M37.5 87v7M37.5 68v7M37.5 65v2M37.5 54v3M37.5 51v2M37.5 9v2M38.5 221v1M38.5 197v4M38.5 155v3M38.5 147v5M38.5 140v1M38.5 126v12M38.5 104v12M38.5 94v4M38.5 53v7M38.5 44v4M38.5 9v4M39.5 198v2M39.5 142v9M39.5 114v12M39.5 96v5M39.5 40v7M39.5 7v4M40.5 221v1M40.5 194v3M40.5 153v10M40.5 130v9M40.5 103v6M40.5 51v2M40.5 41v8M40.5 39v1M40.5 9v6M41.5 194v3M41.5 166v6M41.5 130v12M41.5 127v1M41.5 119v3M41.5 105v5M41.5 103v1M41.5 95v3M41.5 53v5M41.5 49v1M41.5 13v3M42.5 189v5M42.5 162v8M42.5 160v1M42.5 151v2M42.5 148v2M42.5 129v10M42.5 120v8M42.5 97v9M42.5 49v5M42.5 36v8M42.5 15v1M43.5 220v1M43.5 203v2M43.5 191v1M43.5 184v4M43.5 170v6M43.5 164v5M43.5 152v1M43.5 135v6M43.5 119v6M43.5 105v2M43.5 49v5M43.5 38v4M43.5 14v2M44.5 221v1M44.5 191v1M44.5 133v1M44.5 97v5M44.5 85v3M44.5 57v4M44.5 9v3M45.5 221v1M45.5 166v2M45.5 91v5M45.5 85v3M45.5 78v4M45.5 74v2M45.5 57v3M45.5 7v2M46.5 221v1M46.5 184v17M46.5 175v3M46.5 172v1M46.5 164v4M46.5 100v1M46.5 86v11M46.5 78v6M46.5 68v6M46.5 57v2M46.5 10v3M47.5 220v1M47.5 204v1M47.5 157v4M47.5 124v17M47.5 121v2M47.5 96v8M47.5 80v3M47.5 72v2M47.5 55v2M47.5 35v4M47.5 11v2M48.5 220v1M48.5 205v1M48.5 155v3M48.5 140v3M48.5 137v2M48.5 128v6M48.5 103v1M48.5 80v4M48.5 71v1M48.5 54v2M48.5 32v9M48.5 10v2M49.5 218v3M49.5 205v1M49.5 158v2M49.5 132v13M49.5 127v4M49.5 101v2M49.5 81v4M49.5 70v3M49.5 52v4M49.5 35v8M49.5 12v1M50.5 215v2M50.5 154v4M50.5 143v3M50.5 135v1M50.5 121v13M50.5 103v1M50.5 82v2M50.5 70v2M50.5 47v8M50.5 38v5M50.5 34v3M50.5 10v2M51.5 215v5M51.5 206v1M51.5 150v5M51.5 132v10M51.5 122v1M51.5 101v3M51.5 82v10M51.5 68v3M51.5 55v3M51.5 8v2M52.5 215v2M52.5 158v1M52.5 87v8M52.5 66v2M52.5 58v2M52.5 8v2M53.5 215v1M53.5 206v1M53.5 156v3M53.5 132v1M53.5 128v1M53.5 97v6M53.5 81v3M53.5 68v2M53.5 54v2M53.5 49v2M53.5 6v2M54.5 218v1M54.5 215v2M54.5 206v1M54.5 159v2M54.5 130v11M54.5 117v3M54.5 99v4M54.5 78v8M54.5 69v2M54.5 54v1M54.5 48v5M54.5 8v1M55.5 214v7M55.5 206v1M55.5 161v1M55.5 122v2M55.5 97v5M55.5 82v14M55.5 67v2M55.5 56v1M55.5 4v1M56.5 216v2M56.5 205v1M56.5 161v2M56.5 86v11M56.5 79v2M56.5 63v3M56.5 57v3M56.5 3v1M57.5 205v1M57.5 162v1M57.5 92v5M57.5 84v6M57.5 62v5M57.5 58v2M57.5 3v1M58.5 219v2M58.5 205v1M58.5 162v1M58.5 96v2M58.5 83v6M58.5 58v7M58.5 4v1M59.5 218v3M59.5 205v1M59.5 162v2M59.5 96v1M59.5 76v11M59.5 74v1M59.5 59v5M59.5 5v1M60.5 220v1M60.5 205v1M60.5 161v2M60.5 95v3M60.5 73v9M60.5 57v7M60.5 7v1M61.5 217v4M61.5 162v1M61.5 95v2M61.5 72v7M61.5 61v2M61.5 58v2M61.5 6v2M62.5 218v3M62.5 205v1M62.5 161v2M62.5 95v3M62.5 71v2M62.5 57v7M62.5 8v1M63.5 220v1M63.5 205v1M63.5 160v2M63.5 147v4M63.5 95v3M63.5 67v3M63.5 59v4M63.5 8v2M64.5 219v2M64.5 204v1M64.5 160v2M64.5 144v9M64.5 95v3M64.5 69v1M64.5 8v1M65.5 218v2M65.5 205v1M65.5 159v2M65.5 150v5M65.5 144v3M65.5 131v3M65.5 126v3M65.5 96v2M65.5 67v1M65.5 56v6M65.5 9v2M66.5 215v1M66.5 206v1M66.5 155v5M66.5 130v11M66.5 123v3M66.5 100v2M66.5 62v6M66.5 42v5M66.5 38v1M66.5 34v2M66.5 11v2M67.5 218v2M67.5 205v1M67.5 158v4M67.5 144v11M67.5 97v2M67.5 68v2M67.5 47v13M67.5 5v2M68.5 219v2M68.5 204v1M68.5 162v1M68.5 150v1M68.5 94v2M68.5 69v1M68.5 49v3M68.5 7v1M69.5 219v2M69.5 204v1M69.5 161v1M69.5 145v8M69.5 93v3M69.5 68v2M69.5 58v4M69.5 8v2M70.5 220v1M70.5 205v1M70.5 162v1M70.5 147v5M70.5 92v3M70.5 90v1M70.5 68v2M70.5 60v1M70.5 49v1M70.5 8v2M71.5 203v2M71.5 161v2M71.5 91v2M71.5 87v3M71.5 70v16M71.5 7v2M72.5 219v2M72.5 204v1M72.5 161v2M72.5 8v2M73.5 218v3M73.5 205v1M73.5 161v1M73.5 7v2M74.5 216v2M74.5 206v1M74.5 158v2M74.5 141v16M74.5 138v2M74.5 118v15M74.5 72v23M74.5 8v2M75.5 208v6M75.5 99v16M75.5 95v2M75.5 64v6M75.5 49v6M75.5 8v3M76.5 68v2M76.5 63v1M76.5 46v2M76.5 38v5M76.5 30v4M76.5 13v2M77.5 100v5M77.5 95v4M77.5 70v1M77.5 62v3M77.5 51v1M77.5 47v2M77.5 32v7M77.5 9v3M78.5 98v5M78.5 69v2M78.5 63v2M78.5 47v2M78.5 30v10M78.5 10v2M79.5 99v3M79.5 64v6M79.5 46v2M79.5 44v1M79.5 39v1M79.5 29v8M79.5 10v3M80.5 207v11M80.5 152v7M80.5 133v6M80.5 131v1M80.5 100v6M80.5 97v2M80.5 63v8M80.5 52v1M80.5 47v4M80.5 38v2M80.5 30v6M80.5 8v2M81.5 203v13M81.5 162v3M81.5 151v5M81.5 140v7M81.5 135v2M81.5 127v7M81.5 115v11M81.5 113v1M81.5 102v1M81.5 94v5M81.5 68v3M81.5 63v3M81.5 49v4M81.5 6v2M82.5 218v3M82.5 215v1M82.5 177v16M82.5 166v3M82.5 104v16M82.5 79v15M82.5 70v2M82.5 57v5M82.5 4v2M83.5 220v1M83.5 89v1M83.5 71v7M83.5 60v1M83.5 7v1M84.5 220v1M84.5 59v2M84.5 5v2M85.5 216v5M85.5 9v1M86.5 212v7M86.5 198v5M86.5 141v1M86.5 9v2M87.5 214v7M87.5 202v4M87.5 134v9M87.5 10v1M88.5 221v1M88.5 12v1M89.5 16v1M90.5 221v1M90.5 25v2M91.5 221v1M91.5 136v9M91.5 45v1M92.5 214v1M92.5 209v2M92.5 156v10M92.5 75v1M92.5 53v1M93.5 209v1M93.5 204v1M93.5 155v11M93.5 120v4M93.5 79v3M93.5 54v1M94.5 208v1M94.5 202v1M94.5 165v2M94.5 162v1M94.5 160v1M94.5 115v1M94.5 110v4M94.5 85v2M94.5 57v2M95.5 209v2M95.5 202v5M95.5 155v3M95.5 152v2M95.5 124v2M95.5 88v2M95.5 59v1M96.5 91v2M96.5 64v1M97.5 97v6M98.5 102v5M98.5 69v2M99.5 108v2M100.5 115v3M101.5 121v2M101.5 81v2M102.5 125v1M102.5 85v2M103.5 170v13M103.5 140v1M103.5 128v9M103.5 88v4M104.5 80v3M104.5 78v1M105.5 221v1M105.5 150v2M105.5 80v5M106.5 221v1M106.5 66v10M106.5 62v3M106.5 52v8M107.5 156v6M107.5 81v4M108.5 81v3M108.5 67v6M108.5 62v4M109.5 221v1M109.5 159v3M109.5 156v2M109.5 82v2M109.5 77v1M109.5 59v17M110.5 221v1M110.5 213v6M110.5 198v1M110.5 175v11M110.5 168v3M110.5 150v17M110.5 136v1M110.5 133v2M110.5 131v1M110.5 113v8M110.5 107v1M110.5 95v9M110.5 85v3M111.5 220v1M111.5 218v1M111.5 207v7M111.5 170v19M111.5 158v7M111.5 149v7M111.5 128v5M111.5 108v8M111.5 102v1M111.5 86v2M112.5 211v9M112.5 189v2M112.5 176v12M112.5 156v10M112.5 122v1M112.5 111v9M112.5 88v3M113.5 212v7M113.5 191v3M113.5 185v5M113.5 178v2M113.5 90v5M114.5 221v1M114.5 52v6M115.5 61v1M115.5 55v4M116.5 221v1M116.5 80v5M116.5 71v7M116.5 65v4M117.5 215v6M117.5 191v1M117.5 84v3M117.5 40v1M118.5 208v12M118.5 189v6M118.5 86v2M118.5 41v1M118.5 34v1M119.5 207v1M119.5 201v5M119.5 192v4M119.5 188v2M119.5 89v3M119.5 39v3M120.5 215v4M120.5 192v3M120.5 186v5M120.5 83v7M120.5 43v1M121.5 218v3M121.5 66v7M121.5 51v2M121.5 34v1M122.5 220v1M122.5 66v12M122.5 53v1M122.5 35v1M123.5 216v4M123.5 75v5M123.5 52v2M123.5 38v1M124.5 217v3M124.5 67v12M124.5 54v2M124.5 47v2M124.5 39v1M125.5 221v1M125.5 69v3M125.5 55v2M126.5 221v1M126.5 75v7M126.5 72v1M126.5 56v1M126.5 48v3M126.5 40v1M127.5 221v1M127.5 117v3M127.5 102v11M127.5 93v7M127.5 86v6M127.5 55v1M127.5 53v1M127.5 49v3M127.5 40v2M128.5 211v9M128.5 165v35M128.5 161v2M128.5 152v7M128.5 141v4M128.5 133v3M128.5 123v9M128.5 58v2M129.5 197v21M129.5 144v15M129.5 59v1M129.5 52v1M129.5 40v1M130.5 219v2M130.5 165v6M130.5 134v9M130.5 131v2M130.5 120v3M130.5 112v1M130.5 61v1M130.5 41v3M131.5 119v3M131.5 85v6M131.5 62v2M131.5 44v1M132.5 222v1M132.5 83v5M132.5 64v2M132.5 45v1M133.5 177v2M133.5 95v3M133.5 81v5M133.5 65v2M133.5 46v1M134.5 173v9M134.5 116v9M134.5 99v5M134.5 84v6M134.5 66v2M134.5 49v1M135.5 220v1M135.5 170v7M135.5 120v5M135.5 87v17M136.5 78v7M136.5 72v1M136.5 50v1M137.5 222v1M137.5 82v3M137.5 73v6M137.5 51v1M138.5 88v8M138.5 82v5M138.5 76v5M138.5 52v2M139.5 221v1M139.5 93v3M139.5 75v2M139.5 54v1M140.5 80v6M140.5 55v1M141.5 96v1M141.5 82v3M141.5 56v3M142.5 221v1M142.5 108v10M142.5 104v1M142.5 81v10M142.5 62v1M143.5 219v2M143.5 188v2M143.5 182v4M143.5 178v1M143.5 142v10M143.5 111v12M143.5 91v9M143.5 81v2M143.5 64v1M144.5 220v1M144.5 119v3M144.5 81v2M144.5 67v2M145.5 216v4M145.5 197v1M145.5 187v9M145.5 181v5M145.5 177v2M145.5 171v5M145.5 166v2M145.5 158v6M145.5 134v14M145.5 122v4M145.5 82v1M145.5 70v1" stroke="rgb(96, 30, 25)" stroke-width="1.050" fill="none"/><path d="M0.5 220v1M0.5 196v3M0.5 189v4M0.5 134v3M0.5 124v1M1.5 221v1M1.5 121v1M2.5 119v2M2.5 111v3M3.5 117v2M4.5 222v1M4.5 118v1M5.5 116v1M6.5 113v2M7.5 191v1M7.5 186v3M7.5 175v7M7.5 173v1M7.5 170v1M7.5 162v7M7.5 122v1M7.5 115v1M8.5 189v5M8.5 182v5M8.5 173v5M8.5 170v1M8.5 168v1M8.5 159v7M8.5 148v9M8.5 122v2M8.5 104v9M8.5 101v2M9.5 214v1M9.5 208v5M9.5 184v5M9.5 178v5M9.5 145v15M9.5 121v1M9.5 106v3M9.5 100v5M10.5 208v4M10.5 203v4M10.5 194v7M10.5 183v1M10.5 179v3M10.5 151v6M10.5 120v1M10.5 98v1M11.5 214v3M11.5 147v3M11.5 116v1M11.5 105v1M11.5 102v1M11.5 98v3M12.5 218v3M12.5 149v1M12.5 145v3M12.5 117v1M12.5 100v4M12.5 98v1M12.5 95v2M13.5 218v2M13.5 197v9M13.5 149v2M13.5 146v2M13.5 114v3M13.5 103v1M13.5 94v3M14.5 200v3M14.5 141v9M14.5 117v1M14.5 90v1M15.5 220v1M15.5 208v1M15.5 200v1M15.5 193v6M15.5 145v5M15.5 111v2M15.5 88v1M16.5 214v1M16.5 202v11M16.5 200v1M16.5 185v6M16.5 146v8M16.5 106v4M16.5 85v2M17.5 216v4M17.5 206v5M17.5 188v6M17.5 186v1M17.5 183v2M17.5 145v8M17.5 101v6M17.5 82v2M18.5 216v4M18.5 207v5M18.5 194v12M18.5 190v2M18.5 182v7M18.5 135v14M18.5 99v5M18.5 80v2M19.5 218v1M19.5 206v11M19.5 181v6M19.5 171v7M19.5 149v1M19.5 136v4M19.5 133v2M19.5 99v2M19.5 76v2M20.5 210v11M20.5 190v14M20.5 184v4M20.5 145v2M20.5 113v19M20.5 106v6M20.5 95v3M20.5 72v1M21.5 207v1M21.5 200v1M21.5 187v12M21.5 120v1M21.5 101v5M21.5 91v2M21.5 71v1M22.5 211v10M22.5 206v4M22.5 181v6M22.5 170v10M22.5 162v7M22.5 131v1M22.5 114v10M22.5 104v3M22.5 87v2M22.5 66v4M23.5 171v1M23.5 144v1M23.5 125v5M23.5 111v6M23.5 105v3M23.5 86v3M23.5 62v1M23.5 58v3M24.5 142v1M24.5 128v2M24.5 102v2M24.5 100v1M24.5 87v3M24.5 55v1M25.5 127v2M25.5 89v10M25.5 58v1M25.5 54v3M26.5 126v1M26.5 102v4M26.5 100v1M26.5 80v4M26.5 66v6M27.5 125v2M27.5 104v3M27.5 102v1M27.5 87v1M27.5 83v2M27.5 78v3M27.5 72v1M27.5 67v4M27.5 54v1M28.5 58v1M29.5 209v2M29.5 192v7M29.5 181v9M29.5 161v4M29.5 145v7M29.5 37v2M30.5 221v1M30.5 204v4M30.5 150v6M30.5 30v2M31.5 219v2M31.5 202v7M31.5 189v4M31.5 156v3M31.5 146v3M31.5 108v3M31.5 97v9M31.5 25v1M32.5 221v1M32.5 201v8M32.5 195v1M32.5 188v2M32.5 154v1M32.5 152v1M32.5 106v6M32.5 104v1M32.5 13v3M33.5 204v3M33.5 186v17M33.5 146v11M33.5 109v3M33.5 104v3M33.5 101v1M33.5 13v3M34.5 217v2M34.5 205v4M34.5 202v1M34.5 200v1M34.5 178v3M34.5 162v5M34.5 140v3M34.5 136v1M34.5 125v7M34.5 117v7M34.5 87v9M34.5 79v4M34.5 47v16M34.5 13v3M35.5 218v2M35.5 206v2M35.5 200v5M35.5 172v2M35.5 168v2M35.5 161v6M35.5 135v9M35.5 63v4M35.5 35v11M35.5 17v9M36.5 220v1M36.5 194v12M36.5 175v2M36.5 170v1M36.5 165v2M36.5 154v9M36.5 137v15M36.5 125v9M36.5 121v2M36.5 115v3M36.5 101v3M36.5 98v1M36.5 93v4M36.5 64v11M36.5 62v1M36.5 52v7M36.5 43v6M36.5 6v3M37.5 197v1M37.5 172v3M37.5 166v3M37.5 157v8M37.5 149v3M37.5 138v3M37.5 121v16M37.5 115v4M37.5 100v5M37.5 94v4M37.5 67v1M37.5 57v8M37.5 53v1M37.5 46v5M37.5 11v3M38.5 218v3M38.5 201v1M38.5 141v6M38.5 138v2M38.5 116v10M38.5 98v6M38.5 39v5M38.5 37v1M38.5 13v3M39.5 219v2M39.5 200v5M39.5 34v6M39.5 11v8M40.5 197v4M40.5 148v5M40.5 139v5M40.5 109v21M40.5 40v1M40.5 35v4M40.5 15v5M41.5 219v2M41.5 197v2M41.5 161v5M41.5 142v13M41.5 128v2M41.5 122v5M41.5 110v9M41.5 104v1M41.5 98v5M41.5 50v3M41.5 47v2M41.5 35v9M41.5 16v2M42.5 218v3M42.5 202v5M42.5 194v7M42.5 161v1M42.5 153v7M42.5 150v1M42.5 139v9M42.5 118v2M42.5 106v2M42.5 44v5M42.5 31v5M42.5 16v2M43.5 218v2M43.5 205v2M43.5 192v11M43.5 188v3M43.5 158v6M43.5 153v4M43.5 141v11M43.5 118v1M43.5 107v1M43.5 42v7M43.5 34v4M43.5 16v2M44.5 192v11M44.5 166v25M44.5 134v5M44.5 125v8M44.5 120v4M44.5 102v3M44.5 55v2M44.5 52v1M44.5 49v2M44.5 12v2M45.5 168v29M45.5 164v2M45.5 124v10M45.5 96v2M45.5 55v2M45.5 9v3M46.5 201v4M46.5 178v6M46.5 162v2M46.5 134v5M46.5 129v4M46.5 121v7M46.5 101v2M46.5 97v3M46.5 74v4M46.5 56v1M46.5 13v1M47.5 218v2M47.5 205v1M47.5 153v4M47.5 141v4M47.5 123v1M47.5 117v4M47.5 104v2M47.5 74v6M47.5 54v1M47.5 39v3M47.5 31v4M47.5 13v1M48.5 216v4M48.5 152v3M48.5 143v5M48.5 117v11M48.5 104v1M48.5 78v2M48.5 72v2M48.5 41v13M48.5 29v3M48.5 12v1M49.5 215v3M49.5 206v1M49.5 155v3M49.5 145v5M49.5 131v1M49.5 120v7M49.5 103v2M49.5 79v2M49.5 73v1M49.5 48v4M49.5 43v2M49.5 33v2M49.5 13v1M50.5 214v1M50.5 206v1M50.5 152v2M50.5 146v4M50.5 115v6M50.5 104v1M50.5 79v3M50.5 72v1M50.5 43v4M50.5 31v3M50.5 12v1M51.5 214v1M51.5 207v1M51.5 142v8M51.5 123v9M51.5 116v6M51.5 104v1M51.5 79v3M51.5 71v1M51.5 47v8M51.5 36v9M51.5 10v2M52.5 206v1M52.5 155v3M52.5 95v7M52.5 81v6M52.5 68v2M52.5 55v3M52.5 50v1M52.5 10v1M53.5 214v1M53.5 207v1M53.5 153v3M53.5 133v16M53.5 129v3M53.5 119v9M53.5 115v2M53.5 78v3M53.5 70v4M53.5 51v3M53.5 37v12M53.5 8v2M54.5 214v1M54.5 207v1M54.5 141v18M54.5 120v10M54.5 112v5M54.5 103v1M54.5 71v7M54.5 46v2M54.5 41v2M54.5 9v1M55.5 213v1M55.5 207v1M55.5 160v1M55.5 124v4M55.5 116v6M55.5 102v1M55.5 76v6M55.5 69v3M55.5 49v7M55.5 5v1M56.5 215v1M56.5 206v1M56.5 160v1M56.5 124v1M56.5 122v1M56.5 97v3M56.5 81v5M56.5 77v2M56.5 66v1M56.5 55v2M56.5 4v1M57.5 215v6M57.5 206v1M57.5 161v1M57.5 97v2M57.5 73v11M57.5 67v2M57.5 56v2M57.5 4v1M58.5 216v3M58.5 206v1M58.5 160v2M58.5 98v1M58.5 74v9M58.5 65v2M58.5 56v2M58.5 5v1M59.5 215v3M59.5 206v1M59.5 159v3M59.5 97v2M59.5 75v1M59.5 73v1M59.5 64v3M59.5 56v3M59.5 6v1M60.5 217v3M60.5 206v1M60.5 159v2M60.5 147v6M60.5 125v1M60.5 98v1M60.5 68v5M60.5 64v2M60.5 55v2M60.5 50v3M60.5 8v1M61.5 215v2M61.5 205v1M61.5 160v2M61.5 150v1M61.5 127v5M61.5 97v2M61.5 70v2M61.5 63v2M61.5 55v3M61.5 48v2M61.5 8v2M62.5 216v2M62.5 206v1M62.5 159v2M62.5 150v3M62.5 134v1M62.5 129v2M62.5 98v2M62.5 69v2M62.5 64v1M62.5 55v2M62.5 51v1M62.5 9v1M63.5 218v2M63.5 159v1M63.5 151v4M63.5 145v2M63.5 127v8M63.5 98v1M63.5 63v4M63.5 48v11M63.5 10v1M64.5 217v2M64.5 205v1M64.5 158v2M64.5 153v4M64.5 142v2M64.5 131v1M64.5 126v3M64.5 98v4M64.5 66v3M64.5 56v9M64.5 46v8M64.5 35v9M64.5 9v1M65.5 216v2M65.5 206v1M65.5 158v1M65.5 155v2M65.5 141v3M65.5 137v3M65.5 134v2M65.5 129v2M65.5 124v2M65.5 113v3M65.5 98v3M65.5 62v5M65.5 43v13M65.5 39v2M65.5 11v2M66.5 214v1M66.5 207v1M66.5 114v9M66.5 102v1M66.5 39v3M66.5 36v2M66.5 28v6M66.5 13v1M67.5 216v2M67.5 155v3M67.5 141v3M67.5 123v11M67.5 99v2M67.5 60v8M67.5 32v15M67.5 7v2M68.5 217v2M68.5 205v1M68.5 161v1M68.5 151v5M68.5 147v3M68.5 131v2M68.5 96v2M68.5 65v4M68.5 52v11M68.5 47v2M68.5 8v1M69.5 217v2M69.5 205v1M69.5 159v2M69.5 153v3M69.5 143v2M69.5 96v2M69.5 62v6M69.5 56v2M69.5 45v8M69.5 40v4M69.5 38v1M69.5 10v1M70.5 218v2M70.5 206v1M70.5 160v2M70.5 152v3M70.5 142v5M70.5 128v5M70.5 95v1M70.5 67v1M70.5 61v3M70.5 55v5M70.5 50v3M70.5 46v3M70.5 10v2M71.5 219v2M71.5 205v1M71.5 156v5M71.5 143v12M71.5 93v2M71.5 90v1M71.5 86v1M71.5 68v2M71.5 9v1M72.5 216v3M72.5 205v1M72.5 158v3M72.5 146v9M72.5 88v4M72.5 84v2M72.5 70v8M72.5 10v2M73.5 216v2M73.5 206v1M73.5 156v5M73.5 84v9M73.5 73v2M73.5 9v2M74.5 214v2M74.5 207v1M74.5 157v1M74.5 140v1M74.5 133v5M74.5 115v3M74.5 99v1M74.5 95v3M74.5 68v4M74.5 56v11M74.5 49v4M74.5 10v2M75.5 97v2M75.5 29v20M75.5 11v4M76.5 64v4M76.5 43v3M76.5 28v2M76.5 15v3M77.5 99v1M77.5 65v5M77.5 39v8M77.5 30v2M77.5 12v3M78.5 65v4M78.5 40v7M78.5 28v2M78.5 12v2M79.5 45v1M79.5 40v4M79.5 37v2M79.5 28v1M79.5 13v1M80.5 99v1M80.5 40v7M80.5 36v2M80.5 28v2M80.5 10v3M81.5 156v6M81.5 137v3M81.5 134v1M81.5 126v1M81.5 99v3M81.5 66v2M81.5 46v3M81.5 29v7M81.5 8v2M82.5 216v2M82.5 193v22M82.5 163v3M82.5 144v11M82.5 120v7M82.5 100v4M82.5 94v5M82.5 67v3M82.5 62v3M82.5 49v8M82.5 6v1M83.5 216v4M83.5 203v1M83.5 188v6M83.5 167v1M83.5 109v16M83.5 90v5M83.5 78v11M83.5 69v2M83.5 61v3M83.5 57v3M83.5 52v1M83.5 49v2M83.5 8v1M84.5 218v2M84.5 202v4M84.5 198v3M84.5 169v6M84.5 132v1M84.5 114v9M84.5 70v9M84.5 61v2M84.5 57v2M84.5 7v1M85.5 211v5M85.5 180v22M85.5 176v3M85.5 146v1M85.5 141v4M85.5 106v16M85.5 71v10M85.5 59v2M85.5 10v2M86.5 203v9M86.5 189v9M86.5 161v9M86.5 149v1M86.5 142v5M86.5 137v4M86.5 103v20M86.5 100v1M86.5 74v2M86.5 11v2M87.5 206v8M87.5 186v16M87.5 168v7M87.5 143v6M87.5 130v4M87.5 105v16M87.5 11v2M88.5 220v1M88.5 214v1M88.5 194v2M88.5 137v8M88.5 13v2M89.5 220v1M89.5 192v3M89.5 190v1M89.5 136v11M89.5 17v1M90.5 192v2M90.5 189v2M90.5 170v1M90.5 136v9M90.5 103v1M90.5 101v1M90.5 27v2M91.5 216v5M91.5 185v9M91.5 145v3M91.5 132v4M91.5 46v1M92.5 74v1M93.5 78v1M93.5 55v2M94.5 84v1M95.5 87v1M95.5 60v2M96.5 89v2M96.5 65v1M97.5 95v2M97.5 66v1M98.5 101v1M98.5 71v2M99.5 105v3M99.5 73v1M100.5 114v1M100.5 77v2M101.5 119v2M101.5 83v3M102.5 124v1M102.5 87v2M103.5 126v2M104.5 221v1M104.5 150v6M104.5 83v3M105.5 220v1M105.5 152v10M105.5 146v4M105.5 85v2M106.5 220v1M106.5 155v2M106.5 76v7M106.5 65v1M106.5 60v2M107.5 221v1M107.5 162v3M107.5 150v6M107.5 85v4M108.5 221v1M108.5 84v2M109.5 162v3M109.5 158v1M109.5 151v5M109.5 84v1M110.5 219v2M110.5 199v14M110.5 186v12M110.5 171v4M110.5 167v1M110.5 143v7M110.5 137v5M110.5 135v1M110.5 132v1M110.5 121v10M110.5 108v5M110.5 104v3M110.5 88v7M111.5 219v1M111.5 214v4M111.5 202v5M111.5 189v11M111.5 165v5M111.5 142v7M111.5 133v3M111.5 103v5M111.5 95v7M111.5 88v2M112.5 204v7M112.5 200v2M112.5 191v8M112.5 188v1M112.5 166v10M112.5 151v5M112.5 149v1M112.5 132v9M112.5 123v8M112.5 120v2M112.5 99v12M112.5 91v5M113.5 206v6M113.5 203v2M113.5 200v2M113.5 194v4M113.5 180v5M113.5 171v7M113.5 166v1M113.5 159v2M113.5 155v2M113.5 125v8M113.5 111v9M113.5 108v1M113.5 95v9M114.5 220v1M114.5 72v14M114.5 58v13M115.5 221v1M115.5 77v6M115.5 68v2M115.5 62v5M115.5 59v2M116.5 220v1M116.5 191v1M116.5 85v2M116.5 69v2M117.5 210v5M117.5 208v1M117.5 192v4M117.5 190v1M117.5 87v7M118.5 195v13M118.5 187v2M118.5 88v6M118.5 40v1M119.5 196v5M119.5 187v1M119.5 92v6M119.5 37v2M119.5 34v2M120.5 203v12M120.5 195v7M120.5 182v4M120.5 133v1M120.5 107v8M120.5 101v2M120.5 90v7M120.5 42v1M120.5 34v1M121.5 214v4M121.5 183v8M121.5 135v1M121.5 73v6M121.5 49v2M121.5 45v2M122.5 215v5M122.5 182v1M122.5 78v3M122.5 50v3M122.5 36v1M123.5 213v3M123.5 211v1M123.5 184v2M123.5 182v1M123.5 180v1M123.5 131v2M123.5 127v2M123.5 84v1M123.5 80v3M123.5 50v2M123.5 43v6M124.5 211v6M124.5 182v9M124.5 134v6M124.5 131v2M124.5 129v1M124.5 103v14M124.5 92v1M124.5 88v2M124.5 79v6M124.5 49v5M124.5 46v1M124.5 40v1M125.5 72v9M125.5 52v3M125.5 38v1M126.5 82v2M126.5 54v2M126.5 51v2M126.5 46v2M126.5 41v2M127.5 220v1M127.5 132v9M127.5 120v3M127.5 92v1M127.5 54v1M127.5 52v1M127.5 46v3M127.5 42v3M128.5 200v11M128.5 163v2M128.5 159v2M128.5 145v7M128.5 56v2M128.5 51v2M128.5 41v1M129.5 53v6M129.5 51v1M129.5 41v1M130.5 216v3M130.5 212v3M130.5 171v24M130.5 161v4M130.5 143v13M130.5 133v1M130.5 123v8M130.5 60v1M130.5 44v1M131.5 221v1M131.5 122v2M131.5 115v4M131.5 91v13M131.5 59v3M131.5 53v2M131.5 45v1M132.5 88v5M132.5 61v3M132.5 58v2M132.5 46v1M133.5 221v1M133.5 179v4M133.5 173v4M133.5 120v4M133.5 98v2M133.5 86v9M133.5 62v3M133.5 47v1M134.5 218v3M134.5 182v4M134.5 167v6M134.5 161v1M134.5 146v3M134.5 125v4M134.5 114v2M134.5 104v2M134.5 64v2M134.5 57v5M135.5 214v6M135.5 177v12M135.5 166v4M135.5 142v1M135.5 138v1M135.5 125v4M135.5 115v5M135.5 104v4M135.5 68v2M135.5 49v1M136.5 221v1M136.5 85v7M136.5 71v1M136.5 51v2M137.5 85v3M137.5 72v1M137.5 52v1M138.5 221v1M138.5 96v3M138.5 74v2M139.5 114v2M139.5 96v15M139.5 73v2M139.5 55v1M140.5 221v1M140.5 86v8M140.5 78v2M141.5 221v1M141.5 97v18M141.5 85v11M141.5 79v3M142.5 220v1M142.5 186v4M142.5 184v1M142.5 118v7M142.5 105v3M142.5 91v13M142.5 80v1M142.5 63v2M143.5 217v2M143.5 190v7M143.5 186v2M143.5 179v3M143.5 172v6M143.5 152v11M143.5 135v7M143.5 132v2M143.5 123v4M143.5 80v1M143.5 65v1M144.5 216v4M144.5 177v13M144.5 167v1M144.5 161v2M144.5 135v25M144.5 122v2M144.5 80v1M144.5 69v2M145.5 198v18M145.5 196v1M145.5 186v1M145.5 179v2M145.5 176v1M145.5 168v3M145.5 164v2M145.5 148v10M145.5 126v8M145.5 81v1M145.5 71v1" stroke="rgb(121, 38, 32)" stroke-width="1.050" fill="none"/><path d="M0.5 217v3M0.5 199v4M0.5 185v4M0.5 173v3M0.5 158v2M0.5 137v3M0.5 132v2M0.5 125v1M1.5 122v1M2.5 221v1M2.5 121v1M3.5 221v1M3.5 119v1M4.5 119v1M5.5 221v1M5.5 117v3M6.5 217v4M6.5 127v8M6.5 115v1M7.5 174v1M7.5 171v2M7.5 169v1M7.5 120v2M7.5 116v1M8.5 187v2M8.5 171v2M8.5 169v1M8.5 166v2M8.5 121v1M8.5 113v1M8.5 103v1M9.5 189v19M9.5 173v5M9.5 170v2M9.5 160v9M9.5 120v1M9.5 109v2M10.5 184v10M10.5 182v1M10.5 175v4M10.5 165v1M10.5 157v4M10.5 119v1M10.5 103v6M10.5 99v3M11.5 209v5M11.5 196v10M11.5 183v1M11.5 150v8M11.5 106v3M11.5 103v2M11.5 101v1M12.5 200v18M12.5 197v1M12.5 190v1M12.5 150v3M12.5 148v1M12.5 114v3M12.5 104v3M12.5 99v1M12.5 97v1M13.5 214v4M13.5 212v1M13.5 206v3M13.5 190v7M13.5 151v3M13.5 111v3M13.5 104v3M13.5 97v6M14.5 218v3M14.5 203v2M14.5 195v5M14.5 150v1M14.5 114v3M14.5 91v1M15.5 209v11M15.5 201v7M15.5 199v1M15.5 185v8M15.5 183v1M15.5 175v7M15.5 150v5M15.5 106v5M15.5 89v1M16.5 173v12M16.5 170v2M16.5 167v1M16.5 163v3M16.5 154v4M16.5 104v2M16.5 87v1M17.5 211v5M17.5 187v1M17.5 185v1M17.5 181v2M17.5 170v10M17.5 153v5M17.5 100v1M17.5 84v3M18.5 212v4M18.5 179v3M18.5 149v4M18.5 96v3M18.5 82v2M19.5 178v3M19.5 150v21M19.5 140v9M19.5 96v3M19.5 78v1M20.5 181v3M20.5 174v2M20.5 169v4M20.5 147v10M20.5 139v6M20.5 132v6M20.5 112v1M20.5 94v1M20.5 73v2M21.5 208v13M21.5 201v6M21.5 199v1M21.5 183v4M21.5 161v7M21.5 140v1M21.5 136v1M21.5 121v6M21.5 117v3M21.5 106v3M21.5 89v2M21.5 72v3M22.5 180v1M22.5 155v7M22.5 150v3M22.5 148v1M22.5 142v4M22.5 132v9M22.5 124v7M22.5 107v7M22.5 86v1M22.5 72v1M22.5 70v1M23.5 117v8M23.5 108v3M23.5 84v2M23.5 67v4M23.5 63v2M24.5 126v2M24.5 104v2M24.5 83v4M24.5 56v2M25.5 125v2M25.5 99v4M25.5 84v5M25.5 82v1M25.5 67v2M25.5 65v1M25.5 59v1M25.5 57v1M26.5 125v1M26.5 106v3M26.5 72v8M26.5 59v7M26.5 56v2M27.5 120v5M27.5 107v5M27.5 64v3M27.5 59v4M27.5 55v1M29.5 218v3M29.5 211v1M29.5 190v2M29.5 179v2M29.5 165v5M29.5 142v3M29.5 101v12M29.5 93v6M29.5 90v2M29.5 39v1M30.5 220v1M30.5 208v1M30.5 194v10M30.5 185v8M30.5 156v5M30.5 144v6M30.5 95v15M30.5 32v2M31.5 218v1M31.5 209v1M31.5 193v9M31.5 185v4M31.5 159v3M31.5 144v2M31.5 127v3M31.5 125v1M31.5 111v7M31.5 106v2M31.5 95v2M31.5 26v3M32.5 209v1M32.5 196v5M32.5 190v5M32.5 184v4M32.5 155v7M32.5 153v1M32.5 147v5M32.5 129v6M32.5 126v2M32.5 112v4M32.5 105v1M32.5 99v5M32.5 16v3M33.5 219v2M33.5 207v3M33.5 203v1M33.5 183v3M33.5 157v4M33.5 137v9M33.5 135v1M33.5 126v2M33.5 121v4M33.5 112v4M33.5 102v2M33.5 97v4M33.5 80v2M33.5 78v1M33.5 49v1M33.5 16v5M34.5 216v1M34.5 209v1M34.5 173v5M34.5 167v5M34.5 124v1M34.5 74v5M34.5 63v4M34.5 40v7M34.5 37v1M34.5 34v1M34.5 23v2M34.5 16v6M35.5 217v1M35.5 208v1M35.5 26v9M36.5 218v2M36.5 206v2M36.5 171v4M36.5 167v3M36.5 163v2M36.5 134v3M36.5 123v2M36.5 118v3M36.5 99v2M36.5 97v1M36.5 37v6M36.5 9v1M37.5 217v4M37.5 198v5M37.5 169v3M37.5 165v1M37.5 141v8M37.5 137v1M37.5 119v2M37.5 98v2M37.5 38v8M37.5 14v5M38.5 216v2M38.5 202v3M38.5 38v1M38.5 34v3M38.5 16v8M39.5 217v2M39.5 205v3M39.5 28v6M39.5 19v6M40.5 218v3M40.5 201v6M40.5 144v4M40.5 31v4M40.5 27v1M40.5 20v5M41.5 216v3M41.5 199v3M41.5 155v6M41.5 44v3M41.5 32v3M41.5 30v1M41.5 22v1M41.5 18v3M42.5 216v2M42.5 207v1M42.5 201v1M42.5 117v1M42.5 108v2M42.5 25v6M42.5 18v2M43.5 216v2M43.5 207v1M43.5 157v1M43.5 117v1M43.5 108v1M43.5 32v2M43.5 18v2M44.5 218v3M44.5 203v3M44.5 161v5M44.5 159v1M44.5 139v4M44.5 124v1M44.5 118v2M44.5 105v2M44.5 53v2M44.5 51v1M44.5 47v2M44.5 33v10M44.5 14v1M45.5 219v2M45.5 197v8M45.5 162v2M45.5 134v5M45.5 120v4M45.5 98v7M45.5 54v1M45.5 52v1M45.5 34v5M45.5 12v3M46.5 218v3M46.5 205v1M46.5 159v3M46.5 156v1M46.5 149v1M46.5 139v7M46.5 133v1M46.5 128v1M46.5 118v3M46.5 103v3M46.5 54v2M46.5 32v10M46.5 14v1M47.5 215v3M47.5 206v1M47.5 145v8M47.5 116v1M47.5 106v1M47.5 51v3M47.5 49v1M47.5 42v2M47.5 28v3M47.5 14v2M48.5 215v1M48.5 206v1M48.5 148v4M48.5 115v2M48.5 105v1M48.5 74v4M48.5 27v2M48.5 13v2M49.5 214v1M49.5 207v1M49.5 150v5M49.5 114v6M49.5 105v1M49.5 74v5M49.5 45v3M49.5 30v3M49.5 14v2M50.5 212v2M50.5 207v1M50.5 150v2M50.5 113v2M50.5 105v1M50.5 73v6M50.5 28v3M50.5 13v1M51.5 213v1M51.5 114v2M51.5 105v1M51.5 76v3M51.5 72v3M51.5 45v2M51.5 33v3M51.5 12v2M52.5 214v1M52.5 151v4M52.5 120v30M52.5 102v2M52.5 79v2M52.5 70v2M52.5 51v4M52.5 35v15M52.5 11v1M53.5 213v1M53.5 208v1M53.5 149v4M53.5 117v2M53.5 113v2M53.5 103v2M53.5 74v4M53.5 33v4M53.5 10v1M54.5 213v1M54.5 208v1M54.5 111v1M54.5 104v1M54.5 43v3M54.5 31v10M54.5 10v2M55.5 211v2M55.5 208v1M55.5 158v2M55.5 128v29M55.5 112v4M55.5 103v1M55.5 72v4M55.5 46v3M55.5 6v1M56.5 214v1M56.5 207v1M56.5 158v2M56.5 125v2M56.5 123v1M56.5 113v9M56.5 100v1M56.5 74v3M56.5 67v2M56.5 46v9M56.5 5v1M57.5 214v1M57.5 207v1M57.5 160v1M57.5 115v11M57.5 99v1M57.5 69v4M57.5 47v9M57.5 5v2M58.5 215v1M58.5 207v1M58.5 158v2M58.5 118v1M58.5 99v2M58.5 67v7M58.5 49v7M58.5 6v1M59.5 214v1M59.5 207v1M59.5 158v1M59.5 153v1M59.5 112v19M59.5 99v2M59.5 67v6M59.5 47v9M59.5 7v1M60.5 215v2M60.5 207v1M60.5 153v6M60.5 142v5M60.5 139v1M60.5 135v2M60.5 126v8M60.5 121v4M60.5 112v8M60.5 99v2M60.5 66v2M60.5 53v2M60.5 46v4M60.5 44v1M60.5 40v1M60.5 9v1M61.5 214v1M61.5 206v1M61.5 158v2M61.5 151v4M61.5 145v5M61.5 132v3M61.5 117v10M61.5 99v2M61.5 65v5M61.5 50v5M61.5 45v3M61.5 42v2M61.5 10v1M62.5 214v2M62.5 153v6M62.5 145v5M62.5 135v2M62.5 131v3M62.5 122v7M62.5 112v8M62.5 100v1M62.5 65v4M62.5 52v3M62.5 48v3M62.5 10v1M63.5 216v2M63.5 206v1M63.5 155v4M63.5 135v10M63.5 124v3M63.5 122v1M63.5 113v6M63.5 99v2M63.5 46v2M63.5 36v8M63.5 11v1M64.5 215v2M64.5 206v1M64.5 157v1M64.5 138v4M64.5 132v4M64.5 129v2M64.5 115v11M64.5 102v1M64.5 65v1M64.5 54v2M64.5 44v2M64.5 31v4M64.5 10v2M65.5 215v1M65.5 207v1M65.5 157v1M65.5 140v1M65.5 136v1M65.5 116v8M65.5 112v1M65.5 101v2M65.5 41v2M65.5 29v10M65.5 13v1M66.5 213v1M66.5 208v1M66.5 113v1M66.5 103v1M66.5 26v2M66.5 14v2M67.5 215v1M67.5 206v1M67.5 134v7M67.5 117v6M67.5 101v2M67.5 29v3M67.5 9v3M68.5 216v1M68.5 206v1M68.5 159v2M68.5 156v2M68.5 144v3M68.5 133v5M68.5 128v3M68.5 98v2M68.5 63v2M68.5 33v14M68.5 9v5M69.5 216v1M69.5 206v1M69.5 156v3M69.5 139v4M69.5 121v17M69.5 118v2M69.5 98v6M69.5 53v3M69.5 44v1M69.5 39v1M69.5 35v3M69.5 33v1M69.5 11v3M70.5 216v2M70.5 158v2M70.5 155v2M70.5 133v9M70.5 124v4M70.5 122v1M70.5 117v1M70.5 96v3M70.5 64v3M70.5 53v2M70.5 31v15M70.5 12v3M71.5 216v3M71.5 206v1M71.5 155v1M71.5 139v4M71.5 95v2M71.5 66v2M71.5 48v15M71.5 10v2M72.5 215v1M72.5 206v1M72.5 155v3M72.5 133v13M72.5 129v3M72.5 92v2M72.5 86v2M72.5 78v6M72.5 67v3M72.5 64v2M72.5 59v4M72.5 32v8M72.5 12v2M73.5 215v1M73.5 207v1M73.5 141v15M73.5 128v9M73.5 123v2M73.5 119v1M73.5 93v2M73.5 75v9M73.5 68v5M73.5 57v6M73.5 38v1M73.5 11v2M74.5 213v1M74.5 208v2M74.5 113v2M74.5 100v4M74.5 98v1M74.5 67v1M74.5 53v3M74.5 46v3M74.5 36v7M74.5 12v2M75.5 27v2M75.5 15v6M76.5 25v3M76.5 18v2M77.5 26v4M77.5 15v1M78.5 26v2M78.5 14v3M79.5 24v4M79.5 14v3M80.5 26v2M80.5 13v1M81.5 36v10M81.5 27v2M81.5 10v3M82.5 155v8M82.5 127v17M82.5 99v1M82.5 65v2M82.5 46v3M82.5 30v9M82.5 7v2M83.5 204v12M83.5 194v9M83.5 184v4M83.5 179v4M83.5 168v9M83.5 165v2M83.5 137v14M83.5 125v3M83.5 107v2M83.5 95v2M83.5 64v5M83.5 53v4M83.5 51v1M83.5 48v1M83.5 9v1M84.5 206v12M84.5 201v1M84.5 191v7M84.5 186v4M84.5 184v1M84.5 182v1M84.5 175v5M84.5 167v2M84.5 148v1M84.5 133v14M84.5 123v9M84.5 102v12M84.5 79v13M84.5 63v7M84.5 49v8M84.5 8v1M85.5 202v9M85.5 179v1M85.5 167v9M85.5 147v6M85.5 145v1M85.5 136v5M85.5 126v1M85.5 122v3M85.5 100v6M85.5 92v3M85.5 85v6M85.5 81v3M85.5 67v4M85.5 61v5M85.5 57v2M85.5 12v1M86.5 183v6M86.5 170v5M86.5 156v5M86.5 153v1M86.5 150v2M86.5 147v2M86.5 134v3M86.5 123v5M86.5 101v2M86.5 90v10M86.5 84v1M86.5 76v3M86.5 70v4M86.5 60v2M86.5 36v14M86.5 13v1M87.5 183v3M87.5 180v1M87.5 175v4M87.5 165v3M87.5 155v1M87.5 149v5M87.5 121v9M87.5 89v16M87.5 75v2M87.5 37v9M87.5 13v1M88.5 215v5M88.5 210v4M88.5 196v5M88.5 187v7M88.5 168v4M88.5 165v1M88.5 145v5M88.5 135v2M88.5 117v1M88.5 111v1M88.5 100v9M88.5 15v1M89.5 217v3M89.5 200v3M89.5 195v4M89.5 191v1M89.5 188v2M89.5 172v1M89.5 169v1M89.5 147v3M89.5 133v3M89.5 99v8M89.5 18v1M90.5 217v4M90.5 194v7M90.5 191v1M90.5 180v9M90.5 171v8M90.5 166v4M90.5 145v4M90.5 134v2M90.5 118v1M90.5 104v13M90.5 102v1M90.5 98v3M90.5 84v1M90.5 76v7M90.5 41v4M90.5 29v4M91.5 210v6M91.5 194v14M91.5 183v2M91.5 177v1M91.5 167v9M91.5 148v3M91.5 130v2M91.5 106v11M91.5 77v16M91.5 47v2M92.5 73v1M92.5 54v2M93.5 77v1M93.5 57v1M94.5 82v2M94.5 59v1M95.5 86v1M96.5 88v1M96.5 66v1M97.5 93v2M97.5 67v1M98.5 96v5M98.5 73v1M99.5 104v1M99.5 74v3M100.5 113v1M100.5 79v1M101.5 114v5M102.5 121v3M102.5 89v1M103.5 92v1M104.5 156v5M104.5 147v3M104.5 86v3M105.5 216v4M105.5 200v5M105.5 189v10M105.5 162v3M105.5 143v3M105.5 87v2M106.5 213v7M106.5 157v7M106.5 148v7M106.5 83v8M107.5 220v1M107.5 218v1M107.5 172v2M107.5 165v5M107.5 146v4M107.5 89v3M108.5 163v1M108.5 150v12M108.5 86v1M109.5 218v3M109.5 198v10M109.5 195v1M109.5 175v9M109.5 165v4M109.5 148v3M109.5 135v6M109.5 122v2M109.5 115v2M109.5 85v2M110.5 142v1M111.5 200v2M111.5 136v6M111.5 90v5M112.5 202v2M112.5 199v1M112.5 150v1M112.5 141v8M112.5 131v1M112.5 96v3M113.5 205v1M113.5 202v1M113.5 198v2M113.5 167v4M113.5 161v5M113.5 157v2M113.5 133v22M113.5 120v5M113.5 109v2M113.5 104v4M114.5 218v2M114.5 213v2M114.5 191v3M114.5 86v2M114.5 71v1M115.5 83v3M115.5 70v7M115.5 67v1M116.5 215v5M116.5 192v2M116.5 190v1M116.5 87v6M117.5 209v1M117.5 196v12M117.5 188v2M117.5 94v2M118.5 185v2M118.5 111v2M118.5 109v1M118.5 94v3M118.5 35v1M119.5 184v3M119.5 106v8M119.5 98v4M119.5 36v1M120.5 202v1M120.5 175v7M120.5 134v6M120.5 126v7M120.5 115v3M120.5 103v4M120.5 97v4M120.5 39v3M120.5 35v1M121.5 207v7M121.5 191v3M121.5 179v4M121.5 136v2M121.5 131v4M121.5 106v9M121.5 79v4M121.5 47v2M121.5 43v2M121.5 35v1M122.5 211v4M122.5 183v7M122.5 177v5M122.5 141v1M122.5 127v13M122.5 102v9M122.5 81v2M122.5 44v6M122.5 37v1M123.5 212v1M123.5 196v15M123.5 186v9M123.5 183v1M123.5 181v1M123.5 174v6M123.5 160v1M123.5 133v10M123.5 129v2M123.5 122v5M123.5 105v13M123.5 85v15M123.5 83v1M123.5 49v1M123.5 42v1M123.5 39v1M124.5 207v4M124.5 191v11M124.5 176v6M124.5 140v5M124.5 133v1M124.5 130v1M124.5 123v6M124.5 117v5M124.5 93v10M124.5 90v2M124.5 85v3M124.5 41v5M125.5 216v5M125.5 191v1M125.5 185v4M125.5 130v8M125.5 127v2M125.5 106v2M125.5 81v4M125.5 48v4M125.5 39v1M126.5 219v2M126.5 132v1M126.5 110v7M126.5 95v6M126.5 92v1M126.5 84v3M126.5 53v1M126.5 43v3M127.5 218v2M127.5 216v1M127.5 208v1M127.5 183v11M127.5 181v1M127.5 175v4M127.5 173v1M127.5 141v6M127.5 123v9M127.5 45v1M128.5 53v3M128.5 49v2M129.5 50v1M129.5 42v5M130.5 215v1M130.5 195v17M130.5 156v5M130.5 58v2M130.5 53v4M131.5 178v11M131.5 167v10M131.5 141v2M131.5 135v4M131.5 124v4M131.5 112v3M131.5 104v6M131.5 55v4M131.5 51v2M131.5 46v2M132.5 221v1M132.5 175v2M132.5 115v9M132.5 93v12M132.5 60v1M132.5 56v2M132.5 47v1M133.5 183v3M133.5 166v7M133.5 136v9M133.5 124v4M133.5 115v5M133.5 109v1M133.5 100v5M133.5 55v7M134.5 213v5M134.5 186v8M134.5 162v5M134.5 153v8M134.5 149v3M134.5 140v6M134.5 129v10M134.5 111v3M134.5 106v4M134.5 62v2M134.5 56v1M134.5 50v1M135.5 209v5M135.5 201v3M135.5 189v9M135.5 156v10M135.5 143v12M135.5 139v3M135.5 129v9M135.5 108v7M135.5 67v1M136.5 92v5M136.5 67v4M136.5 59v2M137.5 221v1M137.5 88v4M137.5 71v1M137.5 59v2M137.5 53v1M138.5 220v1M138.5 155v1M138.5 121v3M138.5 119v1M138.5 99v4M138.5 72v2M138.5 54v1M139.5 220v1M139.5 153v1M139.5 141v11M139.5 116v9M139.5 111v3M139.5 70v3M139.5 56v2M140.5 220v1M140.5 115v9M140.5 110v4M140.5 94v14M140.5 77v1M140.5 56v1M141.5 149v4M141.5 115v8M141.5 77v2M141.5 59v2M142.5 219v1M142.5 190v5M142.5 185v1M142.5 173v11M142.5 135v23M142.5 125v3M142.5 79v1M143.5 215v2M143.5 206v1M143.5 204v1M143.5 197v6M143.5 163v9M143.5 134v1M143.5 127v5M143.5 66v2M144.5 207v9M144.5 190v16M144.5 168v9M144.5 163v4M144.5 160v1M144.5 132v3M144.5 130v1M144.5 124v5M144.5 71v1M145.5 80v1M145.5 72v1" stroke="rgb(148, 47, 39)" stroke-width="1.050" fill="none"/><path d="M0.5 203v14M0.5 176v9M0.5 160v13M0.5 140v18M0.5 131v1M0.5 126v1M1.5 219v2M1.5 195v1M1.5 123v2M2.5 220v1M3.5 120v1M4.5 221v1M4.5 120v1M5.5 220v1M5.5 127v5M5.5 120v1M6.5 215v2M6.5 197v6M6.5 139v1M6.5 135v3M6.5 126v1M7.5 117v3M8.5 119v2M8.5 114v1M9.5 172v1M9.5 169v1M9.5 119v1M9.5 114v2M9.5 111v2M10.5 166v9M10.5 161v4M10.5 118v1M10.5 111v1M10.5 109v1M10.5 102v1M11.5 206v3M11.5 184v12M11.5 177v6M11.5 158v6M11.5 114v2M11.5 109v3M12.5 198v2M12.5 191v6M12.5 182v8M12.5 179v2M12.5 153v2M12.5 112v2M12.5 107v2M13.5 213v1M13.5 209v3M13.5 184v6M13.5 154v3M13.5 107v4M14.5 213v5M14.5 205v4M14.5 191v4M14.5 177v1M14.5 151v3M14.5 111v3M14.5 109v1M14.5 98v2M14.5 96v1M14.5 92v2M15.5 184v1M15.5 182v1M15.5 172v3M15.5 155v3M15.5 105v1M15.5 90v1M16.5 172v1M16.5 168v2M16.5 166v1M16.5 158v5M16.5 101v3M16.5 88v1M17.5 180v1M17.5 167v3M17.5 158v4M17.5 94v6M18.5 153v26M18.5 95v1M18.5 84v6M19.5 94v2M19.5 79v1M20.5 176v5M20.5 173v1M20.5 164v5M20.5 157v5M20.5 138v1M20.5 93v1M20.5 75v2M21.5 168v15M21.5 159v2M21.5 141v12M21.5 137v3M21.5 127v9M21.5 109v8M21.5 87v2M21.5 75v2M22.5 153v2M22.5 149v1M22.5 146v2M22.5 141v1M22.5 85v1M22.5 71v1M23.5 83v1M23.5 81v1M23.5 71v1M23.5 65v2M24.5 123v3M24.5 118v3M24.5 116v1M24.5 113v1M24.5 106v4M24.5 82v1M24.5 64v4M24.5 62v1M24.5 58v3M25.5 124v1M25.5 103v3M25.5 83v1M25.5 69v13M25.5 66v1M25.5 60v5M26.5 109v16M26.5 58v1M27.5 112v8M27.5 63v1M27.5 56v3M29.5 212v6M29.5 170v9M29.5 130v12M29.5 126v1M29.5 113v12M29.5 99v2M29.5 92v1M29.5 87v3M29.5 40v2M30.5 219v1M30.5 209v1M30.5 193v1M30.5 182v3M30.5 161v4M30.5 138v6M30.5 110v3M30.5 89v6M30.5 34v3M31.5 217v1M31.5 210v1M31.5 175v10M31.5 162v3M31.5 140v4M31.5 130v5M31.5 126v1M31.5 118v7M31.5 93v2M31.5 91v1M31.5 82v4M31.5 79v1M31.5 52v2M31.5 50v1M31.5 45v2M31.5 37v5M31.5 34v2M31.5 29v3M32.5 218v3M32.5 210v1M32.5 181v3M32.5 176v3M32.5 162v4M32.5 143v4M32.5 135v7M32.5 128v1M32.5 116v10M32.5 94v5M32.5 80v5M32.5 56v2M32.5 53v1M32.5 19v3M33.5 218v1M33.5 210v1M33.5 176v7M33.5 161v6M33.5 136v1M33.5 128v7M33.5 125v1M33.5 116v5M33.5 82v15M33.5 79v1M33.5 76v2M33.5 50v4M33.5 47v2M33.5 21v2M34.5 210v1M34.5 172v1M34.5 67v7M34.5 38v2M34.5 35v2M34.5 25v9M34.5 22v1M35.5 216v1M35.5 209v2M36.5 216v2M36.5 208v1M36.5 10v27M37.5 203v5M37.5 33v5M37.5 19v4M38.5 215v1M38.5 205v2M38.5 24v10M39.5 216v1M39.5 208v1M39.5 25v3M40.5 215v3M40.5 207v2M40.5 28v3M40.5 25v2M41.5 215v1M41.5 202v4M41.5 31v1M41.5 23v7M41.5 21v1M42.5 215v1M42.5 208v1M42.5 116v1M42.5 110v2M42.5 20v5M43.5 215v1M43.5 208v1M43.5 116v1M43.5 109v1M43.5 20v12M44.5 217v1M44.5 206v2M44.5 160v1M44.5 154v5M44.5 143v10M44.5 117v1M44.5 107v1M44.5 43v4M44.5 29v4M44.5 15v6M45.5 217v2M45.5 205v2M45.5 159v3M45.5 152v1M45.5 139v12M45.5 117v3M45.5 105v3M45.5 53v1M45.5 48v4M45.5 39v3M45.5 30v4M45.5 15v2M46.5 216v2M46.5 206v1M46.5 157v2M46.5 150v6M46.5 146v3M46.5 116v2M46.5 106v1M46.5 48v6M46.5 42v2M46.5 29v3M46.5 15v2M47.5 207v1M47.5 113v3M47.5 107v1M47.5 50v1M47.5 44v5M47.5 25v3M47.5 16v1M48.5 214v1M48.5 207v1M48.5 114v1M48.5 106v1M48.5 26v1M48.5 15v2M49.5 211v3M49.5 208v2M49.5 113v1M49.5 106v1M49.5 26v4M49.5 16v2M50.5 208v1M50.5 111v2M50.5 106v1M50.5 24v4M50.5 14v1M51.5 212v1M51.5 208v2M51.5 111v3M51.5 106v1M51.5 75v1M51.5 25v8M51.5 14v2M52.5 207v1M52.5 150v1M52.5 114v6M52.5 104v1M52.5 76v3M52.5 72v2M52.5 31v4M52.5 12v1M53.5 209v4M53.5 111v2M53.5 105v1M53.5 28v5M53.5 11v2M54.5 210v3M54.5 110v1M54.5 105v2M54.5 28v3M54.5 12v3M55.5 209v2M55.5 157v1M55.5 110v2M55.5 104v1M55.5 35v11M55.5 7v2M56.5 213v1M56.5 153v5M56.5 127v4M56.5 110v3M56.5 101v2M56.5 69v5M56.5 39v7M56.5 6v1M57.5 212v2M57.5 159v1M57.5 133v16M57.5 126v6M57.5 112v3M57.5 100v2M57.5 46v1M57.5 7v1M58.5 214v1M58.5 208v1M58.5 150v8M58.5 146v3M58.5 119v7M58.5 110v8M58.5 101v1M58.5 46v3M58.5 7v2M59.5 213v1M59.5 154v4M59.5 146v7M59.5 131v6M59.5 110v2M59.5 101v2M59.5 41v6M59.5 8v1M60.5 214v1M60.5 208v1M60.5 140v2M60.5 137v2M60.5 134v1M60.5 120v1M60.5 111v1M60.5 101v2M60.5 45v1M60.5 41v3M60.5 36v4M60.5 10v2M61.5 207v1M61.5 155v3M61.5 142v3M61.5 140v1M61.5 135v2M61.5 112v5M61.5 101v1M61.5 44v1M61.5 37v5M61.5 11v1M62.5 213v1M62.5 207v1M62.5 137v8M62.5 120v2M62.5 111v1M62.5 101v2M62.5 33v15M62.5 11v2M63.5 215v1M63.5 207v1M63.5 123v1M63.5 119v3M63.5 112v1M63.5 101v2M63.5 44v2M63.5 32v4M63.5 12v2M64.5 214v1M64.5 207v1M64.5 136v2M64.5 112v3M64.5 103v1M64.5 29v2M64.5 12v2M65.5 213v2M65.5 208v1M65.5 111v1M65.5 103v1M65.5 27v2M65.5 14v2M66.5 209v4M66.5 111v2M66.5 104v1M66.5 16v10M67.5 214v1M67.5 207v1M67.5 113v4M67.5 103v1M67.5 27v2M67.5 12v2M68.5 215v1M68.5 207v1M68.5 158v1M68.5 138v6M68.5 124v4M68.5 121v2M68.5 100v4M68.5 29v4M68.5 14v2M69.5 215v1M69.5 207v1M69.5 138v1M69.5 120v1M69.5 115v3M69.5 104v1M69.5 34v1M69.5 30v3M69.5 14v2M70.5 215v1M70.5 207v1M70.5 157v1M70.5 123v1M70.5 118v4M70.5 113v4M70.5 99v5M70.5 28v3M70.5 15v1M71.5 215v1M71.5 123v16M71.5 120v1M71.5 118v1M71.5 97v2M71.5 63v3M71.5 45v3M71.5 31v9M71.5 12v2M72.5 214v1M72.5 207v1M72.5 132v1M72.5 121v8M72.5 94v3M72.5 66v1M72.5 63v1M72.5 48v11M72.5 40v4M72.5 29v3M72.5 14v3M73.5 214v1M73.5 208v1M73.5 137v4M73.5 125v3M73.5 120v3M73.5 116v3M73.5 95v2M73.5 63v5M73.5 48v9M73.5 39v5M73.5 32v6M73.5 13v2M74.5 210v3M74.5 112v1M74.5 104v3M74.5 43v3M74.5 31v5M74.5 14v5M75.5 21v6M76.5 20v5M77.5 24v2M77.5 16v4M78.5 17v9M79.5 17v7M80.5 24v2M80.5 14v2M81.5 25v2M81.5 13v2M82.5 39v7M82.5 27v3M82.5 9v2M83.5 183v1M83.5 177v2M83.5 160v5M83.5 151v3M83.5 128v9M83.5 100v7M83.5 97v2M83.5 46v2M83.5 10v1M84.5 190v1M84.5 185v1M84.5 183v1M84.5 180v2M84.5 164v3M84.5 149v8M84.5 147v1M84.5 100v2M84.5 92v4M84.5 46v3M84.5 29v9M84.5 9v1M85.5 163v4M85.5 153v5M85.5 127v9M85.5 125v1M85.5 95v5M85.5 91v1M85.5 84v1M85.5 66v1M85.5 46v11M85.5 33v3M85.5 30v2M85.5 13v1M86.5 175v8M86.5 154v2M86.5 152v1M86.5 128v6M86.5 85v5M86.5 79v5M86.5 62v8M86.5 58v2M86.5 50v1M86.5 30v6M86.5 14v1M87.5 181v2M87.5 179v1M87.5 156v9M87.5 154v1M87.5 77v12M87.5 72v3M87.5 46v3M87.5 31v6M87.5 14v1M88.5 201v9M88.5 172v15M88.5 166v2M88.5 164v1M88.5 150v5M88.5 133v2M88.5 118v3M88.5 112v5M88.5 109v2M88.5 94v6M88.5 70v12M88.5 39v7M88.5 16v1M89.5 214v3M89.5 209v1M89.5 203v5M89.5 199v1M89.5 185v3M89.5 173v2M89.5 170v2M89.5 166v3M89.5 150v1M89.5 126v7M89.5 107v7M89.5 97v2M89.5 75v10M89.5 35v9M89.5 19v2M90.5 212v5M90.5 201v7M90.5 179v1M90.5 159v7M90.5 153v2M90.5 149v3M90.5 130v4M90.5 119v6M90.5 117v1M90.5 95v3M90.5 85v7M90.5 83v1M90.5 73v3M90.5 45v2M90.5 33v8M91.5 208v2M91.5 178v5M91.5 176v1M91.5 162v5M91.5 157v2M91.5 151v5M91.5 127v3M91.5 117v4M91.5 101v5M91.5 93v5M91.5 73v4M91.5 49v1M92.5 72v1M92.5 56v2M93.5 76v1M94.5 80v2M94.5 60v1M95.5 85v1M95.5 62v2M96.5 86v2M96.5 67v1M97.5 92v1M98.5 95v1M98.5 74v2M99.5 102v2M99.5 77v1M100.5 110v3M100.5 80v2M101.5 113v1M101.5 86v2M102.5 120v1M102.5 90v1M103.5 125v1M104.5 212v9M104.5 208v1M104.5 194v11M104.5 186v7M104.5 173v3M104.5 161v3M104.5 146v1M104.5 89v1M105.5 205v11M105.5 199v1M105.5 174v15M105.5 165v7M105.5 128v15M105.5 89v3M106.5 210v3M106.5 175v27M106.5 164v5M106.5 144v4M106.5 140v2M106.5 91v4M107.5 219v1M107.5 204v14M107.5 186v15M107.5 184v1M107.5 174v9M107.5 170v2M107.5 144v2M107.5 103v5M107.5 101v1M107.5 98v2M107.5 95v1M107.5 92v2M108.5 217v4M108.5 192v3M108.5 180v10M108.5 178v1M108.5 164v2M108.5 162v1M108.5 147v3M108.5 96v2M108.5 87v5M109.5 208v10M109.5 196v2M109.5 184v11M109.5 169v6M109.5 141v7M109.5 124v11M109.5 117v5M109.5 105v10M109.5 87v2M114.5 215v3M114.5 205v8M114.5 203v1M114.5 199v3M114.5 194v3M114.5 187v4M114.5 88v8M115.5 220v1M115.5 189v5M115.5 86v2M116.5 208v7M116.5 202v5M116.5 196v1M116.5 194v1M116.5 189v1M116.5 93v2M117.5 187v1M117.5 96v2M118.5 176v9M118.5 131v5M118.5 113v7M118.5 110v1M118.5 97v12M118.5 36v4M119.5 169v15M119.5 114v30M119.5 102v4M120.5 169v6M120.5 157v1M120.5 155v1M120.5 140v14M120.5 118v8M120.5 36v3M121.5 204v3M121.5 194v1M121.5 176v3M121.5 173v2M121.5 138v4M121.5 128v3M121.5 115v4M121.5 99v7M121.5 83v14M121.5 42v1M121.5 36v2M122.5 208v3M122.5 190v4M122.5 173v4M122.5 142v2M122.5 140v1M122.5 125v2M122.5 111v4M122.5 99v3M122.5 88v2M122.5 83v4M122.5 43v1M123.5 195v1M123.5 169v5M123.5 161v5M123.5 156v4M123.5 149v1M123.5 143v5M123.5 118v4M123.5 100v5M123.5 40v2M124.5 202v5M124.5 164v12M124.5 157v6M124.5 153v2M124.5 151v1M124.5 145v4M124.5 122v1M125.5 210v6M125.5 208v1M125.5 192v3M125.5 189v2M125.5 178v7M125.5 162v8M125.5 138v2M125.5 129v1M125.5 121v6M125.5 108v7M125.5 100v6M125.5 85v4M125.5 46v2M126.5 216v3M126.5 187v7M126.5 133v7M126.5 124v8M126.5 117v6M126.5 101v9M126.5 93v2M126.5 87v5M127.5 217v1M127.5 209v7M127.5 200v8M127.5 194v5M127.5 182v1M127.5 179v2M127.5 174v1M127.5 147v26M128.5 46v3M128.5 42v2M129.5 47v3M130.5 57v1M130.5 50v3M130.5 45v1M131.5 210v11M131.5 189v5M131.5 177v1M131.5 163v4M131.5 146v1M131.5 143v2M131.5 139v2M131.5 128v7M131.5 110v2M131.5 48v3M132.5 177v7M132.5 167v8M132.5 164v1M132.5 149v1M132.5 133v3M132.5 124v5M132.5 113v2M132.5 105v2M132.5 53v3M132.5 48v4M133.5 217v4M133.5 186v4M133.5 161v5M133.5 145v6M133.5 128v8M133.5 110v5M133.5 105v4M133.5 53v2M133.5 48v1M134.5 194v19M134.5 152v1M134.5 139v1M134.5 110v1M134.5 55v1M134.5 51v1M135.5 204v5M135.5 198v3M135.5 155v1M135.5 57v10M135.5 50v2M136.5 219v2M136.5 178v9M136.5 163v11M136.5 148v1M136.5 140v6M136.5 115v9M136.5 113v1M136.5 97v6M136.5 61v6M136.5 57v2M136.5 53v3M137.5 169v3M137.5 166v1M137.5 118v4M137.5 104v2M137.5 102v1M137.5 92v9M137.5 68v3M137.5 64v2M137.5 61v2M137.5 58v1M137.5 54v1M138.5 219v1M138.5 170v20M138.5 156v4M138.5 142v13M138.5 136v4M138.5 124v3M138.5 120v1M138.5 103v16M138.5 68v4M139.5 218v2M139.5 216v1M139.5 154v44M139.5 152v1M139.5 125v16M139.5 62v8M139.5 58v3M140.5 219v1M140.5 186v10M140.5 183v2M140.5 181v1M140.5 171v9M140.5 169v1M140.5 167v1M140.5 138v15M140.5 124v4M140.5 114v1M140.5 108v2M140.5 75v2M140.5 57v1M141.5 217v4M141.5 180v13M141.5 153v7M141.5 135v14M141.5 123v4M141.5 76v1M141.5 67v1M141.5 61v1M142.5 213v6M142.5 195v10M142.5 169v4M142.5 158v4M142.5 128v7M142.5 78v1M142.5 65v3M143.5 207v8M143.5 205v1M143.5 203v1M143.5 78v2M143.5 75v2M143.5 68v1M144.5 206v1M144.5 131v1M144.5 129v1M144.5 78v2M144.5 75v1M144.5 72v2M145.5 79v1M145.5 73v1" stroke="rgb(179, 57, 47)" stroke-width="1.050" fill="none"/><path d="M0.5 127v4M1.5 215v4M1.5 213v1M1.5 196v10M1.5 187v8M1.5 159v1M1.5 132v6M1.5 125v2M2.5 218v2M2.5 190v9M2.5 122v1M3.5 220v1M3.5 130v1M3.5 121v2M4.5 124v11M4.5 121v2M5.5 215v5M5.5 132v4M5.5 124v3M5.5 121v2M6.5 203v12M6.5 193v4M6.5 181v6M6.5 159v1M6.5 140v10M6.5 138v1M6.5 122v4M6.5 116v2M8.5 115v4M9.5 116v3M9.5 113v1M10.5 112v2M10.5 110v1M11.5 164v13M11.5 112v2M12.5 181v1M12.5 176v3M12.5 159v3M12.5 155v3M12.5 109v3M13.5 167v17M13.5 157v3M14.5 209v4M14.5 178v13M14.5 174v3M14.5 154v3M14.5 110v1M14.5 105v4M14.5 100v2M14.5 97v1M14.5 94v2M15.5 167v5M15.5 158v2M15.5 98v7M15.5 91v2M16.5 94v7M16.5 89v2M17.5 162v5M17.5 91v3M17.5 87v3M18.5 90v5M19.5 92v2M19.5 80v1M20.5 162v2M20.5 92v1M20.5 77v1M21.5 153v6M21.5 84v3M21.5 82v1M21.5 77v1M22.5 79v6M22.5 73v2M23.5 82v1M23.5 72v1M24.5 121v2M24.5 117v1M24.5 114v2M24.5 110v3M24.5 78v4M24.5 72v1M24.5 68v1M24.5 63v1M24.5 61v1M25.5 117v7M25.5 106v3M29.5 127v3M29.5 125v1M29.5 83v4M29.5 67v8M29.5 42v4M30.5 217v2M30.5 210v2M30.5 178v4M30.5 176v1M30.5 165v4M30.5 134v4M30.5 121v4M30.5 113v6M30.5 86v3M30.5 84v1M30.5 81v2M30.5 74v6M30.5 66v6M30.5 42v1M30.5 37v3M31.5 216v1M31.5 211v1M31.5 165v10M31.5 135v5M31.5 92v1M31.5 86v5M31.5 80v2M31.5 68v11M31.5 54v4M31.5 51v1M31.5 47v3M31.5 42v3M31.5 36v1M31.5 32v2M32.5 216v2M32.5 179v2M32.5 166v10M32.5 142v1M32.5 85v9M32.5 77v3M32.5 58v3M32.5 54v2M32.5 49v4M32.5 22v3M33.5 216v2M33.5 211v2M33.5 167v9M33.5 72v4M33.5 61v1M33.5 54v5M33.5 44v3M33.5 37v2M33.5 32v2M33.5 23v4M34.5 215v1M34.5 211v1M35.5 215v1M35.5 211v1M36.5 215v1M36.5 209v1M37.5 216v1M37.5 208v1M37.5 23v10M38.5 214v1M38.5 207v2M39.5 214v2M39.5 209v2M40.5 214v1M40.5 209v2M41.5 214v1M41.5 206v3M42.5 214v1M42.5 209v1M42.5 112v4M43.5 213v2M43.5 209v2M43.5 110v6M44.5 215v2M44.5 208v1M44.5 153v1M44.5 114v3M44.5 108v2M44.5 21v8M45.5 216v1M45.5 207v1M45.5 153v6M45.5 151v1M45.5 115v2M45.5 108v1M45.5 42v6M45.5 24v6M45.5 17v1M46.5 214v2M46.5 207v1M46.5 115v1M46.5 107v1M46.5 44v4M46.5 26v3M46.5 17v1M47.5 214v1M47.5 208v1M47.5 112v1M47.5 108v1M47.5 17v8M48.5 213v1M48.5 208v1M48.5 113v1M48.5 107v2M48.5 17v9M49.5 210v1M49.5 111v2M49.5 107v2M49.5 18v8M50.5 209v3M50.5 107v4M50.5 21v3M50.5 15v2M51.5 210v2M51.5 107v4M51.5 16v9M52.5 212v2M52.5 208v2M52.5 112v2M52.5 105v1M52.5 74v2M52.5 28v3M52.5 13v2M53.5 106v5M53.5 25v3M53.5 13v2M54.5 209v1M54.5 107v3M54.5 25v3M54.5 15v4M55.5 108v2M55.5 105v1M55.5 31v4M55.5 9v1M56.5 212v1M56.5 210v1M56.5 208v1M56.5 131v22M56.5 109v1M56.5 103v2M56.5 35v4M56.5 7v3M57.5 208v4M57.5 149v10M57.5 132v1M57.5 110v2M57.5 102v2M57.5 39v7M57.5 8v3M58.5 212v2M58.5 209v2M58.5 149v1M58.5 126v20M58.5 108v2M58.5 102v2M58.5 39v7M58.5 9v1M59.5 212v1M59.5 208v1M59.5 137v9M59.5 108v2M59.5 103v3M59.5 36v5M59.5 9v3M60.5 213v1M60.5 209v1M60.5 109v2M60.5 103v2M60.5 31v5M60.5 12v4M61.5 213v1M61.5 208v1M61.5 141v1M61.5 137v3M61.5 110v2M61.5 102v1M61.5 32v5M61.5 12v1M62.5 211v2M62.5 208v2M62.5 110v1M62.5 103v2M62.5 28v5M62.5 13v1M63.5 214v1M63.5 208v1M63.5 110v2M63.5 103v2M63.5 28v4M63.5 14v1M64.5 213v1M64.5 110v2M64.5 104v1M64.5 27v2M64.5 14v2M65.5 211v2M65.5 209v1M65.5 104v7M65.5 24v3M65.5 16v3M66.5 110v1M66.5 105v3M67.5 213v1M67.5 208v1M67.5 112v1M67.5 104v2M67.5 24v3M67.5 21v2M67.5 14v3M68.5 214v1M68.5 208v1M68.5 123v1M68.5 113v8M68.5 104v1M68.5 26v3M68.5 16v3M69.5 213v2M69.5 208v1M69.5 112v3M69.5 105v2M69.5 25v5M69.5 16v6M70.5 212v3M70.5 208v1M70.5 112v1M70.5 104v2M70.5 25v3M70.5 16v3M71.5 213v2M71.5 207v1M71.5 121v2M71.5 119v1M71.5 115v3M71.5 99v6M71.5 40v5M71.5 26v5M71.5 14v3M72.5 212v2M72.5 208v2M72.5 114v7M72.5 97v7M72.5 44v4M72.5 21v8M72.5 17v3M73.5 212v2M73.5 209v1M73.5 114v2M73.5 101v5M73.5 97v2M73.5 44v4M73.5 27v5M73.5 15v3M74.5 107v5M74.5 19v12M77.5 20v4M80.5 16v8M81.5 22v3M81.5 15v6M82.5 25v2M82.5 11v2M83.5 154v6M83.5 99v1M83.5 43v3M83.5 27v8M83.5 11v2M84.5 157v7M84.5 96v4M84.5 38v8M84.5 27v2M84.5 10v2M85.5 158v5M85.5 36v10M85.5 32v1M85.5 27v3M85.5 14v2M86.5 55v3M86.5 51v2M86.5 25v5M86.5 15v2M87.5 67v5M87.5 61v2M87.5 49v1M87.5 26v5M87.5 15v1M88.5 155v9M88.5 121v12M88.5 82v12M88.5 66v4M88.5 46v1M88.5 31v8M88.5 17v2M89.5 210v4M89.5 208v1M89.5 179v6M89.5 175v3M89.5 164v2M89.5 151v3M89.5 114v12M89.5 94v3M89.5 92v1M89.5 85v5M89.5 72v3M89.5 44v3M89.5 33v2M89.5 21v3M90.5 208v4M90.5 155v4M90.5 152v1M90.5 125v5M90.5 92v3M90.5 71v2M90.5 47v1M91.5 159v3M91.5 156v1M91.5 121v6M91.5 98v3M91.5 70v3M91.5 50v1M92.5 69v3M92.5 58v1M93.5 73v3M93.5 58v1M94.5 78v2M95.5 83v2M95.5 64v1M96.5 84v2M96.5 73v4M96.5 68v2M97.5 90v2M97.5 68v2M98.5 94v1M98.5 84v2M98.5 76v2M99.5 100v2M99.5 78v1M100.5 109v1M100.5 82v2M101.5 110v3M101.5 88v2M102.5 117v3M102.5 115v1M102.5 91v3M103.5 124v1M103.5 93v1M104.5 209v3M104.5 205v3M104.5 193v1M104.5 176v10M104.5 164v9M104.5 142v4M104.5 136v1M104.5 127v8M104.5 90v1M105.5 172v2M105.5 125v3M105.5 92v3M106.5 202v8M106.5 169v6M106.5 142v2M106.5 127v13M106.5 95v4M107.5 201v3M107.5 185v1M107.5 183v1M107.5 135v9M107.5 125v9M107.5 108v4M107.5 102v1M107.5 100v1M107.5 96v2M107.5 94v1M108.5 213v4M108.5 195v17M108.5 190v2M108.5 179v1M108.5 174v4M108.5 166v6M108.5 136v11M108.5 125v5M108.5 98v14M108.5 92v4M109.5 89v16M114.5 204v1M114.5 202v1M114.5 197v2M114.5 174v13M114.5 160v4M114.5 138v1M114.5 134v3M114.5 131v2M114.5 120v1M114.5 118v1M114.5 111v4M114.5 106v2M114.5 96v7M115.5 216v4M115.5 199v7M115.5 194v3M115.5 188v1M115.5 88v4M116.5 207v1M116.5 197v5M116.5 195v1M116.5 188v1M116.5 95v2M117.5 185v2M117.5 109v5M117.5 98v2M118.5 160v16M118.5 136v23M118.5 120v11M119.5 144v25M120.5 158v11M120.5 156v1M120.5 154v1M121.5 195v9M121.5 175v1M121.5 142v31M121.5 119v9M121.5 97v2M121.5 41v1M122.5 194v14M122.5 158v15M122.5 144v7M122.5 122v3M122.5 115v3M122.5 90v9M122.5 87v1M122.5 42v1M122.5 38v2M123.5 166v3M123.5 150v6M123.5 148v1M124.5 163v1M124.5 155v2M124.5 152v1M124.5 149v2M125.5 209v1M125.5 195v13M125.5 170v8M125.5 157v5M125.5 149v2M125.5 140v7M125.5 115v6M125.5 89v11M125.5 43v3M125.5 40v2M126.5 207v9M126.5 194v5M126.5 181v6M126.5 164v9M126.5 140v3M126.5 123v1M127.5 199v1M128.5 44v2M130.5 46v4M131.5 194v16M131.5 156v7M131.5 147v8M131.5 145v1M132.5 218v3M132.5 214v3M132.5 212v1M132.5 208v2M132.5 204v2M132.5 184v16M132.5 165v2M132.5 156v8M132.5 150v4M132.5 143v6M132.5 136v6M132.5 129v4M132.5 107v6M132.5 52v1M133.5 201v16M133.5 199v1M133.5 190v5M133.5 151v10M133.5 49v4M134.5 52v3M135.5 52v5M136.5 217v2M136.5 214v1M136.5 187v8M136.5 174v4M136.5 149v14M136.5 146v2M136.5 133v7M136.5 128v1M136.5 124v3M136.5 114v1M136.5 103v10M136.5 56v1M137.5 220v1M137.5 172v11M137.5 167v2M137.5 163v3M137.5 122v12M137.5 106v12M137.5 103v1M137.5 101v1M137.5 66v2M137.5 63v1M137.5 55v3M138.5 203v16M138.5 190v10M138.5 160v10M138.5 140v2M138.5 127v9M138.5 62v6M138.5 55v2M139.5 217v1M139.5 198v18M139.5 61v1M140.5 215v4M140.5 196v3M140.5 185v1M140.5 182v1M140.5 180v1M140.5 170v1M140.5 168v1M140.5 153v14M140.5 128v10M140.5 74v1M140.5 58v7M141.5 213v4M141.5 193v6M141.5 160v20M141.5 127v8M141.5 75v1M141.5 68v2M141.5 65v2M141.5 62v2M142.5 205v8M142.5 162v7M142.5 76v2M142.5 68v3M143.5 77v1M143.5 73v2M143.5 69v2M144.5 76v2M144.5 74v1M145.5 74v5" stroke="rgb(213, 68, 56)" stroke-width="1.050" fill="none"/><path d="M1.5 214v1M1.5 206v7M1.5 177v10M1.5 160v15M1.5 153v6M1.5 138v7M1.5 127v5M2.5 207v11M2.5 199v6M2.5 180v10M2.5 170v1M2.5 163v2M2.5 160v1M2.5 155v4M2.5 131v13M2.5 123v2M3.5 217v3M3.5 189v14M3.5 131v7M3.5 127v3M3.5 123v3M4.5 216v5M4.5 135v3M4.5 123v1M5.5 212v3M5.5 198v2M5.5 192v1M5.5 189v2M5.5 136v3M5.5 123v1M6.5 187v6M6.5 160v21M6.5 150v9M6.5 118v4M10.5 114v4M12.5 172v4M12.5 162v6M12.5 158v1M13.5 160v7M14.5 157v17M14.5 102v3M15.5 160v7M15.5 93v5M16.5 91v3M17.5 90v1M19.5 84v8M19.5 81v2M20.5 89v3M20.5 82v3M20.5 78v2M21.5 83v1M21.5 78v4M22.5 75v4M23.5 79v2M23.5 73v2M24.5 73v5M24.5 69v3M25.5 109v8M29.5 75v8M29.5 61v6M29.5 59v1M29.5 46v12M30.5 215v2M30.5 212v1M30.5 177v1M30.5 169v7M30.5 125v9M30.5 119v2M30.5 85v1M30.5 83v1M30.5 80v1M30.5 72v2M30.5 60v6M30.5 43v13M30.5 40v2M31.5 212v4M31.5 58v10M32.5 215v1M32.5 211v1M32.5 61v16M32.5 45v4M32.5 33v9M32.5 25v7M33.5 213v3M33.5 62v10M33.5 59v2M33.5 39v5M33.5 34v3M33.5 27v5M34.5 214v1M34.5 212v1M35.5 212v3M36.5 214v1M36.5 210v1M37.5 214v2M37.5 209v1M38.5 209v5M39.5 211v3M40.5 211v3M41.5 209v5M42.5 210v4M43.5 211v2M44.5 212v3M44.5 209v2M44.5 113v1M44.5 110v1M45.5 214v2M45.5 208v2M45.5 109v6M45.5 18v6M46.5 213v1M46.5 208v1M46.5 114v1M46.5 108v1M46.5 22v4M46.5 18v3M47.5 213v1M47.5 209v2M47.5 109v3M48.5 209v4M48.5 109v4M49.5 109v2M50.5 17v4M52.5 210v2M52.5 106v6M52.5 24v4M52.5 15v3M53.5 21v4M53.5 15v4M54.5 19v6M55.5 106v2M55.5 20v11M55.5 10v4M56.5 211v1M56.5 209v1M56.5 105v4M56.5 32v3M56.5 10v3M57.5 104v6M57.5 35v4M57.5 11v2M58.5 211v1M58.5 107v1M58.5 104v2M58.5 34v5M58.5 10v2M59.5 209v3M59.5 106v2M59.5 29v7M59.5 12v3M60.5 210v3M60.5 105v4M60.5 26v5M60.5 16v2M61.5 211v2M61.5 209v1M61.5 109v1M61.5 103v3M61.5 27v5M61.5 25v1M61.5 13v2M62.5 210v1M62.5 105v5M62.5 25v3M62.5 14v3M63.5 211v3M63.5 209v1M63.5 105v5M63.5 24v4M63.5 15v2M64.5 211v2M64.5 208v2M64.5 109v1M64.5 105v2M64.5 24v3M64.5 21v1M64.5 16v3M65.5 210v1M65.5 19v5M66.5 108v2M67.5 212v1M67.5 209v2M67.5 110v2M67.5 106v1M67.5 23v1M67.5 17v4M68.5 213v1M68.5 209v1M68.5 111v2M68.5 105v3M68.5 19v7M69.5 209v4M69.5 107v5M69.5 22v3M70.5 209v3M70.5 110v2M70.5 106v2M70.5 19v6M71.5 212v1M71.5 208v2M71.5 113v2M71.5 105v2M71.5 22v4M71.5 17v4M72.5 210v2M72.5 104v10M72.5 20v1M73.5 210v2M73.5 106v8M73.5 99v2M73.5 18v9M81.5 21v1M82.5 22v3M82.5 13v3M83.5 35v8M83.5 25v2M83.5 13v3M84.5 24v3M84.5 12v3M85.5 23v4M85.5 16v2M86.5 53v2M86.5 22v3M86.5 17v3M87.5 63v4M87.5 59v2M87.5 50v1M87.5 23v3M87.5 16v4M88.5 64v2M88.5 47v3M88.5 26v5M88.5 19v3M89.5 178v1M89.5 154v10M89.5 93v1M89.5 90v2M89.5 70v2M89.5 47v2M89.5 27v6M89.5 24v2M90.5 69v2M90.5 48v1M91.5 69v1M91.5 51v2M92.5 68v1M92.5 63v1M92.5 59v2M93.5 72v1M93.5 59v1M94.5 77v1M94.5 61v1M95.5 81v2M95.5 65v2M96.5 81v3M96.5 77v3M96.5 72v1M96.5 70v1M97.5 87v3M97.5 85v1M97.5 70v1M98.5 91v3M98.5 86v1M98.5 78v6M99.5 98v2M99.5 94v2M99.5 87v1M99.5 79v2M100.5 104v5M100.5 84v2M101.5 107v3M101.5 94v1M101.5 90v1M102.5 116v1M102.5 114v1M102.5 94v3M103.5 123v1M103.5 94v1M104.5 137v5M104.5 135v1M104.5 126v1M104.5 91v3M105.5 95v4M106.5 126v1M106.5 99v7M107.5 134v1M107.5 124v1M107.5 112v2M108.5 212v1M108.5 172v2M108.5 130v6M108.5 121v4M108.5 112v5M114.5 164v10M114.5 139v21M114.5 137v1M114.5 133v1M114.5 121v10M114.5 119v1M114.5 115v3M114.5 108v3M114.5 103v3M115.5 206v10M115.5 197v2M115.5 186v2M115.5 92v4M116.5 186v2M116.5 97v1M117.5 171v14M117.5 160v2M117.5 136v1M117.5 114v20M117.5 100v9M118.5 159v1M121.5 38v3M122.5 151v7M122.5 118v4M122.5 40v2M125.5 151v6M125.5 147v2M125.5 42v1M126.5 199v8M126.5 173v8M126.5 151v13M126.5 143v6M131.5 155v1M132.5 217v1M132.5 213v1M132.5 210v2M132.5 206v2M132.5 200v4M132.5 154v2M132.5 142v1M133.5 200v1M133.5 195v4M136.5 215v2M136.5 204v10M136.5 195v4M136.5 129v4M136.5 127v1M137.5 219v1M137.5 206v5M137.5 183v10M137.5 134v29M138.5 200v3M138.5 59v3M138.5 57v1M140.5 199v16M140.5 72v2M140.5 65v6M141.5 209v4M141.5 206v2M141.5 199v6M141.5 74v1M141.5 70v1M141.5 64v1M142.5 71v5M143.5 71v2" stroke="rgb(237, 93, 81)" stroke-width="1.050" fill="none"/><path d="M1.5 175v2M1.5 145v8M2.5 205v2M2.5 171v9M2.5 165v5M2.5 161v2M2.5 159v1M2.5 144v11M2.5 125v6M3.5 203v14M3.5 181v8M3.5 156v10M3.5 138v17M3.5 126v1M4.5 213v3M4.5 186v19M4.5 149v1M4.5 138v5M5.5 200v12M5.5 193v5M5.5 191v1M5.5 178v11M5.5 151v14M5.5 139v11M12.5 168v4M19.5 83v1M20.5 85v4M20.5 80v2M23.5 75v4M29.5 60v1M29.5 58v1M30.5 213v2M30.5 56v4M32.5 212v3M32.5 42v3M32.5 32v1M34.5 213v1M36.5 211v3M37.5 210v4M44.5 211v1M44.5 111v2M45.5 210v4M46.5 209v4M46.5 112v2M46.5 109v2M46.5 21v1M47.5 211v2M52.5 18v6M53.5 19v2M55.5 14v6M56.5 19v13M56.5 13v4M57.5 25v10M57.5 13v3M58.5 106v1M58.5 19v15M58.5 12v3M59.5 15v14M60.5 18v8M61.5 210v1M61.5 106v3M61.5 26v1M61.5 15v10M62.5 17v8M63.5 210v1M63.5 17v7M64.5 210v1M64.5 107v2M64.5 22v2M64.5 19v2M67.5 211v1M67.5 107v3M68.5 210v3M68.5 108v3M70.5 108v2M71.5 210v2M71.5 111v2M71.5 107v3M71.5 21v1M82.5 16v6M83.5 20v5M83.5 16v3M84.5 20v4M84.5 15v4M85.5 18v5M86.5 20v2M87.5 56v3M87.5 51v1M87.5 20v3M88.5 61v3M88.5 50v2M88.5 22v4M89.5 66v4M89.5 63v2M89.5 49v2M89.5 26v1M90.5 67v2M90.5 49v1M91.5 67v2M91.5 56v1M91.5 53v2M92.5 64v4M92.5 61v2M93.5 70v2M93.5 62v1M93.5 60v1M94.5 72v5M94.5 66v2M94.5 62v1M95.5 77v4M95.5 67v1M96.5 80v1M96.5 71v1M97.5 86v1M97.5 84v1M97.5 79v1M97.5 71v4M98.5 87v4M99.5 96v2M99.5 92v2M99.5 88v2M99.5 81v6M100.5 102v2M100.5 86v1M101.5 105v2M101.5 103v1M101.5 100v2M101.5 95v4M101.5 91v3M102.5 111v3M102.5 109v1M102.5 103v1M102.5 97v2M103.5 122v1M103.5 95v3M104.5 125v1M104.5 94v1M105.5 123v2M105.5 99v5M106.5 124v2M106.5 106v10M107.5 122v2M107.5 114v1M108.5 117v4M115.5 182v4M115.5 175v6M115.5 156v5M115.5 111v4M115.5 106v4M115.5 96v8M116.5 183v3M116.5 113v2M116.5 110v1M116.5 98v3M117.5 162v9M117.5 137v23M117.5 134v2M126.5 149v2M136.5 199v5M137.5 211v8M137.5 193v13M138.5 58v1M140.5 71v1M141.5 208v1M141.5 205v1M141.5 71v3" stroke="rgb(243, 140, 128)" stroke-width="1.050" fill="none"/><path d="M3.5 166v15M3.5 155v1M4.5 205v8M4.5 150v36M4.5 143v6M5.5 165v13M5.5 150v1M46.5 111v1M56.5 17v2M57.5 16v9M58.5 15v4M71.5 110v1M83.5 19v1M84.5 19v1M87.5 52v4M88.5 52v9M89.5 65v1M89.5 51v12M90.5 50v17M91.5 57v10M91.5 55v1M93.5 63v7M93.5 61v1M94.5 68v4M94.5 63v3M95.5 68v9M97.5 80v4M97.5 75v4M99.5 90v2M100.5 87v15M101.5 104v1M101.5 102v1M101.5 99v1M102.5 110v1M102.5 104v5M102.5 99v4M103.5 98v24M104.5 95v30M105.5 104v19M106.5 116v8M107.5 115v7M115.5 181v1M115.5 161v14M115.5 115v41M115.5 110v1M115.5 104v2M116.5 115v68M116.5 111v2M116.5 101v9" stroke="rgb(252, 206, 195)" stroke-width="1.050" fill="none"/></g><g transform="translate(145.47,0) scale(0.9861,0.9964)" filter="url(#sb)"><path d="M0.5 222v1M0.5 167v1M1.5 223v1M1.5 167v2M2.5 223v1M2.5 167v1M3.5 223v1M3.5 165v2M4.5 223v1M4.5 164v2M5.5 223v1M5.5 163v2M6.5 167v1M7.5 223v1M7.5 166v1M8.5 223v1M8.5 164v1M9.5 223v1M9.5 155v7M9.5 150v1M9.5 133v1M9.5 60v72M10.5 156v3M10.5 102v29M10.5 100v1M10.5 61v4M11.5 120v8M11.5 64v3M12.5 118v12M12.5 61v4M13.5 128v1M13.5 121v1M13.5 97v5M13.5 61v4M14.5 126v4M14.5 66v3M15.5 131v2M15.5 126v1M15.5 64v2M16.5 125v9M16.5 98v3M16.5 86v4M16.5 62v3M17.5 64v4M18.5 63v3M19.5 67v3M20.5 61v4M21.5 223v1M21.5 81v11M21.5 79v1M21.5 68v4M22.5 223v1M22.5 66v29M23.5 223v1M23.5 127v1M24.5 223v1M24.5 126v1M25.5 223v1M25.5 127v1M26.5 223v1M26.5 124v2M27.5 128v2M28.5 176v1M28.5 163v3M28.5 137v2M28.5 130v2M29.5 175v2M29.5 164v2M29.5 134v3M30.5 173v2M30.5 165v2M31.5 172v3M31.5 165v1M32.5 223v1M32.5 63v3M33.5 223v1M33.5 62v4M34.5 222v1M34.5 69v11M35.5 222v1M35.5 78v1M35.5 65v7M36.5 222v1M36.5 62v4M37.5 222v1M37.5 62v3M38.5 223v1M38.5 58v4M39.5 223v1M39.5 62v3M40.5 222v1M40.5 60v3M41.5 223v1M41.5 58v3M42.5 223v1M42.5 56v3M43.5 223v1M43.5 56v3M44.5 222v1M44.5 56v5M45.5 223v1M45.5 54v4M46.5 223v1M46.5 55v3M47.5 223v1M47.5 57v3M48.5 223v1M48.5 52v2M49.5 223v1M49.5 58v2M50.5 223v1M50.5 57v2M51.5 222v1M51.5 205v2M51.5 176v5M51.5 54v2M52.5 222v1M52.5 208v2M52.5 167v4M52.5 83v9M52.5 57v5M53.5 221v2M53.5 208v3M53.5 165v3M53.5 104v2M53.5 101v2M53.5 83v17M53.5 60v6M54.5 222v1M54.5 208v3M54.5 166v3M54.5 93v1M54.5 60v5M55.5 223v1M55.5 205v3M55.5 175v29M55.5 167v3M55.5 55v3M56.5 223v1M56.5 170v37M56.5 56v2M57.5 223v1M57.5 179v29M57.5 171v5M57.5 50v2M58.5 223v1M58.5 171v37M58.5 57v3M59.5 223v1M59.5 192v16M59.5 170v20M59.5 54v3M60.5 223v1M60.5 176v32M60.5 171v2M60.5 55v3M61.5 223v1M61.5 186v21M61.5 51v2M62.5 190v17M62.5 51v2M63.5 223v1M63.5 188v19M63.5 55v3M64.5 223v1M64.5 191v16M64.5 59v4M65.5 222v1M65.5 200v6M65.5 198v1M65.5 55v5M66.5 222v1M66.5 197v3M66.5 195v1M66.5 193v1M66.5 98v1M66.5 60v4M67.5 222v1M67.5 99v1M67.5 54v4M68.5 222v1M68.5 58v3M69.5 223v1M69.5 58v2M70.5 222v1M70.5 57v5M71.5 221v2M71.5 59v4M72.5 222v1M72.5 56v3M73.5 223v1M73.5 57v2M74.5 222v1M74.5 56v2M75.5 222v1M75.5 58v3M76.5 221v2M76.5 63v2M77.5 221v2M77.5 59v3M78.5 221v2M78.5 64v3M79.5 222v1M79.5 62v2M80.5 222v1M80.5 65v2M81.5 221v1M81.5 65v4M82.5 221v1M82.5 67v3M83.5 221v1M83.5 211v6M83.5 65v3M84.5 208v14M84.5 70v5M85.5 220v2M85.5 217v2M85.5 215v1M85.5 211v1M85.5 68v3M86.5 221v2M86.5 65v2M87.5 222v1M87.5 71v2M88.5 221v2M88.5 71v4M89.5 221v2M89.5 71v4M90.5 222v1M90.5 72v3M91.5 222v1M91.5 83v2M92.5 222v1M92.5 82v3M93.5 223v1M93.5 86v2M94.5 97v3M95.5 222v1M95.5 102v4M96.5 222v1M96.5 112v3M97.5 222v1M97.5 114v5M98.5 222v1M98.5 151v3M99.5 222v1M99.5 149v3M100.5 223v1M100.5 151v3M101.5 222v1M101.5 150v2M102.5 223v1M102.5 68v10M103.5 223v1M103.5 68v5M104.5 223v1M104.5 64v2M105.5 63v1M106.5 62v1M107.5 223v1M107.5 63v2M108.5 223v1M108.5 63v4M109.5 223v1M109.5 64v3M110.5 222v1M110.5 58v5M111.5 222v1M111.5 60v10M112.5 222v1M112.5 66v6M113.5 221v2M113.5 64v7M113.5 49v2M113.5 41v2M114.5 222v1M114.5 58v9M114.5 50v1M114.5 39v1M115.5 223v1M115.5 37v1M116.5 223v1M116.5 38v1M117.5 223v1M117.5 38v1M118.5 38v1M119.5 39v2M120.5 40v2M121.5 41v1M122.5 41v1M123.5 41v1M124.5 223v1M124.5 42v1M125.5 222v1M126.5 222v1M126.5 59v5M126.5 43v1M127.5 223v1M127.5 60v5M127.5 44v1M128.5 223v1M128.5 63v4M128.5 58v2M128.5 45v1M129.5 223v1M129.5 60v5M129.5 44v2M130.5 223v1M130.5 66v16M130.5 60v2M130.5 45v1M131.5 223v1M131.5 63v3M131.5 47v2M132.5 223v1M132.5 65v19M132.5 61v3M132.5 49v1M133.5 223v1M133.5 63v21M133.5 49v2M134.5 223v1M134.5 74v13M134.5 64v3M134.5 50v1M135.5 223v1M135.5 79v7M135.5 65v1M135.5 52v1M136.5 223v1M136.5 66v17M136.5 53v1M137.5 75v6M137.5 67v4M137.5 53v1M138.5 223v1M138.5 80v6M138.5 68v5M138.5 54v2M139.5 223v1M139.5 75v10M139.5 55v1M140.5 223v1M140.5 79v3M140.5 55v2M141.5 56v2M142.5 223v1M142.5 57v1M143.5 223v1M143.5 59v4M144.5 223v1M144.5 63v2M145.5 222v1M145.5 87v12M145.5 67v2" stroke="rgb(3, 27, 10)" stroke-width="1.050" fill="none"/><path d="M0.5 221v1M0.5 168v1M1.5 222v1M1.5 169v1M2.5 222v1M3.5 167v1M4.5 166v1M5.5 165v1M6.5 223v1M6.5 168v1M7.5 167v1M8.5 165v2M9.5 162v3M9.5 151v4M9.5 134v16M9.5 132v1M10.5 223v1M10.5 159v4M10.5 131v25M10.5 101v1M10.5 65v35M11.5 223v1M11.5 128v7M11.5 114v6M11.5 94v19M11.5 84v4M11.5 67v7M12.5 223v1M12.5 130v13M12.5 91v27M12.5 78v9M12.5 65v5M13.5 223v1M13.5 129v13M13.5 122v6M13.5 102v19M13.5 65v32M14.5 130v11M14.5 113v13M14.5 92v15M14.5 87v3M14.5 77v2M14.5 74v2M14.5 69v4M15.5 133v7M15.5 127v4M15.5 115v11M15.5 66v43M16.5 223v1M16.5 134v6M16.5 101v24M16.5 90v8M16.5 65v21M17.5 223v1M17.5 111v29M17.5 68v42M18.5 223v1M18.5 119v15M18.5 81v10M18.5 66v3M19.5 121v1M19.5 77v19M19.5 70v3M20.5 223v1M20.5 123v5M20.5 116v1M20.5 79v21M20.5 76v1M20.5 74v1M20.5 69v1M20.5 65v2M21.5 120v8M21.5 92v18M21.5 80v1M21.5 72v7M22.5 95v31M23.5 222v1M23.5 128v1M24.5 222v1M24.5 127v1M25.5 222v1M25.5 128v1M26.5 126v1M27.5 223v1M27.5 130v1M28.5 174v2M28.5 166v2M28.5 132v5M29.5 172v3M29.5 166v3M30.5 167v6M31.5 166v6M32.5 222v1M32.5 66v3M33.5 222v1M33.5 66v3M34.5 221v1M34.5 114v2M34.5 104v1M34.5 80v3M35.5 221v1M35.5 150v9M35.5 121v4M35.5 79v8M35.5 72v6M36.5 221v1M36.5 150v9M36.5 131v1M36.5 114v6M36.5 74v13M36.5 66v4M37.5 82v2M37.5 65v4M38.5 62v3M39.5 222v1M39.5 65v3M40.5 221v1M40.5 153v1M40.5 63v4M41.5 222v1M41.5 61v4M42.5 222v1M42.5 59v2M43.5 222v1M43.5 59v4M44.5 221v1M44.5 201v9M44.5 146v8M44.5 67v9M44.5 61v3M45.5 222v1M45.5 58v2M46.5 58v2M47.5 222v1M47.5 60v3M48.5 222v1M48.5 54v2M49.5 222v1M49.5 60v2M50.5 59v3M51.5 207v2M51.5 181v24M51.5 169v7M51.5 56v3M52.5 221v1M52.5 210v2M52.5 165v2M52.5 92v9M52.5 73v10M52.5 62v6M53.5 220v1M53.5 211v2M53.5 164v1M53.5 142v6M53.5 106v35M53.5 103v1M53.5 100v1M53.5 66v17M54.5 221v1M54.5 211v2M54.5 164v2M54.5 131v9M54.5 119v1M54.5 116v2M54.5 94v20M54.5 65v28M55.5 222v1M55.5 208v2M55.5 166v1M55.5 84v8M55.5 58v2M56.5 207v1M56.5 168v2M56.5 58v2M57.5 208v2M57.5 176v3M57.5 169v2M57.5 52v2M58.5 208v1M58.5 169v2M58.5 60v3M59.5 222v1M59.5 208v1M59.5 169v1M59.5 57v3M60.5 222v1M60.5 208v1M60.5 173v3M60.5 170v1M60.5 58v4M61.5 207v1M61.5 170v16M61.5 53v3M62.5 223v1M62.5 207v2M62.5 171v19M62.5 53v2M63.5 207v1M63.5 171v17M63.5 58v3M64.5 222v1M64.5 207v1M64.5 177v14M64.5 97v2M64.5 63v4M65.5 221v1M65.5 206v4M65.5 199v1M65.5 183v15M65.5 179v1M65.5 171v7M65.5 95v10M65.5 60v5M66.5 221v1M66.5 200v8M66.5 196v1M66.5 194v1M66.5 186v7M66.5 170v9M66.5 123v12M66.5 99v7M66.5 91v7M66.5 77v9M66.5 64v8M67.5 221v1M67.5 195v14M67.5 135v1M67.5 125v9M67.5 100v7M67.5 93v6M67.5 82v2M67.5 78v1M67.5 58v7M68.5 221v1M68.5 61v2M69.5 222v1M69.5 60v3M70.5 221v1M70.5 200v3M70.5 130v2M70.5 128v1M70.5 93v9M70.5 62v3M71.5 220v1M71.5 63v2M72.5 221v1M72.5 59v2M73.5 222v1M73.5 59v2M74.5 221v1M74.5 58v2M75.5 221v1M75.5 61v2M76.5 220v1M76.5 65v2M77.5 215v6M77.5 198v9M77.5 62v2M78.5 219v2M78.5 67v6M79.5 64v2M80.5 221v1M80.5 67v3M81.5 211v10M81.5 69v3M82.5 205v16M82.5 70v5M83.5 217v4M83.5 206v5M83.5 68v4M84.5 202v6M84.5 176v5M84.5 140v3M84.5 90v15M84.5 75v4M85.5 219v1M85.5 216v1M85.5 212v3M85.5 206v5M85.5 71v3M86.5 216v5M86.5 67v3M87.5 221v1M87.5 73v2M88.5 209v12M88.5 75v3M89.5 210v11M89.5 184v1M89.5 182v1M89.5 95v1M89.5 75v4M90.5 221v1M90.5 75v4M91.5 221v1M91.5 85v4M92.5 221v1M92.5 85v4M93.5 222v1M93.5 88v3M94.5 222v1M94.5 100v3M95.5 221v1M95.5 106v3M96.5 221v1M96.5 115v4M97.5 221v1M97.5 119v4M98.5 221v1M98.5 154v2M99.5 221v1M99.5 152v2M100.5 222v1M100.5 154v2M101.5 221v1M101.5 152v2M102.5 222v1M102.5 78v7M103.5 222v1M103.5 73v13M104.5 222v1M104.5 66v2M105.5 223v1M105.5 64v2M106.5 223v1M106.5 63v2M107.5 222v1M107.5 65v3M108.5 222v1M108.5 67v2M109.5 222v1M109.5 67v3M110.5 63v9M111.5 221v1M111.5 70v5M112.5 221v1M112.5 184v10M112.5 120v15M112.5 92v6M112.5 86v1M112.5 72v12M113.5 220v1M113.5 189v7M113.5 139v3M113.5 135v2M113.5 123v6M113.5 71v4M113.5 43v6M114.5 67v4M114.5 49v1M114.5 40v1M115.5 222v1M115.5 51v11M115.5 38v1M116.5 39v1M117.5 39v1M118.5 223v1M119.5 223v1M119.5 41v1M120.5 223v1M120.5 42v1M121.5 223v1M121.5 42v1M122.5 223v1M122.5 42v2M123.5 223v1M123.5 42v1M124.5 43v1M125.5 221v1M125.5 57v5M125.5 43v1M126.5 221v1M126.5 193v4M126.5 121v5M126.5 64v4M126.5 58v1M126.5 44v1M127.5 222v1M127.5 76v3M127.5 65v4M127.5 58v2M128.5 222v1M128.5 77v1M128.5 67v9M128.5 57v1M129.5 65v11M129.5 58v2M130.5 222v1M130.5 82v10M130.5 59v1M130.5 46v1M131.5 222v1M131.5 66v20M131.5 61v2M131.5 49v1M132.5 84v4M132.5 60v1M132.5 50v1M133.5 97v1M133.5 84v4M133.5 62v1M133.5 51v1M134.5 87v15M134.5 63v1M134.5 51v1M135.5 86v15M135.5 64v1M135.5 53v1M136.5 83v3M136.5 65v1M136.5 54v1M137.5 223v1M137.5 81v5M137.5 65v2M137.5 54v2M138.5 86v4M138.5 56v1M139.5 222v1M139.5 85v3M139.5 71v4M139.5 56v1M140.5 82v5M140.5 77v2M141.5 223v1M141.5 58v1M142.5 82v3M142.5 58v2M143.5 86v6M143.5 63v2M144.5 222v1M144.5 87v11M144.5 65v2M145.5 112v5M145.5 109v2M145.5 99v9M145.5 69v1" stroke="rgb(5, 45, 18)" stroke-width="1.050" fill="none"/><path d="M0.5 216v5M0.5 169v1M1.5 221v1M1.5 170v1M2.5 168v1M3.5 222v1M3.5 168v1M4.5 222v1M4.5 167v1M5.5 222v1M5.5 166v2M7.5 222v1M7.5 168v1M8.5 222v1M8.5 167v1M9.5 222v1M9.5 165v1M10.5 163v2M11.5 135v24M11.5 113v1M11.5 88v6M11.5 74v10M12.5 143v16M12.5 87v4M12.5 70v8M13.5 142v12M14.5 223v1M14.5 141v6M14.5 107v6M14.5 90v2M14.5 79v8M14.5 76v1M14.5 73v1M15.5 223v1M15.5 140v7M15.5 109v6M16.5 140v6M17.5 140v3M17.5 110v1M18.5 134v4M18.5 101v18M18.5 99v1M18.5 91v6M18.5 69v12M19.5 223v1M19.5 122v13M19.5 96v25M19.5 73v4M20.5 128v4M20.5 117v6M20.5 100v16M20.5 77v2M20.5 75v1M20.5 70v4M20.5 67v2M21.5 222v1M21.5 128v3M21.5 110v10M22.5 222v1M22.5 126v3M23.5 129v1M24.5 221v1M24.5 128v1M25.5 221v1M25.5 129v1M26.5 222v1M26.5 127v1M28.5 171v3M28.5 168v2M29.5 169v3M32.5 159v3M32.5 69v13M33.5 221v1M33.5 106v1M33.5 101v4M33.5 77v5M33.5 75v1M33.5 69v4M34.5 209v4M34.5 152v9M34.5 124v3M34.5 116v7M34.5 105v9M34.5 98v6M34.5 83v6M35.5 219v2M35.5 209v9M35.5 159v2M35.5 144v6M35.5 125v4M35.5 87v34M36.5 207v14M36.5 159v2M36.5 132v18M36.5 120v11M36.5 104v10M36.5 87v16M36.5 70v4M37.5 221v1M37.5 207v8M37.5 146v14M37.5 127v7M37.5 121v4M37.5 84v7M37.5 75v7M37.5 69v5M38.5 222v1M38.5 78v7M38.5 65v3M39.5 204v1M39.5 151v3M39.5 81v8M39.5 79v1M39.5 68v4M40.5 220v1M40.5 207v5M40.5 154v3M40.5 146v7M40.5 77v8M40.5 67v4M41.5 221v1M41.5 203v5M41.5 147v8M41.5 65v2M42.5 149v6M42.5 61v3M43.5 221v1M43.5 147v7M43.5 63v5M44.5 220v1M44.5 210v8M44.5 197v4M44.5 154v2M44.5 143v3M44.5 124v4M44.5 121v2M44.5 114v2M44.5 111v1M44.5 76v10M44.5 64v3M45.5 221v1M45.5 204v9M45.5 201v2M45.5 199v1M45.5 148v6M45.5 76v9M45.5 74v1M45.5 70v2M45.5 60v5M46.5 222v1M46.5 60v3M47.5 221v1M47.5 63v2M48.5 56v3M49.5 221v1M49.5 62v3M50.5 222v1M50.5 198v8M50.5 182v2M50.5 178v2M50.5 62v2M51.5 221v1M51.5 209v2M51.5 166v3M51.5 85v10M51.5 83v1M51.5 59v3M52.5 220v1M52.5 212v1M52.5 164v1M52.5 101v49M52.5 68v5M53.5 213v7M53.5 162v2M53.5 148v3M53.5 141v1M54.5 213v8M54.5 163v1M54.5 140v10M54.5 120v11M54.5 118v1M54.5 114v2M55.5 210v2M55.5 164v2M55.5 129v5M55.5 126v1M55.5 106v2M55.5 103v2M55.5 101v1M55.5 92v6M55.5 60v24M56.5 222v1M56.5 208v2M56.5 167v1M56.5 86v5M56.5 60v3M57.5 222v1M57.5 210v1M57.5 168v1M57.5 54v3M58.5 222v1M58.5 209v1M58.5 168v1M58.5 87v6M58.5 69v1M58.5 63v5M59.5 209v2M59.5 168v1M59.5 92v9M59.5 85v6M59.5 82v1M59.5 60v5M60.5 209v2M60.5 168v2M60.5 84v21M60.5 78v5M60.5 62v6M61.5 222v1M61.5 208v2M61.5 100v1M61.5 95v4M61.5 92v2M61.5 56v5M62.5 222v1M62.5 209v1M62.5 170v1M62.5 55v3M63.5 222v1M63.5 208v1M63.5 170v1M63.5 94v4M63.5 61v3M64.5 208v2M64.5 170v7M64.5 99v5M64.5 92v5M64.5 67v4M65.5 210v2M65.5 180v3M65.5 178v1M65.5 169v2M65.5 123v11M65.5 105v3M65.5 65v30M66.5 214v7M66.5 208v4M66.5 179v7M66.5 165v5M66.5 135v11M66.5 106v17M66.5 86v5M66.5 72v5M67.5 209v12M67.5 180v15M67.5 136v9M67.5 134v1M67.5 119v6M67.5 107v7M67.5 84v9M67.5 79v3M67.5 65v13M68.5 133v1M68.5 96v12M68.5 63v3M69.5 221v1M69.5 126v6M69.5 98v7M69.5 63v1M70.5 203v18M70.5 194v6M70.5 132v12M70.5 129v1M70.5 122v6M70.5 102v4M70.5 76v17M70.5 65v3M71.5 215v5M71.5 213v1M71.5 191v16M71.5 175v1M71.5 168v6M71.5 163v3M71.5 161v1M71.5 118v24M71.5 93v15M71.5 77v9M71.5 65v3M72.5 218v3M72.5 61v2M73.5 221v1M73.5 61v2M74.5 197v9M74.5 60v2M75.5 219v2M75.5 196v13M75.5 165v2M75.5 161v3M75.5 94v3M75.5 63v3M76.5 194v26M76.5 163v2M76.5 161v1M76.5 134v7M76.5 90v11M76.5 83v2M76.5 78v4M76.5 76v1M76.5 67v7M77.5 207v8M77.5 195v3M77.5 137v3M77.5 97v5M77.5 64v6M78.5 211v8M78.5 199v11M78.5 73v2M79.5 221v1M79.5 66v3M80.5 208v13M80.5 204v1M80.5 140v2M80.5 137v1M80.5 70v6M81.5 199v12M81.5 88v13M81.5 83v1M81.5 72v8M82.5 202v3M82.5 140v2M82.5 88v11M82.5 75v4M83.5 203v3M83.5 174v8M83.5 137v7M83.5 88v16M83.5 83v3M83.5 80v1M83.5 72v7M84.5 181v21M84.5 162v14M84.5 143v2M84.5 133v7M84.5 122v1M84.5 105v2M84.5 83v7M84.5 79v3M85.5 204v2M85.5 170v19M85.5 167v2M85.5 74v30M86.5 210v6M86.5 174v2M86.5 70v4M87.5 210v11M87.5 75v3M88.5 206v3M88.5 173v20M88.5 139v1M88.5 96v8M88.5 78v4M89.5 205v5M89.5 185v10M89.5 183v1M89.5 172v10M89.5 167v4M89.5 96v9M89.5 88v7M89.5 79v3M90.5 207v14M90.5 184v1M90.5 95v1M90.5 79v5M91.5 211v10M91.5 191v3M91.5 189v1M91.5 126v1M91.5 89v11M92.5 213v8M92.5 89v3M93.5 221v1M93.5 91v7M94.5 221v1M94.5 143v2M94.5 103v4M95.5 217v4M95.5 136v6M95.5 109v3M96.5 220v1M96.5 214v1M96.5 119v3M97.5 208v13M97.5 192v11M97.5 123v21M98.5 218v3M98.5 156v1M99.5 154v3M100.5 221v1M100.5 156v2M101.5 220v1M101.5 154v3M102.5 124v12M102.5 85v4M103.5 221v1M103.5 125v3M103.5 122v2M103.5 86v5M104.5 68v3M105.5 222v1M105.5 66v1M106.5 222v1M106.5 65v2M107.5 68v3M108.5 69v3M109.5 70v6M110.5 221v1M110.5 72v2M111.5 190v3M111.5 131v5M111.5 121v9M111.5 75v3M112.5 194v5M112.5 135v49M112.5 116v4M112.5 104v2M112.5 98v5M112.5 87v5M112.5 84v2M113.5 212v8M113.5 209v2M113.5 196v4M113.5 178v11M113.5 156v13M113.5 142v12M113.5 137v2M113.5 129v6M113.5 116v7M113.5 105v3M113.5 103v1M113.5 98v3M113.5 83v14M113.5 75v6M114.5 221v1M114.5 193v2M114.5 71v5M114.5 48v1M114.5 41v1M115.5 221v1M115.5 62v6M115.5 50v1M115.5 39v1M116.5 222v1M116.5 51v6M116.5 40v1M117.5 222v1M117.5 40v1M118.5 222v1M118.5 39v2M121.5 43v1M123.5 43v1M124.5 222v1M124.5 56v7M124.5 44v1M125.5 220v1M125.5 192v10M125.5 122v11M125.5 62v9M125.5 56v1M125.5 44v1M126.5 197v7M126.5 185v8M126.5 183v1M126.5 126v10M126.5 117v4M126.5 76v10M126.5 72v2M126.5 68v3M126.5 57v1M126.5 45v1M127.5 221v1M127.5 184v13M127.5 117v13M127.5 79v6M127.5 69v7M127.5 57v1M127.5 45v1M128.5 221v1M128.5 78v8M128.5 76v1M128.5 56v1M128.5 46v1M129.5 222v1M129.5 76v6M129.5 57v1M129.5 46v1M130.5 179v6M130.5 111v18M130.5 92v4M130.5 47v1M131.5 120v9M131.5 115v3M131.5 111v2M131.5 101v1M131.5 97v3M131.5 86v5M131.5 59v2M131.5 50v1M132.5 222v1M132.5 88v5M132.5 59v1M132.5 51v1M133.5 222v1M133.5 112v1M133.5 98v8M133.5 88v9M133.5 61v1M133.5 52v1M134.5 222v1M134.5 102v13M134.5 62v1M134.5 52v1M135.5 222v1M135.5 101v6M135.5 63v1M135.5 54v1M136.5 222v1M136.5 86v4M136.5 64v1M137.5 222v1M137.5 86v4M137.5 64v1M137.5 56v1M138.5 222v1M138.5 103v7M138.5 97v5M138.5 95v1M138.5 90v4M138.5 66v2M138.5 57v1M139.5 221v1M139.5 103v1M139.5 97v2M139.5 95v1M139.5 88v5M139.5 70v1M139.5 57v2M140.5 222v1M140.5 87v3M140.5 73v4M140.5 57v1M141.5 77v10M141.5 59v1M142.5 222v1M142.5 85v4M142.5 81v1M142.5 60v1M143.5 222v1M143.5 108v2M143.5 92v6M143.5 84v2M143.5 65v1M144.5 221v1M144.5 141v4M144.5 103v13M144.5 98v4M144.5 85v2M144.5 67v2M145.5 221v1M145.5 117v5M145.5 111v1M145.5 108v1M145.5 85v2M145.5 70v2" stroke="rgb(7, 66, 26)" stroke-width="1.050" fill="none"/><path d="M0.5 211v5M0.5 170v2M1.5 171v1M2.5 221v1M2.5 169v1M3.5 221v1M3.5 169v1M4.5 221v1M4.5 168v1M5.5 221v1M5.5 168v1M6.5 222v1M6.5 169v1M8.5 221v1M8.5 168v1M9.5 221v1M9.5 166v1M10.5 222v1M10.5 165v1M11.5 159v2M12.5 222v1M12.5 159v4M13.5 222v1M13.5 154v4M14.5 147v6M15.5 147v5M16.5 222v1M16.5 146v3M17.5 222v1M17.5 143v3M18.5 138v2M18.5 100v1M18.5 97v2M19.5 135v2M20.5 132v3M21.5 221v1M21.5 131v4M22.5 129v2M23.5 221v1M23.5 130v1M25.5 210v2M25.5 208v1M25.5 205v1M25.5 130v1M26.5 128v1M27.5 131v1M28.5 170v1M32.5 221v1M32.5 207v7M32.5 162v1M32.5 153v6M32.5 146v4M32.5 142v3M32.5 107v14M32.5 99v7M32.5 82v4M33.5 219v2M33.5 216v2M33.5 208v7M33.5 194v5M33.5 140v23M33.5 107v14M33.5 105v1M33.5 95v6M33.5 82v4M33.5 76v1M33.5 73v2M34.5 213v8M34.5 204v5M34.5 189v10M34.5 161v2M34.5 137v15M34.5 127v4M34.5 123v1M34.5 89v9M35.5 218v1M35.5 206v3M35.5 198v1M35.5 191v6M35.5 185v3M35.5 161v2M35.5 129v15M36.5 204v3M36.5 179v16M36.5 161v2M36.5 103v1M37.5 215v6M37.5 204v3M37.5 160v1M37.5 142v4M37.5 134v5M37.5 125v2M37.5 101v20M37.5 91v9M37.5 74v1M38.5 221v1M38.5 208v1M38.5 147v10M38.5 85v11M38.5 73v5M38.5 68v2M39.5 221v1M39.5 205v7M39.5 202v2M39.5 154v3M39.5 147v4M39.5 89v2M39.5 80v1M39.5 72v7M40.5 212v8M40.5 202v5M40.5 157v2M40.5 143v3M40.5 125v10M40.5 122v1M40.5 85v15M40.5 71v6M41.5 208v7M41.5 200v3M41.5 155v2M41.5 145v2M41.5 130v8M41.5 76v11M41.5 67v1M42.5 221v1M42.5 204v2M42.5 202v1M42.5 155v1M42.5 147v2M42.5 64v2M43.5 205v11M43.5 154v2M43.5 145v2M43.5 79v6M43.5 77v1M43.5 68v4M44.5 218v2M44.5 195v2M44.5 169v6M44.5 156v2M44.5 128v15M44.5 123v1M44.5 116v5M44.5 112v2M44.5 104v7M44.5 100v1M44.5 86v11M45.5 213v8M45.5 203v1M45.5 200v1M45.5 196v3M45.5 154v1M45.5 144v4M45.5 128v1M45.5 116v1M45.5 90v1M45.5 85v4M45.5 75v1M45.5 72v2M45.5 65v5M46.5 221v1M46.5 206v1M46.5 203v1M46.5 146v8M46.5 79v2M46.5 77v1M46.5 75v1M46.5 63v2M47.5 201v9M47.5 199v1M47.5 148v6M47.5 82v7M47.5 65v4M48.5 221v1M48.5 200v3M48.5 198v1M48.5 77v10M48.5 59v4M49.5 194v13M49.5 79v15M49.5 76v1M49.5 65v8M50.5 221v1M50.5 206v3M50.5 193v5M50.5 184v8M50.5 180v2M50.5 168v10M50.5 75v23M50.5 64v3M51.5 220v1M51.5 211v1M51.5 164v2M51.5 142v7M51.5 120v6M51.5 95v7M51.5 84v1M51.5 77v6M51.5 62v5M52.5 213v7M52.5 162v2M52.5 150v1M53.5 161v1M53.5 151v1M54.5 161v2M54.5 150v1M55.5 221v1M55.5 212v1M55.5 163v1M55.5 141v8M55.5 134v5M55.5 127v2M55.5 118v8M55.5 108v9M55.5 105v1M55.5 102v1M55.5 98v3M56.5 221v1M56.5 210v2M56.5 166v1M56.5 133v2M56.5 91v4M56.5 72v14M56.5 69v1M56.5 63v5M57.5 211v1M57.5 167v1M57.5 128v3M57.5 81v22M57.5 70v1M57.5 57v3M58.5 221v1M58.5 210v1M58.5 167v1M58.5 105v1M58.5 93v8M58.5 70v17M58.5 68v1M59.5 221v1M59.5 211v1M59.5 167v1M59.5 123v8M59.5 101v4M59.5 91v1M59.5 83v2M59.5 65v17M60.5 221v1M60.5 211v2M60.5 167v1M60.5 126v6M60.5 105v3M60.5 83v1M60.5 68v10M61.5 221v1M61.5 210v1M61.5 169v1M61.5 101v3M61.5 99v1M61.5 94v1M61.5 85v7M61.5 74v4M61.5 72v1M61.5 61v3M62.5 210v1M62.5 169v1M62.5 89v14M62.5 85v1M62.5 58v4M63.5 209v1M63.5 168v2M63.5 98v3M63.5 87v7M63.5 81v4M63.5 64v3M64.5 221v1M64.5 210v1M64.5 168v2M64.5 128v4M64.5 104v3M64.5 88v4M64.5 71v16M65.5 212v9M65.5 167v2M65.5 143v3M65.5 134v5M65.5 115v8M65.5 108v6M66.5 212v2M66.5 160v5M66.5 146v1M67.5 167v13M67.5 162v4M67.5 145v2M67.5 114v5M68.5 219v2M68.5 216v2M68.5 208v3M68.5 206v1M68.5 193v12M68.5 134v11M68.5 124v9M68.5 108v5M68.5 74v22M68.5 66v2M69.5 220v1M69.5 218v1M69.5 198v3M69.5 132v4M69.5 123v3M69.5 105v5M69.5 92v6M69.5 87v1M69.5 82v1M69.5 64v2M70.5 158v36M70.5 144v2M70.5 113v9M70.5 106v6M70.5 68v8M71.5 214v1M71.5 207v6M71.5 176v15M71.5 174v1M71.5 166v2M71.5 162v1M71.5 158v3M71.5 142v2M71.5 108v10M71.5 86v7M71.5 68v9M72.5 210v8M72.5 189v20M72.5 185v1M72.5 159v17M72.5 127v16M72.5 125v1M72.5 94v14M72.5 76v11M72.5 63v3M73.5 220v1M73.5 200v1M73.5 197v1M73.5 63v2M74.5 215v6M74.5 206v5M74.5 192v5M74.5 158v17M74.5 136v7M74.5 79v2M74.5 62v2M75.5 209v10M75.5 193v3M75.5 167v14M75.5 164v1M75.5 158v3M75.5 130v14M75.5 97v7M75.5 80v14M75.5 66v2M76.5 192v2M76.5 176v1M76.5 165v9M76.5 162v1M76.5 159v2M76.5 141v2M76.5 130v4M76.5 101v5M76.5 85v5M76.5 82v1M76.5 77v1M76.5 74v2M77.5 189v6M77.5 174v1M77.5 160v10M77.5 140v4M77.5 127v10M77.5 102v2M77.5 70v27M78.5 210v1M78.5 196v3M78.5 135v9M78.5 90v13M78.5 75v13M79.5 201v20M79.5 137v5M79.5 90v7M79.5 79v1M79.5 69v7M80.5 205v3M80.5 197v7M80.5 142v3M80.5 138v2M80.5 132v5M80.5 93v11M80.5 86v5M80.5 76v3M81.5 195v4M81.5 133v12M81.5 101v3M81.5 84v4M81.5 80v3M82.5 196v6M82.5 192v1M82.5 175v4M82.5 173v1M82.5 142v3M82.5 131v9M82.5 99v5M82.5 79v9M83.5 195v8M83.5 191v3M83.5 188v2M83.5 182v5M83.5 171v3M83.5 169v1M83.5 144v2M83.5 133v4M83.5 104v3M83.5 86v2M83.5 81v2M83.5 79v1M84.5 160v2M84.5 145v2M84.5 123v10M84.5 114v8M84.5 107v5M84.5 82v1M85.5 189v15M85.5 169v1M85.5 163v4M85.5 128v16M85.5 122v1M85.5 115v6M85.5 104v4M86.5 205v5M86.5 176v8M86.5 167v7M86.5 93v9M86.5 89v1M86.5 74v2M87.5 206v4M87.5 193v1M87.5 174v18M87.5 93v8M87.5 78v2M88.5 202v4M88.5 193v3M88.5 166v7M88.5 140v3M88.5 135v4M88.5 120v2M88.5 104v6M88.5 87v9M88.5 82v4M89.5 195v10M89.5 171v1M89.5 164v3M89.5 124v19M89.5 122v1M89.5 105v4M89.5 82v6M90.5 203v4M90.5 185v11M90.5 176v8M90.5 174v1M90.5 170v2M90.5 137v7M90.5 96v8M90.5 84v11M91.5 194v17M91.5 190v1M91.5 170v19M91.5 127v17M91.5 120v6M91.5 100v4M92.5 209v4M92.5 192v1M92.5 189v2M92.5 178v1M92.5 129v17M92.5 92v14M93.5 220v1M93.5 138v2M93.5 134v3M93.5 98v5M94.5 215v6M94.5 209v1M94.5 189v1M94.5 145v5M94.5 135v8M94.5 131v3M94.5 107v3M95.5 210v7M95.5 142v7M95.5 132v4M95.5 112v11M96.5 215v5M96.5 209v5M96.5 122v26M97.5 203v5M97.5 182v10M97.5 144v10M98.5 207v11M98.5 201v3M98.5 157v1M99.5 217v4M99.5 157v2M100.5 158v1M101.5 213v7M101.5 196v1M101.5 157v4M102.5 221v1M102.5 136v3M102.5 111v13M102.5 89v5M103.5 141v2M103.5 128v12M103.5 124v1M103.5 112v10M103.5 102v1M103.5 100v1M103.5 91v7M104.5 221v1M104.5 84v1M104.5 82v1M104.5 71v10M105.5 67v2M106.5 221v1M106.5 67v1M107.5 221v1M107.5 71v6M108.5 221v1M108.5 127v7M108.5 89v2M108.5 72v3M109.5 221v1M109.5 127v2M109.5 76v7M110.5 219v2M110.5 124v7M110.5 94v1M110.5 74v3M111.5 219v2M111.5 193v4M111.5 186v4M111.5 175v1M111.5 136v5M111.5 130v1M111.5 117v4M111.5 85v9M111.5 78v6M112.5 216v5M112.5 213v1M112.5 199v3M112.5 106v10M112.5 103v1M113.5 211v1M113.5 200v9M113.5 169v9M113.5 154v2M113.5 108v8M113.5 104v1M113.5 101v2M113.5 97v1M113.5 81v2M114.5 217v4M114.5 195v6M114.5 187v6M114.5 161v7M114.5 125v6M114.5 122v2M114.5 76v5M114.5 42v6M115.5 193v2M115.5 68v2M115.5 40v1M116.5 221v1M116.5 57v6M116.5 48v3M117.5 221v1M117.5 51v5M118.5 52v7M119.5 222v1M119.5 42v1M120.5 222v1M120.5 43v1M121.5 222v1M122.5 222v1M122.5 44v1M123.5 222v1M124.5 221v1M124.5 63v7M124.5 55v1M124.5 45v1M125.5 215v5M125.5 211v2M125.5 202v8M125.5 178v14M125.5 161v8M125.5 133v2M125.5 115v7M125.5 82v2M125.5 71v10M125.5 55v1M125.5 45v1M126.5 204v17M126.5 184v1M126.5 158v25M126.5 136v5M126.5 111v6M126.5 86v5M126.5 74v2M126.5 71v1M126.5 56v1M126.5 46v1M127.5 220v1M127.5 217v2M127.5 197v18M127.5 177v7M127.5 156v11M127.5 130v7M127.5 115v2M127.5 85v7M127.5 56v1M127.5 46v2M128.5 203v9M128.5 197v2M128.5 189v4M128.5 116v14M128.5 86v4M128.5 55v1M128.5 47v1M129.5 221v1M129.5 124v7M129.5 82v8M129.5 56v1M129.5 47v1M130.5 221v1M130.5 185v3M130.5 174v5M130.5 155v10M130.5 129v3M130.5 96v15M130.5 57v2M130.5 48v1M131.5 221v1M131.5 129v2M131.5 118v2M131.5 113v2M131.5 102v9M131.5 100v1M131.5 91v6M131.5 58v1M131.5 51v1M132.5 106v11M132.5 93v12M132.5 58v1M132.5 52v1M133.5 221v1M133.5 113v5M133.5 106v6M133.5 60v1M134.5 221v1M134.5 115v2M134.5 60v2M134.5 53v1M135.5 221v1M135.5 107v7M135.5 55v1M136.5 90v19M136.5 63v1M136.5 55v1M137.5 90v9M138.5 221v1M138.5 110v5M138.5 102v1M138.5 96v1M138.5 94v1M138.5 64v2M138.5 58v2M139.5 188v4M139.5 153v2M139.5 104v10M139.5 99v4M139.5 96v1M139.5 93v2M139.5 68v2M139.5 59v2M140.5 90v6M140.5 72v1M140.5 58v1M141.5 222v1M141.5 87v3M141.5 76v1M141.5 60v1M142.5 89v5M142.5 79v2M142.5 61v3M143.5 221v1M143.5 110v7M143.5 98v10M143.5 78v6M143.5 66v2M144.5 220v1M144.5 185v11M144.5 150v1M144.5 145v4M144.5 135v6M144.5 116v6M144.5 102v1M144.5 83v2M144.5 69v1M145.5 217v4M145.5 194v11M145.5 180v13M145.5 175v1M145.5 162v7M145.5 154v2M145.5 130v23M145.5 127v2M145.5 122v4M145.5 76v1M145.5 72v2" stroke="rgb(10, 87, 34)" stroke-width="1.050" fill="none"/><path d="M0.5 209v2M0.5 173v1M1.5 218v3M1.5 172v1M2.5 220v1M2.5 170v1M3.5 170v1M4.5 169v2M5.5 169v1M6.5 170v1M7.5 221v1M7.5 169v1M8.5 211v1M8.5 200v9M8.5 194v2M9.5 204v10M9.5 167v1M10.5 221v1M10.5 166v2M11.5 222v1M11.5 161v2M12.5 163v1M13.5 158v2M14.5 222v1M14.5 153v5M15.5 222v1M15.5 152v2M16.5 149v2M17.5 146v2M18.5 222v1M18.5 140v3M19.5 222v1M19.5 137v3M20.5 222v1M20.5 135v1M21.5 135v1M22.5 221v1M22.5 131v2M23.5 201v7M23.5 131v1M24.5 218v3M24.5 205v4M24.5 129v1M25.5 212v9M25.5 209v1M25.5 206v2M25.5 200v5M25.5 131v1M26.5 221v1M26.5 129v1M27.5 222v1M27.5 132v1M32.5 214v7M32.5 205v2M32.5 185v17M32.5 163v1M32.5 150v3M32.5 145v1M32.5 139v3M32.5 121v5M32.5 106v1M32.5 94v5M32.5 86v3M33.5 218v1M33.5 215v1M33.5 205v3M33.5 199v2M33.5 190v4M33.5 163v1M33.5 130v10M33.5 121v8M33.5 86v9M34.5 203v1M34.5 199v2M34.5 176v13M34.5 163v1M34.5 131v6M35.5 204v2M35.5 199v1M35.5 197v1M35.5 188v3M35.5 178v7M35.5 163v1M36.5 202v2M36.5 195v2M36.5 175v4M36.5 163v1M37.5 203v1M37.5 177v4M37.5 175v1M37.5 161v2M37.5 139v3M37.5 100v1M38.5 209v3M38.5 204v4M38.5 157v2M38.5 142v5M38.5 125v13M38.5 121v1M38.5 114v2M38.5 96v6M38.5 70v3M39.5 212v5M39.5 201v1M39.5 157v2M39.5 145v2M39.5 131v1M39.5 126v1M39.5 109v2M39.5 91v4M40.5 201v1M40.5 171v8M40.5 159v1M40.5 135v8M40.5 123v2M40.5 118v4M40.5 100v8M41.5 215v6M41.5 199v1M41.5 174v3M41.5 157v1M41.5 138v7M41.5 127v3M41.5 113v7M41.5 87v13M41.5 68v8M42.5 206v7M42.5 203v1M42.5 200v2M42.5 156v2M42.5 145v2M42.5 125v8M42.5 88v1M42.5 75v11M42.5 66v3M43.5 216v5M43.5 198v7M43.5 171v5M43.5 156v1M43.5 142v3M43.5 126v9M43.5 115v1M43.5 110v1M43.5 85v3M43.5 78v1M43.5 72v5M44.5 194v1M44.5 175v2M44.5 167v2M44.5 101v3M44.5 97v3M45.5 193v3M45.5 170v1M45.5 155v2M45.5 129v15M45.5 117v11M45.5 104v12M45.5 91v6M45.5 89v1M46.5 207v7M46.5 204v2M46.5 197v6M46.5 154v1M46.5 142v4M46.5 88v2M46.5 81v5M46.5 78v1M46.5 76v1M46.5 71v4M46.5 69v1M46.5 65v3M47.5 219v2M47.5 210v4M47.5 200v1M47.5 195v4M47.5 154v1M47.5 146v2M47.5 89v5M47.5 69v13M48.5 203v8M48.5 199v1M48.5 195v3M48.5 179v3M48.5 147v5M48.5 116v2M48.5 87v13M48.5 63v14M49.5 220v1M49.5 207v4M49.5 175v19M49.5 149v1M49.5 128v2M49.5 125v2M49.5 94v2M49.5 77v2M49.5 73v3M50.5 209v2M50.5 192v1M50.5 164v4M50.5 149v1M50.5 147v1M50.5 114v3M50.5 98v12M50.5 73v2M50.5 67v3M51.5 216v4M51.5 212v2M51.5 162v2M51.5 149v2M51.5 137v5M51.5 126v10M51.5 102v18M51.5 67v10M52.5 161v1M52.5 151v1M53.5 152v1M54.5 151v1M55.5 213v8M55.5 161v2M55.5 149v2M55.5 139v2M55.5 117v1M56.5 165v1M56.5 145v4M56.5 135v7M56.5 125v8M56.5 95v19M56.5 70v2M56.5 68v1M57.5 221v1M57.5 212v1M57.5 165v2M57.5 144v4M57.5 142v1M57.5 131v2M57.5 125v3M57.5 103v9M57.5 71v10M57.5 60v10M58.5 211v2M58.5 166v1M58.5 142v6M58.5 123v14M58.5 106v7M58.5 101v4M59.5 212v2M59.5 166v1M59.5 131v7M59.5 113v10M59.5 105v4M60.5 213v2M60.5 166v1M60.5 143v1M60.5 141v1M60.5 132v8M60.5 122v4M60.5 108v5M61.5 211v1M61.5 167v2M61.5 125v4M61.5 104v5M61.5 78v7M61.5 73v1M61.5 64v8M62.5 221v1M62.5 211v1M62.5 168v1M62.5 126v7M62.5 103v3M62.5 86v3M62.5 73v12M62.5 62v3M63.5 221v1M63.5 210v1M63.5 167v1M63.5 126v6M63.5 101v3M63.5 85v2M63.5 67v14M64.5 219v2M64.5 211v3M64.5 166v2M64.5 132v2M64.5 118v10M64.5 107v2M64.5 87v1M65.5 158v9M65.5 146v2M65.5 139v4M65.5 114v1M66.5 157v3M66.5 147v1M67.5 166v1M67.5 159v3M67.5 147v1M68.5 218v1M68.5 211v5M68.5 207v1M68.5 205v1M68.5 186v7M68.5 171v10M68.5 169v1M68.5 166v2M68.5 159v4M68.5 145v2M68.5 113v11M68.5 72v2M68.5 68v3M69.5 219v1M69.5 201v17M69.5 192v6M69.5 186v2M69.5 163v8M69.5 136v10M69.5 120v3M69.5 118v1M69.5 110v3M69.5 88v4M69.5 83v4M69.5 75v7M69.5 66v2M70.5 157v1M70.5 146v2M70.5 112v1M71.5 157v1M71.5 144v1M72.5 209v1M72.5 186v3M72.5 176v9M72.5 157v2M72.5 143v2M72.5 126v1M72.5 108v17M72.5 87v7M72.5 66v10M73.5 215v5M73.5 211v3M73.5 201v8M73.5 198v2M73.5 192v5M73.5 179v2M73.5 164v2M73.5 158v5M73.5 134v9M73.5 97v8M73.5 77v8M73.5 65v3M74.5 211v4M74.5 175v17M74.5 157v1M74.5 143v2M74.5 133v3M74.5 126v4M74.5 121v4M74.5 93v14M74.5 81v5M74.5 75v4M74.5 64v2M75.5 189v4M75.5 181v5M75.5 157v1M75.5 144v1M75.5 125v5M75.5 111v1M75.5 104v6M75.5 77v3M75.5 68v2M76.5 177v15M76.5 174v2M76.5 157v2M76.5 143v2M76.5 117v13M76.5 106v4M77.5 175v14M77.5 170v4M77.5 158v2M77.5 144v2M77.5 122v5M77.5 104v2M78.5 193v3M78.5 177v4M78.5 158v8M78.5 144v1M78.5 132v3M78.5 103v2M78.5 88v2M79.5 197v4M79.5 142v4M79.5 132v5M79.5 97v3M79.5 80v10M79.5 76v3M80.5 193v4M80.5 145v1M80.5 129v3M80.5 104v2M80.5 91v2M80.5 79v7M81.5 172v23M81.5 159v9M81.5 145v2M81.5 126v7M81.5 114v1M81.5 111v1M81.5 109v1M81.5 104v4M82.5 193v3M82.5 189v3M82.5 179v3M82.5 174v1M82.5 168v5M82.5 160v7M82.5 145v2M82.5 125v6M82.5 104v2M83.5 194v1M83.5 190v1M83.5 187v1M83.5 170v1M83.5 161v8M83.5 146v1M83.5 129v4M83.5 113v9M83.5 107v2M84.5 158v2M84.5 147v1M84.5 112v2M85.5 161v2M85.5 144v1M85.5 123v5M85.5 121v1M85.5 108v7M86.5 201v4M86.5 184v11M86.5 164v3M86.5 133v11M86.5 118v3M86.5 102v4M86.5 90v3M86.5 84v5M86.5 81v1M86.5 76v4M87.5 204v2M87.5 198v1M87.5 194v2M87.5 192v1M87.5 163v11M87.5 137v5M87.5 101v2M87.5 87v6M87.5 80v5M88.5 196v6M88.5 163v3M88.5 143v1M88.5 131v4M88.5 122v7M88.5 117v3M88.5 113v1M88.5 110v2M88.5 86v1M89.5 163v1M89.5 143v1M89.5 123v1M89.5 114v8M89.5 109v3M90.5 196v7M90.5 175v1M90.5 172v2M90.5 166v4M90.5 144v1M90.5 124v13M90.5 116v4M90.5 104v4M91.5 167v3M91.5 144v2M91.5 117v3M91.5 115v1M91.5 104v9M92.5 203v6M92.5 200v1M92.5 193v6M92.5 191v1M92.5 179v10M92.5 174v4M92.5 146v2M92.5 124v5M92.5 117v2M92.5 106v10M93.5 209v11M93.5 184v10M93.5 140v10M93.5 137v1M93.5 131v3M93.5 127v2M93.5 103v2M94.5 210v5M94.5 205v4M94.5 190v7M94.5 185v4M94.5 150v1M94.5 134v1M94.5 123v8M94.5 118v1M94.5 110v4M95.5 204v6M95.5 197v2M95.5 190v6M95.5 187v1M95.5 149v4M95.5 123v9M96.5 194v15M96.5 192v1M96.5 148v5M97.5 176v6M97.5 154v2M98.5 204v3M98.5 190v11M98.5 181v7M98.5 158v1M99.5 199v18M99.5 159v1M100.5 206v15M100.5 159v2M101.5 197v16M101.5 194v2M101.5 161v2M102.5 220v1M102.5 139v4M102.5 94v17M103.5 219v2M103.5 143v9M103.5 140v1M103.5 103v9M103.5 101v1M103.5 98v2M104.5 219v2M104.5 125v1M104.5 85v5M104.5 83v1M104.5 81v1M105.5 221v1M105.5 69v2M106.5 68v2M107.5 219v2M107.5 125v10M107.5 84v3M107.5 77v6M108.5 219v2M108.5 134v1M108.5 124v3M108.5 91v5M108.5 82v7M108.5 79v2M108.5 75v3M109.5 129v5M109.5 122v5M109.5 83v7M110.5 216v3M110.5 187v5M110.5 162v16M110.5 139v2M110.5 131v7M110.5 121v3M110.5 95v5M110.5 90v4M110.5 77v7M111.5 217v2M111.5 197v5M111.5 176v10M111.5 162v13M111.5 160v1M111.5 156v3M111.5 141v5M111.5 115v2M111.5 101v3M111.5 99v1M111.5 94v3M111.5 84v1M112.5 214v2M112.5 202v11M114.5 201v16M114.5 183v4M114.5 177v1M114.5 168v7M114.5 156v5M114.5 131v18M114.5 124v1M114.5 116v6M114.5 81v11M115.5 209v12M115.5 195v4M115.5 191v2M115.5 70v4M115.5 49v1M115.5 41v1M116.5 194v2M116.5 63v6M116.5 47v1M116.5 41v1M117.5 56v8M117.5 50v1M117.5 41v1M118.5 221v1M118.5 66v1M118.5 59v6M118.5 51v1M118.5 41v1M119.5 221v1M119.5 52v4M120.5 44v1M121.5 44v1M122.5 52v10M123.5 44v1M124.5 189v14M124.5 131v1M124.5 119v11M124.5 70v14M124.5 53v2M124.5 46v1M125.5 213v2M125.5 210v1M125.5 169v9M125.5 155v6M125.5 147v3M125.5 135v3M125.5 112v3M125.5 84v7M125.5 81v1M126.5 151v7M126.5 147v1M126.5 141v5M126.5 109v2M126.5 91v10M126.5 54v2M126.5 47v1M127.5 219v1M127.5 215v2M127.5 167v10M127.5 153v3M127.5 137v7M127.5 113v2M127.5 103v1M127.5 101v1M127.5 99v1M127.5 92v6M127.5 54v2M127.5 48v2M128.5 212v9M128.5 199v4M128.5 193v4M128.5 175v14M128.5 159v5M128.5 130v4M128.5 112v4M128.5 90v3M128.5 48v1M129.5 212v1M129.5 204v6M129.5 202v1M129.5 173v28M129.5 171v1M129.5 156v8M129.5 131v2M129.5 112v12M129.5 90v2M129.5 48v2M130.5 219v2M130.5 203v15M130.5 188v14M130.5 165v9M130.5 152v3M130.5 132v6M130.5 56v1M130.5 49v1M131.5 219v2M131.5 171v20M131.5 160v4M131.5 131v4M131.5 56v2M131.5 52v1M132.5 221v1M132.5 117v13M132.5 105v1M132.5 57v1M132.5 53v1M133.5 191v1M133.5 180v10M133.5 153v10M133.5 127v2M133.5 118v4M133.5 59v1M133.5 56v1M133.5 53v1M134.5 156v7M134.5 153v2M134.5 117v3M134.5 54v1M135.5 220v1M135.5 114v4M135.5 61v2M136.5 221v1M136.5 109v6M136.5 62v1M136.5 56v1M137.5 221v1M137.5 99v10M137.5 63v1M137.5 57v1M138.5 186v7M138.5 119v1M138.5 115v3M138.5 62v2M139.5 220v1M139.5 192v3M139.5 183v5M139.5 155v4M139.5 139v14M139.5 130v6M139.5 128v1M139.5 114v4M139.5 67v1M140.5 221v1M140.5 96v6M140.5 71v1M140.5 59v1M141.5 112v1M141.5 90v4M141.5 74v2M141.5 61v1M142.5 221v1M142.5 106v3M142.5 94v6M142.5 77v2M142.5 64v1M143.5 192v2M143.5 137v15M143.5 117v1M143.5 76v2M143.5 68v6M144.5 216v4M144.5 214v1M144.5 212v1M144.5 196v6M144.5 151v34M144.5 149v1M144.5 122v13M144.5 81v2M144.5 70v5M145.5 205v12M145.5 193v1M145.5 176v4M145.5 169v6M145.5 156v6M145.5 153v1M145.5 129v1M145.5 126v1M145.5 82v3M145.5 77v1M145.5 74v2" stroke="rgb(12, 111, 43)" stroke-width="1.050" fill="none"/><path d="M0.5 191v18M0.5 174v1M0.5 172v1M1.5 216v2M1.5 173v1M2.5 217v3M2.5 171v1M3.5 219v2M3.5 171v1M4.5 218v3M5.5 220v1M5.5 170v1M6.5 221v1M7.5 220v1M7.5 170v1M8.5 212v9M8.5 209v2M8.5 196v4M8.5 190v4M8.5 169v1M9.5 214v7M9.5 196v8M9.5 191v1M9.5 168v1M10.5 202v14M10.5 200v1M10.5 168v1M11.5 163v2M12.5 164v2M13.5 160v1M14.5 158v2M15.5 154v2M16.5 212v1M16.5 151v1M17.5 221v1M17.5 150v1M17.5 148v1M18.5 143v1M19.5 140v1M20.5 136v3M21.5 220v1M21.5 208v1M21.5 196v11M21.5 136v2M22.5 220v1M22.5 217v1M22.5 214v1M22.5 212v1M22.5 206v2M22.5 204v1M22.5 200v3M22.5 133v2M23.5 218v3M23.5 208v5M23.5 199v2M23.5 132v3M24.5 209v9M24.5 199v6M24.5 130v1M25.5 195v5M25.5 159v1M25.5 148v1M26.5 204v9M26.5 130v2M27.5 133v2M32.5 202v3M32.5 175v10M32.5 164v2M32.5 135v4M32.5 126v7M32.5 89v5M33.5 201v4M33.5 185v5M33.5 164v1M33.5 129v1M34.5 201v2M34.5 174v2M34.5 164v2M35.5 200v4M35.5 174v4M35.5 164v1M36.5 197v5M36.5 173v2M36.5 164v1M37.5 199v4M37.5 197v1M37.5 181v13M37.5 176v1M37.5 172v3M38.5 220v1M38.5 212v4M38.5 202v2M38.5 179v1M38.5 176v2M38.5 159v2M38.5 138v4M38.5 122v3M38.5 116v5M38.5 108v6M38.5 102v4M39.5 217v4M39.5 199v2M39.5 171v7M39.5 159v1M39.5 132v13M39.5 127v4M39.5 111v15M39.5 105v4M39.5 103v1M39.5 95v6M40.5 198v3M40.5 179v2M40.5 170v1M40.5 108v10M41.5 198v1M41.5 177v4M41.5 170v4M41.5 158v1M41.5 120v7M41.5 100v13M42.5 213v8M42.5 197v3M42.5 170v7M42.5 158v1M42.5 143v2M42.5 133v2M42.5 122v3M42.5 119v1M42.5 89v5M42.5 86v2M42.5 69v6M43.5 195v3M43.5 176v2M43.5 168v3M43.5 157v1M43.5 135v7M43.5 116v10M43.5 111v4M43.5 107v3M43.5 94v12M43.5 88v5M44.5 193v1M44.5 183v1M44.5 177v5M44.5 158v1M45.5 191v2M45.5 179v1M45.5 177v1M45.5 171v5M45.5 166v4M45.5 157v1M45.5 97v7M46.5 214v7M46.5 193v4M46.5 181v2M46.5 175v1M46.5 167v5M46.5 155v1M46.5 140v2M46.5 134v5M46.5 109v24M46.5 106v1M46.5 90v7M46.5 86v2M46.5 70v1M46.5 68v1M47.5 214v5M47.5 194v1M47.5 181v1M47.5 170v1M47.5 165v3M47.5 144v2M47.5 127v2M47.5 121v5M47.5 118v1M47.5 94v7M48.5 220v1M48.5 211v4M48.5 190v5M48.5 182v4M48.5 165v14M48.5 152v3M48.5 128v19M48.5 118v7M48.5 109v7M48.5 100v7M49.5 218v2M49.5 211v2M49.5 173v2M49.5 170v1M49.5 164v5M49.5 150v3M49.5 141v8M49.5 138v1M49.5 136v1M49.5 130v5M49.5 127v1M49.5 121v4M49.5 96v16M50.5 219v2M50.5 215v1M50.5 211v2M50.5 163v1M50.5 150v2M50.5 148v1M50.5 139v8M50.5 135v1M50.5 126v6M50.5 117v8M50.5 110v4M50.5 70v3M51.5 214v2M51.5 160v2M51.5 151v3M51.5 136v1M52.5 159v2M52.5 152v2M53.5 156v5M53.5 153v1M54.5 160v1M54.5 152v2M55.5 160v1M55.5 151v2M56.5 219v2M56.5 217v1M56.5 212v2M56.5 163v2M56.5 149v1M56.5 142v3M56.5 118v7M56.5 114v2M57.5 213v2M57.5 164v1M57.5 148v2M57.5 143v1M57.5 133v9M57.5 122v3M57.5 112v4M58.5 220v1M58.5 213v1M58.5 165v1M58.5 148v2M58.5 137v5M58.5 113v10M59.5 214v7M59.5 165v1M59.5 138v11M59.5 109v4M60.5 215v6M60.5 165v1M60.5 144v4M60.5 142v1M60.5 140v1M60.5 113v9M61.5 220v1M61.5 212v2M61.5 166v1M61.5 129v12M61.5 121v4M61.5 109v4M62.5 212v1M62.5 167v1M62.5 133v4M62.5 124v2M62.5 106v4M62.5 65v8M63.5 211v1M63.5 166v1M63.5 132v3M63.5 122v4M63.5 120v1M63.5 104v2M64.5 214v5M64.5 163v3M64.5 134v3M64.5 109v9M65.5 157v1M65.5 148v1M66.5 156v1M66.5 148v2M67.5 157v2M67.5 148v1M68.5 181v5M68.5 170v1M68.5 168v1M68.5 163v3M68.5 157v2M68.5 147v1M68.5 71v1M69.5 188v4M69.5 171v15M69.5 159v4M69.5 146v1M69.5 119v1M69.5 113v5M69.5 68v7M70.5 155v2M70.5 148v1M71.5 155v2M71.5 145v1M72.5 156v1M72.5 145v1M73.5 214v1M73.5 209v2M73.5 181v11M73.5 166v13M73.5 163v1M73.5 156v2M73.5 143v2M73.5 125v9M73.5 118v4M73.5 105v12M73.5 85v12M73.5 68v9M74.5 155v2M74.5 145v1M74.5 130v3M74.5 125v1M74.5 116v5M74.5 107v3M74.5 86v7M74.5 66v9M75.5 186v3M75.5 156v1M75.5 112v13M75.5 110v1M75.5 70v7M76.5 156v1M76.5 145v1M76.5 110v7M77.5 157v1M77.5 146v1M77.5 114v8M77.5 106v7M78.5 181v12M78.5 171v6M78.5 166v4M78.5 157v1M78.5 145v2M78.5 122v10M78.5 105v5M79.5 194v3M79.5 190v3M79.5 180v1M79.5 177v2M79.5 174v1M79.5 158v7M79.5 146v1M79.5 129v3M79.5 126v2M79.5 100v6M80.5 189v4M80.5 187v1M80.5 179v1M80.5 176v2M80.5 171v4M80.5 169v1M80.5 165v3M80.5 159v5M80.5 146v1M80.5 125v4M80.5 117v3M80.5 106v9M81.5 168v4M81.5 157v2M81.5 147v1M81.5 115v11M81.5 112v2M81.5 110v1M81.5 108v1M82.5 182v7M82.5 167v1M82.5 158v2M82.5 147v1M82.5 118v7M82.5 106v3M83.5 158v3M83.5 147v1M83.5 122v7M83.5 109v4M84.5 157v1M84.5 148v1M85.5 160v1M85.5 145v1M86.5 195v6M86.5 161v3M86.5 144v1M86.5 130v3M86.5 121v8M86.5 106v12M86.5 82v2M86.5 80v1M87.5 199v5M87.5 196v2M87.5 162v1M87.5 142v2M87.5 134v3M87.5 103v3M87.5 85v2M88.5 162v1M88.5 144v1M88.5 129v2M88.5 114v3M88.5 112v1M89.5 162v1M89.5 144v1M89.5 112v2M90.5 165v1M90.5 145v1M90.5 120v4M90.5 108v8M91.5 166v1M91.5 146v1M91.5 116v1M91.5 113v2M92.5 201v2M92.5 199v1M92.5 171v3M92.5 148v2M92.5 119v5M92.5 116v1M93.5 194v15M93.5 178v6M93.5 150v1M93.5 129v2M93.5 119v8M93.5 112v4M93.5 105v6M94.5 197v8M94.5 174v11M94.5 151v2M94.5 119v4M94.5 114v4M95.5 199v5M95.5 196v1M95.5 188v2M95.5 178v9M95.5 176v1M95.5 153v2M96.5 193v1M96.5 184v8M96.5 178v5M96.5 153v3M97.5 156v1M98.5 188v2M98.5 179v2M98.5 159v1M99.5 184v15M99.5 160v1M100.5 198v8M100.5 161v1M101.5 191v3M101.5 163v1M102.5 196v24M102.5 143v18M103.5 192v27M103.5 152v11M104.5 215v4M104.5 212v2M104.5 192v11M104.5 126v15M104.5 119v6M104.5 90v8M105.5 220v1M105.5 71v5M106.5 220v1M106.5 70v8M107.5 215v4M107.5 199v1M107.5 191v7M107.5 135v5M107.5 121v4M107.5 116v3M107.5 87v8M107.5 83v1M108.5 217v2M108.5 193v7M108.5 135v5M108.5 120v4M108.5 96v4M108.5 81v1M108.5 78v1M109.5 219v2M109.5 217v1M109.5 195v1M109.5 134v4M109.5 119v3M109.5 90v9M110.5 210v6M110.5 192v10M110.5 178v9M110.5 157v5M110.5 141v5M110.5 138v1M110.5 116v5M110.5 100v3M110.5 84v6M111.5 213v4M111.5 202v8M111.5 161v1M111.5 159v1M111.5 146v10M111.5 111v4M111.5 104v5M111.5 100v1M111.5 97v2M114.5 178v5M114.5 175v2M114.5 149v7M114.5 111v5M114.5 101v2M114.5 92v8M115.5 204v5M115.5 199v3M115.5 187v4M115.5 156v15M115.5 142v1M115.5 140v1M115.5 125v1M115.5 74v2M115.5 48v1M115.5 42v2M116.5 206v15M116.5 196v5M116.5 189v5M116.5 69v4M116.5 45v2M116.5 42v1M117.5 217v4M117.5 191v7M117.5 64v4M117.5 49v1M117.5 42v1M118.5 199v1M118.5 197v1M118.5 195v1M118.5 67v7M118.5 65v1M118.5 49v2M118.5 42v2M119.5 56v6M119.5 49v3M119.5 43v2M120.5 221v1M120.5 51v9M120.5 45v1M121.5 221v1M121.5 45v1M122.5 221v1M122.5 62v8M122.5 51v1M122.5 45v1M123.5 221v1M123.5 54v8M124.5 218v3M124.5 203v4M124.5 185v4M124.5 132v6M124.5 130v1M124.5 115v4M124.5 84v5M124.5 52v1M124.5 47v1M125.5 150v5M125.5 138v9M125.5 104v8M125.5 91v12M125.5 54v1M125.5 46v1M126.5 148v3M126.5 146v1M126.5 101v8M126.5 53v1M127.5 144v9M127.5 104v9M127.5 102v1M127.5 100v1M127.5 98v1M127.5 50v4M128.5 164v11M128.5 156v3M128.5 134v8M128.5 109v3M128.5 93v7M128.5 54v1M128.5 49v2M129.5 218v3M129.5 213v4M129.5 210v2M129.5 203v1M129.5 201v1M129.5 172v1M129.5 164v7M129.5 153v3M129.5 133v5M129.5 105v7M129.5 102v1M129.5 92v4M129.5 55v1M129.5 50v2M130.5 218v1M130.5 202v1M130.5 138v14M130.5 50v2M131.5 200v19M131.5 191v8M131.5 164v7M131.5 152v8M131.5 135v7M131.5 53v2M132.5 189v1M132.5 180v5M132.5 167v2M132.5 154v12M132.5 130v3M132.5 54v2M133.5 219v2M133.5 192v8M133.5 190v1M133.5 163v17M133.5 149v4M133.5 129v6M133.5 122v5M133.5 57v2M133.5 54v2M134.5 219v2M134.5 174v26M134.5 163v8M134.5 155v1M134.5 145v8M134.5 134v2M134.5 120v12M134.5 55v5M135.5 219v1M135.5 176v18M135.5 138v33M135.5 118v4M135.5 56v2M136.5 220v1M136.5 192v5M136.5 187v4M136.5 145v18M136.5 115v2M136.5 61v1M137.5 185v1M137.5 152v3M137.5 149v2M137.5 147v1M137.5 109v4M137.5 62v1M137.5 58v1M138.5 220v1M138.5 193v5M138.5 181v5M138.5 136v27M138.5 120v4M138.5 118v1M138.5 60v2M139.5 217v3M139.5 195v4M139.5 177v6M139.5 159v4M139.5 136v3M139.5 129v1M139.5 118v10M139.5 65v2M139.5 61v2M140.5 188v9M140.5 102v13M140.5 70v1M140.5 60v2M141.5 221v1M141.5 183v12M141.5 147v4M141.5 113v5M141.5 100v12M141.5 94v5M141.5 70v4M141.5 62v1M142.5 196v1M142.5 192v3M142.5 151v1M142.5 139v10M142.5 109v11M142.5 100v6M142.5 76v1M142.5 70v4M142.5 65v1M143.5 219v2M143.5 194v7M143.5 182v10M143.5 170v1M143.5 165v1M143.5 159v1M143.5 152v5M143.5 134v3M143.5 129v1M143.5 118v7M143.5 74v2M144.5 215v1M144.5 213v1M144.5 202v10M144.5 79v2M144.5 75v1M145.5 78v4" stroke="rgb(15, 135, 53)" stroke-width="1.050" fill="none"/><path d="M0.5 190v1M0.5 175v2M1.5 213v3M1.5 174v2M2.5 212v5M2.5 172v1M3.5 215v4M3.5 172v1M4.5 216v2M4.5 171v1M5.5 218v2M5.5 171v1M6.5 171v1M7.5 208v12M7.5 188v1M8.5 186v4M8.5 170v1M9.5 192v4M9.5 188v3M9.5 169v1M10.5 216v5M10.5 201v1M10.5 190v10M10.5 169v1M11.5 221v1M11.5 165v1M12.5 221v1M12.5 206v7M12.5 166v1M13.5 221v1M13.5 161v1M14.5 209v5M14.5 160v1M15.5 221v1M15.5 210v1M15.5 156v2M16.5 221v1M16.5 213v4M16.5 206v6M16.5 152v2M17.5 208v1M17.5 151v3M17.5 149v1M18.5 221v1M18.5 144v1M19.5 141v1M20.5 221v1M20.5 139v2M21.5 209v11M21.5 207v1M21.5 193v3M21.5 138v6M22.5 218v2M22.5 215v2M22.5 213v1M22.5 208v4M22.5 205v1M22.5 203v1M22.5 196v4M22.5 182v4M22.5 135v1M23.5 213v5M23.5 195v4M23.5 192v1M23.5 179v10M23.5 165v1M23.5 163v1M23.5 135v2M24.5 192v7M24.5 182v8M24.5 154v8M24.5 131v3M25.5 179v16M25.5 160v3M25.5 149v10M25.5 144v4M25.5 132v1M26.5 213v8M26.5 200v4M26.5 160v3M26.5 138v6M26.5 132v1M27.5 221v1M27.5 140v4M27.5 135v1M32.5 173v2M32.5 166v3M32.5 133v2M33.5 175v10M33.5 165v1M34.5 172v2M34.5 166v1M35.5 173v1M35.5 165v1M36.5 169v4M36.5 165v1M37.5 198v1M37.5 194v3M37.5 170v2M37.5 163v1M38.5 216v4M38.5 198v4M38.5 180v8M38.5 178v1M38.5 172v4M38.5 161v1M38.5 106v2M39.5 198v1M39.5 178v7M39.5 170v1M39.5 160v1M39.5 104v1M39.5 101v2M40.5 196v2M40.5 181v4M40.5 169v1M40.5 160v2M41.5 196v2M41.5 181v3M41.5 168v2M41.5 159v1M42.5 195v2M42.5 177v5M42.5 168v2M42.5 135v8M42.5 120v2M42.5 111v8M42.5 94v2M43.5 194v1M43.5 178v4M43.5 166v2M43.5 106v1M43.5 93v1M44.5 191v2M44.5 184v2M44.5 182v1M44.5 166v1M44.5 159v1M45.5 186v5M45.5 180v3M45.5 178v1M45.5 176v1M45.5 165v1M45.5 158v1M46.5 189v4M46.5 183v1M46.5 176v5M46.5 172v3M46.5 164v3M46.5 156v1M46.5 139v1M46.5 133v1M46.5 107v2M46.5 97v9M47.5 182v12M47.5 178v3M47.5 175v1M47.5 171v2M47.5 168v2M47.5 164v1M47.5 155v1M47.5 129v15M47.5 126v1M47.5 119v2M47.5 101v17M48.5 215v5M48.5 186v4M48.5 163v2M48.5 155v1M48.5 125v3M48.5 107v2M49.5 213v5M49.5 171v2M49.5 169v1M49.5 162v2M49.5 153v1M49.5 139v2M49.5 137v1M49.5 135v1M49.5 112v9M50.5 216v3M50.5 213v2M50.5 161v2M50.5 152v1M50.5 136v3M50.5 132v3M50.5 125v1M51.5 158v2M51.5 154v2M52.5 154v5M53.5 154v2M54.5 159v1M54.5 154v3M55.5 159v1M55.5 153v1M56.5 218v1M56.5 214v3M56.5 160v3M56.5 150v2M56.5 116v2M57.5 220v1M57.5 215v2M57.5 161v3M57.5 150v1M57.5 116v6M58.5 214v6M58.5 161v4M58.5 150v1M59.5 160v5M59.5 149v2M60.5 162v3M60.5 148v2M61.5 214v6M61.5 165v1M61.5 141v7M61.5 113v8M62.5 220v1M62.5 213v3M62.5 165v2M62.5 144v3M62.5 137v4M62.5 120v4M62.5 117v1M62.5 110v6M63.5 218v3M63.5 212v2M63.5 165v1M63.5 141v6M63.5 135v4M63.5 121v1M63.5 116v4M63.5 106v2M64.5 162v1M64.5 137v12M65.5 156v1M65.5 149v1M66.5 154v2M66.5 150v1M67.5 155v2M67.5 149v1M68.5 155v2M68.5 148v1M69.5 156v3M69.5 147v3M70.5 149v1M71.5 154v1M71.5 146v2M72.5 155v1M72.5 146v1M73.5 155v1M73.5 145v1M73.5 122v3M73.5 117v1M74.5 154v1M74.5 146v1M74.5 110v6M75.5 155v1M75.5 145v1M76.5 155v1M76.5 146v2M77.5 156v1M77.5 147v2M77.5 113v1M78.5 170v1M78.5 156v1M78.5 147v1M78.5 117v5M78.5 110v6M79.5 193v1M79.5 181v9M79.5 179v1M79.5 175v2M79.5 165v9M79.5 157v1M79.5 147v1M79.5 128v1M79.5 121v5M79.5 106v5M80.5 188v1M80.5 180v7M80.5 178v1M80.5 175v1M80.5 170v1M80.5 168v1M80.5 164v1M80.5 158v1M80.5 147v1M80.5 120v5M80.5 115v2M81.5 156v1M81.5 148v1M82.5 157v1M82.5 148v2M82.5 109v9M83.5 156v2M83.5 148v1M84.5 156v1M84.5 149v1M85.5 159v1M85.5 146v1M86.5 160v1M86.5 145v1M86.5 129v1M87.5 161v1M87.5 144v1M87.5 128v6M87.5 115v12M87.5 106v3M88.5 161v1M88.5 145v1M89.5 161v1M89.5 145v1M90.5 164v1M90.5 146v1M91.5 165v1M91.5 147v1M92.5 166v5M92.5 150v1M93.5 170v8M93.5 151v1M93.5 116v3M93.5 111v1M94.5 171v3M94.5 153v1M95.5 177v1M95.5 171v5M96.5 183v1M96.5 174v4M96.5 156v1M97.5 175v1M97.5 157v1M98.5 177v2M98.5 160v1M99.5 180v4M99.5 161v1M100.5 191v7M100.5 184v5M100.5 162v1M101.5 183v8M101.5 164v1M102.5 189v7M102.5 161v2M103.5 189v3M103.5 163v2M104.5 214v1M104.5 203v9M104.5 187v5M104.5 157v1M104.5 141v3M104.5 113v6M104.5 111v1M104.5 98v8M105.5 218v2M105.5 76v13M106.5 216v4M106.5 201v1M106.5 123v12M106.5 87v1M106.5 78v8M107.5 200v15M107.5 198v1M107.5 186v5M107.5 159v9M107.5 140v4M107.5 119v2M107.5 111v5M107.5 95v9M108.5 214v3M108.5 200v2M108.5 190v3M108.5 140v6M108.5 115v5M108.5 100v3M109.5 218v1M109.5 214v3M109.5 196v9M109.5 185v10M109.5 168v2M109.5 138v2M109.5 115v4M109.5 99v3M110.5 202v8M110.5 146v11M110.5 113v3M110.5 103v4M111.5 210v3M111.5 109v2M114.5 103v8M114.5 100v1M115.5 202v2M115.5 181v6M115.5 175v2M115.5 171v2M115.5 143v13M115.5 141v1M115.5 135v5M115.5 126v8M115.5 113v12M115.5 110v1M115.5 83v3M115.5 76v6M115.5 47v1M115.5 44v2M116.5 201v5M116.5 187v2M116.5 116v1M116.5 114v1M116.5 73v3M116.5 43v2M117.5 198v19M117.5 186v5M117.5 68v2M117.5 47v2M117.5 43v3M118.5 218v3M118.5 200v7M118.5 198v1M118.5 196v1M118.5 189v6M118.5 159v2M118.5 74v2M118.5 48v1M118.5 45v1M119.5 219v2M119.5 194v8M119.5 62v5M119.5 45v4M120.5 60v8M120.5 46v5M121.5 220v1M121.5 52v12M121.5 46v1M122.5 220v1M122.5 194v4M122.5 70v3M122.5 49v2M122.5 46v1M123.5 192v6M123.5 124v2M123.5 62v5M123.5 53v1M123.5 45v2M124.5 207v11M124.5 181v4M124.5 158v17M124.5 138v5M124.5 110v5M124.5 89v3M124.5 51v1M125.5 103v1M125.5 53v1M125.5 47v1M126.5 51v2M126.5 48v1M128.5 142v14M128.5 100v9M128.5 51v3M129.5 217v1M129.5 149v4M129.5 138v5M129.5 103v2M129.5 96v6M129.5 52v3M130.5 54v2M131.5 199v1M131.5 142v10M131.5 55v1M132.5 205v16M132.5 190v10M132.5 185v4M132.5 174v6M132.5 169v4M132.5 166v1M132.5 133v21M132.5 56v1M133.5 215v4M133.5 200v6M133.5 135v14M134.5 212v7M134.5 200v7M134.5 171v3M134.5 136v9M134.5 132v2M135.5 194v25M135.5 171v5M135.5 122v16M135.5 58v3M136.5 218v2M136.5 197v5M136.5 191v1M136.5 176v11M136.5 163v5M136.5 139v6M136.5 135v2M136.5 133v1M136.5 117v4M136.5 57v4M137.5 218v3M137.5 186v13M137.5 179v6M137.5 155v13M137.5 151v1M137.5 148v1M137.5 144v3M137.5 140v3M137.5 136v1M137.5 113v9M137.5 61v1M137.5 59v1M138.5 215v5M138.5 198v6M138.5 174v7M138.5 168v5M138.5 163v4M138.5 124v12M139.5 199v18M139.5 163v14M139.5 63v2M140.5 216v5M140.5 197v4M140.5 184v4M140.5 158v1M140.5 135v22M140.5 115v10M140.5 67v1M140.5 62v4M141.5 195v4M141.5 179v4M141.5 151v4M141.5 130v17M141.5 118v5M141.5 99v1M141.5 69v1M141.5 63v2M142.5 218v3M142.5 197v4M142.5 195v1M142.5 152v40M142.5 149v2M142.5 120v19M142.5 74v2M142.5 69v1M142.5 66v1M143.5 213v6M143.5 201v7M143.5 171v11M143.5 166v4M143.5 160v5M143.5 157v2M143.5 130v4M143.5 125v4M144.5 76v3" stroke="rgb(19, 163, 64)" stroke-width="1.050" fill="none"/><path d="M0.5 187v3M0.5 177v3M1.5 209v4M1.5 192v14M1.5 176v4M2.5 206v6M2.5 202v1M2.5 198v2M2.5 195v2M2.5 191v1M2.5 173v1M3.5 213v2M3.5 173v1M4.5 211v5M4.5 172v1M5.5 213v5M5.5 210v1M5.5 172v2M6.5 218v3M6.5 212v5M6.5 207v4M6.5 172v1M7.5 189v19M7.5 186v2M7.5 171v1M8.5 184v2M9.5 185v3M9.5 170v1M10.5 186v4M10.5 170v1M11.5 204v10M11.5 166v2M12.5 220v1M12.5 213v4M12.5 203v3M12.5 167v2M13.5 204v17M13.5 162v3M14.5 221v1M14.5 214v2M14.5 207v2M14.5 161v1M15.5 211v6M15.5 204v6M15.5 158v2M16.5 217v4M16.5 194v12M16.5 192v1M16.5 154v2M17.5 220v1M17.5 215v1M17.5 209v5M17.5 200v8M17.5 195v4M17.5 191v1M17.5 154v1M18.5 205v5M18.5 145v2M19.5 221v1M19.5 142v2M20.5 197v11M20.5 141v3M21.5 181v12M21.5 164v4M21.5 159v3M21.5 147v1M21.5 144v2M22.5 186v10M22.5 179v3M22.5 165v1M22.5 158v4M22.5 136v3M23.5 193v2M23.5 189v3M23.5 177v2M23.5 166v2M23.5 164v1M23.5 153v10M23.5 137v3M24.5 190v2M24.5 179v3M24.5 162v3M24.5 144v10M24.5 134v1M25.5 176v3M25.5 163v3M25.5 136v8M25.5 133v1M26.5 198v2M26.5 182v4M26.5 163v3M26.5 154v6M26.5 144v2M26.5 133v5M27.5 144v3M27.5 136v4M32.5 169v4M33.5 173v2M33.5 166v1M34.5 167v5M35.5 171v2M35.5 166v4M36.5 166v3M37.5 169v1M37.5 164v1M38.5 195v3M38.5 188v6M38.5 171v1M38.5 162v2M39.5 194v4M39.5 185v5M39.5 169v1M39.5 161v1M40.5 194v2M40.5 185v8M40.5 168v1M40.5 162v1M41.5 195v1M41.5 193v1M41.5 184v2M41.5 167v1M41.5 160v1M42.5 193v2M42.5 191v1M42.5 182v7M42.5 166v2M42.5 159v2M42.5 96v15M43.5 191v3M43.5 182v3M43.5 165v1M43.5 158v2M44.5 186v5M44.5 162v4M44.5 160v1M45.5 183v3M45.5 164v1M45.5 159v1M46.5 184v5M46.5 157v1M47.5 176v2M47.5 173v2M47.5 163v1M47.5 156v2M48.5 161v2M48.5 156v4M49.5 160v2M49.5 154v2M50.5 160v1M50.5 153v3M51.5 156v2M54.5 157v2M55.5 154v5M56.5 158v2M56.5 152v3M57.5 217v3M57.5 159v2M57.5 151v2M58.5 160v1M58.5 151v3M59.5 159v1M59.5 151v2M60.5 160v2M60.5 150v2M61.5 161v4M61.5 148v2M62.5 216v4M62.5 164v1M62.5 161v1M62.5 147v3M62.5 141v3M62.5 118v2M62.5 116v1M63.5 214v4M63.5 160v5M63.5 147v2M63.5 139v2M63.5 108v8M64.5 159v3M64.5 149v2M65.5 155v1M66.5 151v3M67.5 154v1M67.5 150v1M68.5 154v1M68.5 149v2M69.5 155v1M69.5 150v4M70.5 152v3M70.5 150v1M72.5 154v1M72.5 147v1M73.5 154v1M73.5 146v3M74.5 152v2M74.5 147v1M75.5 154v1M75.5 146v2M76.5 153v2M76.5 148v1M77.5 155v1M77.5 149v3M78.5 155v1M78.5 148v1M78.5 116v1M79.5 155v2M79.5 148v2M79.5 118v3M79.5 111v6M80.5 155v3M80.5 148v1M81.5 149v7M82.5 150v7M83.5 154v2M83.5 149v1M84.5 154v2M84.5 150v2M85.5 158v1M85.5 147v1M86.5 158v2M86.5 146v2M87.5 160v1M87.5 145v1M87.5 127v1M87.5 109v6M88.5 160v1M89.5 160v1M90.5 163v1M91.5 164v1M91.5 148v1M92.5 165v1M92.5 151v1M93.5 168v2M93.5 152v1M94.5 169v2M94.5 154v1M95.5 170v1M95.5 155v1M96.5 172v2M96.5 157v1M97.5 174v1M97.5 158v1M98.5 175v2M98.5 161v2M99.5 177v3M99.5 162v1M100.5 189v2M100.5 181v3M100.5 163v1M101.5 181v2M101.5 165v1M102.5 185v4M102.5 163v1M103.5 185v4M103.5 165v1M104.5 185v2M104.5 158v9M104.5 150v7M104.5 144v4M104.5 112v1M104.5 106v5M105.5 214v4M105.5 192v10M105.5 122v13M105.5 89v7M106.5 212v4M106.5 202v6M106.5 187v14M106.5 158v10M106.5 135v8M106.5 111v12M106.5 88v10M106.5 86v1M107.5 182v4M107.5 168v3M107.5 144v15M107.5 104v7M108.5 209v5M108.5 202v5M108.5 180v10M108.5 156v15M108.5 153v2M108.5 146v6M108.5 112v3M108.5 103v2M109.5 205v9M109.5 170v15M109.5 155v13M109.5 140v3M109.5 113v2M109.5 102v3M110.5 107v6M115.5 177v4M115.5 173v2M115.5 134v1M115.5 111v2M115.5 107v3M115.5 97v6M115.5 86v4M115.5 82v1M115.5 46v1M116.5 184v3M116.5 182v1M116.5 161v2M116.5 152v8M116.5 149v2M116.5 147v1M116.5 117v29M116.5 115v1M116.5 109v5M116.5 76v6M117.5 184v2M117.5 156v8M117.5 130v8M117.5 127v1M117.5 120v2M117.5 104v11M117.5 70v4M117.5 46v1M118.5 207v11M118.5 186v3M118.5 170v1M118.5 161v8M118.5 154v5M118.5 152v1M118.5 141v5M118.5 135v5M118.5 123v1M118.5 76v3M118.5 46v2M118.5 44v1M119.5 216v3M119.5 213v2M119.5 202v6M119.5 188v6M119.5 67v8M120.5 219v2M120.5 191v16M120.5 68v4M121.5 218v2M121.5 190v13M121.5 64v4M121.5 49v3M121.5 47v1M122.5 218v2M122.5 198v5M122.5 189v5M122.5 123v9M122.5 120v1M122.5 73v10M122.5 47v2M123.5 219v2M123.5 198v5M123.5 188v4M123.5 126v8M123.5 116v8M123.5 67v8M123.5 51v2M123.5 47v1M124.5 175v6M124.5 153v5M124.5 143v8M124.5 97v13M124.5 92v3M124.5 48v3M125.5 52v1M126.5 49v2M129.5 143v6M130.5 52v2M132.5 200v5M132.5 173v1M133.5 206v9M134.5 207v5M136.5 210v8M136.5 207v2M136.5 202v4M136.5 168v8M136.5 137v2M136.5 134v1M136.5 121v12M137.5 211v7M137.5 199v8M137.5 168v11M137.5 143v1M137.5 137v3M137.5 122v14M137.5 60v1M138.5 204v11M138.5 173v1M138.5 167v1M140.5 212v4M140.5 201v3M140.5 182v2M140.5 170v10M140.5 159v10M140.5 157v1M140.5 125v10M140.5 68v2M140.5 66v1M141.5 220v1M141.5 203v1M141.5 199v3M141.5 175v4M141.5 164v10M141.5 155v2M141.5 123v7M141.5 65v4M142.5 213v5M142.5 201v2M142.5 67v2M143.5 208v5" stroke="rgb(22, 195, 77)" stroke-width="1.050" fill="none"/><path d="M0.5 180v7M1.5 206v3M1.5 180v12M2.5 203v3M2.5 200v2M2.5 197v1M2.5 192v3M2.5 187v4M2.5 174v1M3.5 207v6M3.5 202v2M3.5 191v8M3.5 174v1M4.5 208v3M4.5 191v9M4.5 186v4M4.5 173v1M5.5 211v2M5.5 193v17M5.5 185v7M5.5 174v1M6.5 217v1M6.5 211v1M6.5 202v5M6.5 186v12M6.5 173v1M7.5 184v2M7.5 172v1M8.5 182v2M8.5 171v2M9.5 181v4M9.5 171v1M10.5 183v3M10.5 171v1M11.5 214v7M11.5 192v12M12.5 217v3M12.5 188v15M12.5 186v1M12.5 169v2M13.5 189v15M13.5 165v2M14.5 216v5M14.5 204v3M14.5 162v5M15.5 217v4M15.5 192v12M15.5 160v1M16.5 193v1M16.5 185v7M16.5 156v2M17.5 216v4M17.5 214v1M17.5 199v1M17.5 192v3M17.5 189v2M17.5 165v9M17.5 162v1M17.5 160v1M17.5 155v3M18.5 210v11M18.5 199v6M18.5 195v2M18.5 189v4M18.5 147v1M19.5 191v24M19.5 144v1M20.5 208v13M20.5 189v8M20.5 144v1M21.5 179v2M21.5 168v3M21.5 162v2M21.5 148v11M21.5 146v1M22.5 177v2M22.5 166v4M22.5 162v3M22.5 151v7M22.5 143v7M22.5 139v2M23.5 173v4M23.5 168v4M23.5 147v6M23.5 140v5M24.5 172v7M24.5 165v4M24.5 135v9M25.5 173v3M25.5 170v1M25.5 166v3M25.5 134v2M26.5 186v12M26.5 176v6M26.5 166v2M26.5 146v8M27.5 219v2M27.5 212v1M27.5 202v9M27.5 147v2M33.5 167v6M35.5 170v1M37.5 165v4M38.5 194v1M38.5 169v2M38.5 164v1M39.5 190v4M39.5 162v7M40.5 193v1M40.5 166v2M40.5 163v1M41.5 194v1M41.5 186v7M41.5 164v3M41.5 161v2M42.5 192v1M42.5 189v2M42.5 161v5M43.5 185v6M43.5 160v5M44.5 161v1M45.5 160v4M46.5 158v6M47.5 162v1M47.5 158v2M48.5 160v1M49.5 156v4M50.5 156v4M56.5 155v3M57.5 153v6M58.5 154v6M59.5 157v2M59.5 153v1M60.5 158v2M60.5 152v3M61.5 158v3M61.5 150v2M62.5 162v2M62.5 159v2M62.5 150v2M63.5 157v3M63.5 149v3M64.5 155v4M64.5 151v2M65.5 150v5M67.5 151v3M68.5 151v3M69.5 154v1M70.5 151v1M71.5 152v2M71.5 148v2M72.5 151v3M72.5 148v2M73.5 149v5M74.5 148v4M75.5 151v3M75.5 148v2M76.5 149v4M77.5 152v3M78.5 153v2M78.5 149v1M79.5 150v5M79.5 117v1M80.5 154v1M80.5 149v1M83.5 150v4M84.5 152v2M85.5 157v1M85.5 148v1M86.5 157v1M86.5 148v1M87.5 159v1M87.5 146v1M88.5 159v1M88.5 146v1M89.5 146v1M90.5 162v1M90.5 147v1M92.5 164v1M92.5 152v1M93.5 166v2M93.5 153v1M94.5 155v1M95.5 169v1M95.5 156v1M96.5 171v1M96.5 158v1M97.5 173v1M97.5 159v1M98.5 173v2M98.5 163v1M99.5 175v2M99.5 163v1M100.5 179v2M100.5 164v1M101.5 180v1M101.5 166v1M102.5 183v2M102.5 164v2M103.5 184v1M103.5 166v1M104.5 183v2M104.5 167v2M104.5 148v2M105.5 209v5M105.5 202v5M105.5 188v4M105.5 159v9M105.5 135v12M105.5 96v26M106.5 208v4M106.5 184v3M106.5 168v2M106.5 143v15M106.5 98v13M107.5 180v2M107.5 171v1M108.5 207v2M108.5 171v9M108.5 155v1M108.5 152v1M108.5 105v7M109.5 143v12M109.5 105v8M115.5 103v4M115.5 90v7M116.5 183v1M116.5 181v1M116.5 179v1M116.5 163v9M116.5 160v1M116.5 151v1M116.5 148v1M116.5 146v1M116.5 103v6M116.5 91v3M116.5 82v6M117.5 179v5M117.5 164v4M117.5 150v6M117.5 138v9M117.5 128v2M117.5 122v5M117.5 115v5M117.5 102v2M117.5 74v20M118.5 183v3M118.5 171v4M118.5 169v1M118.5 153v1M118.5 146v6M118.5 140v1M118.5 124v11M118.5 106v17M118.5 88v1M118.5 79v8M119.5 215v1M119.5 208v5M119.5 184v4M119.5 156v11M119.5 154v1M119.5 124v18M119.5 116v7M119.5 75v12M120.5 207v12M120.5 187v4M120.5 164v2M120.5 160v3M120.5 157v2M120.5 138v1M120.5 135v1M120.5 116v13M120.5 72v7M121.5 203v15M121.5 187v3M121.5 168v1M121.5 160v4M121.5 155v3M121.5 120v11M121.5 68v16M121.5 48v1M122.5 203v15M122.5 185v4M122.5 169v1M122.5 167v1M122.5 162v4M122.5 132v5M122.5 121v2M122.5 113v7M122.5 83v6M123.5 203v16M123.5 185v3M123.5 170v2M123.5 158v11M123.5 134v7M123.5 113v3M123.5 75v12M123.5 48v3M124.5 151v2M124.5 95v2M125.5 51v1M125.5 48v1M136.5 209v1M136.5 206v1M137.5 207v4M140.5 204v8M140.5 180v2M140.5 169v1M141.5 204v16M141.5 202v1M141.5 174v1M141.5 157v7M142.5 207v6M142.5 203v3" stroke="rgb(50, 220, 103)" stroke-width="1.050" fill="none"/><path d="M2.5 184v3M2.5 175v4M3.5 204v3M3.5 199v3M3.5 184v7M3.5 175v3M4.5 200v8M4.5 190v1M4.5 183v3M4.5 174v2M5.5 192v1M5.5 178v7M5.5 175v2M6.5 198v4M6.5 182v4M6.5 174v3M7.5 180v4M7.5 173v2M8.5 180v2M8.5 173v1M9.5 178v3M9.5 172v2M10.5 180v3M10.5 172v3M11.5 187v5M11.5 168v3M12.5 187v1M12.5 183v3M12.5 178v2M12.5 171v5M13.5 186v3M13.5 167v3M14.5 187v17M14.5 171v4M14.5 167v3M15.5 186v6M15.5 172v4M15.5 161v6M16.5 180v5M16.5 167v5M16.5 158v8M17.5 183v6M17.5 174v3M17.5 163v2M17.5 161v1M17.5 158v2M18.5 197v2M18.5 193v2M18.5 183v6M18.5 169v2M18.5 167v1M18.5 148v5M19.5 215v6M19.5 185v6M19.5 145v2M20.5 178v11M20.5 156v20M20.5 154v1M20.5 145v3M21.5 171v8M22.5 170v7M22.5 150v1M22.5 141v2M23.5 172v1M23.5 145v2M24.5 169v3M25.5 171v2M25.5 169v1M26.5 168v8M27.5 213v6M27.5 211v1M27.5 187v15M27.5 149v17M38.5 165v4M40.5 164v2M41.5 163v1M47.5 160v2M59.5 154v3M60.5 155v3M61.5 152v6M62.5 152v7M63.5 152v5M64.5 153v2M71.5 150v2M72.5 150v1M75.5 150v1M78.5 150v3M80.5 150v4M85.5 156v1M85.5 149v2M86.5 156v1M86.5 149v2M87.5 158v1M87.5 147v1M88.5 158v1M89.5 159v1M89.5 147v1M90.5 161v1M90.5 148v1M91.5 163v1M91.5 149v1M92.5 163v1M92.5 153v1M93.5 165v1M93.5 154v2M94.5 167v2M94.5 156v1M95.5 168v1M95.5 157v1M96.5 168v3M96.5 159v1M97.5 171v2M97.5 160v1M98.5 169v4M98.5 164v1M99.5 173v2M99.5 164v1M100.5 176v3M100.5 165v1M101.5 177v3M101.5 167v1M102.5 181v2M102.5 166v2M103.5 182v2M103.5 167v1M104.5 181v2M104.5 169v1M105.5 207v2M105.5 184v4M105.5 168v3M105.5 147v12M106.5 181v3M106.5 170v2M107.5 172v8M116.5 180v1M116.5 172v7M116.5 94v9M116.5 88v3M117.5 168v11M117.5 147v3M117.5 94v8M118.5 175v8M118.5 89v17M118.5 87v1M119.5 182v2M119.5 180v1M119.5 167v7M119.5 155v1M119.5 142v12M119.5 123v1M119.5 101v15M119.5 95v4M119.5 87v7M120.5 182v5M120.5 176v3M120.5 166v9M120.5 163v1M120.5 159v1M120.5 150v7M120.5 139v7M120.5 136v2M120.5 129v6M120.5 109v7M120.5 79v14M121.5 183v4M121.5 169v7M121.5 164v4M121.5 158v2M121.5 149v6M121.5 131v17M121.5 108v12M121.5 84v6M122.5 179v6M122.5 177v1M122.5 170v6M122.5 168v1M122.5 166v1M122.5 146v16M122.5 137v8M122.5 109v4M122.5 99v1M122.5 97v1M122.5 95v1M122.5 89v5M123.5 172v13M123.5 169v1M123.5 150v8M123.5 141v7M123.5 87v26M125.5 49v2M142.5 206v1" stroke="rgb(112, 232, 150)" stroke-width="1.050" fill="none"/><path d="M2.5 179v5M3.5 178v6M4.5 176v7M5.5 177v1M6.5 177v5M7.5 175v5M8.5 174v6M9.5 174v4M10.5 175v5M11.5 171v16M12.5 180v3M12.5 176v2M13.5 170v16M14.5 175v12M14.5 170v1M15.5 176v10M15.5 167v5M16.5 172v8M16.5 166v1M17.5 177v6M18.5 171v12M18.5 168v1M18.5 153v14M19.5 147v38M20.5 176v2M20.5 155v1M20.5 148v6M27.5 166v21M85.5 151v5M86.5 151v5M87.5 148v10M88.5 147v11M89.5 148v11M90.5 149v12M91.5 150v13M92.5 154v9M93.5 156v9M94.5 157v10M95.5 158v10M96.5 160v8M97.5 161v10M98.5 165v4M99.5 165v8M100.5 166v10M101.5 168v9M102.5 168v13M103.5 168v14M104.5 170v11M105.5 171v13M106.5 172v9M119.5 181v1M119.5 174v6M119.5 99v2M119.5 94v1M120.5 179v3M120.5 175v1M120.5 146v4M120.5 93v16M121.5 176v7M121.5 148v1M121.5 90v18M122.5 178v1M122.5 176v1M122.5 145v1M122.5 100v9M122.5 98v1M122.5 96v1M122.5 94v1M123.5 148v2" stroke="rgb(199, 250, 216)" stroke-width="1.050" fill="none"/></g><g transform="translate(290.93,0) scale(0.9861,0.9964)" filter="url(#sb)"><path d="M0.5 220v2M0.5 190v11M1.5 222v1M1.5 191v7M2.5 222v1M2.5 189v5M3.5 222v1M3.5 189v7M4.5 221v2M4.5 190v7M5.5 222v1M5.5 188v6M6.5 222v1M6.5 184v6M7.5 222v1M7.5 187v5M8.5 221v2M8.5 182v7M9.5 222v1M9.5 184v7M10.5 222v1M10.5 177v4M11.5 223v1M11.5 180v3M12.5 163v3M13.5 162v3M14.5 155v5M15.5 85v8M16.5 224v1M16.5 90v5M17.5 91v8M18.5 85v8M19.5 90v7M20.5 85v9M21.5 141v4M21.5 87v5M22.5 83v8M23.5 138v7M23.5 88v4M24.5 88v4M25.5 224v1M25.5 90v7M26.5 155v2M27.5 162v4M28.5 161v12M29.5 133v16M30.5 145v5M30.5 129v7M31.5 130v5M32.5 128v5M33.5 223v1M33.5 131v6M34.5 223v1M34.5 129v5M35.5 119v6M36.5 115v3M37.5 223v1M37.5 117v5M38.5 223v1M38.5 117v4M39.5 223v1M39.5 117v5M40.5 223v1M40.5 116v5M41.5 223v1M41.5 111v8M42.5 223v1M42.5 115v6M43.5 103v2M44.5 101v2M45.5 223v1M45.5 101v1M46.5 101v1M47.5 100v1M48.5 116v3M48.5 101v1M49.5 223v1M49.5 100v2M50.5 223v1M50.5 100v1M51.5 100v1M52.5 100v1M53.5 223v1M53.5 160v3M53.5 156v2M53.5 113v17M53.5 100v1M54.5 153v16M54.5 119v18M54.5 113v3M54.5 99v2M55.5 112v13M55.5 100v1M56.5 112v12M56.5 100v1M57.5 223v1M57.5 112v13M57.5 99v1M58.5 223v1M58.5 131v1M58.5 112v17M58.5 99v1M59.5 223v1M59.5 127v2M59.5 125v1M59.5 117v6M59.5 112v2M60.5 112v4M60.5 98v2M61.5 111v3M61.5 98v1M62.5 110v4M62.5 98v1M63.5 109v8M63.5 96v2M64.5 109v5M64.5 96v1M65.5 223v1M65.5 108v7M65.5 95v1M66.5 223v1M66.5 135v1M66.5 133v1M66.5 107v9M66.5 96v1M67.5 223v1M67.5 131v5M67.5 107v8M67.5 94v2M68.5 223v1M68.5 105v10M68.5 94v1M69.5 223v1M69.5 108v6M69.5 105v1M69.5 93v1M70.5 223v1M70.5 104v8M70.5 93v1M71.5 223v1M71.5 104v7M71.5 94v1M72.5 223v1M72.5 111v8M72.5 103v1M72.5 94v1M73.5 223v1M73.5 113v10M73.5 96v6M74.5 223v1M74.5 114v5M75.5 223v1M75.5 110v5M76.5 113v6M77.5 223v1M77.5 114v5M78.5 223v1M78.5 116v8M79.5 116v4M80.5 116v4M81.5 223v1M81.5 128v1M81.5 125v1M81.5 115v4M82.5 223v1M82.5 116v9M83.5 120v9M84.5 223v1M84.5 154v5M84.5 118v8M85.5 223v1M85.5 156v4M85.5 154v1M85.5 152v1M85.5 120v5M86.5 223v1M86.5 115v10M87.5 223v1M87.5 123v7M88.5 223v1M88.5 154v7M88.5 127v5M89.5 223v1M89.5 123v5M90.5 223v1M90.5 126v10M91.5 223v1M91.5 128v5M92.5 223v1M92.5 128v12M93.5 223v1M93.5 127v12M94.5 126v5M95.5 223v1M95.5 129v10M96.5 223v1M96.5 135v10M97.5 223v1M97.5 129v7M98.5 223v1M98.5 177v3M99.5 223v1M99.5 175v4M100.5 222v1M100.5 175v7M101.5 222v1M101.5 178v7M102.5 112v3M103.5 223v1M103.5 108v5M104.5 223v1M104.5 109v9M105.5 96v4M106.5 94v3M107.5 91v2M108.5 92v3M109.5 223v1M109.5 95v5M110.5 223v1M110.5 96v10M111.5 99v8M112.5 86v11M113.5 94v10M113.5 71v1M113.5 62v2M114.5 94v8M114.5 71v2M114.5 62v1M115.5 83v6M115.5 71v1M115.5 61v1M116.5 80v7M116.5 73v2M116.5 61v1M117.5 223v1M117.5 78v5M117.5 74v3M117.5 61v1M118.5 81v3M118.5 75v1M118.5 60v2M119.5 75v5M119.5 63v1M120.5 77v3M120.5 63v1M121.5 78v2M121.5 64v1M122.5 65v1M123.5 66v1M124.5 223v1M124.5 84v7M124.5 79v2M124.5 68v1M125.5 87v5M125.5 81v1M125.5 67v1M126.5 84v5M126.5 68v1M127.5 92v7M127.5 82v2M127.5 69v1M128.5 83v8M128.5 69v2M129.5 91v5M129.5 85v1M129.5 69v1M130.5 97v8M130.5 85v1M130.5 70v2M131.5 96v9M131.5 86v1M131.5 71v2M132.5 96v7M132.5 86v1M132.5 73v2M133.5 95v8M133.5 87v1M133.5 74v1M134.5 100v8M134.5 88v1M134.5 75v1M135.5 97v6M135.5 89v2M135.5 75v1M136.5 103v5M136.5 90v2M136.5 77v1M137.5 99v8M137.5 91v3M137.5 77v1M138.5 108v4M138.5 93v2M138.5 79v1M139.5 108v4M139.5 96v2M139.5 78v1M140.5 223v1M140.5 98v11M140.5 79v1M141.5 107v6M141.5 100v2M141.5 80v2M142.5 223v1M142.5 103v13M142.5 83v2M143.5 223v1M143.5 106v10M143.5 85v2M144.5 223v1M144.5 112v12M144.5 108v3M144.5 88v2M145.5 223v1M145.5 134v2M145.5 122v8M145.5 108v1M145.5 90v1" stroke="rgb(11, 10, 30)" stroke-width="1.050" fill="none"/><path d="M0.5 217v3M0.5 201v2M1.5 221v1M1.5 198v2M2.5 221v1M2.5 194v4M3.5 221v1M3.5 196v3M4.5 197v2M5.5 221v1M5.5 194v4M6.5 221v1M6.5 190v7M7.5 221v1M7.5 192v5M8.5 189v7M9.5 221v1M9.5 191v7M10.5 181v6M11.5 183v5M12.5 223v1M12.5 166v2M13.5 223v1M13.5 165v3M14.5 223v1M14.5 160v5M15.5 144v13M15.5 136v6M15.5 105v9M15.5 102v1M15.5 93v5M16.5 136v18M16.5 107v9M16.5 105v1M16.5 95v6M17.5 135v19M17.5 99v13M18.5 132v20M18.5 121v1M18.5 116v3M18.5 93v11M19.5 223v1M19.5 132v16M19.5 105v20M19.5 97v7M20.5 106v42M20.5 94v6M21.5 145v8M21.5 92v49M22.5 135v13M22.5 116v9M22.5 98v1M22.5 91v6M23.5 145v4M23.5 134v4M23.5 123v1M23.5 113v9M23.5 92v4M24.5 136v10M24.5 118v3M24.5 92v4M25.5 138v10M25.5 117v6M25.5 97v3M26.5 223v1M26.5 157v2M27.5 223v1M27.5 166v9M28.5 223v1M28.5 173v3M29.5 167v8M29.5 149v4M30.5 169v8M30.5 150v5M30.5 136v9M31.5 135v15M32.5 223v1M32.5 150v1M32.5 146v3M32.5 133v3M33.5 163v17M33.5 137v19M34.5 222v1M34.5 165v10M34.5 134v21M35.5 223v1M35.5 125v4M36.5 223v1M36.5 118v7M37.5 122v4M38.5 222v1M38.5 167v1M38.5 126v1M38.5 121v4M39.5 222v1M39.5 167v6M39.5 149v1M39.5 122v4M40.5 222v1M40.5 167v2M40.5 121v3M41.5 119v4M42.5 167v8M42.5 121v3M43.5 223v1M43.5 110v10M43.5 105v2M44.5 223v1M44.5 113v7M44.5 103v1M45.5 170v4M45.5 114v7M45.5 102v1M46.5 223v1M46.5 171v1M46.5 115v8M46.5 102v1M47.5 223v1M47.5 101v1M48.5 223v1M48.5 170v1M48.5 119v6M48.5 113v3M48.5 102v1M49.5 166v11M49.5 164v1M49.5 114v8M49.5 102v1M50.5 166v7M50.5 115v9M50.5 101v1M51.5 223v1M51.5 113v7M51.5 101v1M52.5 223v1M52.5 166v1M52.5 113v12M52.5 101v1M53.5 222v1M53.5 163v15M53.5 158v2M53.5 130v26M53.5 112v1M53.5 101v1M54.5 222v1M54.5 169v10M54.5 137v16M54.5 111v2M55.5 223v1M55.5 154v10M55.5 125v27M55.5 111v1M55.5 101v1M56.5 223v1M56.5 124v7M56.5 111v1M56.5 101v1M57.5 152v14M57.5 125v7M57.5 111v1M57.5 100v2M58.5 222v1M58.5 132v40M58.5 129v2M58.5 111v1M58.5 100v1M59.5 143v24M59.5 129v5M59.5 126v1M59.5 123v2M59.5 110v2M59.5 99v1M60.5 223v1M60.5 167v2M60.5 165v1M60.5 116v5M60.5 110v2M61.5 114v5M61.5 109v2M61.5 99v1M62.5 223v1M62.5 126v1M62.5 114v5M62.5 108v2M63.5 223v1M63.5 117v5M63.5 108v1M64.5 223v1M64.5 114v4M64.5 107v2M65.5 166v6M65.5 155v10M65.5 153v1M65.5 125v22M65.5 115v4M65.5 106v2M65.5 96v1M66.5 222v1M66.5 168v7M66.5 166v1M66.5 136v14M66.5 134v1M66.5 116v17M66.5 106v1M66.5 97v1M67.5 222v1M67.5 136v17M67.5 115v16M67.5 106v1M68.5 222v1M68.5 115v34M68.5 104v1M68.5 95v1M69.5 140v1M69.5 127v12M69.5 114v5M69.5 104v1M69.5 94v1M70.5 128v11M70.5 112v13M70.5 103v1M70.5 94v1M71.5 131v14M71.5 111v5M71.5 102v2M71.5 95v1M72.5 222v1M72.5 167v6M72.5 131v4M72.5 119v11M72.5 101v2M72.5 95v1M73.5 222v1M73.5 164v6M73.5 141v1M73.5 123v17M74.5 222v1M74.5 119v15M75.5 167v4M75.5 115v6M76.5 223v1M76.5 119v12M77.5 168v5M77.5 128v1M77.5 119v8M78.5 124v10M79.5 223v1M79.5 163v2M79.5 120v14M80.5 223v1M80.5 162v1M80.5 120v10M81.5 156v1M81.5 129v5M81.5 126v2M81.5 119v6M82.5 155v5M82.5 125v5M83.5 223v1M83.5 153v11M83.5 129v4M84.5 159v5M84.5 147v7M84.5 126v6M85.5 222v1M85.5 160v5M85.5 155v1M85.5 153v1M85.5 146v6M85.5 125v6M86.5 151v10M86.5 125v4M87.5 146v15M87.5 130v14M88.5 222v1M88.5 161v3M88.5 147v7M88.5 132v13M89.5 222v1M89.5 144v22M89.5 128v15M90.5 136v13M91.5 159v3M91.5 155v3M91.5 133v13M92.5 140v21M93.5 139v7M94.5 223v1M94.5 131v13M95.5 222v1M95.5 139v5M96.5 222v1M96.5 145v6M97.5 222v1M97.5 136v8M98.5 222v1M98.5 180v5M99.5 222v1M99.5 179v4M100.5 221v1M100.5 182v3M101.5 221v1M101.5 185v5M102.5 223v1M102.5 115v6M103.5 113v4M104.5 222v1M104.5 118v16M105.5 223v1M105.5 100v8M106.5 97v2M107.5 93v2M108.5 223v1M108.5 95v2M109.5 100v8M110.5 106v6M111.5 223v1M111.5 107v5M112.5 223v1M112.5 112v1M112.5 106v1M112.5 97v8M113.5 223v1M113.5 104v8M113.5 68v3M113.5 64v2M114.5 223v1M114.5 102v8M114.5 70v1M114.5 63v1M115.5 223v1M115.5 89v12M115.5 70v1M115.5 62v1M116.5 223v1M116.5 87v7M116.5 71v2M116.5 62v1M117.5 83v4M117.5 73v1M117.5 62v1M118.5 223v1M118.5 84v4M118.5 74v1M118.5 62v1M119.5 80v2M119.5 74v1M119.5 64v1M120.5 80v2M120.5 76v1M120.5 64v1M121.5 80v2M121.5 76v2M121.5 65v1M122.5 79v1M122.5 66v1M123.5 223v1M123.5 78v7M124.5 91v8M124.5 78v1M125.5 223v1M125.5 92v5M125.5 80v1M125.5 68v1M126.5 89v6M126.5 82v2M126.5 69v1M127.5 99v4M127.5 81v1M127.5 70v1M128.5 91v6M128.5 81v2M129.5 96v5M129.5 83v2M129.5 70v1M130.5 223v1M130.5 105v10M130.5 84v1M131.5 223v1M131.5 126v6M131.5 105v8M131.5 85v1M131.5 73v1M132.5 223v1M132.5 103v11M132.5 85v1M133.5 103v9M133.5 86v1M134.5 108v5M134.5 87v1M135.5 223v1M135.5 103v4M135.5 88v1M135.5 76v1M136.5 108v5M136.5 89v1M136.5 78v1M137.5 223v1M137.5 107v7M137.5 90v1M137.5 78v1M138.5 223v1M138.5 112v3M138.5 92v1M138.5 80v1M139.5 223v1M139.5 112v5M139.5 95v1M139.5 79v2M140.5 109v6M140.5 97v1M140.5 80v1M141.5 223v1M141.5 113v5M141.5 98v2M141.5 82v2M142.5 116v7M142.5 101v2M142.5 85v2M143.5 116v4M143.5 105v1M143.5 87v1M144.5 124v4M144.5 106v2M144.5 90v1M145.5 222v1M145.5 136v19M145.5 130v4M145.5 107v1M145.5 91v1" stroke="rgb(20, 18, 52)" stroke-width="1.050" fill="none"/><path d="M0.5 215v2M0.5 203v1M1.5 220v1M1.5 200v2M2.5 198v3M3.5 219v2M3.5 199v2M4.5 217v4M4.5 199v2M5.5 220v1M5.5 198v2M6.5 220v1M6.5 197v3M7.5 218v3M7.5 197v2M8.5 216v5M8.5 196v3M9.5 217v4M9.5 198v1M10.5 221v1M10.5 187v8M11.5 222v1M11.5 188v5M12.5 168v3M13.5 168v13M14.5 165v6M15.5 223v1M15.5 157v3M15.5 142v2M15.5 129v7M15.5 114v14M15.5 103v2M15.5 98v4M16.5 223v1M16.5 154v4M16.5 116v20M16.5 106v1M16.5 101v4M17.5 223v1M17.5 154v4M17.5 121v14M17.5 112v8M18.5 223v1M18.5 152v3M18.5 122v10M18.5 119v2M18.5 104v12M19.5 148v4M19.5 125v7M19.5 104v1M20.5 223v1M20.5 148v3M20.5 100v6M21.5 223v1M21.5 153v3M22.5 223v1M22.5 148v3M22.5 125v10M22.5 99v17M22.5 97v1M23.5 223v1M23.5 149v3M23.5 124v10M23.5 122v1M23.5 96v17M24.5 223v1M24.5 146v5M24.5 132v4M24.5 121v8M24.5 107v11M24.5 96v9M25.5 148v3M25.5 123v15M25.5 100v17M26.5 167v5M26.5 159v5M27.5 181v1M27.5 175v4M28.5 176v3M29.5 223v1M29.5 175v6M29.5 164v3M29.5 153v3M30.5 223v1M30.5 177v3M30.5 155v14M31.5 223v1M31.5 167v4M31.5 150v4M32.5 166v11M32.5 151v6M32.5 149v1M32.5 136v10M33.5 222v1M33.5 180v4M33.5 156v7M34.5 175v4M34.5 155v10M35.5 166v8M35.5 146v9M35.5 129v6M36.5 166v9M36.5 125v5M37.5 222v1M37.5 165v10M37.5 147v7M37.5 126v9M38.5 168v7M38.5 143v24M38.5 127v3M38.5 125v1M39.5 173v4M39.5 161v6M39.5 150v8M39.5 142v7M39.5 126v5M40.5 169v6M40.5 160v7M40.5 145v13M40.5 124v3M41.5 222v1M41.5 166v8M41.5 150v1M41.5 146v3M41.5 123v3M42.5 222v1M42.5 175v3M42.5 162v5M42.5 153v3M42.5 150v2M42.5 148v1M42.5 124v3M43.5 222v1M43.5 168v7M43.5 120v5M43.5 107v3M44.5 167v6M44.5 120v2M44.5 112v1M44.5 104v1M45.5 222v1M45.5 174v5M45.5 165v5M45.5 154v1M45.5 140v5M45.5 121v5M45.5 113v1M45.5 103v1M46.5 172v3M46.5 160v11M46.5 123v2M46.5 114v1M46.5 103v1M47.5 168v7M47.5 113v8M47.5 102v1M48.5 171v6M48.5 166v4M48.5 125v6M48.5 112v1M48.5 103v1M49.5 222v1M49.5 177v7M49.5 165v1M49.5 155v9M49.5 131v1M49.5 122v5M49.5 112v2M49.5 103v1M50.5 222v1M50.5 173v6M50.5 160v6M50.5 152v1M50.5 124v4M50.5 113v2M50.5 102v1M51.5 162v12M51.5 129v1M51.5 120v8M52.5 167v10M52.5 152v14M52.5 145v2M52.5 141v3M52.5 138v2M52.5 125v11M52.5 112v1M52.5 102v1M53.5 221v1M53.5 178v7M53.5 111v1M53.5 102v1M54.5 221v1M54.5 209v4M54.5 179v4M54.5 101v1M55.5 222v1M55.5 164v13M55.5 152v2M55.5 110v1M55.5 102v1M56.5 165v5M56.5 153v11M56.5 131v15M56.5 110v1M56.5 102v1M57.5 222v1M57.5 166v4M57.5 140v12M57.5 132v7M57.5 110v1M57.5 102v1M58.5 172v7M58.5 110v1M58.5 101v1M59.5 222v1M59.5 167v8M59.5 134v9M59.5 109v1M59.5 100v1M60.5 169v7M60.5 166v1M60.5 121v44M60.5 108v2M60.5 100v2M61.5 223v1M61.5 150v17M61.5 147v2M61.5 128v4M61.5 119v8M61.5 107v2M62.5 151v21M62.5 127v8M62.5 119v7M62.5 107v1M62.5 99v1M63.5 151v21M63.5 122v13M63.5 107v1M63.5 98v1M64.5 150v20M64.5 118v24M64.5 97v1M65.5 222v1M65.5 172v7M65.5 165v1M65.5 154v1M65.5 147v6M65.5 119v6M65.5 105v1M65.5 97v1M66.5 221v1M66.5 208v2M66.5 175v8M66.5 167v1M66.5 150v16M66.5 105v1M67.5 153v24M67.5 104v2M67.5 96v1M68.5 174v5M68.5 172v1M68.5 164v1M68.5 162v1M68.5 149v5M68.5 103v1M68.5 96v1M69.5 222v1M69.5 171v2M69.5 150v1M69.5 141v8M69.5 139v1M69.5 119v8M69.5 103v1M69.5 95v1M70.5 222v1M70.5 139v6M70.5 125v3M70.5 102v1M70.5 95v1M71.5 222v1M71.5 168v5M71.5 145v5M71.5 116v15M72.5 173v4M72.5 164v3M72.5 135v18M72.5 130v1M72.5 96v5M73.5 170v8M73.5 142v22M73.5 140v1M74.5 161v12M74.5 159v1M74.5 150v8M74.5 134v3M75.5 222v1M75.5 171v3M75.5 164v3M75.5 121v12M76.5 222v1M76.5 163v10M76.5 131v3M77.5 222v1M77.5 173v3M77.5 159v9M77.5 154v2M77.5 129v4M77.5 127v1M78.5 222v1M78.5 159v15M78.5 134v3M79.5 165v4M79.5 152v11M79.5 134v2M80.5 222v1M80.5 163v4M80.5 155v7M80.5 130v4M81.5 222v1M81.5 167v3M81.5 157v9M81.5 148v8M81.5 134v2M82.5 222v1M82.5 160v4M82.5 149v6M82.5 130v3M83.5 164v3M83.5 149v4M83.5 133v3M84.5 222v1M84.5 164v2M84.5 144v3M84.5 132v4M85.5 221v1M85.5 165v5M85.5 139v7M85.5 131v7M86.5 222v1M86.5 161v4M86.5 145v6M86.5 129v3M87.5 222v1M87.5 161v3M87.5 144v2M88.5 164v7M88.5 145v2M89.5 166v3M89.5 143v1M90.5 222v1M90.5 149v14M91.5 222v1M91.5 162v6M91.5 158v1M91.5 146v9M92.5 222v1M92.5 168v4M92.5 161v6M93.5 222v1M93.5 158v4M93.5 146v4M94.5 222v1M94.5 144v15M95.5 163v16M95.5 159v3M95.5 153v3M95.5 144v7M96.5 151v24M97.5 162v15M97.5 144v6M98.5 221v1M98.5 185v1M99.5 183v3M100.5 185v3M101.5 220v1M101.5 190v1M102.5 121v9M103.5 222v1M103.5 137v2M103.5 129v7M103.5 127v1M103.5 124v1M103.5 117v5M104.5 221v1M104.5 134v7M105.5 222v1M105.5 108v8M106.5 223v1M106.5 99v5M107.5 223v1M107.5 95v2M108.5 97v3M109.5 222v1M109.5 108v6M110.5 222v1M110.5 112v6M111.5 112v6M112.5 113v4M112.5 107v5M112.5 105v1M113.5 112v10M113.5 66v2M114.5 110v11M114.5 68v2M114.5 64v1M115.5 111v1M115.5 101v9M115.5 69v1M115.5 63v1M116.5 94v4M116.5 70v1M116.5 63v1M117.5 222v1M117.5 87v7M117.5 72v1M118.5 88v7M118.5 73v1M119.5 223v1M119.5 82v2M119.5 73v1M119.5 65v1M120.5 223v1M120.5 82v2M120.5 74v2M120.5 65v1M121.5 223v1M121.5 82v2M121.5 75v1M121.5 66v1M122.5 223v1M122.5 80v3M122.5 77v2M122.5 67v2M123.5 85v3M123.5 77v1M123.5 67v1M124.5 222v1M124.5 128v1M124.5 99v5M124.5 77v1M124.5 69v2M125.5 97v5M125.5 79v1M125.5 69v1M126.5 223v1M126.5 95v6M126.5 80v2M126.5 70v1M127.5 223v1M127.5 103v3M127.5 80v1M127.5 71v1M128.5 223v1M128.5 97v5M128.5 80v1M128.5 71v1M129.5 223v1M129.5 101v3M129.5 71v1M130.5 151v1M130.5 115v19M130.5 83v1M130.5 72v1M131.5 159v1M131.5 144v13M131.5 132v3M131.5 122v4M131.5 113v4M131.5 84v1M131.5 74v1M132.5 148v5M132.5 123v8M132.5 121v1M132.5 114v6M132.5 84v1M132.5 75v1M133.5 223v1M133.5 112v6M133.5 75v1M134.5 223v1M134.5 113v3M134.5 86v1M134.5 76v1M135.5 107v5M135.5 87v1M135.5 77v1M136.5 223v1M136.5 113v3M136.5 87v2M136.5 79v1M137.5 114v2M137.5 89v1M137.5 79v2M138.5 149v4M138.5 115v4M138.5 91v1M139.5 147v6M139.5 117v5M139.5 93v2M140.5 222v1M140.5 147v5M140.5 135v1M140.5 125v1M140.5 115v8M140.5 95v2M140.5 81v2M141.5 118v4M141.5 96v2M141.5 84v2M142.5 222v1M142.5 142v9M142.5 123v10M142.5 100v1M142.5 87v1M143.5 222v1M143.5 120v28M143.5 102v3M143.5 88v2M144.5 222v1M144.5 128v31M144.5 104v2M144.5 91v2M145.5 221v1M145.5 155v25M145.5 106v1M145.5 92v1" stroke="rgb(29, 26, 75)" stroke-width="1.050" fill="none"/><path d="M0.5 214v1M0.5 204v1M1.5 217v3M1.5 202v1M2.5 218v3M2.5 201v2M3.5 216v3M3.5 201v1M4.5 215v2M4.5 201v1M5.5 216v4M5.5 200v2M6.5 217v3M6.5 200v1M7.5 215v3M7.5 199v2M8.5 215v1M8.5 199v1M9.5 215v2M9.5 199v2M10.5 218v3M10.5 195v2M11.5 221v1M11.5 193v3M12.5 222v1M12.5 171v5M13.5 222v1M13.5 181v6M14.5 222v1M14.5 192v2M14.5 187v1M14.5 171v13M15.5 160v3M15.5 128v1M16.5 158v5M17.5 158v6M17.5 120v1M18.5 155v5M19.5 152v3M20.5 173v4M20.5 151v4M21.5 156v4M22.5 151v4M23.5 152v4M24.5 151v2M24.5 129v3M24.5 105v2M25.5 223v1M25.5 151v3M26.5 172v5M26.5 164v3M27.5 222v1M27.5 182v6M27.5 179v2M28.5 222v1M28.5 179v8M29.5 181v4M29.5 156v8M30.5 180v5M31.5 171v4M31.5 164v3M31.5 154v4M32.5 177v2M32.5 157v9M33.5 184v2M34.5 221v1M34.5 179v4M35.5 222v1M35.5 174v4M35.5 162v4M35.5 155v4M35.5 143v3M35.5 135v5M36.5 222v1M36.5 175v2M36.5 163v3M36.5 144v12M36.5 130v2M37.5 175v2M37.5 163v2M37.5 154v2M37.5 144v3M37.5 135v4M38.5 221v1M38.5 175v4M38.5 130v13M39.5 221v1M39.5 177v3M39.5 158v3M39.5 131v11M40.5 221v1M40.5 175v3M40.5 158v2M40.5 142v3M40.5 139v1M40.5 127v7M41.5 221v1M41.5 174v4M41.5 161v5M41.5 151v5M41.5 149v1M41.5 139v7M41.5 126v3M42.5 178v3M42.5 156v6M42.5 152v1M42.5 149v1M42.5 145v3M42.5 127v4M43.5 175v3M43.5 142v26M43.5 125v3M44.5 222v1M44.5 173v5M44.5 144v23M44.5 142v1M44.5 122v4M44.5 105v7M45.5 179v5M45.5 155v10M45.5 145v9M45.5 137v3M45.5 126v3M45.5 112v1M45.5 104v1M46.5 222v1M46.5 175v6M46.5 148v12M46.5 125v2M46.5 113v1M47.5 222v1M47.5 175v4M47.5 159v9M47.5 121v5M47.5 112v1M47.5 103v1M48.5 177v5M48.5 162v4M48.5 131v3M49.5 184v3M49.5 132v23M49.5 127v4M49.5 110v2M50.5 179v5M50.5 153v7M50.5 147v5M50.5 128v17M50.5 112v1M50.5 103v1M51.5 222v1M51.5 174v3M51.5 155v7M51.5 130v23M51.5 128v1M51.5 112v1M51.5 102v1M52.5 222v1M52.5 177v5M52.5 147v5M52.5 144v1M52.5 140v1M52.5 136v2M52.5 110v2M52.5 103v1M53.5 220v1M53.5 208v8M53.5 185v3M53.5 109v2M53.5 103v1M54.5 213v8M54.5 206v3M54.5 183v4M54.5 110v1M54.5 102v1M55.5 177v6M55.5 109v1M55.5 103v2M56.5 222v1M56.5 170v5M56.5 164v1M56.5 146v7M56.5 109v1M57.5 170v3M57.5 139v1M57.5 109v1M58.5 221v1M58.5 208v8M58.5 179v7M58.5 109v1M58.5 102v1M59.5 175v6M59.5 108v1M59.5 101v1M60.5 222v1M60.5 176v6M61.5 167v8M61.5 149v1M61.5 142v5M61.5 132v5M61.5 127v1M61.5 106v1M61.5 100v1M62.5 222v1M62.5 172v7M62.5 135v16M62.5 106v1M62.5 100v1M63.5 222v1M63.5 172v7M63.5 135v16M63.5 106v1M63.5 99v2M64.5 222v1M64.5 170v8M64.5 142v8M64.5 106v1M64.5 98v1M65.5 206v6M65.5 179v6M65.5 104v1M65.5 98v1M66.5 210v4M66.5 205v3M66.5 183v2M66.5 104v1M66.5 98v1M67.5 221v1M67.5 205v7M67.5 177v7M67.5 97v1M68.5 221v1M68.5 207v4M68.5 179v4M68.5 173v1M68.5 165v7M68.5 163v1M68.5 154v8M68.5 102v1M68.5 99v2M68.5 97v1M69.5 173v5M69.5 163v8M69.5 151v5M69.5 149v1M69.5 99v4M69.5 96v2M70.5 163v8M70.5 145v11M70.5 101v1M70.5 96v1M71.5 173v6M71.5 150v18M71.5 100v2M71.5 96v1M72.5 221v1M72.5 177v5M72.5 153v11M73.5 221v1M73.5 211v3M73.5 178v4M74.5 221v1M74.5 173v4M74.5 160v1M74.5 158v1M74.5 137v13M75.5 174v3M75.5 161v3M75.5 159v1M75.5 147v7M75.5 133v4M76.5 173v2M76.5 154v9M76.5 134v2M77.5 176v2M77.5 156v3M77.5 148v6M77.5 138v1M77.5 133v4M78.5 174v4M78.5 153v6M78.5 137v4M79.5 222v1M79.5 169v5M79.5 143v9M79.5 141v1M79.5 136v4M80.5 167v4M80.5 150v5M80.5 134v3M81.5 170v6M81.5 166v1M81.5 144v4M81.5 136v2M82.5 164v6M82.5 142v7M82.5 133v5M83.5 222v1M83.5 167v5M83.5 145v4M83.5 143v1M83.5 136v5M84.5 221v1M84.5 166v8M84.5 136v8M85.5 170v5M85.5 138v1M86.5 221v1M86.5 165v6M86.5 132v13M87.5 221v1M87.5 164v8M88.5 221v1M88.5 171v3M89.5 221v1M89.5 169v1M90.5 163v5M91.5 168v3M92.5 221v1M92.5 172v7M92.5 167v1M93.5 170v2M93.5 162v7M93.5 150v8M94.5 159v12M95.5 221v1M95.5 179v5M95.5 162v1M95.5 156v3M95.5 151v2M96.5 221v1M96.5 175v9M97.5 221v1M97.5 177v7M97.5 150v12M98.5 186v1M99.5 221v1M99.5 186v2M100.5 217v4M100.5 210v5M100.5 188v2M101.5 211v9M101.5 191v1M102.5 222v1M102.5 130v7M103.5 139v8M103.5 136v1M103.5 128v1M103.5 125v2M103.5 122v2M104.5 151v22M104.5 141v7M105.5 116v16M106.5 104v7M107.5 97v2M108.5 222v1M108.5 100v7M109.5 114v5M110.5 127v1M110.5 118v8M111.5 222v1M111.5 118v10M112.5 222v1M112.5 117v2M113.5 222v1M113.5 140v1M113.5 127v1M113.5 122v4M114.5 222v1M114.5 121v4M114.5 65v3M115.5 112v10M115.5 110v1M115.5 68v1M115.5 64v1M116.5 222v1M116.5 98v26M116.5 69v1M116.5 64v1M117.5 94v9M117.5 71v1M117.5 63v1M118.5 95v7M118.5 63v2M119.5 84v2M119.5 72v1M119.5 66v1M120.5 84v3M120.5 66v1M121.5 84v2M121.5 74v1M122.5 83v3M122.5 76v1M122.5 69v1M123.5 222v1M123.5 88v8M123.5 68v1M124.5 157v4M124.5 152v2M124.5 129v4M124.5 123v5M124.5 104v14M124.5 76v1M124.5 71v1M125.5 222v1M125.5 127v4M125.5 124v2M125.5 102v6M125.5 78v1M125.5 70v3M126.5 101v3M126.5 78v2M126.5 71v1M127.5 125v1M127.5 120v2M127.5 118v1M127.5 106v3M127.5 79v1M127.5 72v2M128.5 125v1M128.5 119v2M128.5 102v2M128.5 72v3M129.5 148v4M129.5 127v3M129.5 122v1M129.5 104v14M129.5 82v1M129.5 72v1M130.5 222v1M130.5 152v20M130.5 134v17M130.5 82v1M130.5 73v1M131.5 222v1M131.5 160v12M131.5 157v2M131.5 135v9M131.5 117v5M131.5 83v1M132.5 153v4M132.5 146v2M132.5 131v3M132.5 122v1M132.5 120v1M132.5 82v2M132.5 76v1M133.5 147v8M133.5 118v14M133.5 85v1M133.5 76v1M134.5 126v8M134.5 116v3M134.5 85v1M134.5 77v2M135.5 126v6M135.5 112v5M135.5 86v1M135.5 78v1M136.5 147v8M136.5 130v1M136.5 116v5M136.5 80v1M137.5 222v1M137.5 116v4M137.5 87v2M137.5 81v2M138.5 222v1M138.5 153v2M138.5 146v3M138.5 119v12M138.5 89v2M138.5 81v2M139.5 222v1M139.5 153v2M139.5 142v5M139.5 122v8M139.5 91v2M139.5 81v1M140.5 152v3M140.5 136v11M140.5 126v9M140.5 123v2M140.5 83v2M141.5 222v1M141.5 145v11M141.5 122v14M141.5 95v1M141.5 86v5M142.5 151v7M142.5 138v4M142.5 133v4M142.5 99v1M142.5 88v3M143.5 148v7M143.5 101v1M143.5 90v2M144.5 221v1M144.5 159v3M144.5 103v1M144.5 93v1M145.5 218v3M145.5 180v24M145.5 93v4" stroke="rgb(38, 34, 100)" stroke-width="1.050" fill="none"/><path d="M0.5 213v1M0.5 205v1M1.5 215v2M1.5 203v1M2.5 216v2M2.5 203v1M3.5 214v2M3.5 202v1M4.5 214v1M4.5 202v1M5.5 214v2M5.5 202v1M6.5 216v1M6.5 201v2M7.5 214v1M7.5 201v1M8.5 214v1M8.5 200v2M9.5 213v2M9.5 201v1M10.5 214v4M10.5 197v3M11.5 196v3M12.5 176v2M13.5 187v11M14.5 194v4M14.5 188v4M14.5 184v3M15.5 163v4M16.5 163v5M17.5 164v6M18.5 222v1M18.5 176v4M18.5 160v5M19.5 222v1M19.5 169v8M19.5 165v1M19.5 155v9M20.5 222v1M20.5 177v3M20.5 168v5M20.5 155v5M21.5 160v4M22.5 155v3M23.5 222v1M23.5 166v7M23.5 163v2M23.5 156v6M24.5 172v5M24.5 153v4M25.5 154v2M26.5 222v1M26.5 177v6M27.5 188v2M28.5 187v2M29.5 222v1M29.5 185v3M30.5 222v1M30.5 185v3M31.5 222v1M31.5 180v3M31.5 175v4M31.5 158v6M32.5 222v1M32.5 179v3M33.5 221v1M33.5 186v2M34.5 183v3M35.5 178v4M35.5 159v3M35.5 140v3M36.5 177v2M36.5 156v7M36.5 132v12M37.5 221v1M37.5 177v3M37.5 156v7M37.5 139v5M38.5 220v1M38.5 179v5M39.5 180v5M40.5 178v3M40.5 140v2M40.5 134v5M41.5 178v5M41.5 156v5M41.5 129v10M42.5 221v1M42.5 181v6M42.5 140v5M42.5 131v6M43.5 221v1M43.5 178v7M43.5 137v5M43.5 128v4M44.5 178v3M44.5 143v1M44.5 139v3M44.5 126v4M45.5 221v1M45.5 184v3M45.5 133v4M45.5 129v2M45.5 111v1M45.5 105v1M46.5 181v6M46.5 133v15M46.5 127v4M46.5 111v2M46.5 104v2M47.5 179v2M47.5 153v6M47.5 142v1M47.5 138v2M47.5 126v2M47.5 111v1M47.5 104v1M48.5 222v1M48.5 182v4M48.5 155v7M48.5 150v3M48.5 147v1M48.5 134v12M48.5 111v1M48.5 104v1M49.5 221v1M49.5 187v3M49.5 109v1M49.5 104v1M50.5 221v1M50.5 184v3M50.5 145v2M50.5 111v1M51.5 177v6M51.5 153v2M51.5 111v1M52.5 221v1M52.5 182v5M52.5 109v1M52.5 104v1M53.5 216v4M53.5 205v3M53.5 188v2M53.5 108v1M53.5 104v1M54.5 204v2M54.5 187v3M54.5 108v2M54.5 106v1M54.5 103v1M55.5 221v1M55.5 213v1M55.5 208v4M55.5 183v4M55.5 107v2M55.5 105v1M56.5 182v2M56.5 180v1M56.5 175v3M56.5 108v1M56.5 103v1M57.5 221v1M57.5 208v6M57.5 173v9M57.5 108v1M57.5 103v1M58.5 216v5M58.5 205v3M58.5 186v4M58.5 108v1M58.5 103v1M59.5 221v1M59.5 206v7M59.5 181v3M60.5 182v3M60.5 107v1M60.5 102v1M61.5 222v1M61.5 175v6M61.5 137v5M61.5 101v1M62.5 179v4M62.5 105v1M62.5 101v1M63.5 179v4M63.5 104v2M63.5 101v2M64.5 178v4M64.5 105v1M65.5 221v1M65.5 212v3M65.5 204v2M65.5 185v2M65.5 103v1M65.5 99v1M66.5 214v7M66.5 203v2M66.5 185v3M66.5 103v1M66.5 99v1M67.5 220v1M67.5 212v5M67.5 203v2M67.5 184v2M67.5 103v1M68.5 211v4M68.5 204v3M68.5 183v2M68.5 101v1M68.5 98v1M69.5 221v1M69.5 204v3M69.5 178v4M69.5 156v7M69.5 98v1M70.5 221v1M70.5 176v1M70.5 171v4M70.5 156v7M70.5 100v1M70.5 97v1M71.5 221v1M71.5 209v1M71.5 179v4M71.5 97v3M72.5 215v6M72.5 209v5M72.5 182v5M73.5 214v7M73.5 205v6M73.5 182v4M74.5 177v4M75.5 221v1M75.5 177v2M75.5 160v1M75.5 154v5M75.5 137v10M76.5 221v1M76.5 175v6M76.5 147v7M76.5 136v3M77.5 221v1M77.5 178v2M77.5 139v9M77.5 137v1M78.5 221v1M78.5 178v3M78.5 141v12M79.5 221v1M79.5 174v5M79.5 142v1M79.5 140v1M80.5 221v1M80.5 171v5M80.5 137v13M81.5 221v1M81.5 176v3M81.5 138v6M82.5 221v1M82.5 170v6M82.5 138v4M83.5 172v2M83.5 144v1M83.5 141v2M84.5 208v3M84.5 174v3M85.5 219v2M85.5 214v3M85.5 208v3M85.5 175v1M86.5 171v2M87.5 172v2M88.5 219v2M88.5 216v1M88.5 174v1M89.5 220v1M89.5 170v2M90.5 221v1M90.5 168v2M91.5 221v1M91.5 171v4M92.5 179v3M93.5 221v1M93.5 172v5M93.5 169v1M94.5 221v1M94.5 171v11M95.5 220v1M95.5 184v2M96.5 184v2M97.5 184v3M98.5 219v2M98.5 187v1M99.5 219v2M99.5 188v2M100.5 215v2M100.5 208v2M100.5 190v1M101.5 209v2M101.5 192v1M102.5 169v1M102.5 144v5M102.5 137v6M103.5 221v1M103.5 147v5M104.5 217v4M104.5 189v1M104.5 173v14M104.5 148v3M105.5 221v1M105.5 132v17M106.5 222v1M106.5 111v9M107.5 222v1M107.5 99v2M108.5 107v6M109.5 221v1M109.5 119v14M110.5 221v1M110.5 134v6M110.5 128v5M110.5 126v1M111.5 135v9M111.5 128v5M112.5 119v4M113.5 160v2M113.5 141v7M113.5 128v12M113.5 126v1M114.5 132v2M114.5 125v6M115.5 222v1M115.5 122v4M115.5 67v1M116.5 138v7M116.5 124v4M116.5 65v1M117.5 221v1M117.5 103v14M117.5 70v1M117.5 64v3M118.5 222v1M118.5 102v16M118.5 72v1M118.5 65v1M119.5 222v1M119.5 86v11M119.5 70v2M120.5 222v1M120.5 87v4M120.5 72v2M120.5 67v1M121.5 86v3M121.5 73v1M121.5 67v1M122.5 86v5M122.5 75v1M123.5 96v6M123.5 75v2M123.5 69v1M124.5 221v1M124.5 161v8M124.5 154v3M124.5 141v11M124.5 138v1M124.5 133v3M124.5 118v5M124.5 72v4M125.5 163v6M125.5 146v16M125.5 131v4M125.5 126v1M125.5 108v16M125.5 77v1M126.5 222v1M126.5 169v1M126.5 154v1M126.5 150v3M126.5 127v6M126.5 113v2M126.5 104v8M126.5 77v1M126.5 72v1M127.5 163v6M127.5 145v9M127.5 139v1M127.5 126v12M127.5 122v3M127.5 119v1M127.5 109v9M127.5 78v1M128.5 222v1M128.5 143v10M128.5 140v2M128.5 135v3M128.5 126v8M128.5 121v4M128.5 104v15M128.5 79v1M128.5 75v1M129.5 222v1M129.5 158v10M129.5 152v5M129.5 142v6M129.5 138v3M129.5 130v7M129.5 123v4M129.5 118v4M129.5 81v1M130.5 172v2M130.5 80v2M130.5 74v3M131.5 172v2M131.5 75v1M132.5 222v1M132.5 163v5M132.5 157v2M132.5 143v3M132.5 134v4M132.5 80v2M133.5 222v1M133.5 155v4M133.5 143v4M133.5 132v3M133.5 84v1M133.5 77v1M134.5 222v1M134.5 147v9M134.5 134v8M134.5 119v7M134.5 84v1M135.5 222v1M135.5 150v3M135.5 132v3M135.5 122v4M135.5 117v3M135.5 85v1M136.5 222v1M136.5 155v3M136.5 145v2M136.5 131v4M136.5 121v9M136.5 86v1M136.5 81v1M137.5 147v16M137.5 133v1M137.5 120v11M137.5 83v4M138.5 155v1M138.5 142v4M138.5 131v4M138.5 88v1M138.5 83v1M139.5 221v1M139.5 155v3M139.5 130v12M139.5 88v3M139.5 82v1M140.5 221v1M140.5 168v1M140.5 164v1M140.5 160v3M140.5 155v4M140.5 93v2M140.5 88v2M140.5 85v2M141.5 221v1M141.5 156v4M141.5 136v9M141.5 91v4M142.5 221v1M142.5 194v1M142.5 158v4M142.5 137v1M142.5 98v1M142.5 91v1M143.5 221v1M143.5 201v1M143.5 155v13M143.5 100v1M143.5 92v1M144.5 176v24M144.5 162v10M144.5 102v1M144.5 94v1M145.5 204v14M145.5 105v1M145.5 97v1" stroke="rgb(49, 43, 126)" stroke-width="1.050" fill="none"/><path d="M0.5 212v1M0.5 206v1M1.5 214v1M1.5 204v1M2.5 213v3M2.5 204v1M3.5 213v1M3.5 203v1M4.5 213v1M4.5 203v1M5.5 213v1M5.5 203v1M6.5 214v2M6.5 203v1M7.5 213v1M7.5 202v1M8.5 213v1M8.5 202v1M9.5 212v1M9.5 202v1M10.5 212v2M10.5 200v2M11.5 214v7M11.5 199v2M12.5 221v1M12.5 184v6M12.5 178v5M13.5 221v1M13.5 198v1M14.5 221v1M14.5 198v2M15.5 222v1M15.5 167v5M16.5 222v1M16.5 172v1M16.5 168v3M17.5 222v1M17.5 178v1M17.5 170v7M18.5 180v4M18.5 165v11M19.5 177v3M19.5 166v3M19.5 164v1M20.5 180v4M20.5 160v8M21.5 222v1M21.5 164v17M22.5 222v1M22.5 168v4M22.5 163v1M22.5 158v4M23.5 173v6M23.5 165v1M23.5 162v1M24.5 222v1M24.5 177v4M24.5 168v4M24.5 157v4M25.5 156v4M26.5 183v6M27.5 221v1M27.5 190v1M28.5 221v1M28.5 189v2M29.5 188v2M30.5 188v2M31.5 183v3M31.5 179v1M32.5 182v2M33.5 188v3M34.5 220v1M34.5 186v3M35.5 221v1M35.5 182v3M36.5 221v1M36.5 179v4M37.5 180v4M38.5 218v2M38.5 184v5M39.5 217v4M39.5 185v5M40.5 220v1M40.5 181v7M41.5 219v2M41.5 183v5M42.5 187v2M42.5 137v3M43.5 185v2M43.5 132v5M44.5 221v1M44.5 181v3M44.5 130v9M45.5 187v1M45.5 131v2M45.5 109v2M45.5 106v1M46.5 221v1M46.5 187v2M46.5 131v2M46.5 108v3M46.5 106v1M47.5 181v4M47.5 143v10M47.5 140v2M47.5 128v10M47.5 105v1M48.5 186v2M48.5 153v2M48.5 148v2M48.5 146v1M48.5 110v1M48.5 105v1M49.5 190v2M49.5 108v1M49.5 105v2M50.5 187v2M50.5 110v1M50.5 104v1M51.5 221v1M51.5 183v5M51.5 108v3M51.5 103v1M52.5 208v7M52.5 187v2M52.5 105v4M53.5 201v4M53.5 190v2M53.5 105v3M54.5 202v2M54.5 190v2M54.5 107v1M54.5 104v2M55.5 214v2M55.5 212v1M55.5 206v2M55.5 187v3M55.5 106v1M56.5 221v1M56.5 207v5M56.5 184v5M56.5 181v1M56.5 178v2M56.5 107v1M56.5 104v1M57.5 214v5M57.5 205v3M57.5 182v4M57.5 107v1M58.5 203v2M58.5 190v2M58.5 106v2M59.5 220v1M59.5 213v2M59.5 204v2M59.5 184v3M59.5 107v1M59.5 102v2M60.5 221v1M60.5 185v3M60.5 103v4M61.5 181v4M61.5 105v1M62.5 221v1M62.5 183v3M62.5 102v3M63.5 221v1M63.5 207v5M63.5 183v2M63.5 103v1M64.5 221v1M64.5 207v9M64.5 182v3M64.5 104v1M64.5 99v2M65.5 215v2M65.5 202v2M65.5 187v3M65.5 100v3M66.5 200v3M66.5 188v2M66.5 100v3M67.5 217v3M67.5 200v3M67.5 186v3M67.5 102v1M67.5 98v1M68.5 215v6M68.5 200v4M68.5 185v3M69.5 207v11M69.5 201v3M69.5 182v4M70.5 220v1M70.5 213v1M70.5 204v7M70.5 177v7M70.5 175v1M70.5 98v2M71.5 219v2M71.5 210v8M71.5 204v5M71.5 183v3M72.5 214v1M72.5 204v5M72.5 187v1M73.5 204v1M73.5 186v3M74.5 217v4M74.5 208v6M74.5 206v1M74.5 181v5M75.5 179v4M76.5 181v2M76.5 139v8M77.5 220v1M77.5 180v3M78.5 181v3M79.5 208v7M79.5 179v4M80.5 176v5M81.5 179v4M82.5 207v6M82.5 176v4M83.5 221v1M83.5 174v4M84.5 211v10M84.5 203v5M84.5 177v2M85.5 217v2M85.5 211v3M85.5 202v6M85.5 176v1M86.5 220v1M86.5 209v1M86.5 173v2M87.5 220v1M87.5 174v1M88.5 217v2M88.5 208v8M88.5 175v1M89.5 217v3M89.5 172v3M90.5 170v5M91.5 175v5M92.5 213v8M92.5 182v1M93.5 177v6M94.5 182v3M95.5 216v4M95.5 186v1M96.5 216v5M96.5 186v1M97.5 220v1M97.5 187v1M98.5 209v10M98.5 188v1M99.5 210v9M99.5 190v1M100.5 207v1M100.5 191v1M101.5 207v2M101.5 193v1M102.5 170v4M102.5 166v3M102.5 149v6M102.5 143v1M103.5 152v15M104.5 214v3M104.5 190v4M104.5 187v2M105.5 149v17M106.5 120v11M107.5 101v8M108.5 221v1M108.5 113v7M109.5 220v1M109.5 161v3M109.5 157v3M109.5 133v23M110.5 218v3M110.5 214v1M110.5 161v2M110.5 158v2M110.5 154v2M110.5 140v13M110.5 133v1M111.5 221v1M111.5 167v1M111.5 154v9M111.5 144v4M111.5 133v2M112.5 221v1M112.5 123v40M113.5 221v1M113.5 162v2M113.5 148v12M114.5 157v6M114.5 134v18M114.5 131v1M115.5 221v1M115.5 162v4M115.5 159v2M115.5 157v1M115.5 146v9M115.5 140v5M115.5 137v2M115.5 126v3M115.5 65v2M116.5 221v1M116.5 156v16M116.5 145v8M116.5 128v10M116.5 66v3M117.5 163v1M117.5 151v11M117.5 146v4M117.5 132v6M117.5 117v6M117.5 67v3M118.5 118v5M118.5 71v1M119.5 97v5M119.5 67v3M120.5 91v9M120.5 71v1M120.5 68v1M121.5 222v1M121.5 89v10M121.5 71v2M121.5 68v2M122.5 222v1M122.5 91v6M122.5 74v1M122.5 70v1M123.5 221v1M123.5 153v13M123.5 129v1M123.5 116v1M123.5 102v9M124.5 220v1M124.5 169v8M124.5 139v2M124.5 136v2M125.5 221v1M125.5 169v4M125.5 162v1M125.5 135v11M125.5 75v2M125.5 73v1M126.5 170v3M126.5 155v14M126.5 153v1M126.5 146v4M126.5 133v3M126.5 115v12M126.5 112v1M126.5 73v4M127.5 222v1M127.5 169v3M127.5 154v9M127.5 140v5M127.5 138v1M127.5 74v4M128.5 165v2M128.5 158v2M128.5 153v3M128.5 142v1M128.5 138v2M128.5 134v1M128.5 76v3M129.5 168v5M129.5 157v1M129.5 141v1M129.5 137v1M129.5 80v1M129.5 73v1M130.5 208v1M130.5 174v2M130.5 77v3M131.5 221v1M131.5 206v6M131.5 174v3M131.5 81v2M132.5 168v6M132.5 159v4M132.5 138v5M132.5 79v1M132.5 77v1M133.5 159v17M133.5 135v8M133.5 83v1M133.5 78v2M134.5 156v15M134.5 142v5M134.5 83v1M134.5 79v1M135.5 157v12M135.5 153v3M135.5 147v3M135.5 135v3M135.5 120v2M135.5 84v1M135.5 79v1M136.5 167v1M136.5 158v4M136.5 141v4M136.5 135v4M136.5 84v2M136.5 82v1M137.5 221v1M137.5 163v10M137.5 145v2M137.5 134v4M137.5 131v2M138.5 221v1M138.5 156v3M138.5 135v7M138.5 84v4M139.5 158v6M139.5 85v3M139.5 83v1M140.5 169v13M140.5 165v3M140.5 163v1M140.5 159v1M140.5 90v3M140.5 87v1M141.5 160v3M142.5 195v8M142.5 182v12M142.5 174v7M142.5 169v1M142.5 162v4M142.5 97v1M142.5 92v1M143.5 220v1M143.5 202v3M143.5 194v7M143.5 191v1M143.5 177v12M143.5 168v4M143.5 99v1M144.5 218v3M144.5 200v4M144.5 172v4M144.5 101v1M144.5 95v1M145.5 104v1M145.5 98v2" stroke="rgb(59, 53, 154)" stroke-width="1.050" fill="none"/><path d="M0.5 211v1M0.5 207v2M1.5 213v1M2.5 212v1M2.5 205v1M3.5 212v1M3.5 204v1M4.5 212v1M4.5 204v1M5.5 211v2M5.5 204v1M6.5 213v1M6.5 204v1M7.5 211v2M7.5 203v1M8.5 212v1M8.5 203v1M9.5 210v2M9.5 203v1M10.5 211v1M10.5 202v1M11.5 212v2M11.5 201v1M12.5 190v6M12.5 183v1M13.5 220v1M13.5 214v2M13.5 199v3M15.5 195v2M15.5 172v4M16.5 193v4M16.5 173v12M16.5 171v1M17.5 194v3M17.5 179v5M17.5 177v1M18.5 221v1M18.5 184v14M19.5 221v1M19.5 180v5M20.5 221v1M20.5 184v2M21.5 181v3M22.5 172v8M22.5 164v4M22.5 162v1M23.5 179v7M24.5 181v6M24.5 161v7M25.5 222v1M25.5 179v2M25.5 160v18M26.5 221v1M26.5 189v2M27.5 191v1M28.5 191v1M29.5 190v2M30.5 221v1M30.5 190v2M31.5 186v3M32.5 221v1M32.5 184v3M33.5 216v5M33.5 191v4M34.5 218v2M34.5 189v2M35.5 185v3M36.5 183v4M37.5 184v6M38.5 216v2M38.5 189v2M39.5 213v4M39.5 190v2M40.5 217v3M40.5 188v2M41.5 216v3M41.5 188v2M42.5 218v3M42.5 189v2M43.5 219v2M43.5 187v3M44.5 184v4M45.5 220v1M45.5 188v2M45.5 107v2M46.5 189v2M46.5 107v1M47.5 221v1M47.5 185v3M47.5 110v1M47.5 106v1M48.5 221v1M48.5 188v2M48.5 106v4M49.5 219v2M49.5 213v1M49.5 209v2M49.5 206v2M49.5 192v1M49.5 107v1M50.5 217v4M50.5 211v5M50.5 189v2M50.5 108v2M50.5 105v2M51.5 220v1M51.5 188v2M51.5 106v2M51.5 104v1M52.5 215v6M52.5 205v3M52.5 189v2M53.5 199v2M53.5 192v4M54.5 197v5M54.5 192v2M55.5 216v5M55.5 204v2M55.5 190v2M56.5 212v4M56.5 205v2M56.5 189v2M56.5 105v2M57.5 219v2M57.5 203v2M57.5 186v3M57.5 104v1M58.5 200v3M58.5 192v2M58.5 104v2M59.5 215v5M59.5 203v1M59.5 187v3M59.5 104v3M60.5 206v8M60.5 188v2M61.5 221v1M61.5 207v5M61.5 185v3M61.5 102v3M62.5 205v8M62.5 186v3M63.5 212v2M63.5 205v2M63.5 185v2M64.5 216v5M64.5 205v2M64.5 185v3M64.5 101v3M65.5 217v4M65.5 198v4M65.5 190v4M66.5 198v2M66.5 190v4M67.5 198v2M67.5 189v3M67.5 101v1M67.5 99v1M68.5 197v3M68.5 192v1M68.5 188v3M69.5 218v3M69.5 198v3M69.5 186v3M70.5 214v6M70.5 211v2M70.5 202v2M70.5 184v3M71.5 218v1M71.5 201v3M71.5 186v2M72.5 201v3M72.5 188v3M73.5 199v5M73.5 189v4M74.5 214v3M74.5 207v1M74.5 203v3M74.5 186v5M75.5 220v1M75.5 183v2M76.5 220v1M76.5 211v8M76.5 183v3M77.5 212v8M77.5 183v2M78.5 207v14M78.5 184v3M79.5 215v6M79.5 205v3M79.5 183v3M80.5 220v1M80.5 217v2M80.5 205v10M80.5 181v3M81.5 208v13M81.5 183v2M82.5 213v8M82.5 204v3M82.5 180v2M83.5 206v9M83.5 178v2M84.5 200v3M84.5 190v3M84.5 179v1M85.5 191v11M85.5 177v1M86.5 210v10M86.5 206v3M86.5 175v1M87.5 218v2M87.5 206v5M87.5 175v1M88.5 198v10M88.5 176v1M89.5 199v18M89.5 197v1M89.5 175v2M90.5 220v1M90.5 175v3M91.5 214v7M91.5 180v2M92.5 200v13M92.5 183v1M93.5 183v2M94.5 220v1M94.5 185v1M95.5 211v5M95.5 187v1M96.5 205v11M96.5 187v1M97.5 213v7M97.5 209v3M97.5 188v1M98.5 207v2M98.5 189v1M99.5 208v2M99.5 191v1M100.5 206v1M101.5 206v1M101.5 194v1M102.5 221v1M102.5 174v3M102.5 155v11M103.5 218v3M103.5 175v3M103.5 167v5M104.5 212v2M104.5 194v1M105.5 216v5M105.5 166v5M106.5 221v1M106.5 144v1M106.5 131v12M107.5 221v1M107.5 120v1M107.5 109v10M108.5 220v1M108.5 160v3M108.5 148v1M108.5 120v21M109.5 211v9M109.5 164v4M109.5 160v1M109.5 156v1M110.5 215v3M110.5 208v6M110.5 163v7M110.5 160v1M110.5 156v2M110.5 153v1M111.5 220v1M111.5 217v2M111.5 213v3M111.5 168v4M111.5 163v4M111.5 148v6M112.5 220v1M112.5 209v7M112.5 163v3M113.5 215v1M113.5 171v4M113.5 164v5M114.5 221v1M114.5 163v4M114.5 152v5M115.5 166v6M115.5 161v1M115.5 158v1M115.5 155v2M115.5 145v1M115.5 139v1M115.5 129v8M116.5 172v3M116.5 153v3M117.5 215v6M117.5 210v4M117.5 164v8M117.5 162v1M117.5 150v1M117.5 138v8M117.5 123v9M118.5 221v1M118.5 159v2M118.5 123v4M118.5 70v1M118.5 66v2M119.5 221v1M119.5 102v7M120.5 221v1M120.5 116v8M120.5 100v12M120.5 69v2M121.5 99v4M121.5 70v1M122.5 97v9M122.5 73v1M122.5 71v1M123.5 166v5M123.5 143v10M123.5 130v6M123.5 117v12M123.5 111v5M123.5 70v5M124.5 204v16M124.5 202v1M124.5 177v15M125.5 173v3M125.5 74v1M126.5 221v1M126.5 173v3M126.5 136v10M127.5 172v1M128.5 167v5M128.5 160v5M128.5 156v2M129.5 221v1M129.5 173v2M129.5 78v2M129.5 74v1M130.5 221v1M130.5 209v6M130.5 205v3M130.5 176v3M131.5 212v3M131.5 203v3M131.5 177v1M131.5 80v1M131.5 76v1M132.5 221v1M132.5 174v3M132.5 78v1M133.5 221v1M133.5 176v1M133.5 80v2M134.5 171v3M134.5 80v3M135.5 221v1M135.5 169v4M135.5 156v1M135.5 144v3M135.5 138v3M135.5 80v4M136.5 221v1M136.5 168v8M136.5 162v5M136.5 139v2M136.5 83v1M137.5 173v5M137.5 138v7M138.5 172v2M138.5 159v8M139.5 218v3M139.5 197v4M139.5 180v1M139.5 164v15M139.5 84v1M140.5 214v7M140.5 191v11M140.5 182v3M141.5 220v1M141.5 194v10M141.5 191v1M141.5 163v23M142.5 218v3M142.5 203v4M142.5 181v1M142.5 170v4M142.5 166v3M142.5 93v4M143.5 214v6M143.5 205v5M143.5 192v2M143.5 189v2M143.5 172v5M143.5 93v6M144.5 215v3M144.5 204v4M144.5 96v5M145.5 100v4" stroke="rgb(72, 64, 186)" stroke-width="1.050" fill="none"/><path d="M0.5 209v2M1.5 212v1M1.5 205v1M2.5 211v1M2.5 206v1M3.5 210v2M3.5 205v3M4.5 205v7M5.5 210v1M6.5 211v2M7.5 204v7M8.5 211v1M8.5 204v1M9.5 209v1M9.5 204v1M10.5 209v2M10.5 203v2M11.5 211v1M11.5 202v1M12.5 219v2M12.5 196v4M13.5 216v4M13.5 210v4M13.5 202v2M14.5 220v1M14.5 209v6M14.5 200v1M15.5 221v1M15.5 197v3M15.5 176v19M16.5 197v2M16.5 185v8M17.5 221v1M17.5 209v1M17.5 197v3M17.5 184v10M18.5 198v2M19.5 185v7M20.5 186v6M21.5 221v1M21.5 184v5M22.5 221v1M22.5 180v4M23.5 221v1M23.5 186v4M24.5 221v1M24.5 187v3M25.5 181v6M25.5 178v1M26.5 191v1M27.5 216v5M27.5 192v3M28.5 220v1M28.5 192v2M29.5 221v1M29.5 192v1M30.5 192v1M31.5 221v1M31.5 189v1M32.5 187v5M33.5 201v15M33.5 195v5M34.5 215v3M34.5 206v3M34.5 191v5M35.5 219v2M35.5 188v2M36.5 187v3M37.5 218v3M37.5 190v4M38.5 213v3M38.5 191v1M39.5 210v3M39.5 192v2M40.5 214v3M40.5 190v3M41.5 213v3M41.5 190v2M42.5 211v7M42.5 191v4M43.5 216v3M43.5 190v2M44.5 218v3M44.5 188v3M45.5 216v4M45.5 212v3M45.5 190v2M46.5 219v2M46.5 191v2M47.5 188v1M47.5 107v3M48.5 190v3M49.5 214v5M49.5 211v2M49.5 208v1M49.5 204v2M49.5 193v3M50.5 216v1M50.5 206v5M50.5 191v2M50.5 107v1M51.5 207v13M51.5 190v2M51.5 105v1M52.5 203v2M52.5 191v3M53.5 196v3M54.5 194v3M55.5 202v2M55.5 192v3M56.5 216v5M56.5 203v2M56.5 191v1M57.5 201v2M57.5 189v2M57.5 105v2M58.5 194v6M59.5 200v3M59.5 190v1M60.5 214v7M60.5 203v3M60.5 190v2M61.5 212v4M61.5 204v3M61.5 188v3M62.5 220v1M62.5 213v3M62.5 204v1M62.5 189v4M63.5 214v7M63.5 203v2M63.5 187v3M64.5 202v3M64.5 188v2M65.5 194v4M66.5 194v4M67.5 192v6M67.5 100v1M68.5 193v4M68.5 191v1M69.5 189v9M70.5 199v3M70.5 187v5M71.5 198v3M71.5 188v3M72.5 196v5M72.5 191v3M73.5 193v6M74.5 199v4M74.5 191v3M75.5 206v14M75.5 185v4M76.5 219v1M76.5 208v3M76.5 186v2M77.5 205v7M77.5 185v5M78.5 204v3M78.5 187v4M79.5 203v2M79.5 186v3M80.5 219v1M80.5 215v2M80.5 202v3M80.5 184v3M81.5 203v5M81.5 185v4M82.5 200v4M82.5 182v9M83.5 215v6M83.5 202v4M83.5 180v2M84.5 193v7M84.5 188v2M84.5 183v2M84.5 180v2M85.5 189v2M85.5 178v1M86.5 200v6M86.5 192v4M86.5 176v2M87.5 211v7M87.5 193v13M87.5 176v1M88.5 193v5M88.5 177v1M89.5 198v1M89.5 195v2M89.5 177v1M90.5 197v23M90.5 178v2M91.5 197v17M91.5 182v1M92.5 198v2M92.5 184v1M93.5 219v2M93.5 185v1M94.5 219v1M94.5 209v1M94.5 186v1M95.5 203v8M95.5 188v1M96.5 203v2M96.5 188v1M97.5 212v1M97.5 204v5M97.5 189v1M98.5 205v2M99.5 205v3M99.5 192v1M100.5 205v1M100.5 192v1M101.5 205v1M101.5 195v1M102.5 177v12M103.5 215v3M103.5 178v15M103.5 172v3M104.5 211v1M104.5 195v1M105.5 213v3M105.5 171v25M106.5 154v12M106.5 145v5M106.5 143v1M107.5 138v1M107.5 121v16M107.5 119v1M108.5 213v7M108.5 163v7M108.5 149v11M108.5 141v7M109.5 208v3M109.5 194v6M109.5 168v8M110.5 202v6M110.5 170v6M111.5 219v1M111.5 216v1M111.5 207v6M111.5 172v3M112.5 216v4M112.5 203v6M112.5 166v4M113.5 216v5M113.5 209v6M113.5 175v4M113.5 169v2M114.5 219v2M114.5 209v9M114.5 177v1M114.5 167v9M115.5 219v2M115.5 208v10M115.5 172v5M116.5 206v15M116.5 175v16M117.5 214v1M117.5 205v5M117.5 172v17M118.5 186v1M118.5 161v17M118.5 127v32M118.5 68v2M119.5 220v1M119.5 151v18M119.5 148v1M119.5 109v19M120.5 149v27M120.5 145v2M120.5 140v2M120.5 133v3M120.5 124v8M120.5 112v4M121.5 221v1M121.5 157v1M121.5 154v2M121.5 129v1M121.5 122v4M121.5 117v1M121.5 103v6M122.5 221v1M122.5 168v1M122.5 165v2M122.5 151v13M122.5 106v4M122.5 72v1M123.5 209v12M123.5 171v20M123.5 136v7M124.5 203v1M124.5 192v10M125.5 207v14M125.5 187v3M125.5 182v1M125.5 176v4M126.5 176v5M127.5 221v1M127.5 173v3M128.5 221v1M128.5 172v3M129.5 207v2M129.5 175v3M129.5 75v3M130.5 220v1M130.5 215v4M130.5 201v4M130.5 179v3M131.5 215v6M131.5 196v7M131.5 178v3M131.5 77v3M132.5 207v8M132.5 177v3M133.5 208v6M133.5 177v2M133.5 82v1M134.5 221v1M134.5 209v1M134.5 174v2M135.5 210v3M135.5 207v1M135.5 173v3M135.5 141v3M136.5 207v3M136.5 176v2M137.5 219v2M137.5 215v3M137.5 212v2M137.5 208v2M137.5 178v3M138.5 218v3M138.5 213v4M138.5 211v1M138.5 208v1M138.5 174v6M138.5 167v5M139.5 201v17M139.5 190v7M139.5 181v6M139.5 179v1M140.5 202v12M140.5 185v6M141.5 217v3M141.5 213v1M141.5 204v8M141.5 192v2M141.5 186v5M142.5 207v11M143.5 210v4M144.5 208v7" stroke="rgb(86, 77, 222)" stroke-width="1.050" fill="none"/><path d="M1.5 211v1M1.5 206v1M2.5 207v4M3.5 208v2M5.5 208v2M5.5 205v2M6.5 205v6M8.5 210v1M8.5 205v1M9.5 205v4M10.5 205v4M11.5 203v8M12.5 212v7M12.5 200v2M13.5 208v2M13.5 204v2M14.5 215v5M14.5 208v1M14.5 201v2M15.5 210v5M15.5 200v1M16.5 221v1M16.5 209v5M16.5 199v2M17.5 210v5M17.5 205v4M17.5 200v3M18.5 220v1M18.5 206v9M18.5 200v1M19.5 208v13M19.5 206v1M19.5 202v2M19.5 192v7M20.5 220v1M20.5 208v3M20.5 192v4M21.5 189v5M22.5 184v7M23.5 220v1M23.5 190v4M24.5 190v2M25.5 221v1M25.5 187v3M26.5 219v2M26.5 192v1M27.5 208v8M27.5 203v4M27.5 195v1M28.5 214v6M28.5 207v3M28.5 194v1M29.5 220v1M29.5 193v2M30.5 220v1M30.5 193v3M31.5 190v4M32.5 220v1M32.5 192v2M33.5 200v1M34.5 209v6M34.5 196v10M35.5 216v3M35.5 190v4M36.5 217v4M36.5 190v3M37.5 215v3M37.5 194v3M38.5 205v8M38.5 192v4M39.5 202v8M39.5 194v4M40.5 210v4M40.5 193v4M41.5 209v4M41.5 204v3M41.5 192v4M42.5 204v7M42.5 195v2M43.5 209v7M43.5 192v4M44.5 213v5M44.5 191v2M45.5 215v1M45.5 205v7M45.5 199v1M45.5 192v5M46.5 214v5M46.5 208v1M46.5 193v1M47.5 212v9M47.5 189v3M48.5 208v13M48.5 193v1M49.5 196v8M50.5 202v4M50.5 193v3M51.5 205v2M51.5 192v3M52.5 194v9M55.5 195v7M56.5 200v3M56.5 192v3M57.5 198v3M57.5 191v3M59.5 191v9M60.5 192v11M61.5 216v5M61.5 200v4M61.5 197v2M61.5 191v5M62.5 216v4M62.5 193v11M63.5 199v4M63.5 190v8M64.5 196v6M64.5 193v2M64.5 190v2M70.5 192v7M71.5 191v7M72.5 194v2M74.5 194v5M75.5 200v6M75.5 189v8M76.5 199v9M76.5 188v4M77.5 202v3M77.5 190v2M78.5 201v3M78.5 191v3M79.5 197v6M79.5 189v7M80.5 200v2M80.5 187v3M81.5 199v4M81.5 197v1M81.5 189v7M82.5 197v3M82.5 191v4M83.5 182v20M84.5 185v3M84.5 182v1M85.5 188v1M85.5 179v1M86.5 196v4M86.5 191v1M86.5 178v1M87.5 191v2M87.5 177v1M88.5 191v2M88.5 178v2M89.5 194v1M89.5 178v2M90.5 194v3M90.5 180v3M91.5 196v1M91.5 183v1M92.5 196v2M92.5 185v2M93.5 202v17M93.5 186v2M94.5 210v9M94.5 202v7M94.5 187v1M95.5 201v2M95.5 189v1M96.5 202v1M96.5 189v2M97.5 203v1M97.5 190v1M98.5 204v1M98.5 190v1M99.5 204v1M99.5 193v1M100.5 193v1M101.5 204v1M101.5 196v1M102.5 211v10M102.5 189v4M103.5 210v5M103.5 193v2M104.5 210v1M104.5 196v1M105.5 211v2M105.5 196v2M106.5 219v2M106.5 212v1M106.5 194v3M106.5 166v8M106.5 150v4M107.5 217v4M107.5 171v5M107.5 168v1M107.5 139v28M107.5 137v1M108.5 209v4M108.5 193v6M108.5 183v1M108.5 177v1M108.5 170v6M109.5 200v8M109.5 176v18M110.5 188v14M110.5 176v11M111.5 200v7M111.5 197v1M111.5 193v2M111.5 175v5M112.5 197v6M112.5 170v7M113.5 197v12M113.5 179v6M114.5 218v1M114.5 206v3M114.5 178v11M114.5 176v1M115.5 218v1M115.5 204v4M115.5 177v7M116.5 200v6M116.5 191v6M117.5 189v16M118.5 206v15M118.5 187v6M118.5 178v8M119.5 208v12M119.5 185v6M119.5 169v7M119.5 149v2M119.5 128v20M120.5 213v8M120.5 176v17M120.5 147v2M120.5 142v3M120.5 136v4M120.5 132v1M121.5 220v1M121.5 158v15M121.5 156v1M121.5 147v7M121.5 130v7M121.5 126v3M121.5 118v4M121.5 109v8M122.5 220v1M122.5 182v1M122.5 178v3M122.5 169v8M122.5 167v1M122.5 164v1M122.5 110v41M123.5 200v9M123.5 191v5M125.5 201v6M125.5 199v1M125.5 190v8M125.5 183v4M125.5 180v2M126.5 208v13M126.5 192v1M126.5 181v10M127.5 205v7M127.5 176v2M128.5 220v1M128.5 201v16M128.5 175v16M129.5 219v2M129.5 209v7M129.5 198v9M129.5 182v11M129.5 178v3M130.5 219v1M130.5 182v19M131.5 185v11M131.5 181v3M132.5 215v6M132.5 202v5M132.5 180v10M133.5 214v7M133.5 202v6M133.5 179v3M134.5 210v5M134.5 204v5M134.5 176v5M135.5 213v8M135.5 208v2M135.5 204v3M135.5 176v3M136.5 219v2M136.5 210v7M136.5 202v5M136.5 178v5M137.5 218v1M137.5 214v1M137.5 210v2M137.5 200v8M137.5 192v7M137.5 181v4M138.5 217v1M138.5 212v1M138.5 209v2M138.5 195v13M138.5 180v11M139.5 187v3M141.5 214v3M141.5 212v1" stroke="rgb(112, 102, 246)" stroke-width="1.050" fill="none"/><path d="M1.5 207v4M5.5 207v1M8.5 206v4M12.5 209v3M12.5 202v2M13.5 206v2M14.5 203v5M15.5 215v6M15.5 207v3M15.5 201v3M16.5 220v1M16.5 214v4M16.5 207v2M16.5 201v3M17.5 215v6M17.5 203v2M18.5 215v5M18.5 201v5M19.5 207v1M19.5 204v2M19.5 199v3M20.5 211v9M20.5 196v12M21.5 220v1M21.5 218v1M21.5 205v8M21.5 194v3M22.5 218v3M22.5 205v4M22.5 191v4M23.5 216v4M23.5 205v5M23.5 194v3M24.5 219v2M24.5 192v3M25.5 190v3M26.5 211v8M26.5 203v7M26.5 193v2M27.5 207v1M27.5 196v7M28.5 210v4M28.5 195v12M29.5 212v8M29.5 195v16M30.5 216v4M30.5 196v15M31.5 215v6M31.5 194v4M32.5 215v5M32.5 194v4M35.5 194v22M36.5 216v1M36.5 198v7M36.5 193v4M37.5 205v10M37.5 197v6M38.5 196v9M39.5 198v4M40.5 197v13M41.5 207v2M41.5 196v8M42.5 197v7M43.5 202v7M43.5 196v5M44.5 193v20M45.5 200v5M45.5 197v2M46.5 209v5M46.5 200v8M46.5 194v5M47.5 205v7M47.5 192v3M48.5 203v5M48.5 194v5M50.5 196v6M51.5 200v5M51.5 195v2M56.5 195v5M57.5 194v4M61.5 199v1M61.5 196v1M63.5 198v1M64.5 195v1M64.5 192v1M75.5 197v3M76.5 192v7M77.5 192v10M78.5 194v7M79.5 196v1M80.5 190v10M81.5 198v1M81.5 196v1M82.5 195v2M85.5 187v1M85.5 180v3M86.5 190v1M86.5 179v1M87.5 189v2M87.5 178v1M88.5 190v1M89.5 192v2M89.5 180v2M90.5 192v2M90.5 183v1M91.5 194v2M91.5 184v2M92.5 194v2M92.5 187v2M93.5 198v4M93.5 188v1M94.5 199v3M94.5 188v1M95.5 199v2M95.5 190v2M96.5 201v1M96.5 191v1M97.5 201v2M97.5 191v1M98.5 191v2M99.5 203v1M99.5 194v2M100.5 203v2M100.5 194v1M101.5 203v1M101.5 197v1M102.5 208v3M102.5 193v3M103.5 208v2M103.5 195v1M104.5 208v2M104.5 197v1M105.5 209v2M105.5 198v1M106.5 213v6M106.5 209v3M106.5 197v1M106.5 174v20M107.5 212v5M107.5 190v7M107.5 186v3M107.5 176v6M107.5 169v2M107.5 167v1M108.5 199v10M108.5 184v9M108.5 178v5M108.5 176v1M110.5 187v1M111.5 198v2M111.5 195v2M111.5 180v13M112.5 177v20M113.5 185v12M114.5 189v17M115.5 184v20M116.5 197v3M118.5 193v13M119.5 191v17M119.5 176v9M120.5 204v9M120.5 193v6M121.5 207v13M121.5 188v1M121.5 173v14M121.5 137v10M122.5 208v12M122.5 183v14M122.5 181v1M122.5 177v1M123.5 196v4M125.5 200v1M125.5 198v1M126.5 193v15M126.5 191v1M127.5 212v9M127.5 198v7M127.5 178v17M128.5 217v3M128.5 191v10M129.5 216v3M129.5 193v5M129.5 181v1M131.5 184v1M132.5 190v12M133.5 182v20M134.5 215v6M134.5 197v7M134.5 181v4M135.5 199v5M135.5 179v2M136.5 217v2M136.5 183v19M137.5 199v1M137.5 185v7M138.5 191v4" stroke="rgb(154, 147, 249)" stroke-width="1.050" fill="none"/><path d="M12.5 204v5M15.5 204v3M16.5 218v2M16.5 204v3M21.5 219v1M21.5 213v5M21.5 197v8M22.5 209v9M22.5 195v10M23.5 210v6M23.5 197v8M24.5 195v24M25.5 193v28M26.5 210v1M26.5 195v8M29.5 211v1M30.5 211v5M31.5 198v17M32.5 198v17M36.5 205v11M36.5 197v1M37.5 203v2M43.5 201v1M46.5 199v1M47.5 195v10M48.5 199v4M51.5 197v3M85.5 183v4M86.5 180v10M87.5 179v10M88.5 180v10M89.5 182v10M90.5 184v8M91.5 186v8M92.5 189v5M93.5 189v9M94.5 189v10M95.5 192v7M96.5 192v9M97.5 192v9M98.5 193v11M99.5 196v7M100.5 195v8M101.5 198v5M102.5 196v12M103.5 196v12M104.5 198v10M105.5 199v10M106.5 198v11M107.5 197v15M107.5 189v1M107.5 182v4M120.5 199v5M121.5 189v18M121.5 187v1M122.5 197v11M127.5 195v3M134.5 185v12M135.5 181v18" stroke="rgb(214, 210, 253)" stroke-width="1.050" fill="none"/></g><path d="M0 224.20H436.4" stroke="#9a7a28" stroke-width=".8" opacity=".62"/><path d="M0 196.17H436.4" stroke="#9a7a28" stroke-width=".8" opacity=".62"/><path d="M0 168.14H436.4" stroke="#9a7a28" stroke-width=".8" opacity=".62"/><path d="M0 140.11H436.4" stroke="#9a7a28" stroke-width=".8" opacity=".62"/><path d="M0 112.08H436.4" stroke="#9a7a28" stroke-width=".8" opacity=".62"/><path d="M0 84.05H436.4" stroke="#9a7a28" stroke-width=".8" opacity=".62"/><path d="M0 56.02H436.4" stroke="#9a7a28" stroke-width=".8" opacity=".62"/><path d="M0 27.99H436.4" stroke="#9a7a28" stroke-width=".8" opacity=".62"/><path d="M0 -0.04H436.4" stroke="#9a7a28" stroke-width=".8" opacity=".62"/><path d="M0 224.20h7" stroke="#8a6c24" stroke-width=".7" opacity=".45"/><path d="M0 217.19h7" stroke="#8a6c24" stroke-width=".7" opacity=".45"/><path d="M0 210.19h7" stroke="#8a6c24" stroke-width=".7" opacity=".45"/><path d="M0 203.18h7" stroke="#8a6c24" stroke-width=".7" opacity=".45"/><path d="M0 196.17h7" stroke="#8a6c24" stroke-width=".7" opacity=".45"/><path d="M0 189.17h7" stroke="#8a6c24" stroke-width=".7" opacity=".45"/><path d="M0 182.16h7" stroke="#8a6c24" stroke-width=".7" opacity=".45"/><path d="M0 175.15h7" stroke="#8a6c24" stroke-width=".7" opacity=".45"/><path d="M0 168.14h7" stroke="#8a6c24" stroke-width=".7" opacity=".45"/><path d="M0 161.14h7" stroke="#8a6c24" stroke-width=".7" opacity=".45"/><path d="M0 154.13h7" stroke="#8a6c24" stroke-width=".7" opacity=".45"/><path d="M0 147.12h7" stroke="#8a6c24" stroke-width=".7" opacity=".45"/><path d="M0 140.12h7" stroke="#8a6c24" stroke-width=".7" opacity=".45"/><path d="M0 133.11h7" stroke="#8a6c24" stroke-width=".7" opacity=".45"/><path d="M0 126.10h7" stroke="#8a6c24" stroke-width=".7" opacity=".45"/><path d="M0 119.10h7" stroke="#8a6c24" stroke-width=".7" opacity=".45"/><path d="M0 112.09h7" stroke="#8a6c24" stroke-width=".7" opacity=".45"/><path d="M0 105.08h7" stroke="#8a6c24" stroke-width=".7" opacity=".45"/><path d="M0 98.07h7" stroke="#8a6c24" stroke-width=".7" opacity=".45"/><path d="M0 91.07h7" stroke="#8a6c24" stroke-width=".7" opacity=".45"/><path d="M0 84.06h7" stroke="#8a6c24" stroke-width=".7" opacity=".45"/><path d="M0 77.05h7" stroke="#8a6c24" stroke-width=".7" opacity=".45"/><path d="M0 70.05h7" stroke="#8a6c24" stroke-width=".7" opacity=".45"/><path d="M0 63.04h7" stroke="#8a6c24" stroke-width=".7" opacity=".45"/><path d="M0 56.03h7" stroke="#8a6c24" stroke-width=".7" opacity=".45"/><path d="M0 49.03h7" stroke="#8a6c24" stroke-width=".7" opacity=".45"/><path d="M0 42.02h7" stroke="#8a6c24" stroke-width=".7" opacity=".45"/><path d="M0 35.01h7" stroke="#8a6c24" stroke-width=".7" opacity=".45"/><path d="M0 28.00h7" stroke="#8a6c24" stroke-width=".7" opacity=".45"/><path d="M0 21.00h7" stroke="#8a6c24" stroke-width=".7" opacity=".45"/><path d="M0 13.99h7" stroke="#8a6c24" stroke-width=".7" opacity=".45"/><path d="M0 6.98h7" stroke="#8a6c24" stroke-width=".7" opacity=".45"/><path d="M0 -0.02h7" stroke="#8a6c24" stroke-width=".7" opacity=".45"/><path d="M0.00 224.20000000000005v5" stroke="#9a7a28" stroke-width=".7" opacity=".6"/><path d="M13.64 224.20000000000005v3" stroke="#9a7a28" stroke-width=".7" opacity=".6"/><path d="M27.28 224.20000000000005v3" stroke="#9a7a28" stroke-width=".7" opacity=".6"/><path d="M40.91 224.20000000000005v3" stroke="#9a7a28" stroke-width=".7" opacity=".6"/><path d="M54.55 224.20000000000005v3" stroke="#9a7a28" stroke-width=".7" opacity=".6"/><path d="M68.19 224.20000000000005v3" stroke="#9a7a28" stroke-width=".7" opacity=".6"/><path d="M81.83 224.20000000000005v3" stroke="#9a7a28" stroke-width=".7" opacity=".6"/><path d="M95.46 224.20000000000005v3" stroke="#9a7a28" stroke-width=".7" opacity=".6"/><path d="M109.10 224.20000000000005v5" stroke="#9a7a28" stroke-width=".7" opacity=".6"/><path d="M122.74 224.20000000000005v3" stroke="#9a7a28" stroke-width=".7" opacity=".6"/><path d="M136.38 224.20000000000005v3" stroke="#9a7a28" stroke-width=".7" opacity=".6"/><path d="M150.01 224.20000000000005v3" stroke="#9a7a28" stroke-width=".7" opacity=".6"/><path d="M163.65 224.20000000000005v3" stroke="#9a7a28" stroke-width=".7" opacity=".6"/><path d="M177.29 224.20000000000005v3" stroke="#9a7a28" stroke-width=".7" opacity=".6"/><path d="M190.93 224.20000000000005v3" stroke="#9a7a28" stroke-width=".7" opacity=".6"/><path d="M204.56 224.20000000000005v3" stroke="#9a7a28" stroke-width=".7" opacity=".6"/><path d="M218.20 224.20000000000005v5" stroke="#9a7a28" stroke-width=".7" opacity=".6"/><path d="M231.84 224.20000000000005v3" stroke="#9a7a28" stroke-width=".7" opacity=".6"/><path d="M245.48 224.20000000000005v3" stroke="#9a7a28" stroke-width=".7" opacity=".6"/><path d="M259.11 224.20000000000005v3" stroke="#9a7a28" stroke-width=".7" opacity=".6"/><path d="M272.75 224.20000000000005v3" stroke="#9a7a28" stroke-width=".7" opacity=".6"/><path d="M286.39 224.20000000000005v3" stroke="#9a7a28" stroke-width=".7" opacity=".6"/><path d="M300.03 224.20000000000005v3" stroke="#9a7a28" stroke-width=".7" opacity=".6"/><path d="M313.66 224.20000000000005v3" stroke="#9a7a28" stroke-width=".7" opacity=".6"/><path d="M327.30 224.20000000000005v5" stroke="#9a7a28" stroke-width=".7" opacity=".6"/><path d="M340.94 224.20000000000005v3" stroke="#9a7a28" stroke-width=".7" opacity=".6"/><path d="M354.58 224.20000000000005v3" stroke="#9a7a28" stroke-width=".7" opacity=".6"/><path d="M368.21 224.20000000000005v3" stroke="#9a7a28" stroke-width=".7" opacity=".6"/><path d="M381.85 224.20000000000005v3" stroke="#9a7a28" stroke-width=".7" opacity=".6"/><path d="M395.49 224.20000000000005v3" stroke="#9a7a28" stroke-width=".7" opacity=".6"/><path d="M409.13 224.20000000000005v3" stroke="#9a7a28" stroke-width=".7" opacity=".6"/><path d="M422.76 224.20000000000005v3" stroke="#9a7a28" stroke-width=".7" opacity=".6"/><path d="M436.40 224.20000000000005v5" stroke="#9a7a28" stroke-width=".7" opacity=".6"/></svg>
<div class="t" style="top:924.90px;font-size:10.8px;color:#8f7128;line-height:16px;white-space:pre;right:809.5px;text-align:right;">0</div>
<div class="t" style="top:896.87px;font-size:10.8px;color:#8f7128;line-height:16px;white-space:pre;right:809.5px;text-align:right;">128</div>
<div class="t" style="top:868.84px;font-size:10.8px;color:#8f7128;line-height:16px;white-space:pre;right:809.5px;text-align:right;">256</div>
<div class="t" style="top:840.81px;font-size:10.8px;color:#8f7128;line-height:16px;white-space:pre;right:809.5px;text-align:right;">384</div>
<div class="t" style="top:812.78px;font-size:10.8px;color:#8f7128;line-height:16px;white-space:pre;right:809.5px;text-align:right;">512</div>
<div class="t" style="top:784.75px;font-size:10.8px;color:#8f7128;line-height:16px;white-space:pre;right:809.5px;text-align:right;">640</div>
<div class="t" style="top:756.72px;font-size:10.8px;color:#8f7128;line-height:16px;white-space:pre;right:809.5px;text-align:right;">768</div>
<div class="t" style="top:728.69px;font-size:10.8px;color:#8f7128;line-height:16px;white-space:pre;right:809.5px;text-align:right;">896</div>
<div class="t" style="top:700.66px;font-size:10.8px;color:#8f7128;line-height:16px;white-space:pre;right:809.5px;text-align:right;">1023</div>
</div></body></html>
